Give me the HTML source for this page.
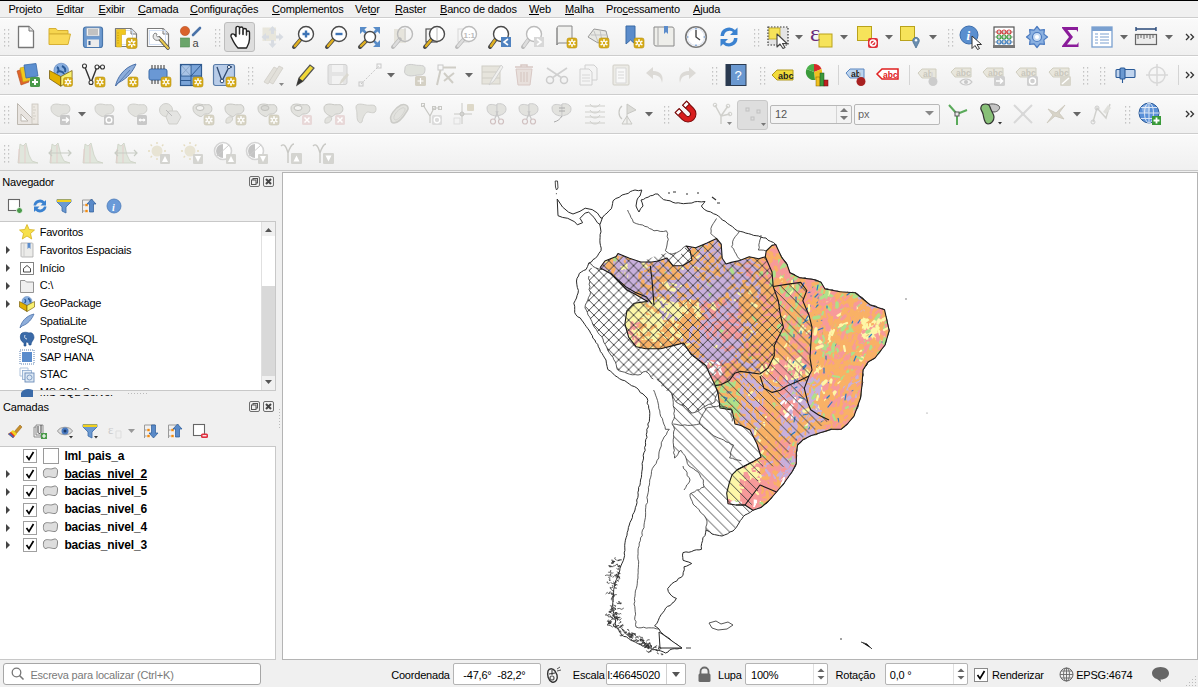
<!DOCTYPE html><html><head><meta charset="utf-8"><style>
*{box-sizing:border-box;margin:0;padding:0}
html,body{width:1198px;height:687px;overflow:hidden;background:#f0f0f0;font-family:"Liberation Sans",sans-serif;font-size:11px;color:#000}
.a{position:absolute}
.t{position:absolute;white-space:pre;line-height:13px;letter-spacing:-0.2px}
svg{position:absolute;overflow:visible}
</style></head><body><div class="a" style="left:0px;top:0px;width:1198px;height:1px;background:#000"></div>
<div class="a" style="left:0px;top:1px;width:1198px;height:16px;background:#f0f0f0"></div>
<div class="t" style="left:8.4px;top:2.5px;font-size:11px;color:#000;font-weight:normal;">Pro<u>j</u>eto</div>
<div class="t" style="left:56.5px;top:2.5px;font-size:11px;color:#000;font-weight:normal;"><u>E</u>ditar</div>
<div class="t" style="left:98.5px;top:2.5px;font-size:11px;color:#000;font-weight:normal;"><u>E</u>xibir</div>
<div class="t" style="left:138px;top:2.5px;font-size:11px;color:#000;font-weight:normal;"><u>C</u>amada</div>
<div class="t" style="left:190px;top:2.5px;font-size:11px;color:#000;font-weight:normal;"><u>C</u>onfigurações</div>
<div class="t" style="left:272px;top:2.5px;font-size:11px;color:#000;font-weight:normal;"><u>C</u>omplementos</div>
<div class="t" style="left:355px;top:2.5px;font-size:11px;color:#000;font-weight:normal;">Vet<u>o</u>r</div>
<div class="t" style="left:395px;top:2.5px;font-size:11px;color:#000;font-weight:normal;"><u>R</u>aster</div>
<div class="t" style="left:440px;top:2.5px;font-size:11px;color:#000;font-weight:normal;"><u>B</u>anco de dados</div>
<div class="t" style="left:529px;top:2.5px;font-size:11px;color:#000;font-weight:normal;"><u>W</u>eb</div>
<div class="t" style="left:565px;top:2.5px;font-size:11px;color:#000;font-weight:normal;"><u>M</u>alha</div>
<div class="t" style="left:606px;top:2.5px;font-size:11px;color:#000;font-weight:normal;">Pro<u>c</u>essamento</div>
<div class="t" style="left:693px;top:2.5px;font-size:11px;color:#000;font-weight:normal;"><u>A</u>juda</div>
<div class="a" style="left:0px;top:18px;width:1198px;height:37px;background:linear-gradient(#fafafa,#f0f0f0)"></div>
<div class="a" style="left:0px;top:17px;width:1198px;height:1px;background:#cdcdcd"></div>
<div class="a" style="left:0px;top:18px;width:1198px;height:1px;background:#fff"></div>
<div class="a" style="left:0px;top:56px;width:1198px;height:37px;background:linear-gradient(#fafafa,#f0f0f0)"></div>
<div class="a" style="left:0px;top:55px;width:1198px;height:1px;background:#cdcdcd"></div>
<div class="a" style="left:0px;top:56px;width:1198px;height:1px;background:#fff"></div>
<div class="a" style="left:0px;top:95px;width:1198px;height:37px;background:linear-gradient(#fafafa,#f0f0f0)"></div>
<div class="a" style="left:0px;top:94px;width:1198px;height:1px;background:#cdcdcd"></div>
<div class="a" style="left:0px;top:95px;width:1198px;height:1px;background:#fff"></div>
<div class="a" style="left:0px;top:134px;width:1198px;height:36px;background:linear-gradient(#fafafa,#f0f0f0)"></div>
<div class="a" style="left:0px;top:133px;width:1198px;height:1px;background:#cdcdcd"></div>
<div class="a" style="left:0px;top:134px;width:1198px;height:1px;background:#fff"></div>
<div class="a" style="left:0px;top:170px;width:1198px;height:1px;background:#c8c8c8"></div>
<div class="a" style="left:0px;top:171px;width:1198px;height:1px;background:#f0f0f0"></div>
<svg style="left:3.5px;top:28.5px" width="6" height="18"><rect x="0" y="0" width="1.2" height="1.6" fill="#c4c4c4"/><rect x="0" y="4" width="1.2" height="1.6" fill="#c4c4c4"/><rect x="0" y="8" width="1.2" height="1.6" fill="#c4c4c4"/><rect x="0" y="12" width="1.2" height="1.6" fill="#c4c4c4"/><rect x="0" y="16" width="1.2" height="1.6" fill="#c4c4c4"/><rect x="4" y="0" width="1.2" height="1.6" fill="#c4c4c4"/><rect x="4" y="4" width="1.2" height="1.6" fill="#c4c4c4"/><rect x="4" y="8" width="1.2" height="1.6" fill="#c4c4c4"/><rect x="4" y="12" width="1.2" height="1.6" fill="#c4c4c4"/><rect x="4" y="16" width="1.2" height="1.6" fill="#c4c4c4"/></svg>
<svg style="left:15.5px;top:24.5px" width="24" height="24" viewBox="0 0 24 24"><path d="M2.5 1.5H13L17.5 6V22.5H2.5Z" fill="#fff" stroke="#777" stroke-width="1.3" stroke-linejoin="round"/><path d="M13 1.5V6H17.5" fill="#e8e8e8" stroke="#777" stroke-width="1"/></svg>
<svg style="left:48.0px;top:24.5px" width="24" height="24" viewBox="0 0 24 24"><path d="M1 3.5H8L9.5 5.5H20V9H1Z" fill="#f6d54e" stroke="#d6b035" stroke-width="1"/><path d="M1 9H22.5L20 19.5H1Z" fill="#f9d957" stroke="#d6b035" stroke-width="1"/></svg>
<svg style="left:80.5px;top:24.5px" width="24" height="24" viewBox="0 0 24 24"><rect x="2.5" y="2" width="19" height="20.5" rx="2.5" fill="#6d9ad0" stroke="#4a77ac" stroke-width="1.2"/><rect x="5.5" y="3" width="13" height="8" fill="#f2f2f2" stroke="#8a9ab0" stroke-width=".5"/><path d="M7 5H17M7 7H17M7 9H17" stroke="#6a6a6a" stroke-width=".7"/><rect x="6" y="14.5" width="12" height="7.5" fill="#ececec"/><rect x="7.5" y="16" width="2" height="4" fill="#3a5f8f"/></svg>
<svg style="left:114.0px;top:24.5px" width="24" height="24" viewBox="0 0 24 24"><path d="M1.5 3.5H17L22.5 9V21.5H1.5Z" fill="#fff" stroke="#7a7a7a" stroke-width="1.2" stroke-linejoin="round"/><path d="M17 3.5V9H22.5" fill="#eee" stroke="#7a7a7a" stroke-width="1"/><rect x="3.5" y="5.5" width="15" height="14" fill="none" stroke="#c8d8f0" stroke-width=".8"/><path d="M2.5 4.5H11.5V9.5H7.5V22H2.5Z" fill="#f0c820" stroke="#d4a810" stroke-width=".6"/><path d="M3 8H5M3 10.5H5M3 13H5M3 15.5H5M3 18H5" stroke="#c89a08" stroke-width=".6"/><rect x="12.5" y="13" width="10.5" height="10.5" rx="2" fill="#d6ac18" stroke="#b89010" stroke-width="0.6"/><path d="M17.75 18.25L20.75 19.98M17.75 18.25L17.75 21.71M17.75 18.25L14.75 19.98M17.75 18.25L14.75 16.52M17.75 18.25L17.75 14.79M17.75 18.25L20.75 16.52" stroke="#fff" stroke-width="1.6" stroke-linecap="round"/><circle cx="17.75" cy="18.25" r="1.26" fill="#d6ac18"/></svg>
<svg style="left:146.0px;top:24.5px" width="24" height="24" viewBox="0 0 24 24"><path d="M1.5 3.5H17L22.5 9V21.5H1.5Z" fill="#fff" stroke="#7a7a7a" stroke-width="1.2" stroke-linejoin="round"/><path d="M17 3.5V9H22.5" fill="#eee" stroke="#7a7a7a" stroke-width="1"/><rect x="3.5" y="5.5" width="16" height="14" fill="none" stroke="#c8d8f0" stroke-width=".8"/><path d="M13 13L22 23" stroke="#444" stroke-width="3.6" stroke-linecap="round"/><path d="M13.5 13.5L22 23" stroke="#e8c850" stroke-width="2.2" stroke-linecap="round"/><path d="M9 8A4 4 0 1 0 14.5 13.5L13 11.5L11.5 12L10.5 10.5L11 9Z" fill="#e8e8e8" stroke="#888" stroke-width="1"/></svg>
<svg style="left:178.5px;top:24.5px" width="24" height="24" viewBox="0 0 24 24"><circle cx="6" cy="6" r="4.6" fill="#d9622b" stroke="#b54a1a" stroke-width=".6"/><path d="M14 10L21 3" stroke="#4a72a8" stroke-width="2.6" stroke-linecap="round"/><rect x="1.5" y="13" width="9" height="9" fill="#6aa56a" stroke="#4d874d" stroke-width=".6"/><text x="13.5" y="22" font-size="11" font-family="Liberation Sans" fill="#444">a</text></svg>
<svg style="left:215px;top:28.5px" width="6" height="18"><rect x="0" y="0" width="1.2" height="1.6" fill="#c4c4c4"/><rect x="0" y="4" width="1.2" height="1.6" fill="#c4c4c4"/><rect x="0" y="8" width="1.2" height="1.6" fill="#c4c4c4"/><rect x="0" y="12" width="1.2" height="1.6" fill="#c4c4c4"/><rect x="0" y="16" width="1.2" height="1.6" fill="#c4c4c4"/><rect x="4" y="0" width="1.2" height="1.6" fill="#c4c4c4"/><rect x="4" y="4" width="1.2" height="1.6" fill="#c4c4c4"/><rect x="4" y="8" width="1.2" height="1.6" fill="#c4c4c4"/><rect x="4" y="12" width="1.2" height="1.6" fill="#c4c4c4"/><rect x="4" y="16" width="1.2" height="1.6" fill="#c4c4c4"/></svg>
<div class="a" style="left:224px;top:22px;width:31px;height:30px;background:#dedede;border:1px solid #bdbdbd;border-radius:3px"></div>
<svg style="left:227.5px;top:24.5px" width="24" height="24" viewBox="0 0 24 24"><path d="M10 23C8 21 5 16 3 11.5C2.5 9.5 4.5 8 6.5 9.5L8 11.5V3C8 0.8 11.5 0.8 11.5 3V9V3.5C11.5 1.5 15 1.5 15 3.5V9.5V5C15 3 18.5 3 18.5 5V10V7.5C18.5 5.5 21.5 5.5 21.5 7.5V14C21.5 18 19.5 21 18.5 23Z" fill="#fff" stroke="#222" stroke-width="1.4" stroke-linejoin="round"/><path d="M11.5 9V4M15 9.5V5M18.5 10V7.5" stroke="#333" stroke-width="1.1"/></svg>
<svg style="left:259.5px;top:24.5px" width="24" height="24" viewBox="0 0 24 24"><rect x="2.5" y="2.5" width="13.5" height="13.5" fill="#e8e6dc"/><path d="M12.5 1L16.5 5.5H14V9H11V5.5H8.5Z M12.5 23L16.5 18.5H14V15H11V18.5H8.5Z M1.5 12L6 8V10.5H9V13.5H6V16Z M23.5 12L19 8V10.5H16V13.5H19V16Z" fill="#d8dce2"/></svg>
<svg style="left:292.0px;top:24.5px" width="24" height="24" viewBox="0 0 24 24"><path d="M8.75 14.25L2 22" stroke="#4a4a4a" stroke-width="4" stroke-linecap="round"/><path d="M7.75 15.25L3 21" stroke="#e0b020" stroke-width="2.4" stroke-linecap="round"/><circle cx="14" cy="9" r="7.5" fill="#fff" stroke="#4a4a4a" stroke-width="1.4"/><path d="M10.5 9H17.5M14 5.5V12.5" stroke="#3e74b6" stroke-width="2.4"/></svg>
<svg style="left:325.0px;top:24.5px" width="24" height="24" viewBox="0 0 24 24"><path d="M8.75 14.25L2 22" stroke="#4a4a4a" stroke-width="4" stroke-linecap="round"/><path d="M7.75 15.25L3 21" stroke="#e0b020" stroke-width="2.4" stroke-linecap="round"/><circle cx="14" cy="9" r="7.5" fill="#fff" stroke="#4a4a4a" stroke-width="1.4"/><path d="M10.5 9H17.5" stroke="#3e74b6" stroke-width="2.4"/></svg>
<svg style="left:358.0px;top:24.5px" width="24" height="24" viewBox="0 0 24 24"><path d="M2 2H9L2 9Z M22 2H15L22 9Z M22 22H15L22 15Z" fill="#5a8dc8"/><path d="M3 3L8 8M21 3L16 8M21 21L16 16" stroke="#5a8dc8" stroke-width="2.5"/><path d="M8.15 15.85L2 22" stroke="#4a4a4a" stroke-width="4" stroke-linecap="round"/><path d="M7.15 16.85L3 21" stroke="#e0b020" stroke-width="2.4" stroke-linecap="round"/><circle cx="12" cy="12" r="5.5" fill="#fff" stroke="#4a4a4a" stroke-width="1.4"/></svg>
<svg style="left:390.5px;top:24.5px" width="24" height="24" viewBox="0 0 24 24"><rect x="3" y="4" width="12" height="14" fill="#e6e4dc"/><path d="M8.75 14.25L2 22" stroke="#bbb" stroke-width="4" stroke-linecap="round"/><path d="M7.75 15.25L3 21" stroke="#ddd" stroke-width="2.4" stroke-linecap="round"/><circle cx="14" cy="9" r="7.5" fill="none" stroke="#bbb" stroke-width="1.4"/><path d="M14 3V15" stroke="#ccc" stroke-width="1"/></svg>
<svg style="left:423.0px;top:24.5px" width="24" height="24" viewBox="0 0 24 24"><rect x="3" y="4" width="11" height="13" fill="none" stroke="#555" stroke-width="1.2"/><path d="M8.75 14.25L2 22" stroke="#4a4a4a" stroke-width="4" stroke-linecap="round"/><path d="M7.75 15.25L3 21" stroke="#e0b020" stroke-width="2.4" stroke-linecap="round"/><circle cx="14" cy="9" r="7.5" fill="#fff" stroke="#4a4a4a" stroke-width="1.4"/><path d="M14 3V15" stroke="#bbb" stroke-width="1"/></svg>
<svg style="left:455.0px;top:24.5px" width="24" height="24" viewBox="0 0 24 24"><rect x="3" y="4" width="11" height="13" fill="none" stroke="#ddd" stroke-width="1.2"/><path d="M8.75 14.25L2 22" stroke="#bbb" stroke-width="4" stroke-linecap="round"/><path d="M7.75 15.25L3 21" stroke="#ddd" stroke-width="2.4" stroke-linecap="round"/><circle cx="14" cy="9" r="7.5" fill="#fff" stroke="#bbb" stroke-width="1.4"/><text x="8.5" y="12.5" font-size="8" font-family="Liberation Sans" font-weight="bold" fill="#bbb">1:1</text></svg>
<svg style="left:488.0px;top:24.5px" width="24" height="24" viewBox="0 0 24 24"><path d="M7.75 14.25L2 22" stroke="#4a4a4a" stroke-width="4" stroke-linecap="round"/><path d="M6.75 15.25L3 21" stroke="#e0b020" stroke-width="2.4" stroke-linecap="round"/><circle cx="13" cy="9" r="7.5" fill="#fff" stroke="#4a4a4a" stroke-width="1.4"/><rect x="13" y="12" width="10" height="10" fill="#4f82c0"/><path d="M20 14L16 17L20 20" fill="none" stroke="#fff" stroke-width="1.6"/></svg>
<svg style="left:521.0px;top:24.5px" width="24" height="24" viewBox="0 0 24 24"><path d="M7.75 14.25L2 22" stroke="#bbb" stroke-width="4" stroke-linecap="round"/><path d="M6.75 15.25L3 21" stroke="#ddd" stroke-width="2.4" stroke-linecap="round"/><circle cx="13" cy="9" r="7.5" fill="#fff" stroke="#bbb" stroke-width="1.4"/><rect x="13" y="12" width="10" height="10" fill="#d8d8d8"/><path d="M16 14L20 17L16 20" fill="none" stroke="#fff" stroke-width="1.6"/></svg>
<svg style="left:554.0px;top:24.5px" width="24" height="24" viewBox="0 0 24 24"><path d="M3 3C3 1 5 1 5 1H18V18H5C3 18 3 20 3 20Z" fill="#f0f0ee" stroke="#888" stroke-width="1"/><path d="M3 3V20" stroke="#888"/><rect x="13" y="13" width="10" height="10" rx="2" fill="#d6ac18" stroke="#b89010" stroke-width="0.6"/><path d="M18.00 18.00L20.86 19.65M18.00 18.00L18.00 21.30M18.00 18.00L15.14 19.65M18.00 18.00L15.14 16.35M18.00 18.00L18.00 14.70M18.00 18.00L20.86 16.35" stroke="#fff" stroke-width="1.6" stroke-linecap="round"/><circle cx="18.0" cy="18.0" r="1.20" fill="#d6ac18"/></svg>
<svg style="left:586.0px;top:24.5px" width="24" height="24" viewBox="0 0 24 24"><path d="M2 12L8 4L20 6L22 14L12 18Z" fill="#e8e8e4" stroke="#999" stroke-width="1"/><path d="M5 10L20 10M8 6L12 17M14 5L16 16" stroke="#bbb" stroke-width=".8"/><rect x="13" y="13" width="10" height="10" rx="2" fill="#d6ac18" stroke="#b89010" stroke-width="0.6"/><path d="M18.00 18.00L20.86 19.65M18.00 18.00L18.00 21.30M18.00 18.00L15.14 19.65M18.00 18.00L15.14 16.35M18.00 18.00L18.00 14.70M18.00 18.00L20.86 16.35" stroke="#fff" stroke-width="1.6" stroke-linecap="round"/><circle cx="18.0" cy="18.0" r="1.20" fill="#d6ac18"/></svg>
<svg style="left:622.0px;top:24.5px" width="24" height="24" viewBox="0 0 24 24"><path d="M4 1H13V19L8.5 15L4 19Z" fill="#5b8ccb" stroke="#3b6aa5" stroke-width="1"/><rect x="12" y="13" width="10" height="10" rx="2" fill="#d6ac18" stroke="#b89010" stroke-width="0.6"/><path d="M17.00 18.00L19.86 19.65M17.00 18.00L17.00 21.30M17.00 18.00L14.14 19.65M17.00 18.00L14.14 16.35M17.00 18.00L17.00 14.70M17.00 18.00L19.86 16.35" stroke="#fff" stroke-width="1.6" stroke-linecap="round"/><circle cx="17.0" cy="18.0" r="1.20" fill="#d6ac18"/></svg>
<svg style="left:652.0px;top:24.5px" width="24" height="24" viewBox="0 0 24 24"><path d="M2 2H20C22 2 22 4 22 4V21H4C2 21 2 19 2 19Z" fill="#eeeeea" stroke="#888" stroke-width="1"/><path d="M6 2V20" stroke="#aaa" stroke-width="1"/><path d="M12 1H16V9L14 7L12 9Z" fill="#5b8ccb"/></svg>
<svg style="left:684.0px;top:24.5px" width="24" height="24" viewBox="0 0 24 24"><circle cx="12" cy="12" r="10.3" fill="#fff" stroke="#7a7a7a" stroke-width="1.6"/><circle cx="12" cy="12" r="8.5" fill="none" stroke="#d0d8e8" stroke-width=".8"/><path d="M12 5V12L16 15" fill="none" stroke="#444" stroke-width="1.4"/><path d="M12 3V4.5M12 19.5V21M3 12H4.5M19.5 12H21" stroke="#5a8dc8" stroke-width="1.2"/></svg>
<svg style="left:717.0px;top:24.5px" width="24" height="24" viewBox="0 0 24 24"><path d="M3.5 11A8.5 8.5 0 0 1 18 5L20.5 2.5V10H13L16 7A5.5 5.5 0 0 0 7 11Z" fill="#3b82d0"/><path d="M20.5 13A8.5 8.5 0 0 1 6 19L3.5 21.5V14H11L8 17A5.5 5.5 0 0 0 17 13Z" fill="#3b82d0"/></svg>
<svg style="left:754px;top:28.5px" width="6" height="18"><rect x="0" y="0" width="1.2" height="1.6" fill="#c4c4c4"/><rect x="0" y="4" width="1.2" height="1.6" fill="#c4c4c4"/><rect x="0" y="8" width="1.2" height="1.6" fill="#c4c4c4"/><rect x="0" y="12" width="1.2" height="1.6" fill="#c4c4c4"/><rect x="0" y="16" width="1.2" height="1.6" fill="#c4c4c4"/><rect x="4" y="0" width="1.2" height="1.6" fill="#c4c4c4"/><rect x="4" y="4" width="1.2" height="1.6" fill="#c4c4c4"/><rect x="4" y="8" width="1.2" height="1.6" fill="#c4c4c4"/><rect x="4" y="12" width="1.2" height="1.6" fill="#c4c4c4"/><rect x="4" y="16" width="1.2" height="1.6" fill="#c4c4c4"/></svg>
<svg style="left:766.0px;top:24.5px" width="24" height="24" viewBox="0 0 24 24"><rect x="2" y="2" width="20" height="18" fill="#e4e4e4" stroke="#333" stroke-width="1.2" stroke-dasharray="1.5 1.5"/><rect x="3" y="3" width="11" height="11" fill="#f6e35a" stroke="#b9a21b" stroke-width=".8"/><path d="M11 9L11 22L14 19L17 23.5L19 22.5L16.5 18.5H21Z" fill="#fff" stroke="#444" stroke-width="1.1" stroke-linejoin="round"/></svg>
<svg style="left:795px;top:34.5px" width="8" height="5"><path d="M0 0H8L4 4.5Z" fill="#666"/></svg>
<svg style="left:810.0px;top:24.5px" width="24" height="24" viewBox="0 0 24 24"><rect x="9" y="9" width="13" height="13" fill="#f6e35a" stroke="#b9a21b" stroke-width="1"/><text x="0" y="15.5" font-size="24" font-family="Liberation Serif" fill="#6a2e7a">&#949;</text></svg>
<svg style="left:840px;top:34.5px" width="8" height="5"><path d="M0 0H8L4 4.5Z" fill="#666"/></svg>
<svg style="left:856.0px;top:24.5px" width="24" height="24" viewBox="0 0 24 24"><rect x="1.5" y="1.5" width="14" height="14" fill="#f6e35a" stroke="#b9a21b" stroke-width="1"/><rect x="12" y="13" width="10" height="10" rx="2" fill="#e0303a"/><circle cx="17" cy="18" r="3" fill="none" stroke="#fff" stroke-width="1.3"/><path d="M15 20L19 16" stroke="#fff" stroke-width="1.3"/></svg>
<svg style="left:885px;top:34.5px" width="8" height="5"><path d="M0 0H8L4 4.5Z" fill="#666"/></svg>
<svg style="left:899.0px;top:24.5px" width="24" height="24" viewBox="0 0 24 24"><rect x="1.5" y="1.5" width="14" height="14" fill="#f6e35a" stroke="#b9a21b" stroke-width="1"/><path d="M17 23L14 17A3.3 3.3 0 1 1 20 17Z" fill="#6a8eb0" stroke="#4a6e90" stroke-width=".8"/><circle cx="17" cy="15.3" r="1.2" fill="#fff"/></svg>
<svg style="left:929px;top:34.5px" width="8" height="5"><path d="M0 0H8L4 4.5Z" fill="#666"/></svg>
<svg style="left:947.5px;top:28.5px" width="6" height="18"><rect x="0" y="0" width="1.2" height="1.6" fill="#c4c4c4"/><rect x="0" y="4" width="1.2" height="1.6" fill="#c4c4c4"/><rect x="0" y="8" width="1.2" height="1.6" fill="#c4c4c4"/><rect x="0" y="12" width="1.2" height="1.6" fill="#c4c4c4"/><rect x="0" y="16" width="1.2" height="1.6" fill="#c4c4c4"/><rect x="4" y="0" width="1.2" height="1.6" fill="#c4c4c4"/><rect x="4" y="4" width="1.2" height="1.6" fill="#c4c4c4"/><rect x="4" y="8" width="1.2" height="1.6" fill="#c4c4c4"/><rect x="4" y="12" width="1.2" height="1.6" fill="#c4c4c4"/><rect x="4" y="16" width="1.2" height="1.6" fill="#c4c4c4"/></svg>
<svg style="left:959.0px;top:24.5px" width="24" height="24" viewBox="0 0 24 24"><circle cx="10" cy="10" r="9" fill="#5a8fcf" stroke="#3b6cab" stroke-width="1"/><text x="7.5" y="15" font-size="13" font-family="Liberation Serif" font-style="italic" font-weight="bold" fill="#fff">i</text><path d="M13 11V23.5L16 20.5L18.5 24.5L20.5 23.5L18 19.5H22.5Z" fill="#fff" stroke="#333" stroke-width="1" stroke-linejoin="round"/></svg>
<svg style="left:992.0px;top:24.5px" width="24" height="24" viewBox="0 0 24 24"><rect x="2" y="2" width="20" height="19" fill="#fff" stroke="#555" stroke-width="1.2"/><rect x="1" y="20" width="22" height="3" fill="#777"/><path d="M2 7H22M2 12H22M2 17H22" stroke="#888" stroke-width=".8"/><circle cx="7" cy="7" r="2" fill="none" stroke="#d04040" stroke-width="1.2"/><circle cx="12" cy="7" r="2" fill="none" stroke="#d04040" stroke-width="1.2"/><circle cx="17" cy="7" r="2" fill="none" stroke="#d04040" stroke-width="1.2"/><circle cx="7" cy="12" r="2" fill="none" stroke="#40a040" stroke-width="1.2"/><circle cx="12" cy="12" r="2" fill="none" stroke="#40a040" stroke-width="1.2"/><circle cx="17" cy="12" r="2" fill="none" stroke="#40a040" stroke-width="1.2"/><circle cx="7" cy="17" r="2" fill="none" stroke="#4080c0" stroke-width="1.2"/><circle cx="12" cy="17" r="2" fill="none" stroke="#4080c0" stroke-width="1.2"/><circle cx="17" cy="17" r="2" fill="none" stroke="#4080c0" stroke-width="1.2"/></svg>
<svg style="left:1025.0px;top:24.5px" width="24" height="24" viewBox="0 0 24 24"><path d="M12.0 1.5 L14.9 5.1 L19.4 4.6 L18.9 9.1 L22.5 12.0 L18.9 14.9 L19.4 19.4 L14.9 18.9 L12.0 22.5 L9.1 18.9 L4.6 19.4 L5.1 14.9 L1.5 12.0 L5.1 9.1 L4.6 4.6 L9.1 5.1Z" fill="#8ab0e0" stroke="#4a7ac0" stroke-width="1.2" stroke-linejoin="round"/><circle cx="12" cy="12" r="4.5" fill="#c8dcf4" stroke="#4a7ac0" stroke-width="1.2"/><circle cx="12" cy="12" r="2" fill="#fff"/></svg>
<svg style="left:1057.5px;top:24.5px" width="24" height="24" viewBox="0 0 24 24"><path d="M4 2H20V7L18.5 5H9.5L15 12L9 19.5H19L20.5 17V22H4V21L11 12L4 3Z" fill="#8a1c9a"/></svg>
<svg style="left:1090.0px;top:24.5px" width="24" height="24" viewBox="0 0 24 24"><rect x="2" y="2" width="20" height="20" fill="#fff" stroke="#7aa0d0" stroke-width="1.3"/><rect x="2" y="2" width="20" height="4" fill="#7aa0d0"/><path d="M5 9H8M10 9H19M5 12H8M10 12H19M5 15H8M10 15H19M5 18H8M10 18H19" stroke="#7aa0d0" stroke-width="1.2"/></svg>
<svg style="left:1120px;top:34.5px" width="8" height="5"><path d="M0 0H8L4 4.5Z" fill="#666"/></svg>
<svg style="left:1134.0px;top:24.5px" width="24" height="24" viewBox="0 0 24 24"><path d="M2 4H22M2 2V6M22 2V6" stroke="#2a4a7a" stroke-width="1.4"/><rect x="1.5" y="9.5" width="21" height="10" fill="#ececec" stroke="#666" stroke-width="1.2"/><path d="M4 10V14M7 10V13M10 10V14M13 10V13M16 10V14M19 10V13" stroke="#666" stroke-width="1"/></svg>
<svg style="left:1165px;top:34.5px" width="8" height="5"><path d="M0 0H8L4 4.5Z" fill="#666"/></svg>
<svg style="left:1184.5px;top:32.5px" width="10" height="8"><path d="M1 1L4 4L1 7M5.5 1L8.5 4L5.5 7" fill="none" stroke="#333" stroke-width="1.3"/></svg>
<svg style="left:3.5px;top:67px" width="6" height="18"><rect x="0" y="0" width="1.2" height="1.6" fill="#c4c4c4"/><rect x="0" y="4" width="1.2" height="1.6" fill="#c4c4c4"/><rect x="0" y="8" width="1.2" height="1.6" fill="#c4c4c4"/><rect x="0" y="12" width="1.2" height="1.6" fill="#c4c4c4"/><rect x="0" y="16" width="1.2" height="1.6" fill="#c4c4c4"/><rect x="4" y="0" width="1.2" height="1.6" fill="#c4c4c4"/><rect x="4" y="4" width="1.2" height="1.6" fill="#c4c4c4"/><rect x="4" y="8" width="1.2" height="1.6" fill="#c4c4c4"/><rect x="4" y="12" width="1.2" height="1.6" fill="#c4c4c4"/><rect x="4" y="16" width="1.2" height="1.6" fill="#c4c4c4"/></svg>
<svg style="left:16.0px;top:63.0px" width="24" height="24" viewBox="0 0 24 24"><path d="M1 8L9 5L13 19L5 22Z" fill="#e0642a" stroke="#b04a1a" stroke-width=".6"/><path d="M4 5L12 3L15 17L7 19Z" fill="#f2c81e" stroke="#c09a10" stroke-width=".6"/><path d="M8 2L20 0.5L22 13L10 15Z" fill="#5c8fd0" stroke="#3a6aa8" stroke-width=".8"/><rect x="14" y="14" width="10" height="10" rx="1.5" fill="#4a9a4a"/><path d="M19 16V22M16 19H22" stroke="#fff" stroke-width="2"/></svg>
<svg style="left:48.5px;top:63.0px" width="24" height="24" viewBox="0 0 24 24"><circle cx="12.2" cy="7.5" r="7.3" fill="#8ab0e0" stroke="#5a80b8" stroke-width=".6"/><path d="M8 4C10 5 10 8 8 10M13 3C15 4 17 6 16 9M10 8C12 9 14 8 15 11" stroke="#2a5a98" stroke-width="2" fill="none"/><path d="M0.5 7.5L11.8 13.6V23.2L0.5 15.8Z" fill="#e2b000" stroke="#6a5000" stroke-width=".7"/><path d="M11.8 13.6L23.1 7.5V15.8L11.8 23.2Z" fill="#f8f070" stroke="#6a5000" stroke-width=".7"/><rect x="14.5" y="14.5" width="9" height="9" rx="2" fill="#d6ac18" stroke="#b89010" stroke-width="0.6"/><path d="M19.00 19.00L21.57 20.48M19.00 19.00L19.00 21.97M19.00 19.00L16.43 20.48M19.00 19.00L16.43 17.52M19.00 19.00L19.00 16.03M19.00 19.00L21.57 17.51" stroke="#fff" stroke-width="1.6" stroke-linecap="round"/><circle cx="19.0" cy="19.0" r="1.08" fill="#d6ac18"/></svg>
<svg style="left:81.0px;top:63.0px" width="24" height="24" viewBox="0 0 24 24"><path d="M3.5 3L10 19.5L16 4H21" fill="none" stroke="#333" stroke-width="1.4"/><circle cx="3.5" cy="3" r="2" fill="#fff" stroke="#333" stroke-width="1.1"/><circle cx="10" cy="19.5" r="2" fill="#fff" stroke="#333" stroke-width="1.1"/><circle cx="16" cy="4" r="2" fill="#fff" stroke="#333" stroke-width="1.1"/><circle cx="21.5" cy="4" r="2" fill="#fff" stroke="#333" stroke-width="1.1"/><rect x="14" y="14" width="10" height="10" rx="2" fill="#d6ac18" stroke="#b89010" stroke-width="0.6"/><path d="M19.00 19.00L21.86 20.65M19.00 19.00L19.00 22.30M19.00 19.00L16.14 20.65M19.00 19.00L16.14 17.35M19.00 19.00L19.00 15.70M19.00 19.00L21.86 17.35" stroke="#fff" stroke-width="1.6" stroke-linecap="round"/><circle cx="19.0" cy="19.0" r="1.20" fill="#d6ac18"/></svg>
<svg style="left:113.5px;top:63.0px" width="24" height="24" viewBox="0 0 24 24"><path d="M1.5 23C3 15 10 4 22 1C19 8 14 15 4 20Z" fill="#8eaedb" stroke="#4a70a8" stroke-width="1"/><path d="M1.5 23L16 7" stroke="#4a70a8" stroke-width=".8"/><rect x="14" y="14" width="10" height="10" rx="2" fill="#d6ac18" stroke="#b89010" stroke-width="0.6"/><path d="M19.00 19.00L21.86 20.65M19.00 19.00L19.00 22.30M19.00 19.00L16.14 20.65M19.00 19.00L16.14 17.35M19.00 19.00L19.00 15.70M19.00 19.00L21.86 17.35" stroke="#fff" stroke-width="1.6" stroke-linecap="round"/><circle cx="19.0" cy="19.0" r="1.20" fill="#d6ac18"/></svg>
<svg style="left:146.5px;top:63.0px" width="24" height="24" viewBox="0 0 24 24"><rect x="2" y="6" width="18" height="11" rx="2" fill="#6a98d4" stroke="#3a6aa8" stroke-width="1"/><path d="M5 2V6M8 2V6M11 2V6M14 2V6M17 2V6M5 17V21M8 17V21M11 17V21" stroke="#333" stroke-width="1"/><rect x="14" y="14" width="10" height="10" rx="2" fill="#d6ac18" stroke="#b89010" stroke-width="0.6"/><path d="M19.00 19.00L21.86 20.65M19.00 19.00L19.00 22.30M19.00 19.00L16.14 20.65M19.00 19.00L16.14 17.35M19.00 19.00L19.00 15.70M19.00 19.00L21.86 17.35" stroke="#fff" stroke-width="1.6" stroke-linecap="round"/><circle cx="19.0" cy="19.0" r="1.20" fill="#d6ac18"/></svg>
<svg style="left:179.0px;top:63.0px" width="24" height="24" viewBox="0 0 24 24"><rect x="1.5" y="1.5" width="21" height="21" fill="#7aa4d8" stroke="#2f5a90" stroke-width="1.2"/><path d="M1.5 13H22.5M12 1.5V22.5M1.5 17.5H12M1.5 1.5L12 13M12 1.5L1.5 13M12 13L22.5 1.5" stroke="#2f5a90" stroke-width="1"/><rect x="2.5" y="2.5" width="9" height="10" fill="#c8daf0" opacity=".6"/><rect x="14" y="14" width="10" height="10" rx="2" fill="#d6ac18" stroke="#b89010" stroke-width="0.6"/><path d="M19.00 19.00L21.86 20.65M19.00 19.00L19.00 22.30M19.00 19.00L16.14 20.65M19.00 19.00L16.14 17.35M19.00 19.00L19.00 15.70M19.00 19.00L21.86 17.35" stroke="#fff" stroke-width="1.6" stroke-linecap="round"/><circle cx="19.0" cy="19.0" r="1.20" fill="#d6ac18"/></svg>
<svg style="left:211.5px;top:63.0px" width="24" height="24" viewBox="0 0 24 24"><rect x="1.5" y="1.5" width="21" height="21" rx="2" fill="#b8cce8" stroke="#5a7ca8" stroke-width="1.2"/><path d="M5 4L10 18L17 4H20" fill="none" stroke="#2f4a70" stroke-width="1.3"/><circle cx="10" cy="18" r="1.8" fill="#fff" stroke="#2f4a70"/><circle cx="17" cy="4" r="1.6" fill="#fff" stroke="#2f4a70"/><rect x="14" y="14" width="10" height="10" rx="2" fill="#d6ac18" stroke="#b89010" stroke-width="0.6"/><path d="M19.00 19.00L21.86 20.65M19.00 19.00L19.00 22.30M19.00 19.00L16.14 20.65M19.00 19.00L16.14 17.35M19.00 19.00L19.00 15.70M19.00 19.00L21.86 17.35" stroke="#fff" stroke-width="1.6" stroke-linecap="round"/><circle cx="19.0" cy="19.0" r="1.20" fill="#d6ac18"/></svg>
<svg style="left:247.5px;top:67px" width="6" height="18"><rect x="0" y="0" width="1.2" height="1.6" fill="#c4c4c4"/><rect x="0" y="4" width="1.2" height="1.6" fill="#c4c4c4"/><rect x="0" y="8" width="1.2" height="1.6" fill="#c4c4c4"/><rect x="0" y="12" width="1.2" height="1.6" fill="#c4c4c4"/><rect x="0" y="16" width="1.2" height="1.6" fill="#c4c4c4"/><rect x="4" y="0" width="1.2" height="1.6" fill="#c4c4c4"/><rect x="4" y="4" width="1.2" height="1.6" fill="#c4c4c4"/><rect x="4" y="8" width="1.2" height="1.6" fill="#c4c4c4"/><rect x="4" y="12" width="1.2" height="1.6" fill="#c4c4c4"/><rect x="4" y="16" width="1.2" height="1.6" fill="#c4c4c4"/></svg>
<svg style="left:261.5px;top:63.0px" width="24" height="24" viewBox="0 0 24 24"><path d="M2 19L12 4L16 6L6 21Z" fill="#e2e0da" stroke="#cfcdc6" stroke-width=".8"/><path d="M7 19L17 3L21 5L11 21Z" fill="#e2e0da" stroke="#cfcdc6" stroke-width=".8"/><path d="M17 20H22L19.5 23Z" fill="#888"/></svg>
<svg style="left:292.5px;top:63.0px" width="24" height="24" viewBox="0 0 24 24"><path d="M4 22L6 15L17 2L21 5L10 18Z" fill="#f0d838" stroke="#555" stroke-width="1.2"/><path d="M4 22L6 15L10 18Z" fill="#333"/></svg>
<svg style="left:325.5px;top:63.0px" width="24" height="24" viewBox="0 0 24 24"><rect x="2" y="1.5" width="19" height="20" rx="2" fill="#e4e4e4" stroke="#d0d0d0" stroke-width="1"/><rect x="6" y="2" width="11" height="7" fill="#f2f2f2"/><rect x="6" y="13" width="11" height="8" fill="#f2f2f2"/><path d="M13 22L15 17L21 10L23 12L17 19Z" fill="#dad8d0"/></svg>
<svg style="left:358.0px;top:63.0px" width="24" height="24" viewBox="0 0 24 24"><path d="M3 21L21 3" stroke="#c8c8c8" stroke-width="1" stroke-dasharray="2 1.5"/><rect x="1" y="19" width="4" height="4" fill="none" stroke="#c8c8c8"/><rect x="19" y="1" width="4" height="4" fill="none" stroke="#c8c8c8"/></svg>
<svg style="left:387px;top:73px" width="8" height="5"><path d="M0 0H8L4 4.5Z" fill="#666"/></svg>
<svg style="left:403.0px;top:63.0px" width="24" height="24" viewBox="0 0 24 24"><path d="M2 5C2 1 8 1 12 2S22 1 22 6S20 12 16 12S8 14 4 12S2 8 2 5Z" fill="#e0e2dc" stroke="#ccc" stroke-width="1"/><rect x="12" y="13" width="11" height="10" rx="1.5" fill="#d4d0c4"/><path d="M17.5 15V21M14.5 18H20.5" stroke="#fff" stroke-width="1.2"/></svg>
<svg style="left:435.0px;top:63.0px" width="24" height="24" viewBox="0 0 24 24"><rect x="3" y="2" width="5" height="5" fill="none" stroke="#c8c8c8" stroke-width="1"/><path d="M8 4.5H21M5.5 7L2 22M9 10L18 20M9 18L19 10" stroke="#cfcdc6" stroke-width="2"/></svg>
<svg style="left:465px;top:73px" width="8" height="5"><path d="M0 0H8L4 4.5Z" fill="#666"/></svg>
<svg style="left:479.5px;top:63.0px" width="24" height="24" viewBox="0 0 24 24"><rect x="2" y="3" width="18" height="18" fill="#e6e4dc" stroke="#d0cec6"/><path d="M2 9H20M2 15H20" stroke="#d0cec6"/><path d="M9 22L12 16L21 2L23 4L14 18Z" fill="#f0f0ee" stroke="#ccc" stroke-width=".8"/></svg>
<svg style="left:511.5px;top:63.0px" width="24" height="24" viewBox="0 0 24 24"><path d="M3 4H21M9 4V2H15V4" stroke="#d8c8c4" stroke-width="1.5" fill="none"/><path d="M4 6H20L18 22H6Z" fill="#e8e0dc" stroke="#d8c8c4" stroke-width="1"/><path d="M9 9V19M12 9V19M15 9V19" stroke="#d8c8c4" stroke-width="1.2"/></svg>
<svg style="left:544.5px;top:63.0px" width="24" height="24" viewBox="0 0 24 24"><circle cx="5" cy="17" r="3.5" fill="none" stroke="#ccc" stroke-width="1.5"/><circle cx="19" cy="17" r="3.5" fill="none" stroke="#ccc" stroke-width="1.5"/><path d="M7 15L22 5M17 15L2 5" stroke="#d0d0d0" stroke-width="1.6"/></svg>
<svg style="left:577.0px;top:63.0px" width="24" height="24" viewBox="0 0 24 24"><path d="M8 2H17L20 5V17H8Z" fill="#f4f4f4" stroke="#d0d0d0"/><path d="M3 6H12L15 9V22H3Z" fill="#f4f4f4" stroke="#d0d0d0"/><path d="M5 12H13M5 15H13M5 18H13" stroke="#d8d8d8"/></svg>
<svg style="left:610.0px;top:63.0px" width="24" height="24" viewBox="0 0 24 24"><rect x="3" y="2" width="16" height="20" rx="1" fill="#ecebe6" stroke="#d0cec6"/><path d="M6 5H16V20H6Z" fill="#f8f8f8" stroke="#d8d8d8"/><path d="M8 9H14M8 12H14M8 15H14" stroke="#d8d8d8"/></svg>
<svg style="left:642.5px;top:63.0px" width="24" height="24" viewBox="0 0 24 24"><path d="M10 4L3 10L10 16V12C15 12 18 14 19 20C21 13 18 8 10 8Z" fill="#dcdad6"/></svg>
<svg style="left:675.0px;top:63.0px" width="24" height="24" viewBox="0 0 24 24"><path d="M14 4L21 10L14 16V12C9 12 6 14 5 20C3 13 6 8 14 8Z" fill="#dcdad6"/></svg>
<svg style="left:711.5px;top:67px" width="6" height="18"><rect x="0" y="0" width="1.2" height="1.6" fill="#c4c4c4"/><rect x="0" y="4" width="1.2" height="1.6" fill="#c4c4c4"/><rect x="0" y="8" width="1.2" height="1.6" fill="#c4c4c4"/><rect x="0" y="12" width="1.2" height="1.6" fill="#c4c4c4"/><rect x="0" y="16" width="1.2" height="1.6" fill="#c4c4c4"/><rect x="4" y="0" width="1.2" height="1.6" fill="#c4c4c4"/><rect x="4" y="4" width="1.2" height="1.6" fill="#c4c4c4"/><rect x="4" y="8" width="1.2" height="1.6" fill="#c4c4c4"/><rect x="4" y="12" width="1.2" height="1.6" fill="#c4c4c4"/><rect x="4" y="16" width="1.2" height="1.6" fill="#c4c4c4"/></svg>
<svg style="left:724.0px;top:63.0px" width="24" height="24" viewBox="0 0 24 24"><rect x="2" y="1.5" width="20" height="21" fill="#6a98d0" stroke="#2a3a50" stroke-width="1"/><rect x="2" y="1.5" width="5" height="21" fill="#2a3a50"/><text x="10.5" y="17" font-size="13" font-family="Liberation Sans" fill="#fff">?</text></svg>
<svg style="left:760px;top:67px" width="6" height="18"><rect x="0" y="0" width="1.2" height="1.6" fill="#c4c4c4"/><rect x="0" y="4" width="1.2" height="1.6" fill="#c4c4c4"/><rect x="0" y="8" width="1.2" height="1.6" fill="#c4c4c4"/><rect x="0" y="12" width="1.2" height="1.6" fill="#c4c4c4"/><rect x="0" y="16" width="1.2" height="1.6" fill="#c4c4c4"/><rect x="4" y="0" width="1.2" height="1.6" fill="#c4c4c4"/><rect x="4" y="4" width="1.2" height="1.6" fill="#c4c4c4"/><rect x="4" y="8" width="1.2" height="1.6" fill="#c4c4c4"/><rect x="4" y="12" width="1.2" height="1.6" fill="#c4c4c4"/><rect x="4" y="16" width="1.2" height="1.6" fill="#c4c4c4"/></svg>
<svg style="left:771.0px;top:63.0px" width="24" height="24" viewBox="0 0 24 24"><path d="M1 12L6 7H22V17H6Z" fill="#f2dc3a" stroke="#b09820" stroke-width="1"/><text x="7" y="15.5" font-size="9" font-family="Liberation Sans" font-weight="bold" fill="#222">abc</text></svg>
<svg style="left:805.0px;top:63.0px" width="24" height="24" viewBox="0 0 24 24"><path d="M9 9L9 1A8 8 0 0 1 16.5 6Z" fill="#d42a2a"/><path d="M9 9L16.5 6A8 8 0 0 1 10 17Z" fill="#f0c020"/><path d="M9 9L10 17A8 8 0 0 1 1.5 6Z" fill="#3a9a3a"/><path d="M9 9L1.5 6A8 8 0 0 1 9 1Z" fill="#4ab04a"/><rect x="11" y="14" width="4" height="9" fill="#f0c020" stroke="#806000" stroke-width=".5"/><rect x="15" y="10" width="4" height="13" fill="#3a9a3a" stroke="#205020" stroke-width=".5"/><rect x="19" y="17" width="4" height="6" fill="#c02020" stroke="#601010" stroke-width=".5"/></svg>
<div class="a" style="left:837.5px;top:65px;width:1px;height:20px;background:#d4d4d4"></div>
<svg style="left:844.5px;top:63.0px" width="24" height="24" viewBox="0 0 24 24"><path d="M1 10L5 6H19V15H5Z" fill="#bcd4ee" stroke="#5a86c0" stroke-width="1"/><text x="6" y="13.5" font-size="8.5" font-family="Liberation Sans" font-weight="bold" fill="#222">ab</text><path d="M15 9V16" stroke="#ccc" stroke-width="1.5"/><circle cx="16" cy="18.5" r="4.5" fill="#a82020"/></svg>
<svg style="left:875.5px;top:63.0px" width="24" height="24" viewBox="0 0 24 24"><path d="M1 11L6 6H22V16H6Z" fill="#fff" stroke="#e02020" stroke-width="1.5"/><text x="7" y="14.5" font-size="8.5" font-family="Liberation Sans" font-weight="bold" fill="#e02020">abc</text></svg>
<div class="a" style="left:909px;top:65px;width:1px;height:20px;background:#d4d4d4"></div>
<svg style="left:917.0px;top:63.0px" width="24" height="24" viewBox="0 0 24 24"><path d="M1 10L5 6H19V15H5Z" fill="#e8e6dc" stroke="#d0cec0" stroke-width="1"/><text x="6" y="13.5" font-size="8.5" font-family="Liberation Sans" font-weight="bold" fill="#c8c6bc">ab</text><path d="M15 9V16" stroke="#ddd" stroke-width="1.5"/><circle cx="16" cy="18.5" r="4.5" fill="#ccc"/></svg>
<svg style="left:949.6px;top:63.0px" width="24" height="24" viewBox="0 0 24 24"><path d="M1 9L5 5H21V14H5Z" fill="#e8e6dc" stroke="#d0cec0" stroke-width="1"/><text x="6" y="12.5" font-size="8.5" font-family="Liberation Sans" font-weight="bold" fill="#c8c6bc">abc</text><path d="M10 19C13 15 19 15 22 19C19 23 13 23 10 19Z" fill="none" stroke="#c8c8c8" stroke-width="1.2"/><circle cx="16" cy="19" r="2" fill="#c8c8c8"/></svg>
<svg style="left:982.0px;top:63.0px" width="24" height="24" viewBox="0 0 24 24"><path d="M1 9L5 5H21V14H5Z" fill="#e8e6dc" stroke="#d0cec0" stroke-width="1"/><text x="6" y="12.5" font-size="8.5" font-family="Liberation Sans" font-weight="bold" fill="#c8c6bc">abc</text><rect x="12" y="13" width="11" height="10" rx="1.5" fill="#d0d0d0"/><path d="M14 18H20M18 15.5L20.5 18L18 20.5" stroke="#fff" stroke-width="1.5" fill="none"/></svg>
<svg style="left:1014.5px;top:63.0px" width="24" height="24" viewBox="0 0 24 24"><path d="M1 9L5 5H21V14H5Z" fill="#e8e6dc" stroke="#d0cec0" stroke-width="1"/><text x="6" y="12.5" font-size="8.5" font-family="Liberation Sans" font-weight="bold" fill="#c8c6bc">abc</text><rect x="12" y="13" width="11" height="10" rx="1.5" fill="#d0d0d0"/><circle cx="17.5" cy="18" r="3" fill="none" stroke="#fff" stroke-width="1.4"/></svg>
<svg style="left:1047.5px;top:63.0px" width="24" height="24" viewBox="0 0 24 24"><path d="M1 9L5 5H21V14H5Z" fill="#e8e6dc" stroke="#d0cec0" stroke-width="1"/><text x="6" y="12.5" font-size="8.5" font-family="Liberation Sans" font-weight="bold" fill="#c8c6bc">abc</text><rect x="12" y="13" width="11" height="10" rx="1.5" fill="#d8d6cc"/><path d="M14 21L21 15" stroke="#fff" stroke-width="1.6"/></svg>
<svg style="left:1083px;top:67px" width="6" height="18"><rect x="0" y="0" width="1.2" height="1.6" fill="#c4c4c4"/><rect x="0" y="4" width="1.2" height="1.6" fill="#c4c4c4"/><rect x="0" y="8" width="1.2" height="1.6" fill="#c4c4c4"/><rect x="0" y="12" width="1.2" height="1.6" fill="#c4c4c4"/><rect x="0" y="16" width="1.2" height="1.6" fill="#c4c4c4"/><rect x="4" y="0" width="1.2" height="1.6" fill="#c4c4c4"/><rect x="4" y="4" width="1.2" height="1.6" fill="#c4c4c4"/><rect x="4" y="8" width="1.2" height="1.6" fill="#c4c4c4"/><rect x="4" y="12" width="1.2" height="1.6" fill="#c4c4c4"/><rect x="4" y="16" width="1.2" height="1.6" fill="#c4c4c4"/></svg>
<svg style="left:1100px;top:67px" width="6" height="18"><rect x="0" y="0" width="1.2" height="1.6" fill="#c4c4c4"/><rect x="0" y="4" width="1.2" height="1.6" fill="#c4c4c4"/><rect x="0" y="8" width="1.2" height="1.6" fill="#c4c4c4"/><rect x="0" y="12" width="1.2" height="1.6" fill="#c4c4c4"/><rect x="0" y="16" width="1.2" height="1.6" fill="#c4c4c4"/><rect x="4" y="0" width="1.2" height="1.6" fill="#c4c4c4"/><rect x="4" y="4" width="1.2" height="1.6" fill="#c4c4c4"/><rect x="4" y="8" width="1.2" height="1.6" fill="#c4c4c4"/><rect x="4" y="12" width="1.2" height="1.6" fill="#c4c4c4"/><rect x="4" y="16" width="1.2" height="1.6" fill="#c4c4c4"/></svg>
<svg style="left:1113.7px;top:63.0px" width="24" height="24" viewBox="0 0 24 24"><rect x="2" y="6.5" width="19" height="8" rx="1" fill="#c0d4ee" stroke="#2a5a98" stroke-width="1.1"/><rect x="6" y="5" width="5" height="11" rx="1" fill="#6a98d0" stroke="#2a5a98" stroke-width="1.1"/><path d="M8.5 16V20" stroke="#2a5a98" stroke-width="1.1"/></svg>
<svg style="left:1145.0px;top:63.0px" width="24" height="24" viewBox="0 0 24 24"><circle cx="12" cy="12" r="8" fill="none" stroke="#d8d8d8" stroke-width="1.5"/><path d="M12 1V23M1 12H23" stroke="#d8d8d8" stroke-width="1.5"/></svg>
<div class="a" style="left:1177.8px;top:65px;width:1px;height:20px;background:#d4d4d4"></div>
<svg style="left:1185px;top:71px" width="10" height="8"><path d="M1 1L4 4L1 7M5.5 1L8.5 4L5.5 7" fill="none" stroke="#333" stroke-width="1.3"/></svg>
<svg style="left:3.5px;top:106px" width="6" height="18"><rect x="0" y="0" width="1.2" height="1.6" fill="#c4c4c4"/><rect x="0" y="4" width="1.2" height="1.6" fill="#c4c4c4"/><rect x="0" y="8" width="1.2" height="1.6" fill="#c4c4c4"/><rect x="0" y="12" width="1.2" height="1.6" fill="#c4c4c4"/><rect x="0" y="16" width="1.2" height="1.6" fill="#c4c4c4"/><rect x="4" y="0" width="1.2" height="1.6" fill="#c4c4c4"/><rect x="4" y="4" width="1.2" height="1.6" fill="#c4c4c4"/><rect x="4" y="8" width="1.2" height="1.6" fill="#c4c4c4"/><rect x="4" y="12" width="1.2" height="1.6" fill="#c4c4c4"/><rect x="4" y="16" width="1.2" height="1.6" fill="#c4c4c4"/></svg>
<svg style="left:15.5px;top:102.0px" width="24" height="24" viewBox="0 0 24 24"><path d="M1.5 1.5V22.5H22.5Z" fill="#e8e4e0" stroke="#bdb8b0" stroke-width="1"/><path d="M5 12V19H12Z" fill="#fafafa" stroke="#bdb8b0" stroke-width="1"/><rect x="16" y="2" width="6" height="20" fill="#ece8e2" stroke="#c8c4bc" stroke-width=".8"/><path d="M17 5H19M17 8H20M17 11H19M17 14H20M17 17H19" stroke="#c8c4bc" stroke-width=".7"/></svg>
<svg style="left:48.7px;top:102.0px" width="24" height="24" viewBox="0 0 24 24"><path d="M2 6C2 2 7 1.5 11 2.5S19 1 20.5 5S19 12 15 12S12 16 8 14S2 10 2 6Z" fill="#e2e2de" stroke="#d0d0cc" stroke-width="1"/><rect x="11" y="13" width="10" height="10" rx="1.5" fill="#c8c8c8"/><path d="M13 18H19M17 15.5L19.5 18L17 20.5" stroke="#fff" stroke-width="1.6" fill="none"/></svg>
<svg style="left:78px;top:112px" width="8" height="5"><path d="M0 0H8L4 4.5Z" fill="#666"/></svg>
<svg style="left:93.0px;top:102.0px" width="24" height="24" viewBox="0 0 24 24"><path d="M2 6C2 2 7 1.5 11 2.5S19 1 20.5 5S19 12 15 12S12 16 8 14S2 10 2 6Z" fill="#e2e2de" stroke="#d0d0cc" stroke-width="1"/><rect x="11" y="13" width="10" height="10" rx="1.5" fill="#c8c8c8"/><circle cx="16" cy="18" r="2.8" fill="none" stroke="#fff" stroke-width="1.4"/></svg>
<svg style="left:126.0px;top:102.0px" width="24" height="24" viewBox="0 0 24 24"><path d="M2 6C2 2 7 1.5 11 2.5S19 1 20.5 5S19 12 15 12S12 16 8 14S2 10 2 6Z" fill="#e2e2de" stroke="#d0d0cc" stroke-width="1"/><rect x="11" y="13" width="10" height="10" rx="1.5" fill="#c8c8c8"/><path d="M13 18H19" stroke="#fff" stroke-width="1.6"/><path d="M12.5 18L14.5 16V20ZM19.5 18L17.5 16V20Z" fill="#fff"/></svg>
<svg style="left:158.3px;top:102.0px" width="24" height="24" viewBox="0 0 24 24"><circle cx="8" cy="8" r="6.5" fill="#e2e2de" stroke="#d0d0cc"/><path d="M11 9L19 9L23 15L19 22H11L8 15Z" fill="#e4e4e2" stroke="#cfcfcb"/><path d="M8 8L14 14" stroke="#bbb" stroke-width="1"/></svg>
<svg style="left:191.0px;top:102.0px" width="24" height="24" viewBox="0 0 24 24"><path d="M2 6C2 2 7 1.5 11 2.5S19 1 20.5 5S19 12 15 12S12 16 8 14S2 10 2 6Z" fill="#e2e2de" stroke="#c8c8c4" stroke-width="1"/><ellipse cx="9" cy="6" rx="4" ry="2.5" fill="#f4f4f2" stroke="#c0c0bc"/><rect x="13" y="13" width="10" height="10" rx="2" fill="#d8d4c4" stroke="#c8c4b4" stroke-width="0.6"/><path d="M18.00 18.00L20.86 19.65M18.00 18.00L18.00 21.30M18.00 18.00L15.14 19.65M18.00 18.00L15.14 16.35M18.00 18.00L18.00 14.70M18.00 18.00L20.86 16.35" stroke="#fff" stroke-width="1.6" stroke-linecap="round"/><circle cx="18.0" cy="18.0" r="1.20" fill="#d8d4c4"/></svg>
<svg style="left:223.3px;top:102.0px" width="24" height="24" viewBox="0 0 24 24"><path d="M2 6C2 2 7 1.5 11 2.5S19 1 20.5 5S19 12 15 12S12 16 8 14S2 10 2 6Z" fill="#e2e2de" stroke="#c8c8c4" stroke-width="1"/><path d="M3 21C2 16 6 14 9 15C11 17 8 22 3 21Z" fill="#e2e2de" stroke="#d0d0cc"/><rect x="13" y="13" width="10" height="10" rx="2" fill="#d8d4c4" stroke="#c8c4b4" stroke-width="0.6"/><path d="M18.00 18.00L20.86 19.65M18.00 18.00L18.00 21.30M18.00 18.00L15.14 19.65M18.00 18.00L15.14 16.35M18.00 18.00L18.00 14.70M18.00 18.00L20.86 16.35" stroke="#fff" stroke-width="1.6" stroke-linecap="round"/><circle cx="18.0" cy="18.0" r="1.20" fill="#d8d4c4"/></svg>
<svg style="left:256.4px;top:102.0px" width="24" height="24" viewBox="0 0 24 24"><path d="M2 6C2 2 7 1.5 11 2.5S19 1 20.5 5S19 12 15 12S12 16 8 14S2 10 2 6Z" fill="#e2e2de" stroke="#c8c8c4" stroke-width="1"/><ellipse cx="9" cy="6" rx="4" ry="2.5" fill="#d8d8d4" stroke="#c0c0bc"/><rect x="13" y="13" width="10" height="10" rx="2" fill="#d8d4c4" stroke="#c8c4b4" stroke-width="0.6"/><path d="M18.00 18.00L20.86 19.65M18.00 18.00L18.00 21.30M18.00 18.00L15.14 19.65M18.00 18.00L15.14 16.35M18.00 18.00L18.00 14.70M18.00 18.00L20.86 16.35" stroke="#fff" stroke-width="1.6" stroke-linecap="round"/><circle cx="18.0" cy="18.0" r="1.20" fill="#d8d4c4"/></svg>
<svg style="left:289.0px;top:102.0px" width="24" height="24" viewBox="0 0 24 24"><path d="M2 6C2 2 7 1.5 11 2.5S19 1 20.5 5S19 12 15 12S12 16 8 14S2 10 2 6Z" fill="#e2e2de" stroke="#c8c8c4" stroke-width="1"/><ellipse cx="9" cy="6" rx="4" ry="2.5" fill="#f4f4f2" stroke="#c0c0bc"/><rect x="13" y="13" width="10" height="10" rx="1.5" fill="#e8d8d8"/><path d="M15.5 15.5L20.5 20.5M20.5 15.5L15.5 20.5" stroke="#fff" stroke-width="1.5"/></svg>
<svg style="left:321.5px;top:102.0px" width="24" height="24" viewBox="0 0 24 24"><path d="M2 6C2 2 7 1.5 11 2.5S19 1 20.5 5S19 12 15 12S12 16 8 14S2 10 2 6Z" fill="#e2e2de" stroke="#c8c8c4" stroke-width="1"/><path d="M3 21C2 16 6 14 9 15C11 17 8 22 3 21Z" fill="#e2e2de" stroke="#d0d0cc"/><rect x="13" y="13" width="10" height="10" rx="1.5" fill="#e8d8d8"/><path d="M15.5 15.5L20.5 20.5M20.5 15.5L15.5 20.5" stroke="#fff" stroke-width="1.5"/></svg>
<svg style="left:354.0px;top:102.0px" width="24" height="24" viewBox="0 0 24 24"><path d="M2 5C2 1 8 2 12 3S22 1 22 7S16 10 14 10S9 14 8 20C6 22 3 20 3 14S2 8 2 5Z" fill="#e2e2de" stroke="#d0d0cc" stroke-width="1"/></svg>
<svg style="left:387.0px;top:102.0px" width="24" height="24" viewBox="0 0 24 24"><path d="M4 18C2 14 8 6 14 3C19 1 23 5 20 9C17 14 12 21 7 21C5 21 4 20 4 18Z" fill="#e2e2de" stroke="#ccccc8" stroke-width="1.5"/><path d="M7 17C6 14 10 8 15 6C18 5 19 7 17 10C15 14 11 18 8 18Z" fill="none" stroke="#d4d4d0" stroke-width="1"/></svg>
<svg style="left:419.5px;top:102.0px" width="24" height="24" viewBox="0 0 24 24"><path d="M3 3L10 14L14 6H20M10 14V21" fill="none" stroke="#c8c8c4" stroke-width="1.2"/><rect x="1.5" y="1.5" width="3" height="3" fill="none" stroke="#c8c8c4"/><rect x="12.5" y="4.5" width="3" height="3" fill="none" stroke="#c8c8c4"/><rect x="18.5" y="4.5" width="3" height="3" fill="none" stroke="#c8c8c4"/><rect x="12" y="13" width="10" height="10" rx="1.5" fill="#dcdcdc"/><circle cx="17" cy="18" r="2.8" fill="none" stroke="#fff" stroke-width="1.3"/></svg>
<svg style="left:452.0px;top:102.0px" width="24" height="24" viewBox="0 0 24 24"><path d="M10 1V22M2 12H20" stroke="#c8c8c4" stroke-width="1"/><circle cx="10" cy="12" r="2" fill="none" stroke="#c0c0bc"/><rect x="15" y="2" width="7" height="7" rx="1" fill="#ddd8c8"/><rect x="2" y="16" width="6" height="6" fill="none" stroke="#ddd"/></svg>
<svg style="left:484.7px;top:102.0px" width="24" height="24" viewBox="0 0 24 24"><path d="M2 6C2 2 7 2 10 3S12 2 12 2V14C9 14 2 13 2 6Z" fill="#e2e2de" stroke="#ccc"/><path d="M12 2C15 1 21 2 21 7S16 13 12 14Z" fill="#e2e2de" stroke="#ccc"/><circle cx="8" cy="19.5" r="2.5" fill="none" stroke="#d0c0c0" stroke-width="1.2"/><circle cx="16" cy="19.5" r="2.5" fill="none" stroke="#d0c0c0" stroke-width="1.2"/><path d="M9.5 17.5L13 9M14.5 17.5L11 9" stroke="#c8c8c8" stroke-width="1.2"/></svg>
<svg style="left:517.0px;top:102.0px" width="24" height="24" viewBox="0 0 24 24"><path d="M2 6C2 2 7 2 10 3S12 2 12 2V14C9 14 2 13 2 6Z" fill="#e2e2de" stroke="#ccc"/><path d="M12 2C15 1 21 2 21 7S16 13 12 14Z" fill="#e2e2de" stroke="#ccc"/><circle cx="8" cy="19.5" r="2.5" fill="none" stroke="#d0c0c0" stroke-width="1.2"/><circle cx="16" cy="19.5" r="2.5" fill="none" stroke="#d0c0c0" stroke-width="1.2"/><path d="M9.5 17.5L13 9M14.5 17.5L11 9" stroke="#c8c8c8" stroke-width="1.2"/></svg>
<svg style="left:550.0px;top:102.0px" width="24" height="24" viewBox="0 0 24 24"><path d="M2 6C2 2 7 2 10 3S12 2 12 2V14C9 14 2 13 2 6Z" fill="#e2e2de" stroke="#ccc"/><path d="M12 2C15 1 21 2 21 7S16 13 12 14Z" fill="#e2e2de" stroke="#ccc"/><path d="M9 6H15M9 9H15M12 14C10 17 8 19 4 20" stroke="#aaa" stroke-width="1" fill="none"/></svg>
<svg style="left:582.5px;top:102.0px" width="24" height="24" viewBox="0 0 24 24"><path d="M2 4H22M2 10H22M2 15H22M2 21H22" stroke="#d0d0cc" stroke-width="1.2"/><path d="M7 2C9 6 15 6 17 2M7 8C9 12 15 12 17 8M7 13C9 17 15 17 17 13M7 19C9 23 15 23 17 19" fill="none" stroke="#d0d0cc" stroke-width="1"/></svg>
<svg style="left:615.0px;top:102.0px" width="24" height="24" viewBox="0 0 24 24"><path d="M12 2L21 8L12 12Z" fill="#dcdcd8" stroke="#c8c8c4"/><path d="M12 12V22M7 22L12 14L17 22Z" fill="#f0f0ee" stroke="#c8c8c4"/><path d="M7 4C3 7 3 14 7 17" fill="none" stroke="#c8c8c4" stroke-width="1.2"/></svg>
<svg style="left:645px;top:112px" width="8" height="5"><path d="M0 0H8L4 4.5Z" fill="#666"/></svg>
<svg style="left:663.5px;top:106px" width="6" height="18"><rect x="0" y="0" width="1.2" height="1.6" fill="#c4c4c4"/><rect x="0" y="4" width="1.2" height="1.6" fill="#c4c4c4"/><rect x="0" y="8" width="1.2" height="1.6" fill="#c4c4c4"/><rect x="0" y="12" width="1.2" height="1.6" fill="#c4c4c4"/><rect x="0" y="16" width="1.2" height="1.6" fill="#c4c4c4"/><rect x="4" y="0" width="1.2" height="1.6" fill="#c4c4c4"/><rect x="4" y="4" width="1.2" height="1.6" fill="#c4c4c4"/><rect x="4" y="8" width="1.2" height="1.6" fill="#c4c4c4"/><rect x="4" y="12" width="1.2" height="1.6" fill="#c4c4c4"/><rect x="4" y="16" width="1.2" height="1.6" fill="#c4c4c4"/></svg>
<svg style="left:675.7px;top:102.0px" width="24" height="24" viewBox="0 0 24 24"><g transform="rotate(-45 12 12)"><path d="M4 2V12A8 8 0 0 0 20 12V2H14.5V12A2.5 2.5 0 0 1 9.5 12V2Z" fill="#d81e1e" stroke="#7a0a0a" stroke-width="1"/><rect x="4" y="2" width="5.5" height="4" fill="#fff" stroke="#7a0a0a" stroke-width="1"/><rect x="14.5" y="2" width="5.5" height="4" fill="#fff" stroke="#7a0a0a" stroke-width="1"/></g></svg>
<svg style="left:710.0px;top:102.0px" width="24" height="24" viewBox="0 0 24 24"><path d="M5 3L11 14L18 4M11 14V22M11 14L20 12" fill="none" stroke="#d0d0cc" stroke-width="1.5"/><circle cx="5" cy="3" r="1.8" fill="none" stroke="#d0d0cc"/><circle cx="18" cy="4" r="1.8" fill="none" stroke="#d0d0cc"/><circle cx="20" cy="12" r="1.8" fill="none" stroke="#d0d0cc"/><path d="M17 20H22L19.5 23Z" fill="#888"/></svg>
<div class="a" style="left:737.3px;top:99.5px;width:31px;height:30px;background:#dedede;border:1px solid #c8c8c8;border-radius:3px"></div>
<svg style="left:737px;top:99px" width="32" height="31"><rect x="9" y="9" width="3" height="3" fill="none" stroke="#c0c0c0"/><rect x="20" y="11" width="3" height="3" fill="none" stroke="#c0c0c0"/><rect x="14" y="18" width="3" height="3" fill="none" stroke="#c0c0c0"/><path d="M24 24H29L26.5 27Z" fill="#777"/></svg>
<div class="a" style="left:770px;top:104.5px;width:82px;height:19px;background:#f3f3f3;border:1px solid #b8b8b8;border-radius:2px"></div>
<div class="a" style="left:836px;top:105.5px;width:1px;height:17px;background:#d4d4d4"></div>
<svg style="left:838px;top:106px" width="12" height="16"><path d="M2 6L6 2L10 6Z" fill="#777"/><path d="M2 10L6 14L10 10Z" fill="#777"/></svg>
<div class="t" style="left:775px;top:107.5px;font-size:11px;color:#555;font-weight:normal;">12</div>
<div class="a" style="left:854px;top:103.5px;width:86px;height:21px;background:#f6f6f6;border:1px solid #b8b8b8;border-radius:2px"></div>
<div class="t" style="left:858px;top:107.5px;font-size:11px;color:#666;font-weight:normal;">px</div>
<svg style="left:925px;top:111px" width="10" height="6"><path d="M0 0H9L4.5 4.5Z" fill="#888"/></svg>
<svg style="left:946.0px;top:102.0px" width="24" height="24" viewBox="0 0 24 24"><path d="M11 12L3 3M11 12L21 8M11 12V23" stroke="#5aaa5a" stroke-width="2"/><rect x="9" y="10" width="4" height="4" fill="#e8e8e8" stroke="#555" stroke-width="1"/></svg>
<svg style="left:978.0px;top:102.0px" width="24" height="24" viewBox="0 0 24 24"><path d="M9 3C13 1 19 2 21 4S20 10 16 10S9 6 9 3Z" fill="#c4c4c4" stroke="#555" stroke-width="1"/><path d="M3 5C4 1 11 1 12 5S16 12 16 15S14 22 10 22S6 16 5 12S2 8 3 5Z" fill="#88c078" stroke="#333" stroke-width="1.2"/><path d="M20 20H24L22 22.5Z" fill="#333"/></svg>
<svg style="left:1011.0px;top:102.0px" width="24" height="24" viewBox="0 0 24 24"><path d="M3 3L21 21M21 3L3 21" stroke="#d8d8d8" stroke-width="2"/><circle cx="12" cy="12" r="2" fill="#d8d8d8"/></svg>
<svg style="left:1044.0px;top:102.0px" width="24" height="24" viewBox="0 0 24 24"><path d="M3 21L9 13L4 7L12 11L21 3L15 11L20 17L11 14Z" fill="#d8d4c8" stroke="#cfcbc0"/></svg>
<svg style="left:1073px;top:112px" width="8" height="5"><path d="M0 0H8L4 4.5Z" fill="#666"/></svg>
<svg style="left:1088.0px;top:102.0px" width="24" height="24" viewBox="0 0 24 24"><path d="M5 20L9 6L18 16L22 2" stroke="#d0d0cc" stroke-width="1.4" fill="none"/><circle cx="5" cy="20" r="2" fill="none" stroke="#ccc"/><circle cx="9" cy="6" r="2" fill="none" stroke="#ccc"/><path d="M15 10L20 3L23 6L18 12Z" fill="#e0e0dc"/></svg>
<svg style="left:1125px;top:106px" width="6" height="18"><rect x="0" y="0" width="1.2" height="1.6" fill="#c4c4c4"/><rect x="0" y="4" width="1.2" height="1.6" fill="#c4c4c4"/><rect x="0" y="8" width="1.2" height="1.6" fill="#c4c4c4"/><rect x="0" y="12" width="1.2" height="1.6" fill="#c4c4c4"/><rect x="0" y="16" width="1.2" height="1.6" fill="#c4c4c4"/><rect x="4" y="0" width="1.2" height="1.6" fill="#c4c4c4"/><rect x="4" y="4" width="1.2" height="1.6" fill="#c4c4c4"/><rect x="4" y="8" width="1.2" height="1.6" fill="#c4c4c4"/><rect x="4" y="12" width="1.2" height="1.6" fill="#c4c4c4"/><rect x="4" y="16" width="1.2" height="1.6" fill="#c4c4c4"/></svg>
<svg style="left:1138.0px;top:102.0px" width="24" height="24" viewBox="0 0 24 24"><circle cx="11" cy="11" r="10" fill="#5a90d8" stroke="#2a5a98" stroke-width="1"/><ellipse cx="11" cy="11" rx="4.5" ry="10" fill="none" stroke="#d8e4f4" stroke-width="1"/><path d="M1 11H21M3 5.5H19M3 16.5H19M11 1V21" stroke="#d8e4f4" stroke-width="1"/><circle cx="8" cy="7" r="4" fill="#fff" opacity=".3"/><rect x="14" y="14" width="9" height="9" fill="#3a9a3a"/><path d="M18.5 15.5V21.5M15.5 18.5H21.5" stroke="#fff" stroke-width="1.8"/></svg>
<svg style="left:1184.5px;top:110px" width="10" height="8"><path d="M1 1L4 4L1 7M5.5 1L8.5 4L5.5 7" fill="none" stroke="#333" stroke-width="1.3"/></svg>
<svg style="left:3.5px;top:144.5px" width="6" height="18"><rect x="0" y="0" width="1.2" height="1.6" fill="#c4c4c4"/><rect x="0" y="4" width="1.2" height="1.6" fill="#c4c4c4"/><rect x="0" y="8" width="1.2" height="1.6" fill="#c4c4c4"/><rect x="0" y="12" width="1.2" height="1.6" fill="#c4c4c4"/><rect x="0" y="16" width="1.2" height="1.6" fill="#c4c4c4"/><rect x="4" y="0" width="1.2" height="1.6" fill="#c4c4c4"/><rect x="4" y="4" width="1.2" height="1.6" fill="#c4c4c4"/><rect x="4" y="8" width="1.2" height="1.6" fill="#c4c4c4"/><rect x="4" y="12" width="1.2" height="1.6" fill="#c4c4c4"/><rect x="4" y="16" width="1.2" height="1.6" fill="#c4c4c4"/></svg>
<svg style="left:15.8px;top:140.5px" width="24" height="24" viewBox="0 0 24 24"><path d="M2 22L4 3L7 5L10 2L13 14L16 20L22 22Z" fill="#e0e6dc" stroke="#ccd0c4" stroke-width=".8"/><path d="M3 22V8M9 22V4" stroke="#e8c8c8" stroke-width=".8"/></svg>
<svg style="left:48.0px;top:140.5px" width="24" height="24" viewBox="0 0 24 24"><path d="M2 22L4 3L7 5L10 2L13 14L16 20L22 22Z" fill="#e0e6dc" stroke="#ccd0c4" stroke-width=".8"/><path d="M3 22V8M9 22V4" stroke="#e8c8c8" stroke-width=".8"/><path d="M1 12H23M4 9L1 12L4 15M20 9L23 12L20 15" fill="none" stroke="#c8ccc4" stroke-width="1.2"/></svg>
<svg style="left:81.0px;top:140.5px" width="24" height="24" viewBox="0 0 24 24"><path d="M2 22L4 3L7 5L10 2L13 14L16 20L22 22Z" fill="#e0e6dc" stroke="#ccd0c4" stroke-width=".8"/><path d="M3 22V8M9 22V4" stroke="#e8c8c8" stroke-width=".8"/></svg>
<svg style="left:113.6px;top:140.5px" width="24" height="24" viewBox="0 0 24 24"><path d="M2 22L4 3L7 5L10 2L13 14L16 20L22 22Z" fill="#e0e6dc" stroke="#ccd0c4" stroke-width=".8"/><path d="M3 22V8M9 22V4" stroke="#e8c8c8" stroke-width=".8"/><path d="M1 12H23M4 9L1 12L4 15M20 9L23 12L20 15" fill="none" stroke="#c8ccc4" stroke-width="1.2"/></svg>
<svg style="left:147.0px;top:140.5px" width="24" height="24" viewBox="0 0 24 24"><circle cx="10" cy="10" r="5.5" fill="#e8e4d4"/><path d="M10 1V3M10 17V19M1 10H3M17 10H19M3.6 3.6L5 5M15 15L16.4 16.4M3.6 16.4L5 15M15 5L16.4 3.6" stroke="#e4dcc0" stroke-width="1.4"/><rect x="13" y="13" width="10" height="10" rx="1" fill="#d4d4d0"/><path d="M15 21H21L18 15Z" fill="#fff"/></svg>
<svg style="left:179.5px;top:140.5px" width="24" height="24" viewBox="0 0 24 24"><circle cx="10" cy="10" r="5.5" fill="#e8e4d4"/><path d="M10 1V3M10 17V19M1 10H3M17 10H19M3.6 3.6L5 5M15 15L16.4 16.4M3.6 16.4L5 15M15 5L16.4 3.6" stroke="#e4dcc0" stroke-width="1.4"/><rect x="13" y="13" width="10" height="10" rx="1" fill="#d4d4d0"/><path d="M15 15H21L18 21Z" fill="#fff"/></svg>
<svg style="left:213.0px;top:140.5px" width="24" height="24" viewBox="0 0 24 24"><circle cx="10" cy="10" r="8.5" fill="#fff" stroke="#d4d4d4" stroke-width="1.6"/><path d="M10 3A7 7 0 0 0 10 17Z" fill="#c4c4c4"/><path d="M4 15L16 4" stroke="#ccc" stroke-width="1"/><rect x="13" y="13" width="10" height="10" rx="1" fill="#d4d4d0"/><path d="M15 21H21L18 15Z" fill="#fff"/></svg>
<svg style="left:245.39999999999998px;top:140.5px" width="24" height="24" viewBox="0 0 24 24"><circle cx="10" cy="10" r="8.5" fill="#fff" stroke="#d4d4d4" stroke-width="1.6"/><path d="M10 3A7 7 0 0 0 10 17Z" fill="#c4c4c4"/><path d="M4 15L16 4" stroke="#ccc" stroke-width="1"/><rect x="13" y="13" width="10" height="10" rx="1" fill="#d4d4d0"/><path d="M15 15H21L18 21Z" fill="#fff"/></svg>
<svg style="left:279.0px;top:140.5px" width="24" height="24" viewBox="0 0 24 24"><path d="M2 5C5 2 7 5 9 12V22M9 12C11 6 13 3 15 3" fill="none" stroke="#c8c8c4" stroke-width="1.4"/><rect x="12" y="12" width="11" height="11" rx="1" fill="#d4d4d0"/><path d="M14.5 20.5H20.5L17.5 14.5Z" fill="#fff"/></svg>
<svg style="left:311.4px;top:140.5px" width="24" height="24" viewBox="0 0 24 24"><path d="M2 5C5 2 7 5 9 12V22M9 12C11 6 13 3 15 3" fill="none" stroke="#c8c8c4" stroke-width="1.4"/><rect x="12" y="12" width="11" height="11" rx="1" fill="#d4d4d0"/><path d="M14.5 14.5H20.5L17.5 20.5Z" fill="#fff"/></svg>
<div class="t" style="left:2.3px;top:176.0px;font-size:11px;color:#000;font-weight:normal;">Navegador</div>
<div class="a" style="left:249px;top:176px;width:11px;height:11px;border:1px solid #6e6e6e;border-radius:2px"></div>
<div class="a" style="left:263px;top:176px;width:11px;height:11px;border:1px solid #6e6e6e;border-radius:2px"></div>
<svg style="left:249px;top:176px" width="11" height="11"><rect x="4" y="2.5" width="4.5" height="4.5" fill="none" stroke="#555" stroke-width="1"/><rect x="2.5" y="4" width="4.5" height="4.5" fill="#f0f0f0" stroke="#555" stroke-width="1"/></svg>
<svg style="left:263px;top:176px" width="11" height="11"><path d="M3 3L8 8M8 3L3 8" stroke="#444" stroke-width="2"/></svg>
<div class="a" style="left:0px;top:221px;width:276px;height:170px;background:#fff;border:1px solid #c8c8c8;border-left:none"></div>
<div class="a" style="left:261px;top:222px;width:14px;height:168px;background:#f0f0f0;border-left:1px solid #e0e0e0"></div>
<div class="a" style="left:262px;top:236px;width:13px;height:50px;background:#fff"></div>
<div class="a" style="left:262px;top:286px;width:13px;height:90px;background:#d9d9d9"></div>
<svg style="left:262px;top:222px" width="13" height="168"><path d="M3 10L6.5 6L10 10Z" fill="#555"/><path d="M3 158L6.5 162L10 158Z" fill="#555"/></svg>
<div class="t" style="left:39.7px;top:225.9px;font-size:11px;color:#000;font-weight:normal;">Favoritos</div>
<div class="t" style="left:39.7px;top:243.70000000000002px;font-size:11px;color:#000;font-weight:normal;">Favoritos Espaciais</div>
<svg style="left:5px;top:246.20000000000002px" width="6" height="8"><path d="M1 0L5 4L1 8Z" fill="#444"/></svg>
<div class="t" style="left:39.7px;top:261.5px;font-size:11px;color:#000;font-weight:normal;">Início</div>
<svg style="left:5px;top:264.0px" width="6" height="8"><path d="M1 0L5 4L1 8Z" fill="#444"/></svg>
<div class="t" style="left:39.7px;top:279.3px;font-size:11px;color:#000;font-weight:normal;">C:\</div>
<svg style="left:5px;top:281.8px" width="6" height="8"><path d="M1 0L5 4L1 8Z" fill="#444"/></svg>
<div class="t" style="left:39.7px;top:297.1px;font-size:11px;color:#000;font-weight:normal;">GeoPackage</div>
<svg style="left:5px;top:299.6px" width="6" height="8"><path d="M1 0L5 4L1 8Z" fill="#444"/></svg>
<div class="t" style="left:39.7px;top:314.9px;font-size:11px;color:#000;font-weight:normal;">SpatiaLite</div>
<div class="t" style="left:39.7px;top:332.70000000000005px;font-size:11px;color:#000;font-weight:normal;">PostgreSQL</div>
<div class="t" style="left:39.7px;top:350.5px;font-size:11px;color:#000;font-weight:normal;">SAP HANA</div>
<div class="t" style="left:39.7px;top:368.3px;font-size:11px;color:#000;font-weight:normal;">STAC</div>
<div class="t" style="left:39.7px;top:386.1px;font-size:11px;color:#000;font-weight:normal;">MS SQL Server</div>
<div class="a" style="left:0px;top:390px;width:276px;height:5px;background:#f0f0f0;border-top:1px solid #c8c8c8"></div>
<svg style="left:128px;top:392px" width="20" height="3"><rect x="0" y="1" width="1" height="1" fill="#bbb"/><rect x="3" y="1" width="1" height="1" fill="#bbb"/><rect x="6" y="1" width="1" height="1" fill="#bbb"/><rect x="9" y="1" width="1" height="1" fill="#bbb"/><rect x="12" y="1" width="1" height="1" fill="#bbb"/><rect x="15" y="1" width="1" height="1" fill="#bbb"/><rect x="18" y="1" width="1" height="1" fill="#bbb"/></svg>
<svg style="left:7px;top:198px" width="16" height="16" viewBox="0 0 16 16"><rect x="1.5" y="1.5" width="11" height="11" fill="#fff" stroke="#666" stroke-width="1.1"/><circle cx="12.5" cy="12.5" r="3" fill="#4a9a4a" stroke="#fff" stroke-width=".8"/></svg>
<svg style="left:31.5px;top:198px" width="16" height="16" viewBox="0 0 16 16"><path d="M1.5 7.5A6.5 6.5 0 0 1 12.5 3.5L14 2V7.5H8.5L10.5 5.5A4 4 0 0 0 4 7.5Z" fill="#3b82d0"/><path d="M14.5 8.5A6.5 6.5 0 0 1 3.5 12.5L2 14V8.5H7.5L5.5 10.5A4 4 0 0 0 12 8.5Z" fill="#3b82d0"/></svg>
<svg style="left:56px;top:198px" width="16" height="16" viewBox="0 0 16 16"><path d="M1 1.5H15V4L10 9V15L6 13V9L1 4Z" fill="#6a98d0" stroke="#3a6aa8" stroke-width=".8"/><rect x="1" y="1.5" width="14" height="2.5" fill="#f0d020"/></svg>
<svg style="left:81.4px;top:198px" width="16" height="16" viewBox="0 0 16 16"><path d="M1.5 2H12M1.5 2V15M1.5 7H4M1.5 13H4" stroke="#9a9a9a" stroke-width="1"/><rect x="4" y="5.5" width="3" height="3" fill="#f08a10" stroke="#fff" stroke-width=".5"/><rect x="4" y="11.5" width="3" height="3" fill="#f08a10" stroke="#fff" stroke-width=".5"/><path d="M10.5 1L15 6H12.5V14H8.5V6H6Z" fill="#5a8ac8" stroke="#2a5a98" stroke-width=".7"/></svg>
<svg style="left:105.8px;top:198px" width="16" height="16" viewBox="0 0 16 16"><circle cx="8" cy="8" r="7" fill="#6a9ad8" stroke="#4a7ab8" stroke-width=".8"/><text x="6" y="12.5" font-size="10" font-family="Liberation Serif" font-style="italic" font-weight="bold" fill="#fff">i</text></svg>
<svg style="left:19px;top:224.4px" width="16" height="16" viewBox="0 0 16 16"><path d="M8 0.5L10.2 5.5L15.5 6L11.5 9.5L12.7 15L8 12L3.3 15L4.5 9.5L0.5 6L5.8 5.5Z" fill="#f7e04a" stroke="#d4b020" stroke-width=".8"/></svg>
<svg style="left:19px;top:242.20000000000002px" width="16" height="16" viewBox="0 0 16 16"><path d="M2 1H13C14 1 14 2 14 2V15H3C2 15 2 14 2 14Z" fill="#ececea" stroke="#aaa" stroke-width=".8"/><path d="M5 1V15" stroke="#ccc"/><path d="M8.5 1H11.5V7L10 5.5L8.5 7Z" fill="#5b8ccb"/></svg>
<svg style="left:19px;top:260.0px" width="16" height="16" viewBox="0 0 16 16"><rect x="1.5" y="2.5" width="13" height="12" fill="#fff" stroke="#777" stroke-width=".9"/><path d="M4.5 12V8.5L8 5.5L11.5 8.5V12Z" fill="none" stroke="#333" stroke-width=".9"/></svg>
<svg style="left:19px;top:277.8px" width="16" height="16" viewBox="0 0 16 16"><path d="M1.5 2.5H6L7.5 4H14.5V14.5H1.5Z" fill="#efefef" stroke="#888" stroke-width=".9"/></svg>
<svg style="left:19px;top:295.6px" width="16" height="16" viewBox="0 0 16 16"><circle cx="8" cy="5.5" r="5" fill="#8ab0e0" stroke="#5a80b8" stroke-width=".5"/><path d="M5.5 3C7 4 7 6 5.5 7M9 2.5C10.5 3 11.5 4.5 11 6.5" stroke="#2a5a98" stroke-width="1.4" fill="none"/><path d="M0.5 5.5L8 9.5V15.5L0.5 11Z" fill="#e2b000" stroke="#6a5000" stroke-width=".6"/><path d="M8 9.5L15.5 5.5V11L8 15.5Z" fill="#f8f070" stroke="#6a5000" stroke-width=".6"/></svg>
<svg style="left:19px;top:313.4px" width="16" height="16" viewBox="0 0 16 16"><path d="M1 15C2 10 6 3 15 1C13 6 9 11 3 13Z" fill="#8eaedb" stroke="#4a70a8" stroke-width=".8"/></svg>
<svg style="left:19px;top:331.20000000000005px" width="16" height="16" viewBox="0 0 16 16"><path d="M3 2C1 3 1 7 2 9C3 11 4 11 5 12V15H7V11C9 11 10 12 10 14H12C12 11 14 10 15 7C15 3 13 1 10 2C8 1 5 1 3 2Z" fill="#3a6aa8" stroke="#1a4a88" stroke-width=".6"/><path d="M6 4C5 6 6 8 8 8" stroke="#fff" stroke-width=".8" fill="none"/></svg>
<svg style="left:19px;top:349.0px" width="16" height="16" viewBox="0 0 16 16"><rect x="1" y="1" width="14" height="14" fill="none" stroke="#5a80b0" stroke-width="1" stroke-dasharray="1 1"/><rect x="3" y="3" width="10" height="10" fill="#5a8ccc"/></svg>
<svg style="left:19px;top:366.8px" width="16" height="16" viewBox="0 0 16 16"><path d="M1 1H9V3M1 1V9H3" fill="none" stroke="#b0c4dc" stroke-width="1"/><rect x="3.5" y="3.5" width="9" height="9" fill="#e8f0f8" stroke="#8aa8cc" stroke-width=".8"/><rect x="6" y="6" width="9" height="9" fill="#dce8f4" stroke="#6a8cb8" stroke-width=".9"/><circle cx="10.5" cy="10.5" r="2.5" fill="none" stroke="#6a8cb8" stroke-width=".8"/></svg>
<svg style="left:19px;top:384.6px" width="16" height="16" viewBox="0 0 16 16"><path d="M2 8C4 4 9 3 14 5V12H2Z" fill="#3a6aa8"/></svg>
<svg style="left:6.699999999999999px;top:423px" width="16" height="16" viewBox="0 0 16 16"><path d="M7 9L13 2L15 4L9 11Z" fill="#c8902a" stroke="#8a5a10" stroke-width=".5"/><path d="M1 11L6 7L10 11L6 15Z" fill="#f0d020"/><path d="M1 11L4 9L8 13L6 15Z" fill="#e03030"/><path d="M1 11L3 10L7 14L6 15Z" fill="#3a6ac0"/></svg>
<svg style="left:31.4px;top:423px" width="16" height="16" viewBox="0 0 16 16"><path d="M3 4H10V14H3Z" fill="#eee" stroke="#777" stroke-width=".8"/><path d="M5 2H12V12H5Z" fill="#eee" stroke="#777" stroke-width=".8"/><path d="M7 3V9C7 11 10 11 10 9V2" fill="none" stroke="#333" stroke-width=".9"/><rect x="10" y="10" width="6" height="6" fill="#4a9a4a"/><path d="M13 11V15M11 13H15" stroke="#fff" stroke-width="1.2"/></svg>
<svg style="left:56.8px;top:423px" width="16" height="16" viewBox="0 0 16 16"><path d="M0.5 8C3 3 13 3 15.5 8C13 13 3 13 0.5 8Z" fill="#ddd" stroke="#888" stroke-width=".8"/><circle cx="8" cy="8" r="3.5" fill="#4a7ac0"/><circle cx="8" cy="8" r="1.5" fill="#1a3a6a"/><path d="M12 13H16L14 15.5Z" fill="#333"/></svg>
<svg style="left:82px;top:423px" width="16" height="16" viewBox="0 0 16 16"><path d="M1 1.5H15V4L10 9V15L6 13V9L1 4Z" fill="#6a98d0" stroke="#3a6aa8" stroke-width=".8"/><rect x="1" y="1.5" width="14" height="2.5" fill="#f0d020"/><path d="M12 13H16L14 15.5Z" fill="#333"/></svg>
<svg style="left:106.7px;top:423px" width="16" height="16" viewBox="0 0 16 16"><text x="1" y="11" font-size="13" font-family="Liberation Serif" fill="#ccc">&#949;</text><path d="M9 8H14V15H9Z" fill="none" stroke="#ddd" stroke-width="1"/></svg>
<svg style="left:128px;top:429px" width="8" height="5"><path d="M0 0H7L3.5 4Z" fill="#999"/></svg>
<svg style="left:142.6px;top:423px" width="16" height="16" viewBox="0 0 16 16"><path d="M1.5 2H12M1.5 2V15M1.5 7H4M1.5 13H4" stroke="#9a9a9a" stroke-width="1"/><rect x="4" y="5.5" width="3" height="3" fill="#f08a10" stroke="#fff" stroke-width=".5"/><rect x="4" y="11.5" width="3" height="3" fill="#f08a10" stroke="#fff" stroke-width=".5"/><path d="M10.5 15L15 10H12.5V2H8.5V10H6Z" fill="#5a8ac8" stroke="#2a5a98" stroke-width=".7"/></svg>
<svg style="left:167.4px;top:423px" width="16" height="16" viewBox="0 0 16 16"><path d="M1.5 2H12M1.5 2V15M1.5 7H4M1.5 13H4" stroke="#9a9a9a" stroke-width="1"/><rect x="4" y="5.5" width="3" height="3" fill="#f08a10" stroke="#fff" stroke-width=".5"/><rect x="4" y="11.5" width="3" height="3" fill="#f08a10" stroke="#fff" stroke-width=".5"/><path d="M10.5 1L15 6H12.5V14H8.5V6H6Z" fill="#5a8ac8" stroke="#2a5a98" stroke-width=".7"/></svg>
<svg style="left:191.7px;top:423px" width="16" height="16" viewBox="0 0 16 16"><rect x="1.5" y="1.5" width="11" height="11" fill="#fff" stroke="#666" stroke-width="1.1"/><rect x="9" y="10.5" width="7" height="4.5" rx="1.5" fill="#e03040"/><path d="M10.5 12.75H14.5" stroke="#fff" stroke-width="1.2"/></svg>
<div class="t" style="left:3px;top:400.5px;font-size:11px;color:#000;font-weight:normal;">Camadas</div>
<div class="a" style="left:249px;top:401px;width:11px;height:11px;border:1px solid #6e6e6e;border-radius:2px"></div>
<div class="a" style="left:263px;top:401px;width:11px;height:11px;border:1px solid #6e6e6e;border-radius:2px"></div>
<svg style="left:249px;top:401px" width="11" height="11"><rect x="4" y="2.5" width="4.5" height="4.5" fill="none" stroke="#555" stroke-width="1"/><rect x="2.5" y="4" width="4.5" height="4.5" fill="#f0f0f0" stroke="#555" stroke-width="1"/></svg>
<svg style="left:263px;top:401px" width="11" height="11"><path d="M3 3L8 8M8 3L3 8" stroke="#444" stroke-width="2"/></svg>
<div class="a" style="left:0px;top:446px;width:276px;height:214px;background:#fff;border:1px solid #c8c8c8;border-left:none"></div>
<div class="t" style="left:64.4px;top:449.8px;font-size:12px;color:#000;font-weight:bold;letter-spacing:-0.15px;">lml_pais_a</div>
<div class="a" style="left:23px;top:449.3px;width:14px;height:14px;border:1px solid #a0a0a0;background:#fff"></div>
<svg style="left:23px;top:449.3px" width="14" height="14"><path d="M3.5 7L6 10.5L10.5 3" fill="none" stroke="#000" stroke-width="1.7"/></svg>
<div class="a" style="left:42.5px;top:447.8px;width:16px;height:16px;border:1px solid #9a9a9a;background:#fff"></div>
<div class="t" style="left:64.4px;top:467.6px;font-size:12px;color:#000;font-weight:bold;text-decoration:underline;letter-spacing:-0.15px;">bacias_nivel_2</div>
<div class="a" style="left:23px;top:467.1px;width:14px;height:14px;border:1px solid #a0a0a0;background:#fff"></div>
<svg style="left:23px;top:467.1px" width="14" height="14"><path d="M3.5 7L6 10.5L10.5 3" fill="none" stroke="#000" stroke-width="1.7"/></svg>
<svg style="left:5px;top:470.1px" width="6" height="8"><path d="M1 0L5 4L1 8Z" fill="#444"/></svg>
<svg style="left:42px;top:467.1px" width="17" height="12"><path d="M2 3C5 0 8 3 11 1.5C14 0 16 2 15.5 5C15 8 15.5 10 13 10.5C10 11 7 8.5 4 10.5C1 11 1 5 2 3Z" fill="#ddd" stroke="#888" stroke-width="1"/></svg>
<div class="t" style="left:64.4px;top:485.40000000000003px;font-size:12px;color:#000;font-weight:bold;letter-spacing:-0.15px;">bacias_nivel_5</div>
<div class="a" style="left:23px;top:484.90000000000003px;width:14px;height:14px;border:1px solid #a0a0a0;background:#fff"></div>
<svg style="left:23px;top:484.90000000000003px" width="14" height="14"><path d="M3.5 7L6 10.5L10.5 3" fill="none" stroke="#000" stroke-width="1.7"/></svg>
<svg style="left:5px;top:487.90000000000003px" width="6" height="8"><path d="M1 0L5 4L1 8Z" fill="#444"/></svg>
<svg style="left:42px;top:484.90000000000003px" width="17" height="12"><path d="M2 3C5 0 8 3 11 1.5C14 0 16 2 15.5 5C15 8 15.5 10 13 10.5C10 11 7 8.5 4 10.5C1 11 1 5 2 3Z" fill="#ddd" stroke="#888" stroke-width="1"/></svg>
<div class="t" style="left:64.4px;top:503.20000000000005px;font-size:12px;color:#000;font-weight:bold;letter-spacing:-0.15px;">bacias_nivel_6</div>
<div class="a" style="left:23px;top:502.70000000000005px;width:14px;height:14px;border:1px solid #a0a0a0;background:#fff"></div>
<svg style="left:23px;top:502.70000000000005px" width="14" height="14"><path d="M3.5 7L6 10.5L10.5 3" fill="none" stroke="#000" stroke-width="1.7"/></svg>
<svg style="left:5px;top:505.70000000000005px" width="6" height="8"><path d="M1 0L5 4L1 8Z" fill="#444"/></svg>
<svg style="left:42px;top:502.70000000000005px" width="17" height="12"><path d="M2 3C5 0 8 3 11 1.5C14 0 16 2 15.5 5C15 8 15.5 10 13 10.5C10 11 7 8.5 4 10.5C1 11 1 5 2 3Z" fill="#ddd" stroke="#888" stroke-width="1"/></svg>
<div class="t" style="left:64.4px;top:521.0px;font-size:12px;color:#000;font-weight:bold;letter-spacing:-0.15px;">bacias_nivel_4</div>
<div class="a" style="left:23px;top:520.5px;width:14px;height:14px;border:1px solid #a0a0a0;background:#fff"></div>
<svg style="left:23px;top:520.5px" width="14" height="14"><path d="M3.5 7L6 10.5L10.5 3" fill="none" stroke="#000" stroke-width="1.7"/></svg>
<svg style="left:5px;top:523.5px" width="6" height="8"><path d="M1 0L5 4L1 8Z" fill="#444"/></svg>
<svg style="left:42px;top:520.5px" width="17" height="12"><path d="M2 3C5 0 8 3 11 1.5C14 0 16 2 15.5 5C15 8 15.5 10 13 10.5C10 11 7 8.5 4 10.5C1 11 1 5 2 3Z" fill="#ddd" stroke="#888" stroke-width="1"/></svg>
<div class="t" style="left:64.4px;top:538.8px;font-size:12px;color:#000;font-weight:bold;letter-spacing:-0.15px;">bacias_nivel_3</div>
<div class="a" style="left:23px;top:538.3px;width:14px;height:14px;border:1px solid #a0a0a0;background:#fff"></div>
<svg style="left:23px;top:538.3px" width="14" height="14"><path d="M3.5 7L6 10.5L10.5 3" fill="none" stroke="#000" stroke-width="1.7"/></svg>
<svg style="left:5px;top:541.3px" width="6" height="8"><path d="M1 0L5 4L1 8Z" fill="#444"/></svg>
<svg style="left:42px;top:538.3px" width="17" height="12"><path d="M2 3C5 0 8 3 11 1.5C14 0 16 2 15.5 5C15 8 15.5 10 13 10.5C10 11 7 8.5 4 10.5C1 11 1 5 2 3Z" fill="#ddd" stroke="#888" stroke-width="1"/></svg>
<svg style="left:278px;top:409px" width="3" height="22"><rect x="1" y="0" width="1" height="1" fill="#bbb"/><rect x="1" y="3" width="1" height="1" fill="#bbb"/><rect x="1" y="6" width="1" height="1" fill="#bbb"/><rect x="1" y="9" width="1" height="1" fill="#bbb"/><rect x="1" y="12" width="1" height="1" fill="#bbb"/><rect x="1" y="15" width="1" height="1" fill="#bbb"/><rect x="1" y="18" width="1" height="1" fill="#bbb"/></svg>
<div class="a" style="left:282px;top:172px;width:916px;height:488px;background:#fff;border:1px solid #b4b4b4"></div>
<svg style="left:0;top:0" width="1198" height="687"><defs><pattern id="xh" patternUnits="userSpaceOnUse" width="9.9" height="9.9" x="4.9" y="3.3"><path d="M-1,-1L10.9,10.9M-1,10.9L10.9,-1M-5.95,3.95L5.95,15.85M3.95,-5.95L15.85,5.95M-5.95,5.95L5.95,-5.95M3.95,15.85L15.85,3.95" stroke="#3a3a3a" stroke-width="0.92"/></pattern><pattern id="dh" patternUnits="userSpaceOnUse" width="9.9" height="9.9" x="-0.3" y="0"><path d="M-1,-1L10.9,10.9M-5.95,3.95L5.95,15.85M3.95,-5.95L15.85,5.95" stroke="#3a3a3a" stroke-width="0.9"/></pattern><clipPath id="cc"><path d="M600,267.7 L604.9,261 L616.2,256.4 L618,253.5 L629.5,258.3 L640.8,262 L652,262 L658,261 L667,258 L673,265.8 L682.5,265.8 L692,260 L690,250.7 L686.2,246 L695.7,247.8 L707,243 L716.5,238.4 L721.2,244 L722.2,258.3 L726,264 L731.2,262.4 L739.7,260.5 L749.2,256.8 L758.7,258.7 L765.3,256.8 L766.2,251 L772,245.4 L775.7,244.5 L781.4,256.8 L787,264.3 L789.9,272.8 L799.3,277.6 L813.5,279.5 L821,282.3 L825,289 L840,291.8 L855.2,292.7 L870.3,305 L884.5,309.7 L889.2,330.6 L885,345 L875,358 L868,362 L863,370 L862,385 L860.5,398 L854,416 L847.4,424 L841,429.3 L831.7,429.3 L818.6,433.2 L810.7,435.8 L802.9,439.8 L797.6,445 L796.3,452.9 L796.3,463.4 L792.4,471.2 L784.3,482.8 L776.5,492 L768.6,501 L760.7,507.6 L752.9,510.3 L745,505 L735.9,505 L728,503.7 L726.7,493.2 L729.3,482.8 L732,474.9 L737.2,469.7 L745,465.7 L752.9,461.8 L761,457 L757,444 L750,430 L741,425.5 L735,424 L732,410 L720,408 L718,393 L715,385 L710,375 L706,365.7 L691,354.3 L683.5,343 L676,344.9 L660.8,348.7 L645.7,348.7 L636.2,346.8 L628.7,337.3 L624.9,324 L626.8,310.8 L634.3,303.2 L647.6,301.4 L634.3,293.8 L626.8,290 L610.5,273.4Z"/></clipPath></defs><path d="M602.6,217.4 L604.5,215 L607,213.1 L609.1,210.7 L611.4,208.7 L612.1,206.1 L612.6,203.5 L613,200.8 L615.8,198.5 L619.2,197.3 L622.1,195 L625.7,194 L628.2,193.4 L630.2,191.7 L632.5,190.7 L635,190 L638.4,190.7 L641.8,190 L640.9,193 L640,196 L638.1,197.7 L637,200 L636.5,203 L636,206 L637.3,209.1 L639,212 L640.6,208.7 L643,206 L642.2,202.9 L641,200 L643.5,199.4 L645.7,197.9 L648.1,197.2 L650.3,195.8 L652.9,195.4 L655.2,194 L657.9,194 L659.5,196.1 L661.5,197.8 L663.5,199.6 L666.7,200.3 L670,200.8 L673,202.4 L675.6,203.1 L678.2,202.8 L680.8,203.3 L683.4,203.7 L686,203.4 L688.9,203.2 L691.9,203 L694.7,201.8 L697.6,201.5 L701.3,201.9 L705,201.5 L703.3,203.8 L701.4,206 L702.9,208.1 L704.8,209.7 L707,211 L710.6,211.9 L713.7,213.8 L716.2,214.6 L718.3,216 L720.3,217.6 L722.3,220 L725.1,221.2 L727.3,223.3 L729.8,225 L732.5,226.7 L734.8,228.9 L737.3,230.8 L740.2,231.4 L743.1,232 L745.8,233.1 L748.7,233.7 L751.2,234.4 L753.6,235.4 L756.1,235.7 L758.7,236 L761,237.2 L763.4,237.8 L766,238 L768,240.2 L770.7,241.4 L773.5,242.5 L775.7,244.5 L776.4,247.2 L777.4,249.7 L778.6,252.1 L780.2,254.4 L781.4,256.8 L783,259.5 L785.5,261.6 L787,264.3 L787.5,267.3 L788.8,270 L789.9,272.8 L792.4,273.7 L794.9,274.7 L796.7,276.8 L799.3,277.6 L802,278.7 L805.1,277.8 L807.8,279.2 L810.7,279 L813.5,279.5 L816.2,280 L818.6,281.1 L821,282.3 L822,284.7 L823.2,287 L825,289 L827.6,288.8 L830,290.1 L832.6,289.8 L834.9,291.2 L837.5,291.1 L840,291.8 L842.5,292.5 L845,292.8 L847.6,292.3 L850.1,293.1 L852.7,292.3 L855.2,292.7 L857.7,294 L859.4,296.3 L862.1,297.5 L864.1,299.4 L866.1,301.4 L868,303.4 L870.3,305 L873.3,305.5 L876.2,306.3 L878.7,308.3 L881.7,308.5 L884.5,309.7 L884.5,312.5 L885.1,315 L886.4,317.5 L886.9,320.1 L887.4,322.8 L887.8,325.4 L888.5,328 L889.2,330.6 L888.3,333.5 L887.4,336.3 L886.1,339.1 L885.8,342.1 L885,345 L883.4,347.2 L881.4,349.1 L880.3,351.7 L878.6,353.8 L876.1,355.4 L875,358 L872.7,359.3 L870.3,360.6 L868,362 L866.9,365 L864.8,367.4 L863,370 L862.7,372.5 L863.3,375 L862.3,377.5 L862.1,380 L862.8,382.5 L862,385 L861.5,387.6 L861.4,390.2 L860.9,392.8 L861,395.4 L860.5,398 L859.3,400.5 L858.3,403 L858.3,405.9 L857.4,408.5 L855.6,410.8 L854.3,413.2 L854,416 L852.6,418.2 L850.7,420 L848.9,421.9 L847.4,424 L845.4,426 L843.3,427.7 L841,429.3 L837.9,429.6 L834.8,429.5 L831.7,429.3 L829,430 L826.5,431.1 L823.9,431.8 L821.1,432.1 L818.6,433.2 L816.2,434.7 L813.3,434.8 L810.7,435.8 L807.9,436.8 L805.6,438.7 L802.9,439.8 L800.5,442.7 L797.6,445 L796.7,447.6 L797.1,450.3 L796.3,452.9 L796.7,455.5 L796.4,458.1 L796,460.8 L796.3,463.4 L795.5,466.2 L793.9,468.7 L792.4,471.2 L791,473.7 L788.8,475.6 L787.6,478.2 L785.5,480.2 L784.3,482.8 L782.7,485.4 L780.6,487.5 L778.3,489.6 L776.5,492 L774.1,493.9 L772.6,496.5 L770.9,499 L768.6,501 L767,503.1 L764.6,504.3 L763,506.3 L760.7,507.6 L758,508.1 L755.3,509 L752.9,510.3 L750.5,512.2 L747.8,513.7 L745,515 L743.2,516.7 L741.8,518.9 L740.2,520.7 L739,523 L737.7,525.1 L736.4,527.3 L734.7,529.2 L733,531 L730.1,531.9 L727.6,533.8 L724.8,534.9 L722,536 L719.5,535.6 L717,535.1 L714.5,534.6 L712,534 L709.3,531.5 L706,530 L705.6,532.8 L705,535.5 L702.9,537.8 L702.6,540.6 L701.7,543.4 L701.2,546.3 L701.5,549.3 L699.1,549.9 L696.5,549.8 L694,550.4 L691.7,551.5 L688.8,552.3 L685.9,551.9 L683,552.6 L682.5,555.1 L682.8,557.7 L683,560.2 L685.9,561.3 L688.9,562.1 L691.7,563.5 L689.2,564.8 L686.7,566.1 L684,566.8 L684.3,569.8 L683.2,572.6 L683,575.5 L681,577.4 L678.4,578.4 L676.9,580.9 L674.3,582 L671.7,583.8 L669.7,586.2 L667.7,588.6 L668.3,591.5 L670,594 L671.8,595.9 L673.9,597.4 L676.4,598.4 L674.3,601.7 L672,603.3 L670.3,605.5 L667.5,606.4 L665.5,608.3 L664.4,610.7 L662.7,612.8 L661,614.8 L659.4,617.6 L658.2,620.7 L656.8,623.6 L654.6,625.7 L656.9,627.3 L659,629 L660.5,631.9 L663,634 L665.2,635.9 L667.6,637.3 L670,639 L672,641 L674.2,643.2 L677,644.5 L679.3,646.6 L682,648 L679.5,648.5 L677,648.9 L674.5,648.7 L672,649 L669.6,650 L667.9,652.1 L665.5,653 L663.1,651.8 L660.7,650.9 L658.1,650.3 L655.6,649.5 L652.8,649.8 L650.6,648.2 L648,647.6 L645.7,646 L642.7,646 L640.3,644.6 L637.7,643.5 L635.3,642.1 L632.8,641 L630.5,639.8 L628.4,638.4 L626.4,636.8 L623.6,636.4 L621.8,634.5 L620,632.6 L618.8,630.4 L617.4,628.2 L616.1,626.1 L615.3,623.6 L615.6,621 L615,618.4 L613.6,616 L613.8,613.4 L613.1,610.9 L613,608.3 L612.7,605.6 L612.8,602.8 L613.2,600.1 L613,597.4 L613.5,594.9 L613.6,592.2 L613.7,589.6 L614.3,587.1 L614.4,584.5 L615.3,582 L616.5,579.3 L617.8,576.6 L618.4,573.7 L619.7,571 L620,568.2 L621,565.7 L622.1,563.1 L623.3,560.6 L624,558 L624.6,555.5 L624.2,552.9 L624.9,550.4 L624.8,547.9 L624.7,545.3 L625,542.8 L625.4,540.2 L626.1,537.7 L627,535.2 L627.2,532.6 L628.1,530.1 L628.4,527.5 L629.3,525 L630,522.4 L631.3,520 L632.4,517.6 L632.6,514.8 L634,512.5 L635,510 L635.4,507.5 L636.4,505.1 L637,502.6 L636.7,500 L637.8,497.6 L638.2,495.1 L637.9,492.4 L638.6,490 L638.6,487.4 L640,485.1 L640.3,482.5 L640.5,480 L641.4,477.3 L641.6,474.5 L641.8,471.8 L642.3,469 L642.4,466.2 L642.1,463.4 L643,460.7 L643.6,458.1 L643.2,455.3 L643.9,452.8 L645.2,450.3 L644.6,447.5 L645.7,445 L645.4,442.3 L645.7,439.7 L647,437.3 L646.3,434.6 L647,432 L646.8,429.3 L648.4,426.8 L647.8,424 L649.3,421.5 L649.5,418.9 L649.7,416.2 L649.8,413.5 L649.6,410.9 L648.7,408.3 L648.6,405.7 L647.1,403.2 L647.8,400.5 L647,397.9 L644.9,396 L643,393.9 L640.3,392.6 L638.8,390 L636.8,387.9 L634.3,386.5 L631.6,385.7 L629.3,384 L627.1,382.4 L624.8,380.7 L622,380 L619.5,378.7 L617.3,377 L614.7,375.4 L612.7,373.1 L610.4,371.1 L607.8,369.5 L607.1,366.4 L606.4,363.2 L606,360 L604.6,357.9 L603.3,355.7 L602.1,353.5 L600.4,351.5 L599.7,349 L598.4,346.8 L597.7,344.3 L595.8,342.4 L594.9,340 L592.9,338.2 L592.3,335.6 L590.8,333.5 L589.6,331 L588,328.8 L586.3,326.6 L584.7,324.3 L583.2,322 L581.6,320 L580.2,317.9 L577.7,316.8 L576,314.9 L574.7,312.7 L574.7,309.5 L574.7,306.3 L573.8,303.2 L575.2,300.6 L576.5,298 L577.1,295.4 L578.1,293 L578.4,290.4 L577.3,287.4 L576.8,284.2 L576.5,281 L577,278.3 L578.5,276 L579.3,273.4 L581.4,271.9 L583.6,270.5 L586,269.6 L587.6,266.4 L588.8,263 L591.4,262 L593,259.6 L595.4,258.3 L597.5,255.9 L599,253.2 L601,250.7 L601.2,248.1 L600.5,245.6 L600,243 L599.9,240.2 L600.1,237.4 L600.1,234.5 L601,231.8 L600.6,229 L600.1,226.1 L599.5,223.3 L599.6,220.4Z" fill="#fff" stroke="#2a2a2a" stroke-width="1" stroke-linejoin="round"/><path d="M557.2,199 L562.5,207 L568.6,212.2 L573,214 L580,211.3 L585.2,208.2 L592.2,209.6 L597.4,213 L601,218.3 L602.6,217.4 L600,224.4 L597.4,222.7 L594,217.4 L588.7,212.2 L585.2,213 L580,218.3 L582.6,222.7 L577.3,224.8 L574.7,221.8 L567.7,218.3 L562.5,217.4 L558,215.7Z" fill="#fff" stroke="#2a2a2a" stroke-width="1"/><path d="M659,632 L660,648 L672,648 L682,648 L672,641 L663,634.5Z" fill="#fff" stroke="#2a2a2a" stroke-width="1"/><path d="M555.2,181L557.5,181L558,188L556.5,190L555.5,187Z M556.4,193.2v1" fill="none" stroke="#333" stroke-width="0.9"/><g clip-path="url(#cc)"><path d="M600,240h20v20h-20zM620,240h20v20h-20zM640,240h20v20h-20zM660,240h20v20h-20zM680,240h20v20h-20zM740,240h20v20h-20zM760,240h20v20h-20zM660,260h20v20h-20zM700,260h20v20h-20zM740,280h20v20h-20zM760,280h20v20h-20zM840,280h20v20h-20zM680,300h20v20h-20zM740,300h20v20h-20zM760,300h20v20h-20zM780,300h20v20h-20zM800,300h20v20h-20zM840,300h20v20h-20zM860,300h20v20h-20zM660,320h20v20h-20zM680,320h20v20h-20zM740,320h20v20h-20zM760,320h20v20h-20zM800,320h20v20h-20zM820,320h20v20h-20zM840,320h20v20h-20zM640,340h20v20h-20zM660,340h20v20h-20zM680,340h20v20h-20zM740,340h20v20h-20zM760,340h20v20h-20zM780,340h20v20h-20zM800,340h20v20h-20zM820,340h20v20h-20zM840,340h20v20h-20zM860,340h20v20h-20zM740,360h20v20h-20zM800,360h20v20h-20zM820,360h20v20h-20zM840,360h20v20h-20zM860,360h20v20h-20zM600,380h20v20h-20zM620,380h20v20h-20zM640,380h20v20h-20zM660,380h20v20h-20zM680,380h20v20h-20zM700,380h20v20h-20zM720,380h20v20h-20zM760,380h20v20h-20zM820,380h20v20h-20zM840,380h20v20h-20zM860,380h20v20h-20zM880,380h20v20h-20zM760,400h20v20h-20zM820,400h20v20h-20zM840,400h20v20h-20zM600,420h20v20h-20zM620,420h20v20h-20zM640,420h20v20h-20zM660,420h20v20h-20zM680,420h20v20h-20zM700,420h20v20h-20zM720,420h20v20h-20zM740,420h20v20h-20zM760,420h20v20h-20zM820,420h20v20h-20zM600,440h20v20h-20zM620,440h20v20h-20zM640,440h20v20h-20zM660,440h20v20h-20zM680,440h20v20h-20zM700,440h20v20h-20zM720,440h20v20h-20zM740,440h20v20h-20zM760,440h20v20h-20zM820,440h20v20h-20zM840,440h20v20h-20zM860,440h20v20h-20zM880,440h20v20h-20zM760,500h20v20h-20zM780,500h20v20h-20zM800,500h20v20h-20zM820,500h20v20h-20zM840,500h20v20h-20zM860,500h20v20h-20zM880,500h20v20h-20z" fill="#f9b166"/><path d="M700,240h20v20h-20zM720,240h20v20h-20zM600,260h20v20h-20zM620,260h20v20h-20zM640,260h20v20h-20zM680,260h20v20h-20zM720,260h20v20h-20zM740,260h20v20h-20zM600,280h20v20h-20zM620,280h20v20h-20zM640,280h20v20h-20zM660,280h20v20h-20zM680,280h20v20h-20zM700,280h20v20h-20zM720,280h20v20h-20zM860,280h20v20h-20zM720,300h20v20h-20zM700,320h20v20h-20zM700,340h20v20h-20zM720,340h20v20h-20zM740,380h20v20h-20zM780,380h20v20h-20zM800,380h20v20h-20zM740,400h20v20h-20zM800,400h20v20h-20zM780,420h20v20h-20zM800,420h20v20h-20zM800,440h20v20h-20zM780,460h20v20h-20z" fill="#c8b0dc"/><path d="M780,240h20v20h-20zM800,240h20v20h-20zM820,240h20v20h-20zM840,240h20v20h-20zM860,240h20v20h-20zM880,240h20v20h-20zM760,260h20v20h-20zM780,260h20v20h-20zM800,260h20v20h-20zM820,260h20v20h-20zM840,260h20v20h-20zM860,260h20v20h-20zM880,260h20v20h-20zM780,280h20v20h-20zM800,280h20v20h-20zM820,280h20v20h-20zM880,280h20v20h-20zM700,300h20v20h-20zM820,300h20v20h-20zM880,300h20v20h-20zM720,320h20v20h-20zM780,320h20v20h-20zM880,320h20v20h-20zM880,340h20v20h-20zM600,360h20v20h-20zM620,360h20v20h-20zM640,360h20v20h-20zM660,360h20v20h-20zM680,360h20v20h-20zM700,360h20v20h-20zM720,360h20v20h-20zM760,360h20v20h-20zM780,360h20v20h-20zM880,360h20v20h-20zM780,400h20v20h-20zM860,400h20v20h-20zM880,400h20v20h-20zM840,420h20v20h-20zM860,420h20v20h-20zM880,420h20v20h-20zM780,440h20v20h-20zM760,460h20v20h-20zM800,460h20v20h-20zM820,460h20v20h-20zM840,460h20v20h-20zM860,460h20v20h-20zM880,460h20v20h-20zM740,480h20v20h-20zM760,480h20v20h-20zM600,500h20v20h-20zM620,500h20v20h-20zM640,500h20v20h-20zM660,500h20v20h-20zM680,500h20v20h-20zM700,500h20v20h-20zM720,500h20v20h-20zM740,500h20v20h-20z" fill="#f79a9a"/><path d="M600,300h20v20h-20zM620,300h20v20h-20zM640,300h20v20h-20zM660,300h20v20h-20zM600,320h20v20h-20zM620,320h20v20h-20zM640,320h20v20h-20zM860,320h20v20h-20zM600,340h20v20h-20zM620,340h20v20h-20zM600,460h20v20h-20zM620,460h20v20h-20zM640,460h20v20h-20zM660,460h20v20h-20zM680,460h20v20h-20zM700,460h20v20h-20zM720,460h20v20h-20zM740,460h20v20h-20zM600,480h20v20h-20zM620,480h20v20h-20zM640,480h20v20h-20zM660,480h20v20h-20zM680,480h20v20h-20zM700,480h20v20h-20zM720,480h20v20h-20z" fill="#fdf7a8"/><path d="M600,400h20v20h-20zM620,400h20v20h-20zM640,400h20v20h-20zM660,400h20v20h-20zM680,400h20v20h-20zM700,400h20v20h-20zM720,400h20v20h-20z" fill="#aee08a"/><path d="M780,480h20v20h-20zM800,480h20v20h-20zM820,480h20v20h-20zM840,480h20v20h-20zM860,480h20v20h-20zM880,480h20v20h-20z" fill="#ffffff"/><path d="M599.0,233.5a5.1,3.0,106,1,0,-2.8,9.9a5.1,3.0,106,1,0,2.8,-9.9M599.8,233.0a6.3,2.2,55,1,0,7.3,10.2a6.3,2.2,55,1,0,-7.3,-10.2M619.7,238.3a3.6,3.1,11,1,0,7.0,1.3a3.6,3.1,11,1,0,-7.0,-1.3M632.0,233.5a5.1,2.9,152,1,0,-9.0,4.9a5.1,2.9,152,1,0,9.0,-4.9M634.4,234.7a5.8,2.9,50,1,0,7.5,8.9a5.8,2.9,50,1,0,-7.5,-8.9M650.6,230.0a4.9,3.7,70,1,0,3.4,9.2a4.9,3.7,70,1,0,-3.4,-9.2M665.3,236.6a4.2,3.8,85,1,0,0.8,8.4a4.2,3.8,85,1,0,-0.8,-8.4M670.1,232.9a5.7,3.6,49,1,0,7.5,8.6a5.7,3.6,49,1,0,-7.5,-8.6M682.1,230.4a4.1,3.1,81,1,0,1.4,8.1a4.1,3.1,81,1,0,-1.4,-8.1M690.1,234.3a5.8,2.2,76,1,0,2.8,11.2a5.8,2.2,76,1,0,-2.8,-11.2M713.4,237.0a5.7,2.2,178,1,0,-11.5,0.4a5.7,2.2,178,1,0,11.5,-0.4M711.2,235.0a4.7,2.6,13,1,0,9.1,2.1a4.7,2.6,13,1,0,-9.1,-2.1M721.9,233.1a5.6,2.7,82,1,0,1.6,11.1a5.6,2.7,82,1,0,-1.6,-11.1M731.9,234.8a6.5,2.4,28,1,0,11.6,6.1a6.5,2.4,28,1,0,-11.6,-6.1M749.4,239.8a4.2,3.5,169,1,0,-8.2,1.6a4.2,3.5,169,1,0,8.2,-1.6M759.4,238.6a6.0,2.5,148,1,0,-10.1,6.3a6.0,2.5,148,1,0,10.1,-6.3M762.2,232.4a6.0,2.1,41,1,0,9.1,7.9a6.0,2.1,41,1,0,-9.1,-7.9M776.6,232.8a3.7,2.4,66,1,0,3.0,6.8a3.7,2.4,66,1,0,-3.0,-6.8M793.7,229.2a6.6,4.0,118,1,0,-6.3,11.7a6.6,4.0,118,1,0,6.3,-11.7M803.0,237.7a3.6,2.0,164,1,0,-7.0,2.0a3.6,2.0,164,1,0,7.0,-2.0M827.6,234.0a6.7,2.7,123,1,0,-7.4,11.2a6.7,2.7,123,1,0,7.4,-11.2M841.4,232.0a5.6,2.2,115,1,0,-4.8,10.2a5.6,2.2,115,1,0,4.8,-10.2M866.9,234.5a5.2,3.2,166,1,0,-10.2,2.6a5.2,3.2,166,1,0,10.2,-2.6M863.0,231.1a5.9,2.4,31,1,0,10.1,6.0a5.9,2.4,31,1,0,-10.1,-6.0M884.5,233.5a6.6,2.7,120,1,0,-6.6,11.5a6.6,2.7,120,1,0,6.6,-11.5M881.2,231.2a6.7,3.8,69,1,0,4.8,12.5a6.7,3.8,69,1,0,-4.8,-12.5M603.3,242.1a5.2,3.7,153,1,0,-9.3,4.8a5.2,3.7,153,1,0,9.3,-4.8M605.0,246.5a4.1,2.9,50,1,0,5.3,6.2a4.1,2.9,50,1,0,-5.3,-6.2M622.3,245.2a3.6,3.7,7,1,0,7.2,0.9a3.6,3.7,7,1,0,-7.2,-0.9M626.0,244.0a6.3,2.0,24,1,0,11.4,5.2a6.3,2.0,24,1,0,-11.4,-5.2M655.1,239.5a4.1,2.0,85,1,0,0.7,8.2a4.1,2.0,85,1,0,-0.7,-8.2M664.0,238.7a4.7,3.4,94,1,0,-0.6,9.4a4.7,3.4,94,1,0,0.6,-9.4M664.9,246.4a6.3,3.8,16,1,0,12.1,3.4a6.3,3.8,16,1,0,-12.1,-3.4M686.3,246.4a5.1,3.3,164,1,0,-9.8,2.8a5.1,3.3,164,1,0,9.8,-2.8M707.7,244.6a4.7,2.2,79,1,0,1.7,9.3a4.7,2.2,79,1,0,-1.7,-9.3M734.0,241.9a5.9,3.9,89,1,0,0.3,11.8a5.9,3.9,89,1,0,-0.3,-11.8M749.1,238.7a5.3,2.6,131,1,0,-7.0,8.0a5.3,2.6,131,1,0,7.0,-8.0M761.3,242.7a6.5,3.9,94,1,0,-1.0,12.9a6.5,3.9,94,1,0,1.0,-12.9M761.3,243.1a5.3,3.2,5,1,0,10.5,0.9a5.3,3.2,5,1,0,-10.5,-0.9M777.6,239.8a6.3,3.1,88,1,0,0.4,12.6a6.3,3.1,88,1,0,-0.4,-12.6M601.9,251.5a6.2,2.7,84,1,0,1.3,12.3a6.2,2.7,84,1,0,-1.3,-12.3M617.3,251.8a3.5,3.4,152,1,0,-6.3,3.3a3.5,3.4,152,1,0,6.3,-3.3M643.3,250.2a5.3,4.0,145,1,0,-8.6,6.1a5.3,4.0,145,1,0,8.6,-6.1M661.5,245.9a5.1,2.0,64,1,0,4.5,9.2a5.1,2.0,64,1,0,-4.5,-9.2M667.8,249.1a6.8,3.3,61,1,0,6.6,11.9a6.8,3.3,61,1,0,-6.6,-11.9M681.4,250.2a4.9,4.0,116,1,0,-4.2,8.8a4.9,4.0,116,1,0,4.2,-8.8M688.1,251.9a4.2,2.8,18,1,0,8.0,2.5a4.2,2.8,18,1,0,-8.0,-2.5M716.7,252.5a3.8,3.2,137,1,0,-5.5,5.2a3.8,3.2,137,1,0,5.5,-5.2M728.4,245.7a5.0,3.1,108,1,0,-3.0,9.5a5.0,3.1,108,1,0,3.0,-9.5M736.4,248.0a5.5,2.6,129,1,0,-6.9,8.5a5.5,2.6,129,1,0,6.9,-8.5M743.0,247.6a3.6,2.3,136,1,0,-5.2,5.1a3.6,2.3,136,1,0,5.2,-5.1M750.9,253.7a5.2,3.9,44,1,0,7.5,7.2a5.2,3.9,44,1,0,-7.5,-7.2M606.5,261.4a5.0,3.6,55,1,0,5.8,8.2a5.0,3.6,55,1,0,-5.8,-8.2M609.7,255.2a6.6,2.5,65,1,0,5.6,12.0a6.6,2.5,65,1,0,-5.6,-12.0M652.7,260.9a3.7,3.1,142,1,0,-5.9,4.6a3.7,3.1,142,1,0,5.9,-4.6M662.4,261.0a4.4,2.4,138,1,0,-6.5,5.9a4.4,2.4,138,1,0,6.5,-5.9M672.6,260.1a4.7,3.9,121,1,0,-4.8,8.0a4.7,3.9,121,1,0,4.8,-8.0M694.5,261.2a6.3,3.7,160,1,0,-11.9,4.3a6.3,3.7,160,1,0,11.9,-4.3M695.3,255.7a7.0,2.8,30,1,0,12.0,7.0a7.0,2.8,30,1,0,-12.0,-7.0M703.7,255.7a6.9,2.1,56,1,0,7.8,11.4a6.9,2.1,56,1,0,-7.8,-11.4M755.5,253.4a6.8,3.6,69,1,0,4.8,12.8a6.8,3.6,69,1,0,-4.8,-12.8M779.5,254.9a4.4,3.7,93,1,0,-0.4,8.8a4.4,3.7,93,1,0,0.4,-8.8M812.1,259.0a5.0,3.8,16,1,0,9.5,2.8a5.0,3.8,16,1,0,-9.5,-2.8M877.1,261.2a4.7,3.7,17,1,0,8.9,2.7a4.7,3.7,17,1,0,-8.9,-2.7M607.5,262.1a5.0,3.0,117,1,0,-4.5,8.9a5.0,3.0,117,1,0,4.5,-8.9M664.2,269.0a6.4,2.4,170,1,0,-12.7,2.2a6.4,2.4,170,1,0,12.7,-2.2M665.5,264.0a4.4,3.2,125,1,0,-5.1,7.1a4.4,3.2,125,1,0,5.1,-7.1M673.7,273.0a5.1,2.2,175,1,0,-10.2,0.8a5.1,2.2,175,1,0,10.2,-0.8M671.4,269.2a5.5,3.1,48,1,0,7.4,8.1a5.5,3.1,48,1,0,-7.4,-8.1M694.1,271.0a5.6,2.2,148,1,0,-9.6,5.9a5.6,2.2,148,1,0,9.6,-5.9M706.4,265.8a4.1,4.0,169,1,0,-8.1,1.6a4.1,4.0,169,1,0,8.1,-1.6M736.4,262.5a4.0,3.9,108,1,0,-2.5,7.6a4.0,3.9,108,1,0,2.5,-7.6M746.0,265.1a5.9,3.5,135,1,0,-8.4,8.3a5.9,3.5,135,1,0,8.4,-8.3M763.6,271.7a5.3,2.9,163,1,0,-10.2,3.2a5.3,2.9,163,1,0,10.2,-3.2M766.6,260.1a6.7,3.5,108,1,0,-4.0,12.7a6.7,3.5,108,1,0,4.0,-12.7M775.4,264.7a3.7,2.2,80,1,0,1.2,7.4a3.7,2.2,80,1,0,-1.2,-7.4M888.4,269.6a4.8,3.3,159,1,0,-9.0,3.4a4.8,3.3,159,1,0,9.0,-3.4M655.3,273.3a6.3,3.6,42,1,0,9.2,8.4a6.3,3.6,42,1,0,-9.2,-8.4M671.5,270.8a5.2,2.1,107,1,0,-3.1,10.0a5.2,2.1,107,1,0,3.1,-10.0M696.7,270.1a5.7,3.1,48,1,0,7.6,8.4a5.7,3.1,48,1,0,-7.6,-8.4M734.6,276.4a3.6,2.5,160,1,0,-6.8,2.5a3.6,2.5,160,1,0,6.8,-2.5M773.4,274.7a6.6,2.9,71,1,0,4.4,12.5a6.6,2.9,71,1,0,-4.4,-12.5M781.2,274.7a4.3,2.7,33,1,0,7.1,4.6a4.3,2.7,33,1,0,-7.1,-4.6M795.2,275.9a6.5,2.4,69,1,0,4.7,12.2a6.5,2.4,69,1,0,-4.7,-12.2M872.1,274.2a4.9,2.8,156,1,0,-9.0,4.0a4.9,2.8,156,1,0,9.0,-4.0M890.6,272.6a6.9,2.6,121,1,0,-7.1,11.9a6.9,2.6,121,1,0,7.1,-11.9M606.7,281.4a5.8,3.9,156,1,0,-10.7,4.7a5.8,3.9,156,1,0,10.7,-4.7M619.7,279.5a4.3,2.2,62,1,0,4.1,7.6a4.3,2.2,62,1,0,-4.1,-7.6M666.4,286.1a4.8,3.2,170,1,0,-9.4,1.7a4.8,3.2,170,1,0,9.4,-1.7M700.9,280.6a5.4,3.2,101,1,0,-2.1,10.6a5.4,3.2,101,1,0,2.1,-10.6M753.3,286.6a4.1,3.7,157,1,0,-7.5,3.2a4.1,3.7,157,1,0,7.5,-3.2M758.4,279.1a6.3,2.8,129,1,0,-7.9,9.8a6.3,2.8,129,1,0,7.9,-9.8M768.1,285.5a4.7,3.5,152,1,0,-8.2,4.4a4.7,3.5,152,1,0,8.2,-4.4M781.8,283.5a6.0,3.2,150,1,0,-10.3,6.0a6.0,3.2,150,1,0,10.3,-6.0M845.1,279.5a5.5,2.3,113,1,0,-4.2,10.1a5.5,2.3,113,1,0,4.2,-10.1M858.3,285.4a3.8,2.4,87,1,0,0.4,7.5a3.8,2.4,87,1,0,-0.4,-7.5M878.2,280.7a5.2,2.8,145,1,0,-8.5,5.9a5.2,2.8,145,1,0,8.5,-5.9M608.1,288.3a6.3,3.5,72,1,0,3.9,11.9a6.3,3.5,72,1,0,-3.9,-11.9M631.3,295.5a7.0,2.2,171,1,0,-13.7,2.2a7.0,2.2,171,1,0,13.7,-2.2M680.2,288.8a3.9,4.0,77,1,0,1.7,7.6a3.9,4.0,77,1,0,-1.7,-7.6M744.1,290.1a6.1,4.0,72,1,0,3.7,11.6a6.1,4.0,72,1,0,-3.7,-11.6M769.9,295.9a4.5,3.3,13,1,0,8.7,2.1a4.5,3.3,13,1,0,-8.7,-2.1M786.3,294.4a4.3,3.6,154,1,0,-7.8,3.8a4.3,3.6,154,1,0,7.8,-3.8M831.3,288.9a4.5,3.2,125,1,0,-5.1,7.3a4.5,3.2,125,1,0,5.1,-7.3M830.6,289.2a5.1,2.3,21,1,0,9.6,3.7a5.1,2.3,21,1,0,-9.6,-3.7M851.9,291.4a4.2,4.0,124,1,0,-4.7,6.9a4.2,4.0,124,1,0,4.7,-6.9M857.9,288.4a4.9,2.3,114,1,0,-3.9,9.0a4.9,2.3,114,1,0,3.9,-9.0M874.5,292.1a5.1,3.9,70,1,0,3.5,9.6a5.1,3.9,70,1,0,-3.5,-9.6M603.2,295.2a4.4,2.8,61,1,0,4.2,7.7a4.4,2.8,61,1,0,-4.2,-7.7M655.7,301.1a5.8,3.4,180,1,0,-11.5,0.1a5.8,3.4,180,1,0,11.5,-0.1M690.1,300.5a4.7,3.1,96,1,0,-1.0,9.4a4.7,3.1,96,1,0,1.0,-9.4M692.0,299.2a5.3,2.2,102,1,0,-2.2,10.3a5.3,2.2,102,1,0,2.2,-10.3M721.1,294.8a4.0,3.9,94,1,0,-0.6,8.1a4.0,3.9,94,1,0,0.6,-8.1M750.6,300.2a4.4,2.2,165,1,0,-8.5,2.2a4.4,2.2,165,1,0,8.5,-2.2M758.0,295.5a6.6,3.9,102,1,0,-2.8,12.9a6.6,3.9,102,1,0,2.8,-12.9M762.9,301.9a4.5,3.5,46,1,0,6.3,6.6a4.5,3.5,46,1,0,-6.3,-6.6M772.2,296.7a4.8,2.9,81,1,0,1.5,9.4a4.8,2.9,81,1,0,-1.5,-9.4M776.7,299.6a5.3,3.1,72,1,0,3.3,10.2a5.3,3.1,72,1,0,-3.3,-10.2M795.1,301.8a4.9,3.9,1,1,0,9.8,0.2a4.9,3.9,1,1,0,-9.8,-0.2M803.5,301.1a5.6,2.7,54,1,0,6.5,9.1a5.6,2.7,54,1,0,-6.5,-9.1M818.6,299.1a5.2,3.0,136,1,0,-7.5,7.3a5.2,3.0,136,1,0,7.5,-7.3M843.4,294.9a6.4,3.6,116,1,0,-5.5,11.5a6.4,3.6,116,1,0,5.5,-11.5M848.0,302.8a5.7,3.1,167,1,0,-11.1,2.6a5.7,3.1,167,1,0,11.1,-2.6M867.3,297.5a6.1,2.8,122,1,0,-6.5,10.3a6.1,2.8,122,1,0,6.5,-10.3M878.3,300.9a6.2,2.9,135,1,0,-8.9,8.8a6.2,2.9,135,1,0,8.9,-8.8M879.7,298.7a3.9,2.6,132,1,0,-5.3,5.8a3.9,2.6,132,1,0,5.3,-5.8M877.1,296.9a5.8,3.1,20,1,0,10.9,4.1a5.8,3.1,20,1,0,-10.9,-4.1M695.9,303.8a5.6,2.2,138,1,0,-8.3,7.6a5.6,2.2,138,1,0,8.3,-7.6M708.5,312.3a5.9,2.7,171,1,0,-11.7,1.8a5.9,2.7,171,1,0,11.7,-1.8M707.5,304.1a6.0,2.5,45,1,0,8.6,8.5a6.0,2.5,45,1,0,-8.6,-8.5M736.2,310.2a6.2,2.5,10,1,0,12.2,2.1a6.2,2.5,10,1,0,-12.2,-2.1M751.8,304.9a4.3,2.9,67,1,0,3.4,7.9a4.3,2.9,67,1,0,-3.4,-7.9M755.7,309.9a5.5,2.7,42,1,0,8.2,7.3a5.5,2.7,42,1,0,-8.2,-7.3M777.2,307.8a7.0,2.6,157,1,0,-12.8,5.4a7.0,2.6,157,1,0,12.8,-5.4M782.1,311.1a3.6,3.1,177,1,0,-7.2,0.4a3.6,3.1,177,1,0,7.2,-0.4M798.6,306.0a5.2,2.4,127,1,0,-6.3,8.4a5.2,2.4,127,1,0,6.3,-8.4M810.5,309.4a5.2,3.1,175,1,0,-10.4,0.9a5.2,3.1,175,1,0,10.4,-0.9M819.1,306.2a4.7,3.4,169,1,0,-9.2,1.8a4.7,3.4,169,1,0,9.2,-1.8M858.1,299.8a6.4,3.4,94,1,0,-0.8,12.8a6.4,3.4,94,1,0,0.8,-12.8M869.1,312.4a4.7,2.7,3,1,0,9.3,0.4a4.7,2.7,3,1,0,-9.3,-0.4M883.0,303.5a5.3,2.7,121,1,0,-5.6,9.1a5.3,2.7,121,1,0,5.6,-9.1M882.8,304.9a4.1,2.3,46,1,0,5.8,5.9a4.1,2.3,46,1,0,-5.8,-5.9M641.7,312.1a4.8,2.6,107,1,0,-2.8,9.2a4.8,2.6,107,1,0,2.8,-9.2M646.6,314.5a3.5,3.0,68,1,0,2.6,6.6a3.5,3.0,68,1,0,-2.6,-6.6M679.2,315.1a4.6,2.4,22,1,0,8.5,3.4a4.6,2.4,22,1,0,-8.5,-3.4M700.3,317.3a6.2,3.1,170,1,0,-12.2,2.0a6.2,3.1,170,1,0,12.2,-2.0M703.1,314.7a4.6,3.5,166,1,0,-8.9,2.2a4.6,3.5,166,1,0,8.9,-2.2M739.3,317.7a5.1,2.4,3,1,0,10.2,0.5a5.1,2.4,3,1,0,-10.2,-0.5M748.0,308.7a5.7,2.7,85,1,0,1.0,11.3a5.7,2.7,85,1,0,-1.0,-11.3M757.3,310.2a6.6,3.2,75,1,0,3.4,12.7a6.6,3.2,75,1,0,-3.4,-12.7M772.9,316.3a6.7,2.5,168,1,0,-13.1,2.7a6.7,2.5,168,1,0,13.1,-2.7M773.6,316.9a5.3,4.0,52,1,0,6.5,8.3a5.3,4.0,52,1,0,-6.5,-8.3M784.8,318.9a5.5,2.3,171,1,0,-10.9,1.8a5.5,2.3,171,1,0,10.9,-1.8M799.1,315.5a3.5,3.0,48,1,0,4.7,5.2a3.5,3.0,48,1,0,-4.7,-5.2M819.2,318.8a5.0,2.2,144,1,0,-8.2,5.9a5.0,2.2,144,1,0,8.2,-5.9M864.8,309.7a6.7,2.0,92,1,0,-0.5,13.4a6.7,2.0,92,1,0,0.5,-13.4M871.7,314.3a6.7,3.9,116,1,0,-5.9,12.0a6.7,3.9,116,1,0,5.9,-12.0M870.6,313.6a6.9,3.7,56,1,0,7.8,11.5a6.9,3.7,56,1,0,-7.8,-11.5M877.1,316.9a6.9,3.2,23,1,0,12.8,5.3a6.9,3.2,23,1,0,-12.8,-5.3M637.6,322.2a6.2,2.7,50,1,0,7.9,9.6a6.2,2.7,50,1,0,-7.9,-9.6M664.5,323.3a5.2,3.9,22,1,0,9.6,3.9a5.2,3.9,22,1,0,-9.6,-3.9M683.4,320.1a7.0,3.1,34,1,0,11.6,7.8a7.0,3.1,34,1,0,-11.6,-7.8M699.6,318.3a5.4,2.5,130,1,0,-6.9,8.4a5.4,2.5,130,1,0,6.9,-8.4M745.9,321.0a6.9,2.2,55,1,0,8.0,11.3a6.9,2.2,55,1,0,-8.0,-11.3M760.4,327.2a4.9,2.8,160,1,0,-9.3,3.4a4.9,2.8,160,1,0,9.3,-3.4M763.1,323.4a5.1,2.7,79,1,0,2.0,9.9a5.1,2.7,79,1,0,-2.0,-9.9M777.4,321.3a4.9,2.6,139,1,0,-7.5,6.5a4.9,2.6,139,1,0,7.5,-6.5M802.5,324.4a5.8,2.9,118,1,0,-5.4,10.4a5.8,2.9,118,1,0,5.4,-10.4M816.1,324.1a4.9,4.0,35,1,0,8.0,5.7a4.9,4.0,35,1,0,-8.0,-5.7M853.0,322.1a7.0,2.3,141,1,0,-10.7,8.8a7.0,2.3,141,1,0,10.7,-8.8M857.9,318.1a6.6,3.3,52,1,0,8.2,10.5a6.6,3.3,52,1,0,-8.2,-10.5M880.2,322.7a6.4,2.8,49,1,0,8.4,9.7a6.4,2.8,49,1,0,-8.4,-9.7M635.2,330.1a7.0,2.4,40,1,0,10.6,9.0a7.0,2.4,40,1,0,-10.6,-9.0M646.0,326.6a4.7,2.9,78,1,0,2.0,9.2a4.7,2.9,78,1,0,-2.0,-9.2M659.1,334.1a4.1,2.7,127,1,0,-5.0,6.5a4.1,2.7,127,1,0,5.0,-6.5M656.5,334.2a4.3,2.7,41,1,0,6.5,5.7a4.3,2.7,41,1,0,-6.5,-5.7M680.1,326.3a4.7,4.0,108,1,0,-2.9,9.0a4.7,4.0,108,1,0,2.9,-9.0M685.9,328.6a3.6,3.4,32,1,0,6.1,3.8a3.6,3.4,32,1,0,-6.1,-3.8M764.0,331.5a6.6,4.0,165,1,0,-12.7,3.4a6.6,4.0,165,1,0,12.7,-3.4M769.0,323.7a6.9,3.1,93,1,0,-0.6,13.8a6.9,3.1,93,1,0,0.6,-13.8M779.4,336.7a7.0,2.2,179,1,0,-13.9,0.3a7.0,2.2,179,1,0,13.9,-0.3M779.2,325.6a5.7,2.2,101,1,0,-2.2,11.3a5.7,2.2,101,1,0,2.2,-11.3M798.3,333.0a4.3,2.9,98,1,0,-1.2,8.4a4.3,2.9,98,1,0,1.2,-8.4M839.2,331.1a4.1,2.9,172,1,0,-8.1,1.1a4.1,2.9,172,1,0,8.1,-1.1M859.3,326.2a6.9,2.5,50,1,0,8.8,10.6a6.9,2.5,50,1,0,-8.8,-10.6M646.5,340.0a3.6,2.2,52,1,0,4.5,5.7a3.6,2.2,52,1,0,-4.5,-5.7M660.4,335.9a5.5,3.0,70,1,0,3.8,10.3a5.5,3.0,70,1,0,-3.8,-10.3M676.2,340.5a5.4,3.9,24,1,0,9.9,4.4a5.4,3.9,24,1,0,-9.9,-4.4M679.1,342.9a6.0,3.8,7,1,0,11.8,1.5a6.0,3.8,7,1,0,-11.8,-1.5M740.9,343.2a4.8,3.4,34,1,0,7.9,5.4a4.8,3.4,34,1,0,-7.9,-5.4M748.1,339.6a4.7,2.0,0,1,0,9.4,0.0a4.7,2.0,0,1,0,-9.4,-0.0M747.2,339.2a7.0,3.3,12,1,0,13.6,2.8a7.0,3.3,12,1,0,-13.6,-2.8M773.6,338.6a6.0,3.7,168,1,0,-11.8,2.4a6.0,3.7,168,1,0,11.8,-2.4M772.8,336.0a4.6,3.5,83,1,0,1.1,9.1a4.6,3.5,83,1,0,-1.1,-9.1M798.9,341.9a3.8,2.1,83,1,0,1.0,7.6a3.8,2.1,83,1,0,-1.0,-7.6M802.5,341.2a6.5,2.7,20,1,0,12.2,4.5a6.5,2.7,20,1,0,-12.2,-4.5M811.6,337.5a3.6,2.3,12,1,0,7.1,1.4a3.6,2.3,12,1,0,-7.1,-1.4M838.8,339.6a6.2,3.3,84,1,0,1.2,12.4a6.2,3.3,84,1,0,-1.2,-12.4M842.3,336.2a5.6,3.0,92,1,0,-0.4,11.2a5.6,3.0,92,1,0,0.4,-11.2M876.2,334.7a4.0,2.3,76,1,0,1.9,7.8a4.0,2.3,76,1,0,-1.9,-7.8M644.6,345.5a6.3,2.1,91,1,0,-0.2,12.6a6.3,2.1,91,1,0,0.2,-12.6M652.2,343.9a6.5,2.5,99,1,0,-2.1,12.9a6.5,2.5,99,1,0,2.1,-12.9M659.0,341.4a6.2,2.7,76,1,0,3.1,11.9a6.2,2.7,76,1,0,-3.1,-11.9M668.2,349.8a3.9,2.2,31,1,0,6.7,4.0a3.9,2.2,31,1,0,-6.7,-4.0M691.9,345.3a6.0,3.2,110,1,0,-4.2,11.2a6.0,3.2,110,1,0,4.2,-11.2M747.1,351.4a4.2,2.2,14,1,0,8.1,2.0a4.2,2.2,14,1,0,-8.1,-2.0M757.6,346.5a5.1,3.2,57,1,0,5.5,8.6a5.1,3.2,57,1,0,-5.5,-8.6M769.0,347.7a6.9,2.7,166,1,0,-13.4,3.3a6.9,2.7,166,1,0,13.4,-3.3M778.1,344.4a6.3,2.2,100,1,0,-2.3,12.5a6.3,2.2,100,1,0,2.3,-12.5M779.8,342.8a4.0,4.0,104,1,0,-2.0,7.9a4.0,4.0,104,1,0,2.0,-7.9M802.4,343.4a4.9,3.0,128,1,0,-6.1,7.8a4.9,3.0,128,1,0,6.1,-7.8M821.6,345.5a6.6,2.1,48,1,0,8.8,9.8a6.6,2.1,48,1,0,-8.8,-9.8M851.7,344.2a7.0,3.7,68,1,0,5.1,12.9a7.0,3.7,68,1,0,-5.1,-12.9M877.4,346.4a4.1,2.5,162,1,0,-7.8,2.5a4.1,2.5,162,1,0,7.8,-2.5M649.1,356.7a4.4,3.6,166,1,0,-8.6,2.2a4.4,3.6,166,1,0,8.6,-2.2M651.5,359.3a4.1,4.0,36,1,0,6.6,4.8a4.1,4.0,36,1,0,-6.6,-4.8M667.2,350.7a5.0,3.7,123,1,0,-5.4,8.5a5.0,3.7,123,1,0,5.4,-8.5M664.3,357.1a5.3,2.1,51,1,0,6.6,8.3a5.3,2.1,51,1,0,-6.6,-8.3M670.9,356.1a5.6,3.6,13,1,0,10.9,2.5a5.6,3.6,13,1,0,-10.9,-2.5M679.7,359.2a4.3,2.1,9,1,0,8.5,1.4a4.3,2.1,9,1,0,-8.5,-1.4M687.8,358.1a5.5,2.6,3,1,0,10.9,0.6a5.5,2.6,3,1,0,-10.9,-0.6M735.6,354.7a6.0,3.3,83,1,0,1.5,12.0a6.0,3.3,83,1,0,-1.5,-12.0M736.0,357.6a6.4,3.7,9,1,0,12.6,2.1a6.4,3.7,9,1,0,-12.6,-2.1M751.5,352.3a6.7,2.1,86,1,0,1.0,13.3a6.7,2.1,86,1,0,-1.0,-13.3M760.9,357.8a5.5,2.3,136,1,0,-7.8,7.6a5.5,2.3,136,1,0,7.8,-7.6M760.9,355.6a6.6,2.0,40,1,0,10.0,8.6a6.6,2.0,40,1,0,-10.0,-8.6M795.8,354.7a4.7,2.8,85,1,0,0.8,9.3a4.7,2.8,85,1,0,-0.8,-9.3M809.2,350.8a5.8,3.2,63,1,0,5.2,10.2a5.8,3.2,63,1,0,-5.2,-10.2M828.5,353.6a3.8,2.4,132,1,0,-5.1,5.7a3.8,2.4,132,1,0,5.1,-5.7M836.9,353.0a4.3,3.6,162,1,0,-8.3,2.7a4.3,3.6,162,1,0,8.3,-2.7M850.1,356.3a4.4,3.1,119,1,0,-4.3,7.8a4.4,3.1,119,1,0,4.3,-7.8M847.4,354.6a6.9,2.4,41,1,0,10.5,9.0a6.9,2.4,41,1,0,-10.5,-9.0M624.8,365.9a3.6,3.7,110,1,0,-2.4,6.7a3.6,3.7,110,1,0,2.4,-6.7M639.2,364.1a5.8,3.2,145,1,0,-9.6,6.6a5.8,3.2,145,1,0,9.6,-6.6M659.2,366.5a4.8,2.0,150,1,0,-8.2,4.8a4.8,2.0,150,1,0,8.2,-4.8M730.3,366.2a4.1,3.1,112,1,0,-3.1,7.5a4.1,3.1,112,1,0,3.1,-7.5M740.1,362.8a5.3,2.5,177,1,0,-10.6,0.6a5.3,2.5,177,1,0,10.6,-0.6M757.7,363.1a3.8,3.2,14,1,0,7.4,1.8a3.8,3.2,14,1,0,-7.4,-1.8M775.3,356.2a6.4,3.0,80,1,0,2.1,12.5a6.4,3.0,80,1,0,-2.1,-12.5M810.7,362.5a3.5,3.9,135,1,0,-5.0,4.9a3.5,3.9,135,1,0,5.0,-4.9M819.3,362.9a4.1,2.1,110,1,0,-2.8,7.6a4.1,2.1,110,1,0,2.8,-7.6M819.1,367.7a4.3,2.4,26,1,0,7.7,3.9a4.3,2.4,26,1,0,-7.7,-3.9M823.6,362.0a4.8,3.9,56,1,0,5.3,8.0a4.8,3.9,56,1,0,-5.3,-8.0M843.9,364.9a3.6,3.2,157,1,0,-6.7,2.8a3.6,3.2,157,1,0,6.7,-2.8M846.3,363.2a5.9,3.7,131,1,0,-7.7,8.9a5.9,3.7,131,1,0,7.7,-8.9M860.2,362.7a6.6,2.7,15,1,0,12.7,3.4a6.6,2.7,15,1,0,-12.7,-3.4M871.5,361.9a5.7,3.3,17,1,0,10.8,3.4a5.7,3.3,17,1,0,-10.8,-3.4M596.4,369.7a3.5,3.1,97,1,0,-0.8,7.0a3.5,3.1,97,1,0,0.8,-7.0M607.5,373.3a4.3,2.4,87,1,0,0.5,8.6a4.3,2.4,87,1,0,-0.5,-8.6M625.5,377.2a6.6,2.8,177,1,0,-13.2,0.6a6.6,2.8,177,1,0,13.2,-0.6M623.5,374.2a4.2,2.0,23,1,0,7.8,3.3a4.2,2.0,23,1,0,-7.8,-3.3M697.8,367.3a6.1,3.7,82,1,0,1.6,12.1a6.1,3.7,82,1,0,-1.6,-12.1M725.1,370.7a5.4,2.3,50,1,0,7.0,8.3a5.4,2.3,50,1,0,-7.0,-8.3M732.1,371.3a5.7,2.1,36,1,0,9.3,6.7a5.7,2.1,36,1,0,-9.3,-6.7M766.0,369.1a6.1,2.6,109,1,0,-4.0,11.5a6.1,2.6,109,1,0,4.0,-11.5M828.0,369.6a4.8,2.9,152,1,0,-8.5,4.4a4.8,2.9,152,1,0,8.5,-4.4M843.4,371.0a5.0,3.8,170,1,0,-9.9,1.7a5.0,3.8,170,1,0,9.9,-1.7M848.4,371.5a5.1,2.4,142,1,0,-8.0,6.3a5.1,2.4,142,1,0,8.0,-6.3M846.6,370.8a4.2,2.4,14,1,0,8.2,2.1a4.2,2.4,14,1,0,-8.2,-2.1M874.9,368.0a5.9,2.4,132,1,0,-7.9,8.8a5.9,2.4,132,1,0,7.9,-8.8M623.9,379.9a4.1,3.8,32,1,0,6.9,4.3a4.1,3.8,32,1,0,-6.9,-4.3M652.1,374.4a6.5,2.2,97,1,0,-1.6,13.0a6.5,2.2,97,1,0,1.6,-13.0M673.7,374.3a6.5,2.1,117,1,0,-5.9,11.7a6.5,2.1,117,1,0,5.9,-11.7M676.9,376.1a4.3,2.9,76,1,0,2.1,8.4a4.3,2.9,76,1,0,-2.1,-8.4M694.8,382.1a4.7,2.5,128,1,0,-5.8,7.3a4.7,2.5,128,1,0,5.8,-7.3M707.5,380.9a6.5,2.5,157,1,0,-12.0,5.2a6.5,2.5,157,1,0,12.0,-5.2M710.5,376.0a5.3,3.1,101,1,0,-2.0,10.5a5.3,3.1,101,1,0,2.0,-10.5M714.7,382.8a7.0,2.0,9,1,0,13.7,2.3a7.0,2.0,9,1,0,-13.7,-2.3M732.2,378.3a4.1,3.0,152,1,0,-7.3,3.9a4.1,3.0,152,1,0,7.3,-3.9M748.6,378.4a5.6,3.8,121,1,0,-5.8,9.5a5.6,3.8,121,1,0,5.8,-9.5M751.3,380.7a4.5,3.2,16,1,0,8.5,2.5a4.5,3.2,16,1,0,-8.5,-2.5M803.5,383.3a4.4,3.6,19,1,0,8.3,2.8a4.4,3.6,19,1,0,-8.3,-2.8M839.6,378.5a5.3,2.7,70,1,0,3.6,10.1a5.3,2.7,70,1,0,-3.6,-10.1M851.7,374.1a5.3,2.3,132,1,0,-7.1,7.9a5.3,2.3,132,1,0,7.1,-7.9M855.1,376.5a5.6,2.9,123,1,0,-6.1,9.4a5.6,2.9,123,1,0,6.1,-9.4M858.7,381.5a3.9,3.0,46,1,0,5.4,5.5a3.9,3.0,46,1,0,-5.4,-5.5M870.8,380.0a6.1,2.3,113,1,0,-4.8,11.2a6.1,2.3,113,1,0,4.8,-11.2M878.5,379.4a3.6,3.8,174,1,0,-7.1,0.8a3.6,3.8,174,1,0,7.1,-0.8M605.0,388.5a4.1,2.1,34,1,0,6.9,4.6a4.1,2.1,34,1,0,-6.9,-4.6M616.7,385.6a5.7,3.1,116,1,0,-5.1,10.3a5.7,3.1,116,1,0,5.1,-10.3M626.9,389.3a6.6,4.0,149,1,0,-11.3,6.8a6.6,4.0,149,1,0,11.3,-6.8M634.3,387.7a4.4,2.2,119,1,0,-4.2,7.6a4.4,2.2,119,1,0,4.2,-7.6M631.9,387.1a5.6,2.9,43,1,0,8.2,7.7a5.6,2.9,43,1,0,-8.2,-7.7M670.7,386.6a5.8,2.6,149,1,0,-9.9,5.9a5.8,2.6,149,1,0,9.9,-5.9M666.3,386.8a4.8,2.0,50,1,0,6.1,7.3a4.8,2.0,50,1,0,-6.1,-7.3M683.1,389.5a6.7,3.9,142,1,0,-10.6,8.1a6.7,3.9,142,1,0,10.6,-8.1M706.7,381.1a5.6,3.4,76,1,0,2.8,10.8a5.6,3.4,76,1,0,-2.8,-10.8M742.7,382.0a5.7,3.7,99,1,0,-1.8,11.2a5.7,3.7,99,1,0,1.8,-11.2M775.2,386.8a4.7,2.7,29,1,0,8.2,4.5a4.7,2.7,29,1,0,-8.2,-4.5M808.1,391.6a6.4,3.8,167,1,0,-12.6,2.8a6.4,3.8,167,1,0,12.6,-2.8M831.5,385.5a4.6,3.9,63,1,0,4.2,8.2a4.6,3.9,63,1,0,-4.2,-8.2M846.9,388.1a4.5,2.2,5,1,0,9.0,0.7a4.5,2.2,5,1,0,-9.0,-0.7M858.5,391.1a3.8,3.5,14,1,0,7.4,1.9a3.8,3.5,14,1,0,-7.4,-1.9M867.6,383.7a6.2,3.0,94,1,0,-0.9,12.5a6.2,3.0,94,1,0,0.9,-12.5M889.1,389.6a3.8,3.9,169,1,0,-7.4,1.4a3.8,3.9,169,1,0,7.4,-1.4M612.3,392.9a6.2,3.0,52,1,0,7.6,9.9a6.2,3.0,52,1,0,-7.6,-9.9M624.5,392.7a3.6,3.9,158,1,0,-6.7,2.7a3.6,3.9,158,1,0,6.7,-2.7M648.2,394.5a3.7,2.5,129,1,0,-4.6,5.8a3.7,2.5,129,1,0,4.6,-5.8M665.1,391.0a6.1,2.1,84,1,0,1.2,12.2a6.1,2.1,84,1,0,-1.2,-12.2M679.1,394.7a6.3,3.0,7,1,0,12.5,1.5a6.3,3.0,7,1,0,-12.5,-1.5M691.4,398.4a4.1,3.9,33,1,0,6.9,4.5a4.1,3.9,33,1,0,-6.9,-4.5M698.2,395.5a4.4,2.4,30,1,0,7.7,4.5a4.4,2.4,30,1,0,-7.7,-4.5M721.2,397.7a5.1,3.5,133,1,0,-7.0,7.5a5.1,3.5,133,1,0,7.0,-7.5M740.8,395.9a5.7,2.5,15,1,0,11.0,2.9a5.7,2.5,15,1,0,-11.0,-2.9M782.3,394.3a6.5,3.9,164,1,0,-12.4,3.7a6.5,3.9,164,1,0,12.4,-3.7M806.7,393.6a6.9,3.1,130,1,0,-8.9,10.5a6.9,3.1,130,1,0,8.9,-10.5M812.8,391.5a5.0,2.4,49,1,0,6.5,7.7a5.0,2.4,49,1,0,-6.5,-7.7M832.9,400.0a3.6,2.9,9,1,0,7.0,1.1a3.6,2.9,9,1,0,-7.0,-1.1M852.5,392.7a4.0,3.0,66,1,0,3.3,7.4a4.0,3.0,66,1,0,-3.3,-7.4M866.6,395.4a5.6,2.5,134,1,0,-7.8,8.1a5.6,2.5,134,1,0,7.8,-8.1M642.0,403.0a3.7,3.5,22,1,0,6.8,2.7a3.7,3.5,22,1,0,-6.8,-2.7M664.8,400.5a4.8,3.2,147,1,0,-8.1,5.2a4.8,3.2,147,1,0,8.1,-5.2M740.2,405.3a4.0,3.9,112,1,0,-3.0,7.4a4.0,3.9,112,1,0,3.0,-7.4M763.2,402.9a6.1,3.6,63,1,0,5.5,11.0a6.1,3.6,63,1,0,-5.5,-11.0M779.1,401.0a5.0,2.2,129,1,0,-6.3,7.7a5.0,2.2,129,1,0,6.3,-7.7M809.5,398.8a4.9,3.4,85,1,0,0.9,9.7a4.9,3.4,85,1,0,-0.9,-9.7M829.5,399.2a7.0,3.7,78,1,0,2.8,13.6a7.0,3.7,78,1,0,-2.8,-13.6M614.3,410.6a3.7,2.2,115,1,0,-3.2,6.7a3.7,2.2,115,1,0,3.2,-6.7M649.6,411.4a6.7,2.3,111,1,0,-4.8,12.6a6.7,2.3,111,1,0,4.8,-12.6M669.1,406.1a3.9,2.5,94,1,0,-0.5,7.9a3.9,2.5,94,1,0,0.5,-7.9M670.9,414.6a3.9,3.2,23,1,0,7.2,3.1a3.9,3.2,23,1,0,-7.2,-3.1M780.0,409.6a5.4,3.0,155,1,0,-9.8,4.5a5.4,3.0,155,1,0,9.8,-4.5M801.9,407.0a5.4,3.0,95,1,0,-0.9,10.7a5.4,3.0,95,1,0,0.9,-10.7M815.9,408.7a6.2,2.6,17,1,0,11.9,3.6a6.2,2.6,17,1,0,-11.9,-3.6M832.8,411.2a4.8,3.1,134,1,0,-6.7,6.9a4.8,3.1,134,1,0,6.7,-6.9M843.2,416.3a6.1,2.2,165,1,0,-11.8,3.2a6.1,2.2,165,1,0,11.8,-3.2M611.3,420.9a4.4,2.2,97,1,0,-1.0,8.6a4.4,2.2,97,1,0,1.0,-8.6M636.6,421.4a5.3,2.8,163,1,0,-10.1,3.1a5.3,2.8,163,1,0,10.1,-3.1M633.5,415.4a4.6,2.7,78,1,0,1.9,9.0a4.6,2.7,78,1,0,-1.9,-9.0M641.8,419.3a5.4,3.4,62,1,0,5.1,9.6a5.4,3.4,62,1,0,-5.1,-9.6M659.4,417.7a5.4,3.7,49,1,0,7.1,8.1a5.4,3.7,49,1,0,-7.1,-8.1M669.1,419.4a3.9,2.1,112,1,0,-2.9,7.1a3.9,2.1,112,1,0,2.9,-7.1M676.7,419.3a6.6,3.7,48,1,0,8.7,9.8a6.6,3.7,48,1,0,-8.7,-9.8M693.0,415.4a5.7,3.3,113,1,0,-4.5,10.5a5.7,3.3,113,1,0,4.5,-10.5M706.9,420.6a4.7,3.6,53,1,0,5.7,7.5a4.7,3.6,53,1,0,-5.7,-7.5M737.6,417.4a4.5,2.5,125,1,0,-5.2,7.4a4.5,2.5,125,1,0,5.2,-7.4M782.6,416.8a5.8,3.9,167,1,0,-11.2,2.7a5.8,3.9,167,1,0,11.2,-2.7M791.5,419.9a6.8,3.8,175,1,0,-13.5,1.2a6.8,3.8,175,1,0,13.5,-1.2M797.0,423.2a5.0,3.1,167,1,0,-9.7,2.2a5.0,3.1,167,1,0,9.7,-2.2M815.4,418.6a3.5,2.6,55,1,0,4.1,5.8a3.5,2.6,55,1,0,-4.1,-5.8M814.3,421.2a5.8,3.8,21,1,0,10.8,4.0a5.8,3.8,21,1,0,-10.8,-4.0M843.7,415.9a6.0,3.6,34,1,0,9.9,6.7a6.0,3.6,34,1,0,-9.9,-6.7M612.8,423.9a4.8,2.8,152,1,0,-8.5,4.5a4.8,2.8,152,1,0,8.5,-4.5M621.4,425.5a5.1,3.1,124,1,0,-5.8,8.4a5.1,3.1,124,1,0,5.8,-8.4M640.0,428.3a6.6,3.9,126,1,0,-7.7,10.7a6.6,3.9,126,1,0,7.7,-10.7M647.8,425.7a6.8,3.0,115,1,0,-5.7,12.4a6.8,3.0,115,1,0,5.7,-12.4M658.4,426.4a5.5,2.9,122,1,0,-5.9,9.3a5.5,2.9,122,1,0,5.9,-9.3M664.1,423.3a4.4,3.9,88,1,0,0.3,8.8a4.4,3.9,88,1,0,-0.3,-8.8M682.0,426.3a5.1,3.0,176,1,0,-10.1,0.7a5.1,3.0,176,1,0,10.1,-0.7M684.6,421.7a5.9,3.0,74,1,0,3.3,11.3a5.9,3.0,74,1,0,-3.3,-11.3M704.2,426.2a6.2,3.9,134,1,0,-8.5,8.9a6.2,3.9,134,1,0,8.5,-8.9M708.7,424.4a6.1,2.4,68,1,0,4.5,11.3a6.1,2.4,68,1,0,-4.5,-11.3M731.4,427.5a5.8,3.2,169,1,0,-11.3,2.2a5.8,3.2,169,1,0,11.3,-2.2M745.4,423.0a6.7,3.7,147,1,0,-11.2,7.3a6.7,3.7,147,1,0,11.2,-7.3M754.4,428.0a4.1,2.9,150,1,0,-7.1,4.1a4.1,2.9,150,1,0,7.1,-4.1M766.4,426.6a6.7,3.4,65,1,0,5.7,12.0a6.7,3.4,65,1,0,-5.7,-12.0M781.1,428.1a5.3,3.3,166,1,0,-10.2,2.6a5.3,3.3,166,1,0,10.2,-2.6M787.2,425.3a4.1,2.6,45,1,0,5.7,5.8a4.1,2.6,45,1,0,-5.7,-5.8M800.5,426.6a5.7,3.3,137,1,0,-8.4,7.8a5.7,3.3,137,1,0,8.4,-7.8M809.2,428.4a4.2,3.5,166,1,0,-8.2,2.1a4.2,3.5,166,1,0,8.2,-2.1M821.4,422.6a4.7,2.4,109,1,0,-3.1,8.9a4.7,2.4,109,1,0,3.1,-8.9M833.9,425.9a5.7,3.6,130,1,0,-7.2,8.7a5.7,3.6,130,1,0,7.2,-8.7M834.1,431.2a5.7,2.2,15,1,0,11.1,2.9a5.7,2.2,15,1,0,-11.1,-2.9M597.4,433.8a4.1,3.0,104,1,0,-2.0,8.0a4.1,3.0,104,1,0,2.0,-8.0M602.6,438.4a4.2,3.9,21,1,0,7.9,3.1a4.2,3.9,21,1,0,-7.9,-3.1M610.0,433.9a4.2,3.7,54,1,0,4.9,6.9a4.2,3.7,54,1,0,-4.9,-6.9M623.0,433.9a5.0,2.3,98,1,0,-1.3,9.9a5.0,2.3,98,1,0,1.3,-9.9M634.8,435.4a6.5,2.1,70,1,0,4.5,12.3a6.5,2.1,70,1,0,-4.5,-12.3M645.8,434.4a6.5,3.5,74,1,0,3.5,12.5a6.5,3.5,74,1,0,-3.5,-12.5M661.9,435.9a6.6,3.7,161,1,0,-12.5,4.4a6.6,3.7,161,1,0,12.5,-4.4M660.0,435.0a5.2,2.6,91,1,0,-0.2,10.5a5.2,2.6,91,1,0,0.2,-10.5M665.1,433.7a6.2,3.3,50,1,0,7.9,9.4a6.2,3.3,50,1,0,-7.9,-9.4M679.3,432.5a5.0,3.0,138,1,0,-7.4,6.7a5.0,3.0,138,1,0,7.4,-6.7M692.0,431.2a5.3,2.0,114,1,0,-4.4,9.7a5.3,2.0,114,1,0,4.4,-9.7M687.6,434.7a4.8,4.0,56,1,0,5.4,8.0a4.8,4.0,56,1,0,-5.4,-8.0M695.4,429.4a6.1,3.5,64,1,0,5.4,10.9a6.1,3.5,64,1,0,-5.4,-10.9M717.4,431.9a5.5,3.1,142,1,0,-8.7,6.7a5.5,3.1,142,1,0,8.7,-6.7M723.3,438.2a4.7,2.6,46,1,0,6.5,6.7a4.7,2.6,46,1,0,-6.5,-6.7M730.3,438.0a6.0,3.8,12,1,0,11.7,2.4a6.0,3.8,12,1,0,-11.7,-2.4M756.2,439.1a6.1,2.9,159,1,0,-11.4,4.4a6.1,2.9,159,1,0,11.4,-4.4M762.1,433.9a4.6,4.0,115,1,0,-3.9,8.2a4.6,4.0,115,1,0,3.9,-8.2M767.9,436.5a5.6,2.6,163,1,0,-10.7,3.3a5.6,2.6,163,1,0,10.7,-3.3M774.8,434.1a6.6,3.1,98,1,0,-1.9,13.1a6.6,3.1,98,1,0,1.9,-13.1M780.8,436.2a5.4,2.7,82,1,0,1.4,10.6a5.4,2.7,82,1,0,-1.4,-10.6M825.2,432.9a4.5,3.1,117,1,0,-4.0,8.0a4.5,3.1,117,1,0,4.0,-8.0M842.1,436.6a4.9,3.9,104,1,0,-2.4,9.5a4.9,3.9,104,1,0,2.4,-9.5M842.6,436.3a5.3,3.3,47,1,0,7.2,7.8a5.3,3.3,47,1,0,-7.2,-7.8M859.4,433.5a6.4,3.5,175,1,0,-12.7,1.1a6.4,3.5,175,1,0,12.7,-1.1M604.2,437.3a6.1,2.2,68,1,0,4.6,11.2a6.1,2.2,68,1,0,-4.6,-11.2M622.0,441.7a5.8,2.7,142,1,0,-9.1,7.1a5.8,2.7,142,1,0,9.1,-7.1M632.6,448.4a5.6,2.1,171,1,0,-11.1,1.7a5.6,2.1,171,1,0,11.1,-1.7M641.4,441.7a5.8,2.9,85,1,0,1.0,11.6a5.8,2.9,85,1,0,-1.0,-11.6M657.7,442.8a5.8,2.9,141,1,0,-9.0,7.3a5.8,2.9,141,1,0,9.0,-7.3M656.7,444.9a3.6,2.4,3,1,0,7.3,0.4a3.6,2.4,3,1,0,-7.3,-0.4M675.0,444.6a5.6,2.7,3,1,0,11.3,0.6a5.6,2.7,3,1,0,-11.3,-0.6M689.3,442.6a4.9,3.8,45,1,0,6.9,7.0a4.9,3.8,45,1,0,-6.9,-7.0M698.5,443.6a6.3,3.1,63,1,0,5.8,11.3a6.3,3.1,63,1,0,-5.8,-11.3M718.0,444.0a7.0,2.2,153,1,0,-12.5,6.4a7.0,2.2,153,1,0,12.5,-6.4M722.9,442.4a6.1,2.1,121,1,0,-6.2,10.5a6.1,2.1,121,1,0,6.2,-10.5M733.1,436.9a6.1,2.3,83,1,0,1.5,12.2a6.1,2.3,83,1,0,-1.5,-12.2M755.6,444.2a5.0,3.8,179,1,0,-9.9,0.2a5.0,3.8,179,1,0,9.9,-0.2M770.6,437.6a4.9,3.8,112,1,0,-3.8,9.1a4.9,3.8,112,1,0,3.8,-9.1M773.2,437.3a5.4,2.9,105,1,0,-2.7,10.5a5.4,2.9,105,1,0,2.7,-10.5M807.1,448.6a5.9,2.2,170,1,0,-11.6,2.1a5.9,2.2,170,1,0,11.6,-2.1M813.9,439.6a5.0,2.1,51,1,0,6.4,7.8a5.0,2.1,51,1,0,-6.4,-7.8M815.1,444.0a6.8,2.3,38,1,0,10.7,8.3a6.8,2.3,38,1,0,-10.7,-8.3M829.7,438.5a6.1,2.0,97,1,0,-1.4,12.2a6.1,2.0,97,1,0,1.4,-12.2M838.5,440.7a5.1,3.9,133,1,0,-6.9,7.5a5.1,3.9,133,1,0,6.9,-7.5M848.6,447.2a4.2,3.3,139,1,0,-6.2,5.5a4.2,3.3,139,1,0,6.2,-5.5M859.0,442.7a4.7,3.9,133,1,0,-6.4,6.8a4.7,3.9,133,1,0,6.4,-6.8M878.4,442.0a5.5,3.1,152,1,0,-9.6,5.2a5.5,3.1,152,1,0,9.6,-5.2M875.8,441.6a5.3,2.8,21,1,0,10.0,3.8a5.3,2.8,21,1,0,-10.0,-3.8M886.3,445.3a5.5,2.2,58,1,0,5.9,9.3a5.5,2.2,58,1,0,-5.9,-9.3M592.0,449.7a4.8,2.8,12,1,0,9.3,2.1a4.8,2.8,12,1,0,-9.3,-2.1M601.3,453.7a4.3,2.9,65,1,0,3.6,7.8a4.3,2.9,65,1,0,-3.6,-7.8M618.8,452.9a5.9,2.7,14,1,0,11.5,2.8a5.9,2.7,14,1,0,-11.5,-2.8M640.8,448.0a4.3,3.2,128,1,0,-5.3,6.8a4.3,3.2,128,1,0,5.3,-6.8M645.7,452.6a3.6,2.2,23,1,0,6.7,2.8a3.6,2.2,23,1,0,-6.7,-2.8M651.0,445.9a6.5,2.7,86,1,0,0.8,12.9a6.5,2.7,86,1,0,-0.8,-12.9M667.8,450.6a3.6,3.0,167,1,0,-7.1,1.6a3.6,3.0,167,1,0,7.1,-1.6M682.0,451.1a6.4,2.9,4,1,0,12.9,0.8a6.4,2.9,4,1,0,-12.9,-0.8M701.7,447.6a6.7,2.4,149,1,0,-11.5,7.0a6.7,2.4,149,1,0,11.5,-7.0M703.6,452.1a5.5,3.4,129,1,0,-6.9,8.5a5.5,3.4,129,1,0,6.9,-8.5M703.8,453.4a4.4,3.6,28,1,0,7.7,4.0a4.4,3.6,28,1,0,-7.7,-4.0M721.4,450.6a4.1,2.7,176,1,0,-8.2,0.5a4.1,2.7,176,1,0,8.2,-0.5M727.2,449.9a4.4,2.2,112,1,0,-3.2,8.2a4.4,2.2,112,1,0,3.2,-8.2M727.5,446.6a6.1,3.3,53,1,0,7.4,9.7a6.1,3.3,53,1,0,-7.4,-9.7M735.6,449.7a5.5,2.3,28,1,0,9.7,5.1a5.5,2.3,28,1,0,-9.7,-5.1M757.2,451.3a4.7,3.3,39,1,0,7.3,6.0a4.7,3.3,39,1,0,-7.3,-6.0M774.2,449.8a5.5,2.4,178,1,0,-11.0,0.4a5.5,2.4,178,1,0,11.0,-0.4M792.8,449.4a3.7,3.9,38,1,0,5.8,4.5a3.7,3.9,38,1,0,-5.8,-4.5M809.8,451.1a5.5,2.9,31,1,0,9.4,5.7a5.5,2.9,31,1,0,-9.4,-5.7M829.2,450.0a7.0,2.9,133,1,0,-9.6,10.1a7.0,2.9,133,1,0,9.6,-10.1M831.7,452.7a4.4,4.0,178,1,0,-8.8,0.3a4.4,4.0,178,1,0,8.8,-0.3M838.4,449.6a6.2,3.7,83,1,0,1.6,12.3a6.2,3.7,83,1,0,-1.6,-12.3M846.8,451.6a3.7,2.4,95,1,0,-0.6,7.3a3.7,2.4,95,1,0,0.6,-7.3M851.5,454.8a4.1,2.8,29,1,0,7.1,4.0a4.1,2.8,29,1,0,-7.1,-4.0M859.7,450.1a3.9,2.3,85,1,0,0.7,7.7a3.9,2.3,85,1,0,-0.7,-7.7M875.6,450.6a5.5,3.9,172,1,0,-10.8,1.6a5.5,3.9,172,1,0,10.8,-1.6M874.7,449.7a4.4,2.6,14,1,0,8.6,2.1a4.4,2.6,14,1,0,-8.6,-2.1M888.2,451.0a4.3,4.0,99,1,0,-1.4,8.5a4.3,4.0,99,1,0,1.4,-8.5M600.5,454.4a6.2,2.2,37,1,0,10.0,7.5a6.2,2.2,37,1,0,-10.0,-7.5M621.6,454.0a4.6,4.0,79,1,0,1.8,9.1a4.6,4.0,79,1,0,-1.8,-9.1M632.7,455.1a6.3,2.6,49,1,0,8.3,9.4a6.3,2.6,49,1,0,-8.3,-9.4M731.7,456.0a5.3,2.6,141,1,0,-8.2,6.6a5.3,2.6,141,1,0,8.2,-6.6M750.5,454.8a5.9,2.7,126,1,0,-6.9,9.6a5.9,2.7,126,1,0,6.9,-9.6M840.3,455.4a5.4,2.5,48,1,0,7.2,8.1a5.4,2.5,48,1,0,-7.2,-8.1M865.7,454.5a3.7,2.6,87,1,0,0.3,7.3a3.7,2.6,87,1,0,-0.3,-7.3M759.3,464.3a3.6,2.2,46,1,0,5.0,5.2a3.6,2.2,46,1,0,-5.0,-5.2M771.4,469.7a3.8,2.9,36,1,0,6.1,4.5a3.8,2.9,36,1,0,-6.1,-4.5M762.2,475.4a5.4,2.4,51,1,0,6.9,8.4a5.4,2.4,51,1,0,-6.9,-8.4M772.3,481.9a4.4,2.4,73,1,0,2.5,8.4a4.4,2.4,73,1,0,-2.5,-8.4M766.8,498.9a4.7,2.6,19,1,0,8.9,3.0a4.7,2.6,19,1,0,-8.9,-3.0M779.1,497.7a6.9,3.2,65,1,0,5.8,12.6a6.9,3.2,65,1,0,-5.8,-12.6M793.1,497.1a5.2,3.1,143,1,0,-8.3,6.2a5.2,3.1,143,1,0,8.3,-6.2M818.6,500.2a4.2,3.9,162,1,0,-7.9,2.6a4.2,3.9,162,1,0,7.9,-2.6M825.2,499.9a4.7,2.8,173,1,0,-9.3,1.2a4.7,2.8,173,1,0,9.3,-1.2M829.7,496.6a5.6,2.7,130,1,0,-7.2,8.7a5.6,2.7,130,1,0,7.2,-8.7M857.1,500.0a6.6,2.8,117,1,0,-5.9,11.7a6.6,2.8,117,1,0,5.9,-11.7M882.8,497.7a5.6,2.6,100,1,0,-2.0,11.0a5.6,2.6,100,1,0,2.0,-11.0M765.1,507.7a3.5,3.2,111,1,0,-2.5,6.6a3.5,3.2,111,1,0,2.5,-6.6M780.5,504.0a3.9,3.8,145,1,0,-6.4,4.5a3.9,3.8,145,1,0,6.4,-4.5M792.6,504.6a5.3,2.3,159,1,0,-9.9,3.8a5.3,2.3,159,1,0,9.9,-3.8M807.3,508.4a5.1,2.7,32,1,0,8.7,5.4a5.1,2.7,32,1,0,-8.7,-5.4M824.2,508.1a4.0,3.2,112,1,0,-3.0,7.3a4.0,3.2,112,1,0,3.0,-7.3M835.4,506.7a4.6,2.7,48,1,0,6.2,6.9a4.6,2.7,48,1,0,-6.2,-6.9M848.6,504.3a5.4,2.9,145,1,0,-8.9,6.3a5.4,2.9,145,1,0,8.9,-6.3M870.5,505.6a4.1,3.9,158,1,0,-7.7,3.1a4.1,3.9,158,1,0,7.7,-3.1M876.6,499.7a6.5,2.6,103,1,0,-2.8,12.7a6.5,2.6,103,1,0,2.8,-12.7M596.3,517.3a4.5,2.1,41,1,0,6.7,5.9a4.5,2.1,41,1,0,-6.7,-5.9M610.4,517.2a5.6,2.8,135,1,0,-7.9,7.9a5.6,2.8,135,1,0,7.9,-7.9M717.5,520.1a5.7,3.2,167,1,0,-11.1,2.5a5.7,3.2,167,1,0,11.1,-2.5M745.2,519.8a5.3,2.2,159,1,0,-9.9,3.7a5.3,2.2,159,1,0,9.9,-3.7M748.7,516.5a4.8,2.2,113,1,0,-3.7,8.8a4.8,2.2,113,1,0,3.7,-8.8M759.5,515.8a6.3,3.8,62,1,0,6.0,11.1a6.3,3.8,62,1,0,-6.0,-11.1M806.9,517.9a4.3,2.7,108,1,0,-2.6,8.1a4.3,2.7,108,1,0,2.6,-8.1M805.8,513.5a4.8,3.4,23,1,0,8.8,3.8a4.8,3.4,23,1,0,-8.8,-3.8M813.8,518.0a5.8,3.2,35,1,0,9.5,6.5a5.8,3.2,35,1,0,-9.5,-6.5M839.0,510.1a6.3,3.9,66,1,0,5.1,11.6a6.3,3.9,66,1,0,-5.1,-11.6M843.7,517.3a3.9,2.4,61,1,0,3.8,6.8a3.9,2.4,61,1,0,-3.8,-6.8M864.3,517.9a5.0,2.7,134,1,0,-6.9,7.2a5.0,2.7,134,1,0,6.9,-7.2M869.3,516.0a6.7,3.6,18,1,0,12.7,4.2a6.7,3.6,18,1,0,-12.7,-4.2" fill="#f9b166"/><path d="M614.3,240.1a3.6,4.0,174,1,0,-7.2,0.8a3.6,4.0,174,1,0,7.2,-0.8M645.5,238.0a6.0,2.6,41,1,0,9.0,7.9a6.0,2.6,41,1,0,-9.0,-7.9M742.3,239.8a5.6,2.8,19,1,0,10.6,3.6a5.6,2.8,19,1,0,-10.6,-3.6M616.3,242.8a5.2,2.6,151,1,0,-9.1,5.1a5.2,2.6,151,1,0,9.1,-5.1M633.4,241.6a4.3,2.3,8,1,0,8.6,1.3a4.3,2.3,8,1,0,-8.6,-1.3M652.8,244.8a5.8,3.6,173,1,0,-11.5,1.5a5.8,3.6,173,1,0,11.5,-1.5M684.3,240.3a6.3,3.9,83,1,0,1.4,12.5a6.3,3.9,83,1,0,-1.4,-12.5M699.2,238.7a6.4,3.3,129,1,0,-8.0,9.9a6.4,3.3,129,1,0,8.0,-9.9M714.9,247.4a3.6,3.6,12,1,0,7.1,1.4a3.6,3.6,12,1,0,-7.1,-1.4M722.8,240.6a6.3,2.3,27,1,0,11.2,5.6a6.3,2.3,27,1,0,-11.2,-5.6M749.1,241.1a5.5,2.6,69,1,0,4.0,10.2a5.5,2.6,69,1,0,-4.0,-10.2M588.8,249.6a7.0,3.9,17,1,0,13.3,4.1a7.0,3.9,17,1,0,-13.3,-4.1M615.2,251.2a4.9,2.4,30,1,0,8.5,4.9a4.9,2.4,30,1,0,-8.5,-4.9M635.8,247.5a6.3,3.4,155,1,0,-11.4,5.3a6.3,3.4,155,1,0,11.4,-5.3M642.2,251.3a6.2,3.6,73,1,0,3.6,11.9a6.2,3.6,73,1,0,-3.6,-11.9M655.4,251.1a6.2,3.5,73,1,0,3.6,11.8a6.2,3.5,73,1,0,-3.6,-11.8M701.1,252.1a5.3,3.9,102,1,0,-2.2,10.3a5.3,3.9,102,1,0,2.2,-10.3M714.3,252.3a5.2,2.3,89,1,0,0.1,10.3a5.2,2.3,89,1,0,-0.1,-10.3M752.7,256.5a3.7,4.0,170,1,0,-7.2,1.3a3.7,4.0,170,1,0,7.2,-1.3M597.7,260.0a3.9,3.4,102,1,0,-1.7,7.6a3.9,3.4,102,1,0,1.7,-7.6M621.9,256.1a4.9,2.4,101,1,0,-1.9,9.5a4.9,2.4,101,1,0,1.9,-9.5M636.4,258.6a5.5,2.4,137,1,0,-7.9,7.5a5.5,2.4,137,1,0,7.9,-7.5M642.2,255.1a5.3,3.1,102,1,0,-2.2,10.4a5.3,3.1,102,1,0,2.2,-10.4M653.4,252.6a6.6,2.2,114,1,0,-5.4,12.1a6.6,2.2,114,1,0,5.4,-12.1M676.3,256.6a6.0,3.8,74,1,0,3.3,11.5a6.0,3.8,74,1,0,-3.3,-11.5M696.2,257.3a6.0,3.6,76,1,0,2.9,11.6a6.0,3.6,76,1,0,-2.9,-11.6M714.4,259.1a4.1,2.1,83,1,0,1.1,8.2a4.1,2.1,83,1,0,-1.1,-8.2M723.7,262.8a3.9,2.4,39,1,0,6.0,4.9a3.9,2.4,39,1,0,-6.0,-4.9M729.2,260.4a4.3,2.4,51,1,0,5.4,6.6a4.3,2.4,51,1,0,-5.4,-6.6M739.0,258.7a5.4,3.6,86,1,0,0.7,10.8a5.4,3.6,86,1,0,-0.7,-10.8M596.7,269.1a4.3,2.3,22,1,0,7.9,3.3a4.3,2.3,22,1,0,-7.9,-3.3M611.5,272.3a4.7,2.8,3,1,0,9.3,0.5a4.7,2.8,3,1,0,-9.3,-0.5M624.0,263.3a5.8,2.2,68,1,0,4.3,10.7a5.8,2.2,68,1,0,-4.3,-10.7M642.3,268.5a5.6,2.3,138,1,0,-8.4,7.6a5.6,2.3,138,1,0,8.4,-7.6M652.5,266.3a5.3,2.3,128,1,0,-6.5,8.2a5.3,2.3,128,1,0,6.5,-8.2M687.7,270.1a5.5,3.7,33,1,0,9.2,6.1a5.5,3.7,33,1,0,-9.2,-6.1M713.0,262.6a6.1,2.8,107,1,0,-3.5,11.7a6.1,2.8,107,1,0,3.5,-11.7M718.6,261.3a5.1,2.3,70,1,0,3.6,9.6a5.1,2.3,70,1,0,-3.6,-9.6M724.3,263.6a4.4,3.1,60,1,0,4.5,7.6a4.4,3.1,60,1,0,-4.5,-7.6M594.4,270.7a6.7,3.3,50,1,0,8.7,10.3a6.7,3.3,50,1,0,-8.7,-10.3M606.1,277.6a4.4,3.6,16,1,0,8.4,2.4a4.4,3.6,16,1,0,-8.4,-2.4M616.5,277.6a4.5,3.1,34,1,0,7.5,4.9a4.5,3.1,34,1,0,-7.5,-4.9M631.4,277.1a5.1,3.5,69,1,0,3.6,9.6a5.1,3.5,69,1,0,-3.6,-9.6M639.1,273.1a5.4,3.3,65,1,0,4.6,9.8a5.4,3.3,65,1,0,-4.6,-9.8M650.1,275.9a5.3,3.7,123,1,0,-5.8,8.8a5.3,3.7,123,1,0,5.8,-8.8M656.2,275.7a6.2,2.3,109,1,0,-4.1,11.7a6.2,2.3,109,1,0,4.1,-11.7M675.6,278.4a4.1,2.3,3,1,0,8.2,0.5a4.1,2.3,3,1,0,-8.2,-0.5M681.7,276.5a4.4,3.6,13,1,0,8.6,2.0a4.4,3.6,13,1,0,-8.6,-2.0M691.6,275.8a6.3,2.5,26,1,0,11.2,5.6a6.3,2.5,26,1,0,-11.2,-5.6M707.1,272.7a4.1,2.5,29,1,0,7.2,3.9a4.1,2.5,29,1,0,-7.2,-3.9M718.0,277.3a3.7,2.8,66,1,0,3.1,6.8a3.7,2.8,66,1,0,-3.1,-6.8M728.9,281.5a5.2,3.5,178,1,0,-10.4,0.5a5.2,3.5,178,1,0,10.4,-0.5M734.2,276.6a5.0,2.2,6,1,0,9.9,1.1a5.0,2.2,6,1,0,-9.9,-1.1M754.7,275.9a4.3,2.5,99,1,0,-1.4,8.5a4.3,2.5,99,1,0,1.4,-8.5M599.0,286.1a5.0,2.8,11,1,0,9.8,1.9a5.0,2.8,11,1,0,-9.8,-1.9M611.7,280.4a4.5,2.3,72,1,0,2.7,8.5a4.5,2.3,72,1,0,-2.7,-8.5M632.9,278.4a6.0,3.1,126,1,0,-7.0,9.6a6.0,3.1,126,1,0,7.0,-9.6M630.5,284.5a3.7,2.8,10,1,0,7.3,1.3a3.7,2.8,10,1,0,-7.3,-1.3M641.3,286.3a4.6,2.5,4,1,0,9.3,0.7a4.6,2.5,4,1,0,-9.3,-0.7M649.1,286.7a4.4,3.3,33,1,0,7.4,4.9a4.4,3.3,33,1,0,-7.4,-4.9M674.6,286.3a6.7,2.1,24,1,0,12.2,5.5a6.7,2.1,24,1,0,-12.2,-5.5M680.4,280.5a6.9,2.3,35,1,0,11.4,7.9a6.9,2.3,35,1,0,-11.4,-7.9M690.7,284.1a3.5,3.1,71,1,0,2.3,6.6a3.5,3.1,71,1,0,-2.3,-6.6M710.0,285.8a4.7,3.8,56,1,0,5.2,7.9a4.7,3.8,56,1,0,-5.2,-7.9M713.7,284.3a6.9,3.6,29,1,0,12.1,6.6a6.9,3.6,29,1,0,-12.1,-6.6M730.4,282.5a4.8,2.6,135,1,0,-6.8,6.8a4.8,2.6,135,1,0,6.8,-6.8M734.5,279.3a4.6,2.4,92,1,0,-0.4,9.3a4.6,2.4,92,1,0,0.4,-9.3M735.4,281.2a3.9,3.4,20,1,0,7.2,2.7a3.9,3.4,20,1,0,-7.2,-2.7M873.4,278.0a5.8,3.2,50,1,0,7.5,8.9a5.8,3.2,50,1,0,-7.5,-8.9M593.7,286.7a3.9,2.1,65,1,0,3.4,7.1a3.9,2.1,65,1,0,-3.4,-7.1M611.5,292.0a3.5,2.4,173,1,0,-7.0,0.9a3.5,2.4,173,1,0,7.0,-0.9M630.8,289.2a6.7,2.0,104,1,0,-3.2,13.0a6.7,2.0,104,1,0,3.2,-13.0M633.4,287.8a5.8,3.6,66,1,0,4.8,10.6a5.8,3.6,66,1,0,-4.8,-10.6M640.7,290.9a6.7,2.6,17,1,0,12.8,3.9a6.7,2.6,17,1,0,-12.8,-3.9M656.0,290.8a6.1,3.1,122,1,0,-6.5,10.3a6.1,3.1,122,1,0,6.5,-10.3M654.7,290.7a4.7,2.9,2,1,0,9.4,0.3a4.7,2.9,2,1,0,-9.4,-0.3M665.7,290.0a5.4,3.9,37,1,0,8.6,6.5a5.4,3.9,37,1,0,-8.6,-6.5M685.8,287.2a6.0,2.4,49,1,0,7.8,9.0a6.0,2.4,49,1,0,-7.8,-9.0M699.6,297.4a4.1,2.7,178,1,0,-8.3,0.3a4.1,2.7,178,1,0,8.3,-0.3M701.2,289.7a5.8,2.4,111,1,0,-4.1,10.7a5.8,2.4,111,1,0,4.1,-10.7M708.2,295.0a5.3,3.1,21,1,0,9.9,3.7a5.3,3.1,21,1,0,-9.9,-3.7M718.6,290.1a5.8,2.8,69,1,0,4.1,10.9a5.8,2.8,69,1,0,-4.1,-10.9M725.9,289.9a5.3,2.1,113,1,0,-4.1,9.8a5.3,2.1,113,1,0,4.1,-9.8M732.9,288.0a6.8,2.3,84,1,0,1.3,13.5a6.8,2.3,84,1,0,-1.3,-13.5M765.5,297.4a6.3,3.0,179,1,0,-12.6,0.2a6.3,3.0,179,1,0,12.6,-0.2M866.4,295.6a5.1,3.0,169,1,0,-10.0,1.9a5.1,3.0,169,1,0,10.0,-1.9M873.9,293.5a5.5,2.6,157,1,0,-10.2,4.3a5.5,2.6,157,1,0,10.2,-4.3M672.4,299.8a6.1,2.5,146,1,0,-10.1,6.8a6.1,2.5,146,1,0,10.1,-6.8M695.8,295.5a4.5,3.6,44,1,0,6.5,6.3a4.5,3.6,44,1,0,-6.5,-6.3M708.7,293.4a5.1,3.1,83,1,0,1.3,10.1a5.1,3.1,83,1,0,-1.3,-10.1M744.3,295.7a6.9,3.3,153,1,0,-12.2,6.3a6.9,3.3,153,1,0,12.2,-6.3M669.0,307.9a5.5,4.0,164,1,0,-10.5,3.1a5.5,4.0,164,1,0,10.5,-3.1M730.0,306.5a4.5,3.0,157,1,0,-8.2,3.5a4.5,3.0,157,1,0,8.2,-3.5M669.4,316.1a4.0,3.4,170,1,0,-7.9,1.4a4.0,3.4,170,1,0,7.9,-1.4M674.0,314.0a6.6,3.5,171,1,0,-13.0,2.1a6.6,3.5,171,1,0,13.0,-2.1M716.4,314.0a6.5,2.9,34,1,0,10.7,7.3a6.5,2.9,34,1,0,-10.7,-7.3M702.7,321.7a6.8,3.8,10,1,0,13.5,2.4a6.8,3.8,10,1,0,-13.5,-2.4M689.3,331.7a4.6,2.9,52,1,0,5.7,7.3a4.6,2.9,52,1,0,-5.7,-7.3M699.5,329.7a4.4,2.6,47,1,0,6.0,6.4a4.4,2.6,47,1,0,-6.0,-6.4M710.1,330.4a4.4,2.2,152,1,0,-7.9,4.1a4.4,2.2,152,1,0,7.9,-4.1M720.2,328.0a6.6,3.5,112,1,0,-5.0,12.2a6.6,3.5,112,1,0,5.0,-12.2M751.6,332.7a5.9,3.4,134,1,0,-8.2,8.5a5.9,3.4,134,1,0,8.2,-8.5M698.3,338.9a6.2,3.4,166,1,0,-12.1,2.9a6.2,3.4,166,1,0,12.1,-2.9M705.7,340.8a6.2,2.2,176,1,0,-12.3,0.8a6.2,2.2,176,1,0,12.3,-0.8M717.3,343.2a5.6,3.9,162,1,0,-10.7,3.5a5.6,3.9,162,1,0,10.7,-3.5M719.3,340.5a4.0,3.6,11,1,0,7.8,1.5a4.0,3.6,11,1,0,-7.8,-1.5M734.1,334.7a5.6,2.4,81,1,0,1.8,11.1a5.6,2.4,81,1,0,-1.8,-11.1M676.5,347.5a4.8,2.7,32,1,0,8.1,5.0a4.8,2.7,32,1,0,-8.1,-5.0M699.3,344.7a6.9,2.8,117,1,0,-6.2,12.3a6.9,2.8,117,1,0,6.2,-12.3M698.4,344.1a5.8,2.7,63,1,0,5.2,10.3a5.8,2.7,63,1,0,-5.2,-10.3M715.6,346.6a6.5,2.8,116,1,0,-5.6,11.6a6.5,2.8,116,1,0,5.6,-11.6M712.4,343.4a6.3,3.8,54,1,0,7.3,10.2a6.3,3.8,54,1,0,-7.3,-10.2M719.5,345.4a5.7,3.8,15,1,0,11.1,3.0a5.7,3.8,15,1,0,-11.1,-3.0M731.5,345.5a6.6,2.7,85,1,0,1.1,13.1a6.6,2.7,85,1,0,-1.1,-13.1M735.2,347.9a4.5,3.5,5,1,0,8.9,0.8a4.5,3.5,5,1,0,-8.9,-0.8M698.6,355.9a4.8,2.5,9,1,0,9.5,1.6a4.8,2.5,9,1,0,-9.5,-1.6M704.8,356.2a3.6,3.0,4,1,0,7.2,0.4a3.6,3.0,4,1,0,-7.2,-0.4M716.0,355.2a5.3,2.0,18,1,0,10.1,3.3a5.3,2.0,18,1,0,-10.1,-3.3M728.3,353.7a4.7,3.5,91,1,0,-0.1,9.4a4.7,3.5,91,1,0,0.1,-9.4M738.5,359.0a4.4,2.4,54,1,0,5.1,7.2a4.4,2.4,54,1,0,-5.1,-7.2M757.1,362.3a6.7,4.0,160,1,0,-12.5,4.6a6.7,4.0,160,1,0,12.5,-4.6M735.9,375.9a5.6,2.5,8,1,0,11.0,1.6a5.6,2.5,8,1,0,-11.0,-1.6M746.3,373.1a4.2,2.4,3,1,0,8.4,0.4a4.2,2.4,3,1,0,-8.4,-0.4M755.2,372.5a4.0,2.0,104,1,0,-1.9,7.8a4.0,2.0,104,1,0,1.9,-7.8M747.7,377.1a3.9,3.8,87,1,0,0.4,7.8a3.9,3.8,87,1,0,-0.4,-7.8M785.9,378.0a4.4,3.5,80,1,0,1.5,8.7a4.4,3.5,80,1,0,-1.5,-8.7M816.4,381.1a5.5,2.6,170,1,0,-10.8,1.9a5.5,2.6,170,1,0,10.8,-1.9M743.8,387.6a4.7,3.2,27,1,0,8.4,4.3a4.7,3.2,27,1,0,-8.4,-4.3M754.4,381.9a5.3,3.5,72,1,0,3.2,10.2a5.3,3.5,72,1,0,-3.2,-10.2M767.1,386.9a4.5,3.8,63,1,0,4.1,8.0a4.5,3.8,63,1,0,-4.1,-8.0M780.7,383.6a5.9,2.4,132,1,0,-7.8,8.8a5.9,2.4,132,1,0,7.8,-8.8M807.1,386.3a4.8,2.7,112,1,0,-3.6,8.9a4.8,2.7,112,1,0,3.6,-8.9M814.4,389.7a5.0,3.0,152,1,0,-8.8,4.7a5.0,3.0,152,1,0,8.8,-4.7M738.5,397.5a4.8,3.5,20,1,0,9.0,3.3a4.8,3.5,20,1,0,-9.0,-3.3M765.8,393.9a3.6,2.3,132,1,0,-4.9,5.4a3.6,2.3,132,1,0,4.9,-5.4M742.7,401.9a4.6,2.1,44,1,0,6.6,6.3a4.6,2.1,44,1,0,-6.6,-6.3M758.2,404.1a4.3,3.8,159,1,0,-8.1,3.0a4.3,3.8,159,1,0,8.1,-3.0M783.7,401.7a5.6,3.8,131,1,0,-7.3,8.5a5.6,3.8,131,1,0,7.3,-8.5M806.3,399.3a4.6,3.4,114,1,0,-3.8,8.4a4.6,3.4,114,1,0,3.8,-8.4M743.9,413.4a3.6,2.7,77,1,0,1.6,7.0a3.6,2.7,77,1,0,-1.6,-7.0M742.5,407.3a6.6,2.4,57,1,0,7.1,11.0a6.6,2.4,57,1,0,-7.1,-11.0M751.8,413.3a5.0,2.4,44,1,0,7.2,7.0a5.0,2.4,44,1,0,-7.2,-7.0M781.6,417.2a6.1,3.3,4,1,0,12.2,0.9a6.1,3.3,4,1,0,-12.2,-0.9M806.4,410.9a6.5,2.4,63,1,0,5.9,11.5a6.5,2.4,63,1,0,-5.9,-11.5M815.5,408.5a3.5,3.9,147,1,0,-5.9,3.8a3.5,3.9,147,1,0,5.9,-3.8M602.6,418.9a7.0,3.8,154,1,0,-12.5,6.2a7.0,3.8,154,1,0,12.5,-6.2M609.7,420.1a3.8,2.8,88,1,0,0.3,7.6a3.8,2.8,88,1,0,-0.3,-7.6M615.7,424.8a5.0,2.3,9,1,0,9.9,1.5a5.0,2.3,9,1,0,-9.9,-1.5M656.6,417.1a3.9,2.6,101,1,0,-1.5,7.6a3.9,2.6,101,1,0,1.5,-7.6M682.3,420.7a5.7,3.3,62,1,0,5.5,10.1a5.7,3.3,62,1,0,-5.5,-10.1M723.4,422.6a3.6,2.7,177,1,0,-7.2,0.3a3.6,2.7,177,1,0,7.2,-0.3M748.4,419.3a3.6,3.0,6,1,0,7.1,0.7a3.6,3.0,6,1,0,-7.1,-0.7M749.9,417.7a5.2,2.4,14,1,0,10.0,2.5a5.2,2.4,14,1,0,-10.0,-2.5M803.5,423.9a6.0,3.7,1,1,0,11.9,0.2a6.0,3.7,1,1,0,-11.9,-0.2M598.0,427.6a3.6,2.3,41,1,0,5.4,4.8a3.6,2.3,41,1,0,-5.4,-4.8M619.2,423.8a4.8,3.5,119,1,0,-4.6,8.3a4.8,3.5,119,1,0,4.6,-8.3M623.9,427.7a5.9,2.4,25,1,0,10.7,4.9a5.9,2.4,25,1,0,-10.7,-4.9M663.6,431.2a6.5,3.0,23,1,0,12.0,5.0a6.5,3.0,23,1,0,-12.0,-5.0M693.9,423.7a5.6,2.1,89,1,0,0.2,11.1a5.6,2.1,89,1,0,-0.2,-11.1M713.3,427.7a5.4,3.9,4,1,0,10.8,0.8a5.4,3.9,4,1,0,-10.8,-0.8M738.8,427.6a5.4,2.5,166,1,0,-10.6,2.7a5.4,2.5,166,1,0,10.6,-2.7M757.1,428.6a5.4,3.2,75,1,0,2.8,10.4a5.4,3.2,75,1,0,-2.8,-10.4M779.4,428.1a6.0,3.3,17,1,0,11.5,3.5a6.0,3.3,17,1,0,-11.5,-3.5M736.6,433.6a5.4,3.0,73,1,0,3.1,10.4a5.4,3.0,73,1,0,-3.1,-10.4M784.4,437.2a3.8,2.7,5,1,0,7.5,0.6a3.8,2.7,5,1,0,-7.5,-0.6M801.9,432.5a4.5,3.4,55,1,0,5.2,7.4a4.5,3.4,55,1,0,-5.2,-7.4M812.9,429.5a6.6,3.4,47,1,0,8.9,9.7a6.6,3.4,47,1,0,-8.9,-9.7M800.8,445.3a3.6,3.3,46,1,0,5.1,5.2a3.6,3.3,46,1,0,-5.1,-5.2M784.0,469.8a4.6,3.2,119,1,0,-4.4,8.1a4.6,3.2,119,1,0,4.4,-8.1M794.8,466.9a6.8,2.1,160,1,0,-12.7,4.6a6.8,2.1,160,1,0,12.7,-4.6M794.0,469.6a5.8,2.0,40,1,0,8.8,7.4a5.8,2.0,40,1,0,-8.8,-7.4M785.9,471.2a5.9,3.5,115,1,0,-5.0,10.6a5.9,3.5,115,1,0,5.0,-10.6M786.3,475.6a6.3,3.7,30,1,0,10.9,6.3a6.3,3.7,30,1,0,-10.9,-6.3" fill="#c8b0dc"/><path d="M770.9,238.1a4.5,3.8,37,1,0,7.2,5.4a4.5,3.8,37,1,0,-7.2,-5.4M811.4,237.4a5.7,3.0,131,1,0,-7.6,8.6a5.7,3.0,131,1,0,7.6,-8.6M817.7,240.3a5.4,3.5,162,1,0,-10.3,3.3a5.4,3.5,162,1,0,10.3,-3.3M834.6,234.9a6.3,3.7,103,1,0,-2.8,12.2a6.3,3.7,103,1,0,2.8,-12.2M855.4,234.9a6.1,2.1,108,1,0,-3.8,11.6a6.1,2.1,108,1,0,3.8,-11.6M788.3,241.3a4.9,3.9,166,1,0,-9.6,2.4a4.9,3.9,166,1,0,9.6,-2.4M792.9,244.2a5.0,3.6,162,1,0,-9.5,3.1a5.0,3.6,162,1,0,9.5,-3.1M792.6,242.3a5.7,3.9,23,1,0,10.4,4.5a5.7,3.9,23,1,0,-10.4,-4.5M806.0,238.5a4.3,3.4,58,1,0,4.6,7.3a4.3,3.4,58,1,0,-4.6,-7.3M813.0,240.9a6.1,2.2,92,1,0,-0.4,12.1a6.1,2.2,92,1,0,0.4,-12.1M818.7,238.7a5.0,2.8,74,1,0,2.7,9.7a5.0,2.8,74,1,0,-2.7,-9.7M830.8,237.6a5.7,3.3,95,1,0,-1.1,11.4a5.7,3.3,95,1,0,1.1,-11.4M856.0,244.5a6.7,2.4,180,1,0,-13.5,0.1a6.7,2.4,180,1,0,13.5,-0.1M851.3,241.3a6.0,2.5,17,1,0,11.5,3.6a6.0,2.5,17,1,0,-11.5,-3.6M872.3,246.8a5.9,2.4,13,1,0,11.5,2.6a5.9,2.4,13,1,0,-11.5,-2.6M878.1,239.9a5.3,3.1,26,1,0,9.5,4.7a5.3,3.1,26,1,0,-9.5,-4.7M770.5,254.7a5.1,4.0,147,1,0,-8.6,5.6a5.1,4.0,147,1,0,8.6,-5.6M769.8,250.1a5.1,2.4,9,1,0,10.1,1.7a5.1,2.4,9,1,0,-10.1,-1.7M778.3,246.7a5.8,2.9,47,1,0,7.9,8.6a5.8,2.9,47,1,0,-7.9,-8.6M802.4,245.8a6.6,3.6,112,1,0,-5.1,12.2a6.6,3.6,112,1,0,5.1,-12.2M822.5,248.9a6.9,3.8,158,1,0,-12.9,5.2a6.9,3.8,158,1,0,12.9,-5.2M813.6,248.9a5.0,3.2,18,1,0,9.5,3.2a5.0,3.2,18,1,0,-9.5,-3.2M832.7,245.2a5.9,3.1,114,1,0,-4.7,10.8a5.9,3.1,114,1,0,4.7,-10.8M841.1,251.5a4.7,3.5,151,1,0,-8.2,4.6a4.7,3.5,151,1,0,8.2,-4.6M866.6,253.2a3.8,3.1,87,1,0,0.4,7.6a3.8,3.1,87,1,0,-0.4,-7.6M752.7,264.5a4.7,3.1,172,1,0,-9.3,1.3a4.7,3.1,172,1,0,9.3,-1.3M761.1,257.4a7.0,3.3,43,1,0,10.2,9.5a7.0,3.3,43,1,0,-10.2,-9.5M772.1,255.8a6.3,3.4,109,1,0,-4.1,11.9a6.3,3.4,109,1,0,4.1,-11.9M795.1,262.4a5.4,2.3,139,1,0,-8.1,7.1a5.4,2.3,139,1,0,8.1,-7.1M809.1,253.8a5.1,3.9,106,1,0,-2.8,9.9a5.1,3.9,106,1,0,2.8,-9.9M829.2,257.0a5.3,2.3,150,1,0,-9.2,5.4a5.3,2.3,150,1,0,9.2,-5.4M831.4,256.9a4.6,2.9,129,1,0,-5.7,7.1a4.6,2.9,129,1,0,5.7,-7.1M841.7,263.0a4.9,2.9,174,1,0,-9.7,1.0a4.9,2.9,174,1,0,9.7,-1.0M845.1,260.0a4.8,3.4,43,1,0,7.1,6.5a4.8,3.4,43,1,0,-7.1,-6.5M849.0,257.4a7.0,3.6,37,1,0,11.1,8.4a7.0,3.6,37,1,0,-11.1,-8.4M860.3,255.6a5.4,2.6,61,1,0,5.3,9.4a5.4,2.6,61,1,0,-5.3,-9.4M867.0,259.7a4.2,3.5,59,1,0,4.3,7.2a4.2,3.5,59,1,0,-4.3,-7.2M748.5,267.6a6.5,2.8,78,1,0,2.7,12.7a6.5,2.8,78,1,0,-2.7,-12.7M777.7,265.1a5.9,3.1,43,1,0,8.7,8.1a5.9,3.1,43,1,0,-8.7,-8.1M792.2,268.8a3.7,3.8,174,1,0,-7.4,0.8a3.7,3.8,174,1,0,7.4,-0.8M803.7,268.4a6.3,2.4,134,1,0,-8.8,9.0a6.3,2.4,134,1,0,8.8,-9.0M807.3,267.0a6.3,2.2,97,1,0,-1.5,12.5a6.3,2.2,97,1,0,1.5,-12.5M813.1,265.1a4.5,2.6,11,1,0,8.9,1.8a4.5,2.6,11,1,0,-8.9,-1.8M820.5,271.8a4.7,3.2,8,1,0,9.4,1.4a4.7,3.2,8,1,0,-9.4,-1.4M831.5,272.8a5.2,3.9,176,1,0,-10.5,0.7a5.2,3.9,176,1,0,10.5,-0.7M832.3,263.8a6.7,3.8,35,1,0,11.0,7.8a6.7,3.8,35,1,0,-11.0,-7.8M852.8,268.8a4.1,3.8,179,1,0,-8.2,0.1a4.1,3.8,179,1,0,8.2,-0.1M845.4,268.9a6.6,2.1,19,1,0,12.4,4.3a6.6,2.1,19,1,0,-12.4,-4.3M871.9,265.9a5.9,3.9,80,1,0,2.0,11.7a5.9,3.9,80,1,0,-2.0,-11.7M869.6,264.6a6.0,2.4,33,1,0,10.1,6.4a6.0,2.4,33,1,0,-10.1,-6.4M760.7,277.4a4.8,2.7,177,1,0,-9.5,0.6a4.8,2.7,177,1,0,9.5,-0.6M764.2,269.2a5.8,2.1,62,1,0,5.5,10.2a5.8,2.1,62,1,0,-5.5,-10.2M788.0,271.8a4.3,2.9,56,1,0,4.8,7.0a4.3,2.9,56,1,0,-4.8,-7.0M798.8,277.1a4.5,2.0,33,1,0,7.5,4.8a4.5,2.0,33,1,0,-7.5,-4.8M822.0,272.5a4.0,3.9,65,1,0,3.4,7.3a4.0,3.9,65,1,0,-3.4,-7.3M832.2,273.3a3.8,3.8,59,1,0,4.0,6.5a3.8,3.8,59,1,0,-4.0,-6.5M843.3,277.5a4.9,2.5,7,1,0,9.7,1.2a4.9,2.5,7,1,0,-9.7,-1.2M851.8,274.2a4.6,2.8,98,1,0,-1.3,9.1a4.6,2.8,98,1,0,1.3,-9.1M853.7,277.0a6.0,3.3,26,1,0,10.8,5.4a6.0,3.3,26,1,0,-10.8,-5.4M871.6,276.0a4.3,2.1,4,1,0,8.5,0.7a4.3,2.1,4,1,0,-8.5,-0.7M779.5,279.8a5.8,2.5,33,1,0,9.8,6.4a5.8,2.5,33,1,0,-9.8,-6.4M790.7,286.0a6.8,4.0,9,1,0,13.4,2.1a6.8,4.0,9,1,0,-13.4,-2.1M812.2,282.9a4.5,3.5,179,1,0,-9.0,0.2a4.5,3.5,179,1,0,9.0,-0.2M808.9,279.7a5.4,3.0,67,1,0,4.2,10.0a5.4,3.0,67,1,0,-4.2,-10.0M836.9,286.4a5.9,3.1,144,1,0,-9.6,7.0a5.9,3.1,144,1,0,9.6,-7.0M834.9,276.6a6.8,2.5,88,1,0,0.5,13.5a6.8,2.5,88,1,0,-0.5,-13.5M761.9,292.6a4.4,3.6,82,1,0,1.3,8.7a4.4,3.6,82,1,0,-1.3,-8.7M788.7,287.9a6.5,3.7,21,1,0,12.2,4.7a6.5,3.7,21,1,0,-12.2,-4.7M817.7,290.8a7.0,2.4,113,1,0,-5.5,12.8a7.0,2.4,113,1,0,5.5,-12.8M819.2,295.5a5.8,2.9,3,1,0,11.7,0.6a5.8,2.9,3,1,0,-11.7,-0.6M885.6,291.9a3.7,2.8,51,1,0,4.7,5.8a3.7,2.8,51,1,0,-4.7,-5.8M718.4,302.7a6.9,2.8,2,1,0,13.7,0.5a6.9,2.8,2,1,0,-13.7,-0.5M731.8,298.6a6.0,2.3,96,1,0,-1.2,11.9a6.0,2.3,96,1,0,1.2,-11.9M784.3,295.7a4.6,3.0,41,1,0,6.9,6.1a4.6,3.0,41,1,0,-6.9,-6.1M817.4,294.4a4.4,3.6,77,1,0,2.1,8.6a4.4,3.6,77,1,0,-2.1,-8.6M838.8,300.9a5.9,2.2,177,1,0,-11.7,0.6a5.9,2.2,177,1,0,11.7,-0.6M710.0,308.5a4.5,2.5,24,1,0,8.3,3.6a4.5,2.5,24,1,0,-8.3,-3.6M735.1,308.7a5.6,3.1,132,1,0,-7.6,8.4a5.6,3.1,132,1,0,7.6,-8.4M775.1,305.1a5.8,2.1,162,1,0,-11.1,3.5a5.8,2.1,162,1,0,11.1,-3.5M835.7,309.1a5.2,3.2,123,1,0,-5.7,8.7a5.2,3.2,123,1,0,5.7,-8.7M865.4,309.9a3.5,2.1,143,1,0,-5.6,4.2a3.5,2.1,143,1,0,5.6,-4.2M714.4,312.0a5.5,2.6,143,1,0,-8.7,6.7a5.5,2.6,143,1,0,8.7,-6.7M723.5,320.8a6.2,2.8,9,1,0,12.2,2.0a6.2,2.8,9,1,0,-12.2,-2.0M728.0,312.7a4.2,2.0,40,1,0,6.5,5.4a4.2,2.0,40,1,0,-6.5,-5.4M788.2,310.1a4.7,3.1,90,1,0,0.1,9.4a4.7,3.1,90,1,0,-0.1,-9.4M806.4,315.2a3.8,3.0,87,1,0,0.4,7.6a3.8,3.0,87,1,0,-0.4,-7.6M833.0,320.4a5.0,3.1,170,1,0,-9.8,1.7a5.0,3.1,170,1,0,9.8,-1.7M834.9,312.2a6.4,3.0,62,1,0,6.1,11.3a6.4,3.0,62,1,0,-6.1,-11.3M849.7,314.1a6.3,4.0,165,1,0,-12.2,3.3a6.3,4.0,165,1,0,12.2,-3.3M850.1,317.0a6.3,3.6,32,1,0,10.8,6.7a6.3,3.6,32,1,0,-10.8,-6.7M605.5,320.1a6.2,3.6,157,1,0,-11.4,4.8a6.2,3.6,157,1,0,11.4,-4.8M604.2,324.9a5.2,2.8,64,1,0,4.6,9.4a5.2,2.8,64,1,0,-4.6,-9.4M613.5,320.5a4.3,3.3,140,1,0,-6.5,5.6a4.3,3.3,140,1,0,6.5,-5.6M703.0,318.8a5.8,3.4,82,1,0,1.6,11.4a5.8,3.4,82,1,0,-1.6,-11.4M713.4,319.3a5.0,2.3,77,1,0,2.3,9.8a5.0,2.3,77,1,0,-2.3,-9.8M728.6,322.6a5.8,3.4,111,1,0,-4.1,10.8a5.8,3.4,111,1,0,4.1,-10.8M726.7,327.5a3.7,2.9,3,1,0,7.4,0.4a3.7,2.9,3,1,0,-7.4,-0.4M742.0,323.4a3.9,3.9,153,1,0,-6.9,3.5a3.9,3.9,153,1,0,6.9,-3.5M790.3,323.6a5.8,3.5,53,1,0,7.0,9.4a5.8,3.5,53,1,0,-7.0,-9.4M808.1,322.7a6.9,2.7,128,1,0,-8.6,10.9a6.9,2.7,128,1,0,8.6,-10.9M831.2,316.5a6.4,3.7,70,1,0,4.3,12.0a6.4,3.7,70,1,0,-4.3,-12.0M600.4,335.4a4.4,2.4,21,1,0,8.2,3.2a4.4,2.4,21,1,0,-8.2,-3.2M613.2,332.7a4.4,3.0,125,1,0,-5.1,7.2a4.4,3.0,125,1,0,5.1,-7.2M620.7,333.1a4.2,3.4,126,1,0,-5.0,6.9a4.2,3.4,126,1,0,5.0,-6.9M727.3,330.6a4.9,2.8,91,1,0,-0.1,9.9a4.9,2.8,91,1,0,0.1,-9.9M729.0,330.2a6.3,3.8,40,1,0,9.5,8.1a6.3,3.8,40,1,0,-9.5,-8.1M734.3,327.5a6.3,3.2,51,1,0,7.8,9.8a6.3,3.2,51,1,0,-7.8,-9.8M806.4,331.5a3.6,2.4,118,1,0,-3.4,6.3a3.6,2.4,118,1,0,3.4,-6.3M818.1,334.8a3.9,3.3,47,1,0,5.2,5.7a3.9,3.3,47,1,0,-5.2,-5.7M846.0,328.2a4.1,3.3,111,1,0,-2.9,7.8a4.1,3.3,111,1,0,2.9,-7.8M854.1,326.9a4.8,3.6,45,1,0,6.8,6.9a4.8,3.6,45,1,0,-6.8,-6.9M888.2,328.8a5.2,2.8,96,1,0,-1.0,10.4a5.2,2.8,96,1,0,1.0,-10.4M629.5,337.5a4.8,2.2,8,1,0,9.6,1.4a4.8,2.2,8,1,0,-9.6,-1.4M788.2,334.2a4.1,3.5,103,1,0,-1.9,8.1a4.1,3.5,103,1,0,1.9,-8.1M816.3,336.7a6.4,2.7,22,1,0,11.9,4.7a6.4,2.7,22,1,0,-11.9,-4.7M855.2,335.5a5.9,4.0,143,1,0,-9.4,7.1a5.9,4.0,143,1,0,9.4,-7.1M866.4,340.1a6.3,2.8,166,1,0,-12.2,3.1a6.3,2.8,166,1,0,12.2,-3.1M865.2,340.5a4.8,4.0,8,1,0,9.4,1.4a4.8,4.0,8,1,0,-9.4,-1.4M891.1,342.6a4.5,2.7,160,1,0,-8.5,3.1a4.5,2.7,160,1,0,8.5,-3.1M797.6,349.9a5.8,2.9,140,1,0,-8.8,7.4a5.8,2.9,140,1,0,8.8,-7.4M801.8,347.7a6.4,2.2,26,1,0,11.5,5.6a6.4,2.2,26,1,0,-11.5,-5.6M836.2,347.8a4.9,3.0,37,1,0,7.9,5.9a4.9,3.0,37,1,0,-7.9,-5.9M842.5,345.8a3.9,2.3,36,1,0,6.3,4.5a3.9,2.3,36,1,0,-6.3,-4.5M883.4,345.6a4.7,2.5,117,1,0,-4.3,8.5a4.7,2.5,117,1,0,4.3,-8.5M885.7,347.5a5.1,2.9,67,1,0,4.0,9.4a5.1,2.9,67,1,0,-4.0,-9.4M615.0,356.9a4.6,2.7,56,1,0,5.2,7.6a4.6,2.7,56,1,0,-5.2,-7.6M620.3,358.6a6.0,3.6,15,1,0,11.7,3.1a6.0,3.6,15,1,0,-11.7,-3.1M783.5,349.1a5.3,2.1,86,1,0,0.7,10.7a5.3,2.1,86,1,0,-0.7,-10.7M787.6,348.2a6.8,2.2,80,1,0,2.3,13.3a6.8,2.2,80,1,0,-2.3,-13.3M876.4,356.7a5.5,2.1,132,1,0,-7.3,8.2a5.5,2.1,132,1,0,7.3,-8.2M880.5,357.0a3.7,3.5,88,1,0,0.3,7.4a3.7,3.5,88,1,0,-0.3,-7.4M892.5,357.1a5.9,3.3,125,1,0,-6.7,9.6a5.9,3.3,125,1,0,6.7,-9.6M602.4,363.3a6.7,3.4,144,1,0,-10.8,7.7a6.7,3.4,144,1,0,10.8,-7.7M600.2,361.7a5.9,3.1,20,1,0,11.1,3.9a5.9,3.1,20,1,0,-11.1,-3.9M608.9,361.0a4.3,2.4,75,1,0,2.2,8.3a4.3,2.4,75,1,0,-2.2,-8.3M634.2,362.8a4.7,2.1,120,1,0,-4.6,8.2a4.7,2.1,120,1,0,4.6,-8.2M669.5,369.7a6.5,3.5,178,1,0,-13.0,0.4a6.5,3.5,178,1,0,13.0,-0.4M668.1,366.0a3.5,2.7,63,1,0,3.2,6.3a3.5,2.7,63,1,0,-3.2,-6.3M678.5,360.3a5.9,2.2,55,1,0,6.8,9.7a5.9,2.2,55,1,0,-6.8,-9.7M682.8,358.6a5.0,3.6,61,1,0,4.8,8.7a5.0,3.6,61,1,0,-4.8,-8.7M695.3,360.1a4.3,2.0,54,1,0,5.0,7.0a4.3,2.0,54,1,0,-5.0,-7.0M705.7,359.0a5.3,2.5,96,1,0,-1.2,10.6a5.3,2.5,96,1,0,1.2,-10.6M710.3,359.7a6.4,3.5,126,1,0,-7.5,10.3a6.4,3.5,126,1,0,7.5,-10.3M756.8,369.6a6.0,3.1,0,1,0,12.0,0.0a6.0,3.1,0,1,0,-12.0,-0.0M781.1,363.1a5.3,3.9,122,1,0,-5.7,9.1a5.3,3.9,122,1,0,5.7,-9.1M795.3,362.2a4.5,3.8,63,1,0,4.1,8.0a4.5,3.8,63,1,0,-4.1,-8.0M891.6,359.1a6.3,2.5,148,1,0,-10.7,6.7a6.3,2.5,148,1,0,10.7,-6.7M606.4,373.5a5.9,2.8,9,1,0,11.7,1.9a5.9,2.8,9,1,0,-11.7,-1.9M636.9,371.8a5.2,2.2,116,1,0,-4.5,9.3a5.2,2.2,116,1,0,4.5,-9.3M648.0,368.1a5.8,3.6,149,1,0,-9.8,6.0a5.8,3.6,149,1,0,9.8,-6.0M655.9,370.3a5.2,2.1,156,1,0,-9.5,4.2a5.2,2.1,156,1,0,9.5,-4.2M669.2,373.0a6.7,3.7,149,1,0,-11.5,6.8a6.7,3.7,149,1,0,11.5,-6.8M672.1,368.0a3.7,3.5,85,1,0,0.6,7.4a3.7,3.5,85,1,0,-0.6,-7.4M686.6,367.8a6.5,3.9,136,1,0,-9.4,9.0a6.5,3.9,136,1,0,9.4,-9.0M692.0,372.6a5.7,2.1,122,1,0,-6.0,9.6a5.7,2.1,122,1,0,6.0,-9.6M697.0,368.6a5.5,2.1,83,1,0,1.3,10.9a5.5,2.1,83,1,0,-1.3,-10.9M714.2,368.9a3.8,2.8,25,1,0,6.9,3.2a3.8,2.8,25,1,0,-6.9,-3.2M778.5,373.9a6.5,3.4,161,1,0,-12.3,4.4a6.5,3.4,161,1,0,12.3,-4.4M778.3,374.0a4.4,3.3,56,1,0,4.9,7.3a4.4,3.3,56,1,0,-4.9,-7.3M799.2,373.6a4.8,3.9,149,1,0,-8.2,4.9a4.8,3.9,149,1,0,8.2,-4.9M810.4,371.3a6.8,3.2,105,1,0,-3.5,13.1a6.8,3.2,105,1,0,3.5,-13.1M816.6,371.2a4.4,3.3,156,1,0,-7.9,3.6a4.4,3.3,156,1,0,7.9,-3.6M831.4,368.8a5.4,3.4,100,1,0,-2.0,10.7a5.4,3.4,100,1,0,2.0,-10.7M861.8,365.8a5.6,3.2,86,1,0,0.7,11.2a5.6,3.2,86,1,0,-0.7,-11.2M875.3,373.5a5.4,3.5,52,1,0,6.7,8.5a5.4,3.5,52,1,0,-6.7,-8.5M890.9,372.6a6.0,2.4,172,1,0,-11.9,1.7a6.0,2.4,172,1,0,11.9,-1.7M646.0,376.4a7.0,2.2,155,1,0,-12.6,6.0a7.0,2.2,155,1,0,12.6,-6.0M730.1,375.6a3.7,2.6,88,1,0,0.2,7.4a3.7,2.6,88,1,0,-0.2,-7.4M776.4,378.8a5.8,2.2,6,1,0,11.4,1.3a5.8,2.2,6,1,0,-11.4,-1.3M832.0,379.8a4.9,2.2,119,1,0,-4.7,8.6a4.9,2.2,119,1,0,4.7,-8.6M889.3,374.2a5.8,2.1,138,1,0,-8.6,7.8a5.8,2.1,138,1,0,8.6,-7.8M788.1,382.1a4.7,3.4,77,1,0,2.1,9.2a4.7,3.4,77,1,0,-2.1,-9.2M821.9,383.0a4.3,3.2,74,1,0,2.3,8.3a4.3,3.2,74,1,0,-2.3,-8.3M832.5,384.4a6.8,2.2,59,1,0,6.9,11.7a6.8,2.2,59,1,0,-6.9,-11.7M842.0,389.0a5.9,2.2,9,1,0,11.6,1.8a5.9,2.2,9,1,0,-11.6,-1.8M872.4,384.6a4.9,3.7,19,1,0,9.2,3.2a4.9,3.7,19,1,0,-9.2,-3.2M756.5,400.6a4.2,3.5,2,1,0,8.4,0.3a4.2,3.5,2,1,0,-8.4,-0.3M786.7,390.7a5.8,3.7,137,1,0,-8.4,7.9a5.8,3.7,137,1,0,8.4,-7.9M795.6,395.7a6.6,3.8,62,1,0,6.2,11.8a6.6,3.8,62,1,0,-6.2,-11.8M824.5,397.0a4.6,2.1,142,1,0,-7.3,5.7a4.6,2.1,142,1,0,7.3,-5.7M831.6,397.0a3.7,2.6,83,1,0,0.9,7.4a3.7,2.6,83,1,0,-0.9,-7.4M843.3,393.5a5.4,2.1,101,1,0,-2.0,10.6a5.4,2.1,101,1,0,2.0,-10.6M873.7,397.0a6.3,3.1,164,1,0,-12.1,3.4a6.3,3.1,164,1,0,12.1,-3.4M877.8,398.6a4.4,3.3,23,1,0,8.2,3.5a4.4,3.3,23,1,0,-8.2,-3.5M887.4,392.0a4.9,3.8,145,1,0,-8.0,5.5a4.9,3.8,145,1,0,8.0,-5.5M835.0,403.0a7.0,2.1,38,1,0,11.0,8.6a7.0,2.1,38,1,0,-11.0,-8.6M857.5,403.9a6.0,3.2,161,1,0,-11.4,4.0a6.0,3.2,161,1,0,11.4,-4.0M878.9,402.8a4.6,2.3,16,1,0,8.9,2.5a4.6,2.3,16,1,0,-8.9,-2.5M774.7,415.2a4.7,4.0,174,1,0,-9.4,1.0a4.7,4.0,174,1,0,9.4,-1.0M779.1,415.7a6.9,3.2,7,1,0,13.8,1.7a6.9,3.2,7,1,0,-13.8,-1.7M852.5,409.0a6.6,2.3,159,1,0,-12.3,4.8a6.6,2.3,159,1,0,12.3,-4.8M855.6,407.2a6.0,3.1,70,1,0,4.2,11.3a6.0,3.1,70,1,0,-4.2,-11.3M862.0,409.9a6.8,2.1,103,1,0,-3.0,13.3a6.8,2.1,103,1,0,3.0,-13.3M875.8,406.5a6.6,3.6,128,1,0,-8.2,10.4a6.6,3.6,128,1,0,8.2,-10.4M879.0,410.5a3.8,3.4,127,1,0,-4.6,6.1a3.8,3.4,127,1,0,4.6,-6.1M883.8,411.3a6.6,2.4,73,1,0,3.8,12.6a6.6,2.4,73,1,0,-3.8,-12.6M798.2,411.7a6.5,3.4,87,1,0,0.7,13.1a6.5,3.4,87,1,0,-0.7,-13.1M833.9,418.8a6.1,4.0,157,1,0,-11.2,4.7a6.1,4.0,157,1,0,11.2,-4.7M843.0,421.6a5.3,3.4,154,1,0,-9.5,4.7a5.3,3.4,154,1,0,9.5,-4.7M858.3,420.3a4.0,3.3,112,1,0,-3.0,7.5a4.0,3.3,112,1,0,3.0,-7.5M853.3,422.9a6.4,3.9,22,1,0,11.9,4.8a6.4,3.9,22,1,0,-11.9,-4.8M882.3,424.5a5.6,2.8,12,1,0,10.9,2.3a5.6,2.8,12,1,0,-10.9,-2.3M845.4,424.6a6.9,2.6,88,1,0,0.4,13.7a6.9,2.6,88,1,0,-0.4,-13.7M851.9,429.8a4.4,3.3,65,1,0,3.7,8.0a4.4,3.3,65,1,0,-3.7,-8.0M871.5,423.7a3.7,3.1,59,1,0,3.9,6.4a3.7,3.1,59,1,0,-3.9,-6.4M885.2,429.4a3.6,2.5,178,1,0,-7.2,0.3a3.6,2.5,178,1,0,7.2,-0.3M883.2,421.9a4.8,3.1,69,1,0,3.5,8.9a4.8,3.1,69,1,0,-3.5,-8.9M633.8,437.5a3.9,2.9,120,1,0,-3.9,6.8a3.9,2.9,120,1,0,3.9,-6.8M711.8,437.6a5.9,3.1,38,1,0,9.3,7.3a5.9,3.1,38,1,0,-9.3,-7.3M832.4,430.6a5.5,3.7,86,1,0,0.7,10.9a5.5,3.7,86,1,0,-0.7,-10.9M870.3,432.3a6.7,2.2,158,1,0,-12.5,5.0a6.7,2.2,158,1,0,12.5,-5.0M866.3,434.6a6.1,3.3,5,1,0,12.1,1.1a6.1,3.3,5,1,0,-12.1,-1.1M889.6,432.9a3.5,3.8,160,1,0,-6.6,2.5a3.5,3.8,160,1,0,6.6,-2.5M603.0,439.0a4.4,3.3,137,1,0,-6.5,6.0a4.4,3.3,137,1,0,6.5,-6.0M620.2,444.6a4.1,3.1,80,1,0,1.4,8.1a4.1,3.1,80,1,0,-1.4,-8.1M647.6,439.1a5.6,3.5,133,1,0,-7.7,8.2a5.6,3.5,133,1,0,7.7,-8.2M665.9,444.0a3.6,4.0,17,1,0,7.0,2.1a3.6,4.0,17,1,0,-7.0,-2.1M688.3,442.8a7.0,2.5,138,1,0,-10.4,9.3a7.0,2.5,138,1,0,10.4,-9.3M733.4,441.3a5.9,3.0,139,1,0,-8.9,7.8a5.9,3.0,139,1,0,8.9,-7.8M747.4,438.3a4.7,2.7,126,1,0,-5.5,7.7a4.7,2.7,126,1,0,5.5,-7.7M753.7,444.6a6.7,2.3,26,1,0,12.0,5.9a6.7,2.3,26,1,0,-12.0,-5.9M774.7,442.5a4.5,2.4,32,1,0,7.6,4.8a4.5,2.4,32,1,0,-7.6,-4.8M797.8,447.3a4.7,2.7,159,1,0,-8.7,3.4a4.7,2.7,159,1,0,8.7,-3.4M620.6,450.6a6.8,3.3,173,1,0,-13.4,1.7a6.8,3.3,173,1,0,13.4,-1.7M626.0,456.0a3.6,3.7,8,1,0,7.2,1.1a3.6,3.7,8,1,0,-7.2,-1.1M672.7,447.6a5.3,3.0,115,1,0,-4.4,9.6a5.3,3.0,115,1,0,4.4,-9.6M747.0,451.3a4.1,2.2,13,1,0,8.0,1.8a4.1,2.2,13,1,0,-8.0,-1.8M777.5,449.3a3.6,3.4,150,1,0,-6.2,3.6a3.6,3.4,150,1,0,6.2,-3.6M778.9,445.4a6.4,3.7,49,1,0,8.5,9.6a6.4,3.7,49,1,0,-8.5,-9.6M790.0,450.9a6.6,2.0,58,1,0,6.9,11.2a6.6,2.0,58,1,0,-6.9,-11.2M593.9,457.9a6.0,3.0,20,1,0,11.3,4.1a6.0,3.0,20,1,0,-11.3,-4.1M652.8,459.0a7.0,3.4,4,1,0,13.9,0.9a7.0,3.4,4,1,0,-13.9,-0.9M669.6,453.8a6.9,2.2,120,1,0,-6.9,11.8a6.9,2.2,120,1,0,6.9,-11.8M683.1,455.4a4.6,2.7,143,1,0,-7.3,5.6a4.6,2.7,143,1,0,7.3,-5.6M759.6,463.2a4.1,3.4,15,1,0,8.0,2.1a4.1,3.4,15,1,0,-8.0,-2.1M782.7,464.7a6.0,3.3,176,1,0,-11.9,0.8a6.0,3.3,176,1,0,11.9,-0.8M780.1,456.9a4.4,3.8,65,1,0,3.7,8.1a4.4,3.8,65,1,0,-3.7,-8.1M793.4,464.5a4.1,3.3,178,1,0,-8.3,0.3a4.1,3.3,178,1,0,8.3,-0.3M795.0,456.9a6.0,2.8,69,1,0,4.4,11.2a6.0,2.8,69,1,0,-4.4,-11.2M808.0,458.7a6.3,2.1,137,1,0,-9.1,8.6a6.3,2.1,137,1,0,9.1,-8.6M807.5,462.0a4.7,2.2,38,1,0,7.5,5.8a4.7,2.2,38,1,0,-7.5,-5.8M820.3,462.3a3.6,2.0,101,1,0,-1.3,7.0a3.6,2.0,101,1,0,1.3,-7.0M866.0,458.9a6.0,2.1,53,1,0,7.2,9.5a6.0,2.1,53,1,0,-7.2,-9.5M872.4,461.1a3.9,2.3,11,1,0,7.6,1.5a3.9,2.3,11,1,0,-7.6,-1.5M763.1,460.9a6.3,3.6,90,1,0,-0.1,12.7a6.3,3.6,90,1,0,0.1,-12.7M810.7,462.7a6.9,3.1,120,1,0,-7.0,12.0a6.9,3.1,120,1,0,7.0,-12.0M821.6,463.9a3.8,3.9,94,1,0,-0.5,7.5a3.8,3.9,94,1,0,0.5,-7.5M827.6,465.6a4.9,3.6,82,1,0,1.4,9.6a4.9,3.6,82,1,0,-1.4,-9.6M845.4,471.9a4.1,3.4,176,1,0,-8.1,0.5a4.1,3.4,176,1,0,8.1,-0.5M851.8,465.1a3.5,3.3,160,1,0,-6.6,2.4a3.5,3.3,160,1,0,6.6,-2.4M860.4,467.7a6.1,3.1,144,1,0,-9.8,7.1a6.1,3.1,144,1,0,9.8,-7.1M862.9,468.8a3.7,3.1,165,1,0,-7.2,2.0a3.7,3.1,165,1,0,7.2,-2.0M869.5,465.9a6.6,3.9,115,1,0,-5.5,12.0a6.6,3.9,115,1,0,5.5,-12.0M883.3,466.5a5.6,2.7,144,1,0,-9.0,6.6a5.6,2.7,144,1,0,9.0,-6.6M891.4,466.2a6.0,3.7,147,1,0,-10.0,6.6a6.0,3.7,147,1,0,10.0,-6.6M756.6,476.4a5.0,2.9,161,1,0,-9.4,3.2a5.0,2.9,161,1,0,9.4,-3.2M766.2,478.6a5.0,3.5,162,1,0,-9.5,3.2a5.0,3.5,162,1,0,9.5,-3.2M775.6,479.5a4.3,2.4,147,1,0,-7.1,4.7a4.3,2.4,147,1,0,7.1,-4.7M814.3,469.1a6.3,2.3,63,1,0,5.8,11.2a6.3,2.3,63,1,0,-5.8,-11.2M833.7,473.6a4.2,3.2,130,1,0,-5.3,6.4a4.2,3.2,130,1,0,5.3,-6.4M834.3,474.7a5.5,3.1,74,1,0,3.0,10.6a5.5,3.1,74,1,0,-3.0,-10.6M845.1,472.4a6.6,3.9,117,1,0,-5.9,11.8a6.6,3.9,117,1,0,5.9,-11.8M855.7,469.9a5.2,3.2,58,1,0,5.5,8.9a5.2,3.2,58,1,0,-5.5,-8.9M865.1,472.6a6.1,2.5,20,1,0,11.4,4.2a6.1,2.5,20,1,0,-11.4,-4.2M885.7,472.7a6.4,2.1,113,1,0,-4.9,11.9a6.4,2.1,113,1,0,4.9,-11.9M756.0,483.1a3.8,3.8,136,1,0,-5.4,5.2a3.8,3.8,136,1,0,5.4,-5.2M757.1,483.6a5.2,2.6,102,1,0,-2.2,10.1a5.2,2.6,102,1,0,2.2,-10.1M766.8,484.2a3.6,2.2,142,1,0,-5.6,4.4a3.6,2.2,142,1,0,5.6,-4.4M740.9,487.5a4.3,2.4,79,1,0,1.7,8.4a4.3,2.4,79,1,0,-1.7,-8.4M745.9,488.3a3.9,3.7,74,1,0,2.1,7.4a3.9,3.7,74,1,0,-2.1,-7.4M751.6,493.6a4.8,2.0,32,1,0,8.1,5.1a4.8,2.0,32,1,0,-8.1,-5.1M764.6,491.4a5.6,2.2,27,1,0,9.9,5.1a5.6,2.2,27,1,0,-9.9,-5.1M775.8,488.6a6.5,2.6,80,1,0,2.2,12.9a6.5,2.6,80,1,0,-2.2,-12.9M616.5,496.5a5.9,2.3,117,1,0,-5.4,10.6a5.9,2.3,117,1,0,5.4,-10.6M620.5,499.7a4.4,3.2,22,1,0,8.1,3.2a4.4,3.2,22,1,0,-8.1,-3.2M663.2,501.9a6.1,3.7,7,1,0,12.2,1.4a6.1,3.7,7,1,0,-12.2,-1.4M680.3,504.6a4.0,3.6,178,1,0,-8.0,0.3a4.0,3.6,178,1,0,8.0,-0.3M693.4,501.7a4.9,3.1,28,1,0,8.6,4.7a4.9,3.1,28,1,0,-8.6,-4.7M716.0,499.9a6.4,2.8,166,1,0,-12.4,3.2a6.4,2.8,166,1,0,12.4,-3.2M728.5,500.0a6.8,2.6,179,1,0,-13.7,0.4a6.8,2.6,179,1,0,13.7,-0.4M722.1,500.4a4.9,3.3,37,1,0,7.8,5.9a4.9,3.3,37,1,0,-7.8,-5.9M741.5,496.2a6.2,2.6,126,1,0,-7.4,10.0a6.2,2.6,126,1,0,7.4,-10.0M743.1,499.6a4.7,3.2,80,1,0,1.6,9.2a4.7,3.2,80,1,0,-1.6,-9.2M761.3,496.8a4.2,2.9,138,1,0,-6.3,5.6a4.2,2.9,138,1,0,6.3,-5.6M770.1,497.6a6.0,2.7,170,1,0,-11.8,2.0a6.0,2.7,170,1,0,11.8,-2.0M600.7,507.3a6.3,3.9,2,1,0,12.5,0.5a6.3,3.9,2,1,0,-12.5,-0.5M616.0,505.4a4.1,2.5,28,1,0,7.2,3.9a4.1,2.5,28,1,0,-7.2,-3.9M623.7,504.3a4.7,2.3,32,1,0,7.9,5.0a4.7,2.3,32,1,0,-7.9,-5.0M633.8,505.2a3.7,3.5,22,1,0,6.8,2.7a3.7,3.5,22,1,0,-6.8,-2.7M664.4,504.7a4.7,3.3,87,1,0,0.5,9.4a4.7,3.3,87,1,0,-0.5,-9.4M677.5,508.7a4.9,2.9,109,1,0,-3.2,9.3a4.9,2.9,109,1,0,3.2,-9.3M678.5,510.3a4.5,2.6,13,1,0,8.7,2.1a4.5,2.6,13,1,0,-8.7,-2.1M703.6,505.1a4.7,2.4,105,1,0,-2.5,9.0a4.7,2.4,105,1,0,2.5,-9.0M731.0,503.2a4.4,2.7,81,1,0,1.4,8.6a4.4,2.7,81,1,0,-1.4,-8.6M751.6,509.1a6.4,3.9,165,1,0,-12.4,3.3a6.4,3.9,165,1,0,12.4,-3.3M647.0,515.7a5.9,3.6,145,1,0,-9.6,6.8a5.9,3.6,145,1,0,9.6,-6.8M652.7,510.7a6.4,3.4,101,1,0,-2.4,12.6a6.4,3.4,101,1,0,2.4,-12.6M665.5,517.2a4.1,3.9,139,1,0,-6.3,5.4a4.1,3.9,139,1,0,6.3,-5.4M672.1,514.7a4.3,2.1,119,1,0,-4.2,7.5a4.3,2.1,119,1,0,4.2,-7.5M684.1,512.6a5.0,2.6,136,1,0,-7.2,6.9a5.0,2.6,136,1,0,7.2,-6.9M677.9,513.7a6.5,3.4,21,1,0,12.2,4.7a6.5,3.4,21,1,0,-12.2,-4.7M720.9,515.5a3.9,3.0,76,1,0,1.9,7.6a3.9,3.0,76,1,0,-1.9,-7.6M728.4,513.8a4.2,3.5,103,1,0,-1.9,8.2a4.2,3.5,103,1,0,1.9,-8.2M734.4,512.1a3.9,2.3,63,1,0,3.6,7.0a3.9,2.3,63,1,0,-3.6,-7.0M757.3,515.8a4.5,3.3,128,1,0,-5.4,7.1a4.5,3.3,128,1,0,5.4,-7.1" fill="#f79a9a"/><path d="M623.3,265.7a6.3,3.3,110,1,0,-4.2,11.8a6.3,3.3,110,1,0,4.2,-11.8M607.6,269.7a5.0,3.1,96,1,0,-1.0,10.0a5.0,3.1,96,1,0,1.0,-10.0M669.0,283.3a4.9,2.8,50,1,0,6.4,7.5a4.9,2.8,50,1,0,-6.4,-7.5M892.8,285.1a5.1,3.7,130,1,0,-6.6,7.7a5.1,3.7,130,1,0,6.6,-7.7M757.5,288.5a5.2,2.5,151,1,0,-9.1,5.0a5.2,2.5,151,1,0,9.1,-5.0M593.3,301.5a5.9,3.3,44,1,0,8.5,8.2a5.9,3.3,44,1,0,-8.5,-8.2M621.7,303.1a5.4,2.2,161,1,0,-10.3,3.5a5.4,2.2,161,1,0,10.3,-3.5M615.9,295.6a6.0,3.3,62,1,0,5.7,10.6a6.0,3.3,62,1,0,-5.7,-10.6M630.8,300.4a5.7,2.9,65,1,0,4.8,10.4a5.7,2.9,65,1,0,-4.8,-10.4M643.3,300.1a5.6,3.9,176,1,0,-11.2,0.8a5.6,3.9,176,1,0,11.2,-0.8M656.3,301.5a5.8,2.4,178,1,0,-11.6,0.4a5.8,2.4,178,1,0,11.6,-0.4M655.0,299.7a4.9,3.5,15,1,0,9.4,2.5a4.9,3.5,15,1,0,-9.4,-2.5M684.5,302.0a5.1,2.0,155,1,0,-9.3,4.4a5.1,2.0,155,1,0,9.3,-4.4M590.6,305.1a5.5,3.8,38,1,0,8.6,6.7a5.5,3.8,38,1,0,-8.6,-6.7M605.0,306.4a3.9,3.7,85,1,0,0.7,7.8a3.9,3.7,85,1,0,-0.7,-7.8M610.1,303.6a5.9,3.9,89,1,0,0.2,11.7a5.9,3.9,89,1,0,-0.2,-11.7M620.2,307.2a3.9,3.5,30,1,0,6.7,3.9a3.9,3.5,30,1,0,-6.7,-3.9M631.8,303.7a4.1,2.7,106,1,0,-2.3,7.8a4.1,2.7,106,1,0,2.3,-7.8M639.8,302.9a6.4,2.7,105,1,0,-3.4,12.5a6.4,2.7,105,1,0,3.4,-12.5M641.8,309.5a5.9,2.5,47,1,0,8.1,8.7a5.9,2.5,47,1,0,-8.1,-8.7M654.4,307.1a3.7,3.6,68,1,0,2.8,6.9a3.7,3.6,68,1,0,-2.8,-6.9M666.1,304.9a6.1,2.2,55,1,0,7.0,10.1a6.1,2.2,55,1,0,-7.0,-10.1M678.0,301.5a5.5,3.1,60,1,0,5.5,9.5a5.5,3.1,60,1,0,-5.5,-9.5M688.1,309.6a6.3,2.2,141,1,0,-9.8,7.9a6.3,2.2,141,1,0,9.8,-7.9M594.9,317.1a4.3,3.3,47,1,0,5.9,6.3a4.3,3.3,47,1,0,-5.9,-6.3M603.8,312.7a4.1,2.5,54,1,0,4.8,6.7a4.1,2.5,54,1,0,-4.8,-6.7M606.6,318.3a6.3,3.1,14,1,0,12.2,3.1a6.3,3.1,14,1,0,-12.2,-3.1M622.2,311.4a5.0,4.0,67,1,0,3.9,9.1a5.0,4.0,67,1,0,-3.9,-9.1M632.7,318.3a4.9,2.3,142,1,0,-7.7,6.0a4.9,2.3,142,1,0,7.7,-6.0M654.7,320.8a4.2,3.8,173,1,0,-8.4,1.0a4.2,3.8,173,1,0,8.4,-1.0M673.3,316.0a4.5,3.9,13,1,0,8.7,2.0a4.5,3.9,13,1,0,-8.7,-2.0M625.6,322.1a4.5,2.4,117,1,0,-4.0,8.0a4.5,2.4,117,1,0,4.0,-8.0M627.4,324.2a6.7,3.8,52,1,0,8.2,10.7a6.7,3.8,52,1,0,-8.2,-10.7M645.6,319.4a6.5,3.1,85,1,0,1.1,13.0a6.5,3.1,85,1,0,-1.1,-13.0M653.1,319.3a5.5,2.5,59,1,0,5.7,9.5a5.5,2.5,59,1,0,-5.7,-9.5M660.8,317.6a5.3,3.9,115,1,0,-4.5,9.7a5.3,3.9,115,1,0,4.5,-9.7M682.8,326.4a5.4,3.3,169,1,0,-10.7,2.1a5.4,3.3,169,1,0,10.7,-2.1M873.0,319.8a5.6,2.9,95,1,0,-1.1,11.2a5.6,2.9,95,1,0,1.1,-11.2M592.6,332.1a4.8,3.3,27,1,0,8.6,4.3a4.8,3.3,27,1,0,-8.6,-4.3M627.8,332.0a5.2,2.6,80,1,0,1.9,10.1a5.2,2.6,80,1,0,-1.9,-10.1M672.3,326.7a3.7,3.7,98,1,0,-1.0,7.4a3.7,3.7,98,1,0,1.0,-7.4M870.8,332.1a4.2,2.5,52,1,0,5.1,6.6a4.2,2.5,52,1,0,-5.1,-6.6M878.7,330.1a5.8,3.3,69,1,0,4.2,10.9a5.8,3.3,69,1,0,-4.2,-10.9M590.1,336.1a4.8,2.7,27,1,0,8.6,4.3a4.8,2.7,27,1,0,-8.6,-4.3M610.6,341.8a5.3,3.0,138,1,0,-7.8,7.0a5.3,3.0,138,1,0,7.8,-7.0M620.0,337.4a6.0,2.2,156,1,0,-11.0,5.0a6.0,2.2,156,1,0,11.0,-5.0M622.8,334.9a6.5,3.2,134,1,0,-9.0,9.2a6.5,3.2,134,1,0,9.0,-9.2M626.5,340.7a6.4,2.3,29,1,0,11.2,6.2a6.4,2.3,29,1,0,-11.2,-6.2M646.6,336.0a5.7,2.3,30,1,0,9.9,5.8a5.7,2.3,30,1,0,-9.9,-5.8M665.6,338.2a4.2,2.7,2,1,0,8.4,0.2a4.2,2.7,2,1,0,-8.4,-0.2M725.0,344.3a6.4,3.3,173,1,0,-12.8,1.6a6.4,3.3,173,1,0,12.8,-1.6M608.1,346.2a5.9,2.4,80,1,0,2.0,11.6a5.9,2.4,80,1,0,-2.0,-11.6M632.6,345.0a5.1,2.6,165,1,0,-9.9,2.7a5.1,2.6,165,1,0,9.9,-2.7M638.1,344.9a6.7,3.9,111,1,0,-4.9,12.5a6.7,3.9,111,1,0,4.9,-12.5M862.7,350.4a4.1,3.5,147,1,0,-6.9,4.5a4.1,3.5,147,1,0,6.9,-4.5M601.5,353.6a3.6,2.2,77,1,0,1.7,7.0a3.6,2.2,77,1,0,-1.7,-7.0M778.6,357.5a4.5,2.2,128,1,0,-5.5,7.1a4.5,2.2,128,1,0,5.5,-7.1M651.5,363.7a5.1,2.0,111,1,0,-3.6,9.6a5.1,2.0,111,1,0,3.6,-9.6M788.1,363.3a4.7,3.5,104,1,0,-2.3,9.0a4.7,3.5,104,1,0,2.3,-9.0M790.2,367.5a4.3,2.2,140,1,0,-6.6,5.6a4.3,2.2,140,1,0,6.6,-5.6M596.4,380.4a5.7,2.8,16,1,0,10.9,3.1a5.7,2.8,16,1,0,-10.9,-3.1M767.2,374.6a5.9,2.5,124,1,0,-6.6,9.8a5.9,2.5,124,1,0,6.6,-9.8M774.0,379.4a4.7,4.0,82,1,0,1.3,9.2a4.7,4.0,82,1,0,-1.3,-9.2M795.9,377.8a5.7,2.9,97,1,0,-1.4,11.3a5.7,2.9,97,1,0,1.4,-11.3M655.6,394.1a5.6,3.5,139,1,0,-8.5,7.4a5.6,3.5,139,1,0,8.5,-7.4M820.2,403.9a3.8,3.2,110,1,0,-2.7,7.2a3.8,3.2,110,1,0,2.7,-7.2M868.6,399.6a4.5,3.2,136,1,0,-6.5,6.3a4.5,3.2,136,1,0,6.5,-6.3M724.7,414.7a5.6,3.4,87,1,0,0.6,11.1a5.6,3.4,87,1,0,-0.6,-11.1M757.6,421.6a6.7,2.3,36,1,0,10.8,7.9a6.7,2.3,36,1,0,-10.8,-7.9M607.8,465.0a5.0,3.1,8,1,0,9.8,1.4a5.0,3.1,8,1,0,-9.8,-1.4M630.7,457.3a4.1,2.6,124,1,0,-4.6,6.7a4.1,2.6,124,1,0,4.6,-6.7M651.5,463.2a3.7,3.7,137,1,0,-5.5,5.1a3.7,3.7,137,1,0,5.5,-5.1M655.3,460.1a5.2,2.4,177,1,0,-10.3,0.5a5.2,2.4,177,1,0,10.3,-0.5M691.2,460.0a5.7,2.3,148,1,0,-9.7,6.0a5.7,2.3,148,1,0,9.7,-6.0M700.5,457.8a6.9,3.7,129,1,0,-8.7,10.8a6.9,3.7,129,1,0,8.7,-10.8M702.0,454.5a3.7,2.1,107,1,0,-2.2,7.1a3.7,2.1,107,1,0,2.2,-7.1M712.4,458.3a3.6,2.3,65,1,0,3.0,6.5a3.6,2.3,65,1,0,-3.0,-6.5M711.1,456.1a7.0,4.0,35,1,0,11.4,8.1a7.0,4.0,35,1,0,-11.4,-8.1M726.5,462.3a5.7,2.2,22,1,0,10.6,4.2a5.7,2.2,22,1,0,-10.6,-4.2M749.8,463.3a5.8,3.5,156,1,0,-10.7,4.7a5.8,3.5,156,1,0,10.7,-4.7M760.3,462.3a5.0,3.2,171,1,0,-9.9,1.6a5.0,3.2,171,1,0,9.9,-1.6M836.2,456.7a5.1,2.9,27,1,0,9.1,4.7a5.1,2.9,27,1,0,-9.1,-4.7M884.3,457.9a5.6,2.4,110,1,0,-3.8,10.5a5.6,2.4,110,1,0,3.8,-10.5M593.6,467.6a4.4,2.6,8,1,0,8.8,1.3a4.4,2.6,8,1,0,-8.8,-1.3M599.9,468.9a6.1,3.0,48,1,0,8.1,9.0a6.1,3.0,48,1,0,-8.1,-9.0M611.0,465.1a5.3,2.1,70,1,0,3.7,10.0a5.3,2.1,70,1,0,-3.7,-10.0M625.2,467.6a6.7,3.7,161,1,0,-12.6,4.4a6.7,3.7,161,1,0,12.6,-4.4M625.7,467.6a3.9,2.8,11,1,0,7.7,1.5a3.9,2.8,11,1,0,-7.7,-1.5M642.9,468.6a4.2,3.7,126,1,0,-4.8,6.8a4.2,3.7,126,1,0,4.8,-6.8M651.4,468.3a5.2,3.9,167,1,0,-10.0,2.4a5.2,3.9,167,1,0,10.0,-2.4M650.9,464.0a6.7,3.7,72,1,0,4.1,12.7a6.7,3.7,72,1,0,-4.1,-12.7M661.3,462.7a5.8,3.2,94,1,0,-0.8,11.6a5.8,3.2,94,1,0,0.8,-11.6M676.3,462.8a5.9,3.5,147,1,0,-9.9,6.5a5.9,3.5,147,1,0,9.9,-6.5M690.0,466.4a6.6,2.7,168,1,0,-13.0,2.8a6.6,2.7,168,1,0,13.0,-2.8M702.0,461.9a7.0,3.0,140,1,0,-10.7,9.0a7.0,3.0,140,1,0,10.7,-9.0M702.9,462.2a6.5,3.9,72,1,0,4.1,12.4a6.5,3.9,72,1,0,-4.1,-12.4M714.4,461.4a5.6,4.0,124,1,0,-6.3,9.4a5.6,4.0,124,1,0,6.3,-9.4M717.7,461.0a6.5,3.1,97,1,0,-1.6,13.0a6.5,3.1,97,1,0,1.6,-13.0M728.2,466.3a4.6,2.9,170,1,0,-9.0,1.7a4.6,2.9,170,1,0,9.0,-1.7M728.2,462.4a6.8,2.5,54,1,0,8.0,10.9a6.8,2.5,54,1,0,-8.0,-10.9M737.3,462.9a5.4,2.5,42,1,0,8.1,7.3a5.4,2.5,42,1,0,-8.1,-7.3M758.1,468.4a5.8,3.5,166,1,0,-11.2,2.8a5.8,3.5,166,1,0,11.2,-2.8M813.4,463.3a4.8,2.0,77,1,0,2.2,9.4a4.8,2.0,77,1,0,-2.2,-9.4M599.8,472.0a3.9,2.2,91,1,0,-0.2,7.8a3.9,2.2,91,1,0,0.2,-7.8M600.5,473.2a5.0,3.7,65,1,0,4.3,9.1a5.0,3.7,65,1,0,-4.3,-9.1M608.9,473.6a5.5,2.2,27,1,0,9.9,4.9a5.5,2.2,27,1,0,-9.9,-4.9M624.6,479.4a4.3,2.5,175,1,0,-8.5,0.8a4.3,2.5,175,1,0,8.5,-0.8M636.4,480.0a5.8,2.5,177,1,0,-11.6,0.7a5.8,2.5,177,1,0,11.6,-0.7M642.5,476.9a3.8,3.8,60,1,0,3.8,6.6a3.8,3.8,60,1,0,-3.8,-6.6M646.2,477.5a5.6,2.9,22,1,0,10.4,4.2a5.6,2.9,22,1,0,-10.4,-4.2M671.3,476.0a6.6,3.3,148,1,0,-11.3,7.0a6.6,3.3,148,1,0,11.3,-7.0M676.2,474.7a4.1,3.6,171,1,0,-8.1,1.3a4.1,3.6,171,1,0,8.1,-1.3M675.2,475.2a5.3,2.9,51,1,0,6.8,8.2a5.3,2.9,51,1,0,-6.8,-8.2M684.6,471.2a6.5,2.1,36,1,0,10.5,7.6a6.5,2.1,36,1,0,-10.5,-7.6M690.7,475.1a3.6,3.3,13,1,0,7.0,1.7a3.6,3.3,13,1,0,-7.0,-1.7M696.1,474.4a4.3,3.1,6,1,0,8.5,0.9a4.3,3.1,6,1,0,-8.5,-0.9M714.4,475.1a4.2,2.6,156,1,0,-7.7,3.3a4.2,2.6,156,1,0,7.7,-3.3M714.5,473.4a4.5,2.3,90,1,0,0.0,9.0a4.5,2.3,90,1,0,-0.0,-9.0M725.2,470.3a4.8,2.5,128,1,0,-5.9,7.6a4.8,2.5,128,1,0,5.9,-7.6M734.5,473.0a6.0,3.9,101,1,0,-2.3,11.8a6.0,3.9,101,1,0,2.3,-11.8M737.2,477.7a6.4,3.1,7,1,0,12.7,1.6a6.4,3.1,7,1,0,-12.7,-1.6M791.5,478.9a6.4,3.7,28,1,0,11.2,6.0a6.4,3.7,28,1,0,-11.2,-6.0M599.8,487.8a5.2,3.5,177,1,0,-10.4,0.5a5.2,3.5,177,1,0,10.4,-0.5M608.3,482.5a5.7,3.1,89,1,0,0.2,11.5a5.7,3.1,89,1,0,-0.2,-11.5M620.9,485.1a6.2,3.3,176,1,0,-12.3,1.0a6.2,3.3,176,1,0,12.3,-1.0M629.6,485.2a5.3,3.0,142,1,0,-8.3,6.4a5.3,3.0,142,1,0,8.3,-6.4M630.1,477.9a6.5,4.0,61,1,0,6.4,11.4a6.5,4.0,61,1,0,-6.4,-11.4M644.3,483.3a5.7,3.4,162,1,0,-10.9,3.5a5.7,3.4,162,1,0,10.9,-3.5M651.6,484.2a7.0,3.0,165,1,0,-13.4,3.5a7.0,3.0,165,1,0,13.4,-3.5M659.3,478.7a3.9,3.0,113,1,0,-3.1,7.1a3.9,3.0,113,1,0,3.1,-7.1M657.1,482.2a4.7,3.1,71,1,0,3.0,8.9a4.7,3.1,71,1,0,-3.0,-8.9M671.9,480.8a5.7,3.1,145,1,0,-9.4,6.6a5.7,3.1,145,1,0,9.4,-6.6M675.4,487.0a5.4,2.6,12,1,0,10.6,2.2a5.4,2.6,12,1,0,-10.6,-2.2M695.6,480.9a6.5,2.6,164,1,0,-12.5,3.6a6.5,2.6,164,1,0,12.5,-3.6M695.6,481.4a5.7,3.6,161,1,0,-10.8,3.7a5.7,3.6,161,1,0,10.8,-3.7M702.9,480.2a3.7,2.9,63,1,0,3.4,6.5a3.7,2.9,63,1,0,-3.4,-6.5M713.1,483.6a6.9,2.7,180,1,0,-13.8,0.0a6.9,2.7,180,1,0,13.8,-0.0M722.6,479.0a4.2,2.6,129,1,0,-5.3,6.5a4.2,2.6,129,1,0,5.3,-6.5M719.3,483.2a4.6,2.6,20,1,0,8.7,3.2a4.6,2.6,20,1,0,-8.7,-3.2M728.0,479.1a6.8,2.5,66,1,0,5.5,12.4a6.8,2.5,66,1,0,-5.5,-12.4M742.1,487.5a3.8,2.7,164,1,0,-7.3,2.0a3.8,2.7,164,1,0,7.3,-2.0M591.8,491.8a4.1,3.8,49,1,0,5.4,6.2a4.1,3.8,49,1,0,-5.4,-6.2M601.3,486.6a4.2,3.7,78,1,0,1.7,8.2a4.2,3.7,78,1,0,-1.7,-8.2M608.4,493.3a4.0,2.0,54,1,0,4.6,6.4a4.0,2.0,54,1,0,-4.6,-6.4M625.2,492.7a3.8,2.0,160,1,0,-7.1,2.6a3.8,2.0,160,1,0,7.1,-2.6M625.1,492.2a5.6,3.5,40,1,0,8.6,7.1a5.6,3.5,40,1,0,-8.6,-7.1M638.5,487.8a6.9,2.5,114,1,0,-5.6,12.6a6.9,2.5,114,1,0,5.6,-12.6M643.5,485.9a7.0,2.8,84,1,0,1.6,13.9a7.0,2.8,84,1,0,-1.6,-13.9M646.0,492.5a6.4,2.5,42,1,0,9.5,8.6a6.4,2.5,42,1,0,-9.5,-8.6M661.6,489.4a4.8,2.7,134,1,0,-6.6,6.9a4.8,2.7,134,1,0,6.6,-6.9M681.3,492.6a3.9,3.4,105,1,0,-1.9,7.5a3.9,3.4,105,1,0,1.9,-7.5M690.5,494.6a4.8,3.3,161,1,0,-9.1,3.1a4.8,3.3,161,1,0,9.1,-3.1M697.3,492.2a5.0,3.0,83,1,0,1.2,9.9a5.0,3.0,83,1,0,-1.2,-9.9M703.2,491.3a4.8,3.8,160,1,0,-9.1,3.2a4.8,3.8,160,1,0,9.1,-3.2M713.6,496.8a3.5,3.2,172,1,0,-7.0,1.0a3.5,3.2,172,1,0,7.0,-1.0M718.4,486.6a6.6,3.1,107,1,0,-3.8,12.6a6.6,3.1,107,1,0,3.8,-12.6M724.1,492.5a5.4,2.9,60,1,0,5.4,9.4a5.4,2.9,60,1,0,-5.4,-9.4M734.0,494.6a3.8,3.3,8,1,0,7.6,1.1a3.8,3.3,8,1,0,-7.6,-1.1M592.7,495.1a5.3,3.8,59,1,0,5.4,9.0a5.3,3.8,59,1,0,-5.4,-9.0M605.4,495.1a6.7,2.4,67,1,0,5.3,12.4a6.7,2.4,67,1,0,-5.3,-12.4M633.2,494.9a5.1,3.7,44,1,0,7.3,7.1a5.1,3.7,44,1,0,-7.3,-7.1M641.1,494.1a5.9,3.1,58,1,0,6.2,10.0a5.9,3.1,58,1,0,-6.2,-10.0M659.4,494.4a3.7,3.3,90,1,0,-0.1,7.3a3.7,3.3,90,1,0,0.1,-7.3M688.1,496.5a3.5,2.2,59,1,0,3.6,6.1a3.5,2.2,59,1,0,-3.6,-6.1M702.1,499.2a3.6,3.9,175,1,0,-7.2,0.6a3.6,3.9,175,1,0,7.2,-0.6M888.6,499.1a5.8,3.1,93,1,0,-0.6,11.6a5.8,3.1,93,1,0,0.6,-11.6M873.2,516.6a5.6,3.8,108,1,0,-3.4,10.7a5.6,3.8,108,1,0,3.4,-10.7" fill="#fdf7a8"/><path d="M670.3,232.4a6.2,2.2,44,1,0,8.8,8.6a6.2,2.2,44,1,0,-8.8,-8.6M705.6,233.9a6.3,2.6,159,1,0,-11.8,4.5a6.3,2.6,159,1,0,11.8,-4.5M851.2,236.3a4.9,3.5,105,1,0,-2.4,9.4a4.9,3.5,105,1,0,2.4,-9.4M705.2,245.0a6.9,3.1,142,1,0,-11.0,8.5a6.9,3.1,142,1,0,11.0,-8.5M844.4,244.5a4.3,3.5,146,1,0,-7.1,4.8a4.3,3.5,146,1,0,7.1,-4.8M866.8,242.1a3.9,2.8,123,1,0,-4.3,6.6a3.9,2.8,123,1,0,4.3,-6.6M859.9,241.2a6.7,3.9,21,1,0,12.5,4.7a6.7,3.9,21,1,0,-12.5,-4.7M690.1,253.5a3.6,3.2,133,1,0,-4.9,5.2a3.6,3.2,133,1,0,4.9,-5.2M796.0,252.6a5.4,4.0,171,1,0,-10.6,1.6a5.4,4.0,171,1,0,10.6,-1.6M807.1,247.2a5.5,3.2,114,1,0,-4.4,10.0a5.5,3.2,114,1,0,4.4,-10.0M838.1,247.4a5.7,3.5,38,1,0,8.9,7.1a5.7,3.5,38,1,0,-8.9,-7.1M858.2,251.9a4.8,3.3,178,1,0,-9.6,0.3a4.8,3.3,178,1,0,9.6,-0.3M857.9,248.2a6.7,2.9,66,1,0,5.4,12.3a6.7,2.9,66,1,0,-5.4,-12.3M881.3,249.1a3.8,2.4,119,1,0,-3.7,6.6a3.8,2.4,119,1,0,3.7,-6.6M877.3,249.9a5.9,2.6,26,1,0,10.7,5.1a5.9,2.6,26,1,0,-10.7,-5.1M789.8,259.8a6.4,2.2,49,1,0,8.4,9.6a6.4,2.2,49,1,0,-8.4,-9.6M881.3,253.1a6.0,2.4,72,1,0,3.6,11.4a6.0,2.4,72,1,0,-3.6,-11.4M789.9,281.0a6.9,2.3,124,1,0,-7.7,11.5a6.9,2.3,124,1,0,7.7,-11.5M822.1,284.2a4.5,2.8,111,1,0,-3.2,8.4a4.5,2.8,111,1,0,3.2,-8.4M847.5,283.1a4.8,2.5,9,1,0,9.4,1.5a4.8,2.5,9,1,0,-9.4,-1.5M789.6,288.7a6.3,2.3,66,1,0,5.1,11.5a6.3,2.3,66,1,0,-5.1,-11.5M791.9,307.5a5.3,2.2,95,1,0,-0.9,10.6a5.3,2.2,95,1,0,0.9,-10.6M846.0,308.7a3.6,2.2,156,1,0,-6.6,2.9a3.6,2.2,156,1,0,6.6,-2.9M786.5,324.2a5.1,2.8,162,1,0,-9.7,3.2a5.1,2.8,162,1,0,9.7,-3.2M834.4,323.4a6.1,3.2,45,1,0,8.6,8.7a6.1,3.2,45,1,0,-8.6,-8.7M853.0,323.4a4.5,3.1,95,1,0,-0.8,8.9a4.5,3.1,95,1,0,0.8,-8.9M877.3,325.4a4.7,3.5,14,1,0,9.2,2.2a4.7,3.5,14,1,0,-9.2,-2.2M788.7,330.6a5.6,3.2,31,1,0,9.5,5.8a5.6,3.2,31,1,0,-9.5,-5.8M835.5,333.6a3.7,2.1,144,1,0,-6.0,4.4a3.7,2.1,144,1,0,6.0,-4.4M785.9,332.8a6.9,2.4,111,1,0,-4.9,12.9a6.9,2.4,111,1,0,4.9,-12.9M836.3,341.6a5.4,3.2,155,1,0,-9.9,4.5a5.4,3.2,155,1,0,9.9,-4.5M809.9,342.7a4.6,2.9,84,1,0,1.0,9.1a4.6,2.9,84,1,0,-1.0,-9.1M826.3,345.5a4.7,3.7,145,1,0,-7.6,5.4a4.7,3.7,145,1,0,7.6,-5.4M811.3,355.3a6.8,3.8,149,1,0,-11.6,6.9a6.8,3.8,149,1,0,11.6,-6.9M835.5,347.9a6.9,3.4,85,1,0,1.2,13.7a6.9,3.4,85,1,0,-1.2,-13.7M852.8,356.6a6.7,3.8,97,1,0,-1.7,13.3a6.7,3.8,97,1,0,1.7,-13.3M601.0,377.2a5.7,3.6,79,1,0,2.3,11.1a5.7,3.6,79,1,0,-2.3,-11.1M617.0,377.5a5.4,3.3,101,1,0,-2.0,10.6a5.4,3.3,101,1,0,2.0,-10.6M618.4,378.4a5.0,3.9,87,1,0,0.6,10.0a5.0,3.9,87,1,0,-0.6,-10.0M641.4,380.8a5.1,3.3,83,1,0,1.3,10.1a5.1,3.3,83,1,0,-1.3,-10.1M667.3,381.6a5.6,2.6,172,1,0,-11.1,1.6a5.6,2.6,172,1,0,11.1,-1.6M691.0,377.2a5.2,3.6,145,1,0,-8.4,5.9a5.2,3.6,145,1,0,8.4,-5.9M594.7,381.7a6.2,2.5,91,1,0,-0.3,12.4a6.2,2.5,91,1,0,0.3,-12.4M643.7,387.0a4.6,2.6,81,1,0,1.5,9.1a4.6,2.6,81,1,0,-1.5,-9.1M657.5,386.4a6.2,3.6,131,1,0,-8.0,9.4a6.2,3.6,131,1,0,8.0,-9.4M687.9,385.4a3.7,2.6,169,1,0,-7.3,1.4a3.7,2.6,169,1,0,7.3,-1.4M691.4,391.4a4.1,3.0,17,1,0,7.9,2.4a4.1,3.0,17,1,0,-7.9,-2.4M697.0,388.0a4.5,3.3,25,1,0,8.2,3.9a4.5,3.3,25,1,0,-8.2,-3.9M717.5,386.6a6.6,2.4,53,1,0,8.0,10.4a6.6,2.4,53,1,0,-8.0,-10.4M597.2,395.5a5.6,3.0,31,1,0,9.6,5.8a5.6,3.0,31,1,0,-9.6,-5.8M603.7,396.3a3.6,2.6,20,1,0,6.8,2.5a3.6,2.6,20,1,0,-6.8,-2.5M629.2,395.8a5.9,2.2,79,1,0,2.3,11.5a5.9,2.2,79,1,0,-2.3,-11.5M635.2,394.4a4.7,3.3,37,1,0,7.5,5.7a4.7,3.3,37,1,0,-7.5,-5.7M671.9,393.1a6.5,3.0,125,1,0,-7.4,10.7a6.5,3.0,125,1,0,7.4,-10.7M674.8,393.6a5.7,3.0,92,1,0,-0.4,11.3a5.7,3.0,92,1,0,0.4,-11.3M705.3,394.9a4.4,3.9,76,1,0,2.1,8.5a4.4,3.9,76,1,0,-2.1,-8.5M718.8,392.4a6.1,3.2,21,1,0,11.4,4.4a6.1,3.2,21,1,0,-11.4,-4.4M601.6,403.3a3.7,2.2,157,1,0,-6.8,2.9a3.7,2.2,157,1,0,6.8,-2.9M603.7,397.3a4.8,3.5,82,1,0,1.4,9.6a4.8,3.5,82,1,0,-1.4,-9.6M623.3,401.2a5.8,2.0,165,1,0,-11.1,3.0a5.8,2.0,165,1,0,11.1,-3.0M623.7,405.1a3.8,2.2,142,1,0,-5.9,4.7a3.8,2.2,142,1,0,5.9,-4.7M633.6,405.5a3.8,3.6,91,1,0,-0.2,7.6a3.8,3.6,91,1,0,0.2,-7.6M636.3,406.0a4.1,2.3,15,1,0,7.9,2.1a4.1,2.3,15,1,0,-7.9,-2.1M649.1,404.1a5.6,3.2,72,1,0,3.5,10.6a5.6,3.2,72,1,0,-3.5,-10.6M661.1,401.5a6.8,3.2,35,1,0,11.0,7.8a6.8,3.2,35,1,0,-11.0,-7.8M677.8,398.4a3.7,2.3,91,1,0,-0.2,7.5a3.7,2.3,91,1,0,0.2,-7.5M681.8,403.0a4.6,3.4,9,1,0,9.1,1.5a4.6,3.4,9,1,0,-9.1,-1.5M692.4,404.3a4.5,3.3,17,1,0,8.6,2.7a4.5,3.3,17,1,0,-8.6,-2.7M709.0,403.3a3.8,2.9,173,1,0,-7.5,0.9a3.8,2.9,173,1,0,7.5,-0.9M703.1,399.8a5.7,2.3,39,1,0,8.9,7.3a5.7,2.3,39,1,0,-8.9,-7.3M723.7,400.5a5.9,3.7,145,1,0,-9.7,6.8a5.9,3.7,145,1,0,9.7,-6.8M731.0,398.5a5.6,3.2,113,1,0,-4.3,10.3a5.6,3.2,113,1,0,4.3,-10.3M735.4,400.2a3.8,2.1,105,1,0,-1.9,7.3a3.8,2.1,105,1,0,1.9,-7.3M862.4,402.6a6.3,4.0,17,1,0,12.0,3.6a6.3,4.0,17,1,0,-12.0,-3.6M873.3,406.0a6.0,2.6,18,1,0,11.5,3.8a6.0,2.6,18,1,0,-11.5,-3.8M597.2,411.7a5.3,4.0,65,1,0,4.5,9.6a5.3,4.0,65,1,0,-4.5,-9.6M610.7,411.7a6.6,3.5,133,1,0,-8.9,9.7a6.6,3.5,133,1,0,8.9,-9.7M626.6,406.2a5.1,3.6,102,1,0,-2.0,10.0a5.1,3.6,102,1,0,2.0,-10.0M626.0,408.8a5.5,3.4,16,1,0,10.6,3.1a5.5,3.4,16,1,0,-10.6,-3.1M630.2,411.4a4.7,2.3,13,1,0,9.1,2.2a4.7,2.3,13,1,0,-9.1,-2.2M658.5,416.0a5.6,3.8,172,1,0,-11.2,1.6a5.6,3.8,172,1,0,11.2,-1.6M662.3,409.1a5.5,2.4,126,1,0,-6.4,8.9a5.5,2.4,126,1,0,6.4,-8.9M688.6,406.3a5.1,3.1,118,1,0,-4.7,9.0a5.1,3.1,118,1,0,4.7,-9.0M695.7,408.8a4.2,3.5,66,1,0,3.4,7.7a4.2,3.5,66,1,0,-3.4,-7.7M705.1,408.0a6.4,2.9,146,1,0,-10.7,7.1a6.4,2.9,146,1,0,10.7,-7.1M705.0,413.4a4.9,3.4,15,1,0,9.5,2.6a4.9,3.4,15,1,0,-9.5,-2.6M718.7,407.5a4.7,2.4,104,1,0,-2.2,9.1a4.7,2.4,104,1,0,2.2,-9.1M724.6,408.5a4.1,3.7,124,1,0,-4.6,6.9a4.1,3.7,124,1,0,4.6,-6.9M741.1,408.8a4.6,3.0,150,1,0,-8.0,4.6a4.6,3.0,150,1,0,8.0,-4.6M709.0,417.0a3.8,2.7,164,1,0,-7.4,2.1a3.8,2.7,164,1,0,7.4,-2.1M742.2,412.9a7.0,3.6,120,1,0,-7.0,12.0a7.0,3.6,120,1,0,7.0,-12.0M867.8,419.0a5.1,2.8,42,1,0,7.5,6.8a5.1,2.8,42,1,0,-7.5,-6.8M877.2,420.3a3.6,3.8,3,1,0,7.2,0.4a3.6,3.8,3,1,0,-7.2,-0.4M857.1,423.5a5.0,3.2,44,1,0,7.2,7.0a5.0,3.2,44,1,0,-7.2,-7.0M863.5,441.3a5.1,3.9,80,1,0,1.8,10.1a5.1,3.9,80,1,0,-1.8,-10.1M683.4,451.4a6.9,3.6,123,1,0,-7.5,11.5a6.9,3.6,123,1,0,7.5,-11.5M846.3,456.5a5.0,2.9,24,1,0,9.2,4.0a5.0,2.9,24,1,0,-9.2,-4.0M671.2,470.1a5.7,3.6,35,1,0,9.2,6.6a5.7,3.6,35,1,0,-9.2,-6.6M640.7,468.3a5.8,2.5,85,1,0,0.9,11.5a5.8,2.5,85,1,0,-0.9,-11.5M872.6,481.7a6.6,3.4,1,1,0,13.2,0.3a6.6,3.4,1,1,0,-13.2,-0.3M840.6,480.9a6.5,3.2,84,1,0,1.3,12.9a6.5,3.2,84,1,0,-1.3,-12.9M672.9,491.9a6.5,2.1,141,1,0,-10.0,8.2a6.5,2.1,141,1,0,10.0,-8.2M799.0,496.4a4.8,3.4,158,1,0,-8.8,3.6a4.8,3.4,158,1,0,8.8,-3.6M841.5,498.3a4.2,3.4,167,1,0,-8.2,1.9a4.2,3.4,167,1,0,8.2,-1.9M839.1,502.1a4.7,3.8,25,1,0,8.5,4.0a4.7,3.8,25,1,0,-8.5,-4.0M857.2,499.9a6.0,3.5,38,1,0,9.4,7.5a6.0,3.5,38,1,0,-9.4,-7.5M867.1,504.2a4.1,3.1,3,1,0,8.2,0.4a4.1,3.1,3,1,0,-8.2,-0.4M779.9,504.1a5.7,3.0,97,1,0,-1.4,11.3a5.7,3.0,97,1,0,1.4,-11.3M795.4,500.4a5.8,3.5,80,1,0,2.0,11.5a5.8,3.5,80,1,0,-2.0,-11.5M808.0,505.3a6.3,2.5,78,1,0,2.7,12.3a6.3,2.5,78,1,0,-2.7,-12.3M836.4,511.5a6.2,3.2,169,1,0,-12.1,2.4a6.2,3.2,169,1,0,12.1,-2.4M883.2,502.8a6.8,2.1,76,1,0,3.4,13.2a6.8,2.1,76,1,0,-3.4,-13.2M775.2,513.3a5.9,2.2,135,1,0,-8.3,8.3a5.9,2.2,135,1,0,8.3,-8.3M789.6,513.7a6.5,2.8,142,1,0,-10.3,8.1a6.5,2.8,142,1,0,10.3,-8.1M790.5,515.5a4.7,2.6,0,1,0,9.4,0.0a4.7,2.6,0,1,0,-9.4,-0.0M822.2,516.3a5.1,3.0,14,1,0,9.9,2.5a5.1,3.0,14,1,0,-9.9,-2.5M846.3,509.3a6.4,3.7,55,1,0,7.4,10.5a6.4,3.7,55,1,0,-7.4,-10.5M883.4,517.8a4.0,3.2,20,1,0,7.6,2.7a4.0,3.2,20,1,0,-7.6,-2.7" fill="#aee08a"/><path d="M591.0,343.9a5.2,2.3,24,1,0,9.4,4.3a5.2,2.3,24,1,0,-9.4,-4.3M618.4,343.4a4.7,2.3,140,1,0,-7.2,6.0a4.7,2.3,140,1,0,7.2,-6.0M622.9,343.2a5.1,3.8,142,1,0,-8.1,6.3a5.1,3.8,142,1,0,8.1,-6.3M593.5,357.4a4.6,3.1,26,1,0,8.3,4.1a4.6,3.1,26,1,0,-8.3,-4.1M614.5,357.2a4.8,2.4,19,1,0,9.1,3.1a4.8,2.4,19,1,0,-9.1,-3.1M634.6,350.5a6.1,2.6,81,1,0,1.8,12.0a6.1,2.6,81,1,0,-1.8,-12.0M721.4,366.3a3.7,2.3,135,1,0,-5.2,5.3a3.7,2.3,135,1,0,5.2,-5.3M704.6,368.0a5.5,2.8,26,1,0,9.9,4.8a5.5,2.8,26,1,0,-9.9,-4.8M794.0,398.7a5.1,3.3,142,1,0,-8.0,6.2a5.1,3.3,142,1,0,8.0,-6.2M794.8,402.0a6.7,3.2,119,1,0,-6.5,11.8a6.7,3.2,119,1,0,6.5,-11.8M815.5,478.8a6.7,3.6,165,1,0,-12.9,3.5a6.7,3.6,165,1,0,12.9,-3.5M829.3,480.6a4.9,3.4,179,1,0,-9.9,0.1a4.9,3.4,179,1,0,9.9,-0.1M844.7,479.0a6.9,3.9,16,1,0,13.2,3.8a6.9,3.9,16,1,0,-13.2,-3.8M789.6,486.9a5.6,2.5,171,1,0,-11.1,1.8a5.6,2.5,171,1,0,11.1,-1.8M791.7,482.9a5.5,3.4,96,1,0,-1.1,11.0a5.5,3.4,96,1,0,1.1,-11.0M795.9,482.2a4.6,3.0,26,1,0,8.3,4.0a4.6,3.0,26,1,0,-8.3,-4.0M807.2,485.4a4.2,3.1,118,1,0,-4.0,7.3a4.2,3.1,118,1,0,4.0,-7.3M816.3,481.9a5.6,2.3,98,1,0,-1.6,11.1a5.6,2.3,98,1,0,1.6,-11.1M825.3,477.3a6.9,2.9,137,1,0,-10.1,9.5a6.9,2.9,137,1,0,10.1,-9.5M826.9,476.7a7.0,3.3,54,1,0,8.3,11.2a7.0,3.3,54,1,0,-8.3,-11.2M848.2,485.7a5.0,3.2,56,1,0,5.6,8.4a5.0,3.2,56,1,0,-5.6,-8.4M884.1,484.1a5.5,2.1,134,1,0,-7.7,7.9a5.5,2.1,134,1,0,7.7,-7.9M890.5,480.6a3.8,3.3,126,1,0,-4.5,6.2a3.8,3.3,126,1,0,4.5,-6.2M779.6,491.7a6.9,2.4,48,1,0,9.3,10.3a6.9,2.4,48,1,0,-9.3,-10.3M786.5,490.8a5.1,3.6,45,1,0,7.2,7.3a5.1,3.6,45,1,0,-7.2,-7.3M808.4,492.0a4.4,3.0,169,1,0,-8.7,1.7a4.4,3.0,169,1,0,8.7,-1.7M819.9,487.8a5.4,3.7,69,1,0,3.9,10.1a5.4,3.7,69,1,0,-3.9,-10.1M828.2,491.2a5.5,3.5,92,1,0,-0.4,10.9a5.5,3.5,92,1,0,0.4,-10.9M841.1,491.4a5.8,3.6,144,1,0,-9.5,6.8a5.8,3.6,144,1,0,9.5,-6.8M853.7,489.1a5.8,3.3,161,1,0,-11.0,3.8a5.8,3.3,161,1,0,11.0,-3.8M851.6,487.4a3.7,3.1,58,1,0,3.9,6.2a3.7,3.1,58,1,0,-3.9,-6.2M860.9,493.3a4.7,3.5,123,1,0,-5.2,7.9a4.7,3.5,123,1,0,5.2,-7.9M870.6,492.0a6.4,2.8,116,1,0,-5.7,11.4a6.4,2.8,116,1,0,5.7,-11.4M883.4,485.2a5.6,3.9,108,1,0,-3.5,10.6a5.6,3.9,108,1,0,3.5,-10.6M888.1,490.6a4.1,2.7,173,1,0,-8.1,1.1a4.1,2.7,173,1,0,8.1,-1.1M622.2,497.7a6.1,3.1,27,1,0,10.9,5.5a6.1,3.1,27,1,0,-10.9,-5.5M654.6,498.2a4.1,4.0,151,1,0,-7.2,4.0a4.1,4.0,151,1,0,7.2,-4.0M746.1,501.0a4.0,2.4,23,1,0,7.4,3.1a4.0,2.4,23,1,0,-7.4,-3.1M799.7,499.4a4.6,3.0,0,1,0,9.1,0.0a4.6,3.0,0,1,0,-9.1,-0.0M589.5,502.4a6.9,3.7,34,1,0,11.5,7.7a6.9,3.7,34,1,0,-11.5,-7.7M619.0,508.8a4.0,2.7,134,1,0,-5.6,5.8a4.0,2.7,134,1,0,5.6,-5.8M639.1,505.3a6.9,3.4,15,1,0,13.3,3.7a6.9,3.4,15,1,0,-13.3,-3.7M654.4,504.8a3.8,3.5,139,1,0,-5.7,5.0a3.8,3.5,139,1,0,5.7,-5.0M670.3,504.1a5.6,2.5,76,1,0,2.7,10.9a5.6,2.5,76,1,0,-2.7,-10.9M699.7,500.8a5.9,3.9,107,1,0,-3.4,11.3a5.9,3.9,107,1,0,3.4,-11.3M713.4,508.3a5.6,2.4,101,1,0,-2.1,11.0a5.6,2.4,101,1,0,2.1,-11.0M719.8,511.2a4.8,2.6,160,1,0,-9.1,3.3a4.8,2.6,160,1,0,9.1,-3.3M730.0,504.4a5.0,2.2,154,1,0,-9.0,4.4a5.0,2.2,154,1,0,9.0,-4.4M749.1,507.2a6.0,3.5,119,1,0,-5.7,10.5a6.0,3.5,119,1,0,5.7,-10.5M752.1,511.0a4.3,3.1,34,1,0,7.2,4.8a4.3,3.1,34,1,0,-7.2,-4.8M622.9,516.2a5.4,2.5,163,1,0,-10.3,3.1a5.4,2.5,163,1,0,10.3,-3.1M614.2,514.0a5.5,2.8,38,1,0,8.7,6.7a5.5,2.8,38,1,0,-8.7,-6.7M626.7,514.8a5.7,3.9,66,1,0,4.5,10.4a5.7,3.9,66,1,0,-4.5,-10.4M641.4,515.9a6.0,3.7,149,1,0,-10.3,6.1a6.0,3.7,149,1,0,10.3,-6.1M687.5,509.9a5.8,2.3,51,1,0,7.3,9.0a5.8,2.3,51,1,0,-7.3,-9.0M701.4,509.0a6.4,3.3,57,1,0,6.9,10.8a6.4,3.3,57,1,0,-6.9,-10.8" fill="#ffffff"/><path d="M781 241l3 -3M854 241l2 -4M777 242l2 -2M813 243l1 -3M842 242l4 1M890 244l2 -3M817 246l1 -3M837 246l3 -4M763 248l-1 3M806 248l2 -1M832 249l-0 -4M885 249l4 2M797 253l0 -2M843 253l3 -5M774 255l-2 2M809 255l4 -4M841 254l2 -1M878 255l1 -5M812 259l1 -3M854 257l3 -4M792 261l-1 -5M846 261l3 -3M888 260l2 -3M790 264l2 -3M821 264l-2 -5M887 264l2 -1M834 268l4 -0M770 271l2 4M823 269l3 -2M861 269l5 -3M873 269l1 -2M768 273l3 1M796 272l2 -2M813 273l2 -3M881 273l-0 -4M796 277l2 -1M836 275l3 -3M876 277l2 -1M799 279l5 -3M862 280l4 -2M768 281l-3 4M810 283l4 -2M797 285l3 -3M837 284l1 -2M885 284l1 -4M829 289l-1 -4M884 289l1 -2M776 294l1 -4M818 294l3 -3M772 296l0 4M705 300l-4 3M827 300l5 -1M887 301l2 -5M808 304l4 -2M880 304l2 -4M785 305l-0 -5M857 306l4 -4M803 309l5 -1M883 309l1 -2M828 311l2 -3M880 311l-0 -4M802 316l2 -6M870 316l2 -3M790 317l5 -3M844 317l-2 -5M823 321l4 -3M724 323l-2 1M809 323l1 -2M880 324l3 -5M633 326l-3 3M788 328l1 -4M848 328l-0 -4M711 329l-5 1M783 329l2 -1M872 331l3 -5M714 332l1 6M619 335l-5 2M807 335l5 -2M887 337l2 -2M778 340l1 -3M846 340l2 -5M879 338l4 -3M867 341l2 -5M825 345l0 -2M755 347l-4 4M830 347l1 -3M778 351l1 -2M886 352l-0 -5M785 354l1 -3M839 354l4 -4M842 356l-0 -5M798 361l2 -2M882 359l3 -2M722 363l-2 1M803 363l2 -2M863 363l4 -2M627 365l2 1M734 367l1 2M806 365l4 -4M883 366l1 -5M649 369l5 1M695 368l3 2M810 368l2 -3M629 373l2 3M738 372l-2 2M784 373l4 -2M859 372l-0 -3M887 371l2 -3M631 375l-3 3M674 376l5 3M764 374l-1 5M804 374l3 -5M872 376l0 -4M885 375l1 -5M768 377l-5 1M857 377l0 -4M787 380l1 -3M870 382l-4 -3M788 385l1 -4M868 385l5 -2M850 386l-1 -2M784 389l2 -4M859 391l2 -2M833 394l-0 -3M789 396l1 -2M798 399l3 -3M886 398l2 -2M838 403l3 -2M883 403l3 -3M831 406l3 -0M876 404l2 -5M764 409l1 3M835 409l6 -1M871 409l-1 -3M763 410l1 3M795 411l-0 -5M859 412l0 -3M883 411l1 -5M793 414l3 -2M859 413l1 -2M876 415l2 -1M769 417l-1 2M823 416l3 -4M877 417l-1 -6M770 419l3 1M863 421l1 -3M826 422l1 -2M864 423l2 -4M827 425l1 -2M868 426l4 -3M862 430l2 -6M886 430l1 -3M856 432l5 -2M828 435l1 -3M886 436l1 -4M846 437l1 -2M881 438l3 -2M742 441l3 2M612 445l1 3M664 444l-1 2M703 445l-3 2M763 444l-1 2M598 447l3 3M657 448l-3 4M698 446l-2 5M733 447l-3 3M780 446l4 -3M626 449l2 2M639 451l5 0M732 451l-2 2M615 454l-0 3M648 453l-3 3M674 453l-3 1M737 452l3 1M627 456l0 2M689 457l2 0M726 456l-4 4M762 457l-1 2M794 456l4 -3M713 458l-2 5M764 459l-4 3M754 461l-1 3M816 462l-3 -4M846 463l2 -5M862 462l2 -3M776 464l-0 -4M826 466l2 -3M850 466l2 -1M886 464l-1 -3M800 468l0 -2M816 468l-0 -2M840 469l2 -4M865 469l4 -0M889 468l4 -4M782 470l5 -1M832 472l2 -1M870 471l2 -4M763 475l-5 3M816 474l2 -3M861 474l1 -3M876 473l3 0M771 477l3 4M833 477l0 -3M843 478l0 -6M866 478l1 -2M889 477l5 -1M782 479l2 -2M818 479l-1 -2M835 480l2 -4M769 482l-4 1M752 487l2 1M761 490l0 4M777 491l2 -4M754 496l5 2M777 495l3 -2M605 501l4 2M672 502l2 1M728 501l3 2M618 505l-5 2M677 503l3 0M711 504l5 3M617 506l-1 2M667 508l-1 2M693 507l-4 4M749 506l-1 5M632 511l-4 4M648 510l-4 0M687 510l-3 4M737 510l-1 3M610 513l2 1M676 513l-2 3M701 513l4 4M746 512l4 4M611 516l0 6M628 515l-5 1M684 515l-4 4M709 515l2 1M746 517l-5 0M685 519l5 1M726 519l-1 2M759 519l0 4" stroke="#f79a9a" stroke-width="3.4" stroke-linecap="round" fill="none"/><path d="M797 240l-2 -5M834 240l4 -2M879 241l3 -0M781 242l1 -2M820 242l2 -3M851 244l-1 -2M870 244l3 -4M776 247l-3 -3M853 247l-0 -6M788 250l3 -3M827 249l2 -3M853 248l1 -2M764 253l-2 1M817 252l4 -3M842 253l3 -2M868 253l4 -3M814 255l3 -5M854 256l3 -3M881 256l3 -4M794 259l3 -4M818 259l1 -3M864 258l2 -4M780 262l2 -2M804 262l3 -5M831 260l0 -2M794 265l2 -5M863 264l2 -5M822 266l2 -2M852 266l2 -1M890 267l2 -5M783 271l3 -2M818 269l1 -6M846 271l1 -2M882 271l-1 -5M818 274l3 -4M848 273l0 -3M873 273l1 -3M760 277l1 2M804 277l2 -2M842 275l3 -2M858 277l5 -2M812 279l-1 -3M841 280l-3 -5M789 283l3 -4M854 281l1 -2M840 285l3 -3M824 288l1 -5M783 290l0 -6M839 292l-1 -3M888 291l3 -3M854 295l2 -4M816 296l0 -4M885 298l3 -5M790 299l2 -4M865 300l3 -1M731 304l-5 1M804 303l3 -5M888 303l2 -5M790 307l3 -3M841 307l1 -2M822 309l2 -5M790 312l3 -1M855 311l-2 -5M785 316l3 -5M878 316l2 -2M831 319l3 -1M721 320l2 1M782 321l3 -5M826 322l1 -4M707 324l1 6M829 325l2 -1M781 327l2 -1M724 330l4 5M863 330l2 -4M629 333l-4 2M828 332l2 -1M786 336l5 -1M845 337l2 -2M784 339l2 -3M829 338l1 -3M889 338l3 -2M784 341l2 -2M819 343l2 -4M866 342l2 -5M818 345l4 -3M863 345l1 -4M765 348l2 1M882 347l5 -2M759 352l1 3M813 351l5 -0M869 352l5 -0M788 354l-1 -6M866 353l-1 -3M762 358l-3 4M800 358l1 -5M878 358l1 -3M655 360l5 1M783 361l3 -3M857 361l3 -4M889 360l3 -2M636 364l5 1M716 363l-1 4M798 363l-2 -3M841 363l4 -2M654 366l-2 2M700 367l3 2M837 365l2 -2M881 365l-0 -5M680 370l-1 2M732 369l2 5M788 369l4 -4M854 369l-1 -3M877 370l-0 -4M604 371l-0 5M643 372l3 4M799 372l1 -2M669 375l-2 0M772 375l-2 3M890 376l2 -2M679 379l1 6M773 379l-2 1M805 379l-1 -3M883 379l1 -3M782 382l1 -5M826 384l2 -3M787 388l0 -3M879 386l1 -2M831 389l3 -5M795 392l1 -5M796 397l5 -2M890 397l0 -4M866 399l2 -1M796 402l2 -4M874 402l2 -4M762 406l3 3M868 406l1 -3M767 408l2 3M856 407l4 1M880 408l2 -3M820 411l2 -5M879 412l2 -3M783 416l3 -5M869 418l3 -3M781 419l3 -4M866 421l2 -5M888 419l2 -1M857 424l3 -4M888 423l3 -3M849 426l2 -5M885 427l3 -3M833 428l-1 -5M877 429l1 -5M862 432l3 -5M890 432l0 -3M864 434l2 -3M884 435l3 -2M858 438l-1 -5M883 438l1 -3M619 440l1 3M676 441l5 3M713 441l-2 3M772 441l5 1M870 440l1 -4M636 445l3 3M685 444l-1 3M736 444l-1 5M630 448l2 1M748 448l1 2M615 450l3 3M746 450l-1 2M793 450l2 -2M710 452l3 3M744 453l-5 0M799 454l2 -3M635 456l5 1M663 457l2 1M743 455l-2 5M612 458l-2 1M638 459l-5 1M739 458l-6 2M822 460l3 -2M788 461l1 -4M814 461l-3 -2M833 463l2 -1M867 463l2 -2M883 463l2 -4M763 465l-4 2M800 464l1 -2M823 465l2 -0M857 465l1 -2M879 465l1 -2M771 468l2 2M833 468l2 -1M871 467l4 -4M761 472l-3 0M790 470l2 -4M812 471l3 -4M838 471l2 -3M868 472l-1 -5M773 474l1 2M815 475l2 -1M840 473l-1 -5M880 475l2 -3M765 476l-5 0M810 478l1 -2M854 476l-0 -4M882 476l4 -2M760 479l-2 3M887 479l3 -2M755 483l-2 5M775 484l1 -5M757 485l3 4M776 487l1 -3M758 488l-1 2M741 492l-1 2M760 492l-5 3M765 495l2 3M752 497l3 5M764 497l3 5M610 501l-4 2M651 502l-3 3M729 500l4 3M607 503l1 6M674 505l-3 2M719 503l-3 4M758 504l2 2M618 506l-2 2M653 508l0 3M670 506l3 2M714 506l-1 4M745 508l2 3M618 511l-4 4M654 510l2 2M706 511l4 3M744 510l-0 6M621 513l-3 2M640 514l5 1M655 514l-2 1M688 513l2 2M731 513l-0 4M638 516l-4 3M663 515l-0 3M717 517l1 2M753 515l1 2M624 519l3 5M651 519l5 2M672 519l2 2M699 518l-2 1" stroke="#f79a9a" stroke-width="2.2" stroke-linecap="round" fill="none"/><path d="M631 241l2 5M609 243l2 1M704 242l3 2M675 247l-2 1M635 250l3 0M707 253l-1 1M640 255l2 3M603 258l1 2M603 260l3 1M686 261l2 4M741 262l0 4M645 268l2 1M711 267l1 3M759 266l-4 0M676 270l5 2M722 269l-0 5M654 274l4 1M604 275l-1 3M659 275l-6 1M730 277l0 4M636 279l-3 1M615 282l-2 1M648 283l2 3M698 282l4 2M734 282l-4 1M861 283l4 -3M613 285l1 3M669 285l4 2M758 286l-3 4M705 289l-2 2M860 288l3 -1M696 292l-4 2M733 291l2 5M631 293l3 4M699 293l-3 1M875 295l1 -2M709 297l5 2M873 298l3 -2M731 299l3 2M860 302l2 -1M706 309l1 2M677 317l-1 2M740 318l-2 5M707 327l-3 4M704 337l-0 4M724 340l1 2M716 343l3 1M708 345l-5 1M738 348l2 2M725 350l5 2M738 353l1 4M704 360l3 2M750 377l-4 2M764 381l-2 0M798 382l1 -4M857 381l0 -6M774 384l-3 2M807 384l2 -3M746 387l-3 5M783 388l2 -2M820 388l3 -5M760 391l3 2M812 391l3 -4M788 394l2 -3M817 394l4 -2M761 398l-3 2M794 400l3 -3M750 403l2 3M759 404l-4 4M813 405l-1 -4M807 408l0 -2M749 411l3 1M813 412l0 -4M804 413l2 -1M801 416l2 -4M671 421l-3 0M794 420l2 -3M617 424l-2 3M654 423l-4 5M675 423l-3 3M759 424l2 2M813 423l1 -6M621 427l-5 3M713 426l1 3M731 427l2 3M786 426l3 -2M629 428l-3 0M691 430l-4 3M737 428l3 2M793 428l5 -3M679 431l4 3M708 431l3 5M814 433l2 -5M617 434l-0 4M652 436l-2 2M698 436l-3 0M781 435l1 -2M811 436l5 -1M604 439l5 0M661 437l2 5M700 439l4 2M756 439l-3 3M649 440l-2 4M814 451l1 -3M785 460l-2 -4M819 458l1 -2M791 469l2 -5M781 475l4 -1M760 476l3 1M778 479l2 -3" stroke="#c8b0dc" stroke-width="3.4" stroke-linecap="round" fill="none"/><path d="M635 241l-0 3M602 243l5 2M735 243l-0 6M616 245l3 5M716 245l3 3M755 247l1 5M678 249l-4 0M722 250l1 3M641 251l3 3M711 255l2 1M736 255l3 4M662 257l3 1M614 262l1 3M603 264l-2 5M705 265l4 3M614 268l3 5M684 267l-0 5M733 267l4 3M610 271l-2 1M682 270l-0 3M752 271l1 5M620 274l-5 2M651 274l-2 1M743 274l-1 6M688 276l1 2M649 280l-0 2M706 278l-2 6M738 278l1 2M626 282l2 1M727 281l-1 2M877 281l-1 -3M724 284l-3 2M863 285l2 -4M607 287l1 2M651 288l4 1M870 288l3 -2M684 290l1 5M874 290l3 -3M625 294l-2 1M669 294l0 4M706 293l-1 4M618 296l-2 5M869 296l3 -2M652 299l-3 0M711 299l2 4M722 304l-3 1M732 307l6 1M661 310l-3 2M706 313l-3 1M728 316l-5 0M878 320l2 -4M757 324l-3 3M721 328l-2 4M734 335l-1 2M728 340l-4 4M684 348l-3 0M690 352l1 3M707 353l-2 2M728 357l-0 3M753 363l2 1M745 378l4 2M775 381l3 -4M856 383l1 -1M843 388l2 -4M820 391l4 -4M803 393l4 1M760 396l-3 2M815 395l1 -2M751 400l3 2M810 400l-0 -3M805 402l0 -3M794 406l2 -5M820 406l0 -4M743 413l0 3M753 417l-3 3M807 418l3 -5M655 421l5 2M756 420l1 5M636 422l-5 0M684 422l-2 2M726 423l-0 3M629 425l2 4M685 427l1 2M790 425l2 -1M632 429l-0 2M800 429l1 -3M628 432l2 4M693 433l-4 3M725 431l2 3M674 436l-3 5M704 434l0 2M643 437l4 1M753 438l4 4M791 438l2 -2M696 440l-2 6M806 443l5 -1M816 446l1 -3M809 449l-0 -4M808 452l-0 -2M819 456l2 -1M807 460l2 -4M766 466l-1 1M795 465l4 1M788 475l1 -3M797 476l-0 -4" stroke="#c8b0dc" stroke-width="2.2" stroke-linecap="round" fill="none"/><path d="M626 237l1 5M655 236l-4 1M686 237l-0 2M720 237l1 3M771 238l-4 2M799 238l2 -4M823 236l-0 -4M855 236l2 -2M645 240l-2 2M725 239l4 4M778 240l-1 -3M817 239l6 1M618 244l-2 5M724 244l5 1M605 247l-2 1M657 245l4 1M611 250l1 3M632 248l-2 5M750 248l4 2M637 253l1 3M744 251l0 3M662 254l-1 4M749 254l2 2M663 258l2 2M746 257l3 4M778 258l2 -4M852 262l1 -3M762 265l4 2M835 264l3 0M875 264l-1 -2M788 268l5 -1M814 266l3 -1M875 266l-3 -5M773 271l-1 3M877 269l1 -6M859 272l-2 -5M664 275l3 4M707 276l3 1M879 277l4 -3M708 280l3 4M833 280l2 -1M655 281l-0 3M805 281l4 -3M875 282l3 -4M686 284l2 4M786 284l5 -2M867 284l2 -4M661 289l-4 2M751 288l3 2M812 289l1 -2M866 287l2 -0M752 290l3 5M846 290l-3 -3M636 293l4 4M727 294l1 6M842 293l1 -3M679 298l3 5M848 297l2 -2M698 299l-2 4M760 301l-1 5M813 299l2 -3M643 303l5 3M758 302l-3 5M820 304l3 -2M878 302l3 -3M798 307l3 -4M834 305l2 -5M873 307l1 -4M792 309l2 -2M851 310l2 -1M874 310l2 -5M822 311l2 -6M848 313l3 -4M887 311l3 -3M756 315l-2 1M810 314l2 -2M864 316l3 -5M699 318l-1 2M768 319l-4 1M846 318l0 -2M873 317l1 -3M687 322l-4 3M801 321l2 -1M829 321l1 -6M872 322l1 -2M691 324l-2 3M819 325l-1 -4M845 323l1 -5M655 326l1 4M768 328l0 5M849 328l3 -1M676 330l5 2M810 331l-1 -3M663 332l-1 2M761 332l3 2M816 332l3 -2M850 332l0 -3M888 332l1 -5M691 335l-0 4M849 336l2 -2M640 339l-2 2M756 339l-2 6M801 338l2 -5M839 340l2 -6M658 341l4 2M787 343l2 -4M842 341l0 -2M650 344l4 0M692 345l6 2M779 345l3 -4M832 346l1 -3M855 345l3 -5M644 347l4 0M681 348l2 5M779 347l0 -5M869 348l5 -3M663 351l-0 5M700 352l3 4M787 352l1 -3M849 350l-2 -3M672 353l-3 3M794 355l0 -3M836 354l-2 -5M874 354l1 -2M749 356l2 2M826 358l-0 -3M600 361l0 5M684 361l5 1M806 361l1 -3M816 360l4 -3M873 361l2 -1M654 363l-2 2M847 364l2 -1M875 362l2 -2M735 366l4 1M836 366l2 -4M876 366l3 -3M750 369l2 1M835 369l-1 -2M625 373l-1 4M689 371l1 3M811 373l-3 -5M845 372l2 -1M678 376l3 1M765 374l2 2M659 377l1 5M851 379l3 -4M618 381l-5 2M671 382l3 1M760 380l2 1M841 380l1 -2M888 382l2 -4M637 384l-0 3M658 383l-5 3M695 384l1 5M717 383l-2 1M739 384l-1 4M779 384l1 -2M850 384l4 -4M889 384l2 -3M619 387l-4 2M639 387l1 3M669 388l4 4M711 386l-2 2M767 388l2 3M860 386l2 -1M621 389l-4 3M648 391l-3 4M672 389l-5 2M694 389l-3 1M741 389l3 1M768 390l-2 1M863 391l2 -2M605 393l-4 4M662 393l3 2M727 394l-5 1M767 392l-3 2M880 392l3 -4M625 396l0 5M662 397l-1 4M728 396l-1 5M757 397l4 2M808 396l2 -1M861 395l1 -3M638 398l-2 2M669 398l-1 2M691 398l5 1M765 400l-3 5M857 400l3 -4M610 403l-2 5M681 402l3 2M740 403l1 3M779 401l1 -2M849 403l0 -3M718 405l-1 5M772 404l3 0M841 405l3 0M859 404l3 -5M661 408l0 3M730 408l-3 4M777 408l4 -2M827 409l1 -3M635 412l2 2M720 411l2 1M808 410l1 -4M850 411l1 -4M638 413l-0 4M664 415l-2 3M707 413l2 1M780 414l1 -6M833 414l-1 -6M598 418l5 3M632 416l-4 4M688 418l-3 2M736 416l-2 4M820 418l3 -3M604 421l-3 1M622 419l4 1M676 420l2 4M715 421l-3 3M748 421l1 4M778 421l1 -4M826 419l3 -2M607 424l1 2M642 422l5 2M697 424l2 2M740 422l3 1M816 422l3 -1M851 423l1 -2M619 425l-0 2M648 425l-1 4M680 427l0 3M699 426l1 2M719 427l-2 4M758 425l4 1M799 427l1 -2M837 426l0 -3M620 428l1 5M641 430l-6 1M669 430l-3 5M689 429l-3 1M718 428l-2 4M747 428l-2 1M769 430l-3 2M810 429l1 -2M611 431l-3 5M649 433l6 1M727 431l3 1M748 432l-3 2M780 432l-1 -2M848 431l2 -2M646 434l2 2M681 436l2 1M745 434l-2 3M779 434l2 -4M840 436l2 -3M629 438l2 4M650 437l-3 3M705 439l-5 1M738 437l-4 3M779 439l5 -2M831 437l2 -2M631 440l-1 2M653 442l5 1M669 441l-3 2M695 440l-1 2M760 441l-5 2M812 442l1 -3M834 440l3 -3M866 441l2 -1M600 445l4 4M644 445l3 2M696 443l-2 1M724 444l-0 4M765 444l-3 0M829 443l3 -3M864 444l2 -3M883 443l-0 -3M624 447l-1 3M668 448l-1 2M701 447l3 1M726 448l1 2M784 446l-1 -6M828 447l1 -3M867 448l2 -2M886 448l1 -5M622 451l2 1M660 450l3 2M739 450l-2 6M773 451l3 1M859 450l4 -4M885 449l1 -5M614 454l-3 4M676 453l2 0M703 454l2 3M740 452l-1 1M825 452l2 -5M886 454l1 -3M659 457l0 6M678 457l1 3M713 455l2 4M753 457l-3 1M822 455l3 -5M843 456l3 -4M869 455l2 -5M886 455l5 -3M675 458l-5 1M709 459l-0 3M759 459l-3 2M871 459l2 -2M774 461l4 5M777 478l5 -4M762 502l1 4M800 502l3 -1M851 501l0 -5M885 501l1 -2M803 505l2 -2M876 505l-1 -2M768 508l-4 1M805 508l1 -5M868 507l4 -3M890 507l-0 -4M782 510l-0 -2M808 509l3 -3M848 510l1 -4M887 510l1 -6M797 513l4 -4M881 513l1 -4M854 515l4 -4M598 520l-3 4M739 520l-1 2M767 520l2 0M782 520l-0 -2M819 520l3 -2M849 518l1 -4M868 519l4 -4" stroke="#f9b166" stroke-width="3.4" stroke-linecap="round" fill="none"/><path d="M637 237l2 3M670 236l-4 0M694 237l-1 3M718 237l2 0M778 238l3 -1M807 236l1 -3M832 238l4 -3M858 238l-0 -4M619 240l-3 3M693 240l-1 4M758 239l3 3M790 240l1 -3M831 239l3 -5M860 239l4 -0M636 244l2 1M709 244l3 4M626 245l3 1M718 245l2 5M615 250l1 4M768 249l-0 2M629 251l-4 2M668 251l3 2M711 252l-1 2M597 254l-3 3M674 256l-4 1M760 255l2 1M674 259l-2 2M610 262l-1 4M821 260l1 -6M886 262l3 -3M690 265l-2 3M772 263l-2 1M846 263l3 -3M725 268l3 2M838 267l2 -3M654 270l-5 2M813 271l1 -3M665 272l5 2M707 272l2 3M790 272l1 -4M861 274l3 -2M766 276l-3 5M887 276l5 -1M767 278l1 2M873 279l4 -3M641 282l3 2M778 282l1 -3M610 284l-1 2M761 286l-0 4M791 286l2 -2M888 285l2 -2M792 289l2 -1M876 289l3 -5M754 291l4 3M831 291l1 -4M872 291l1 -2M759 293l4 2M858 295l2 -4M614 297l1 4M755 298l2 1M844 298l2 -4M746 300l1 2M784 301l1 -3M848 300l2 -5M871 300l2 -3M754 302l-3 1M845 302l-1 -5M884 302l4 -2M754 307l-2 2M845 306l1 -4M683 310l5 1M775 308l3 -5M835 308l3 -5M878 309l2 -4M693 313l1 6M773 311l-0 5M811 313l5 -3M690 316l-4 1M787 316l1 -2M848 315l3 -1M863 315l-1 -5M761 319l-1 3M809 319l2 -4M849 319l-1 -5M786 321l1 -2M845 320l2 -2M868 322l2 -1M766 325l-2 5M817 324l-2 -5M661 328l2 2M762 328l4 2M796 326l4 -3M822 327l4 -3M841 326l-0 -2M879 328l2 -3M796 330l1 -2M845 331l1 -2M876 330l1 -5M698 334l1 2M811 332l4 -2M695 335l-4 3M769 336l-4 1M834 337l-2 -4M657 339l1 6M767 339l4 3M857 340l3 -3M667 343l3 4M778 341l2 -6M832 343l3 -5M878 341l-1 -5M677 345l-5 2M793 344l1 -2M814 344l4 0M871 346l-0 -6M675 348l0 2M793 347l-0 -4M835 348l2 -4M855 348l5 -2M671 350l3 1M770 351l-3 2M827 350l2 -2M662 353l1 2M691 354l4 0M832 353l4 -3M641 358l-0 2M675 358l-1 4M757 358l3 2M807 357l1 -2M831 358l0 -5M870 357l-0 -3M628 361l-3 5M769 359l2 5M833 361l2 -4M879 360l3 -1M691 364l-2 1M821 362l-1 -4M844 363l3 -2M871 363l3 -3M768 366l4 2M833 366l2 -5M863 365l2 -2M740 370l1 2M848 369l2 -2M742 371l0 2M806 373l3 1M849 371l-0 -2M872 371l0 -4M723 376l3 0M823 374l3 -4M843 374l2 -2M874 375l4 -4M741 377l1 3M820 379l2 -1M837 379l3 -1M864 377l2 -1M658 380l-4 3M702 382l-2 2M756 380l1 5M829 381l0 -2M869 381l1 -5M630 384l1 2M664 383l1 2M700 385l5 2M720 385l-0 5M767 385l-2 5M844 384l2 -4M617 388l3 2M663 387l1 3M738 388l3 2M777 388l1 -3M825 388l1 -4M863 387l1 -2M642 389l3 1M704 389l2 3M762 391l-2 4M804 391l0 -2M887 389l1 -3M627 392l1 2M664 392l1 3M696 392l2 1M719 394l5 3M764 393l3 1M821 393l1 -2M866 392l2 -3M621 396l-2 4M650 396l2 2M669 397l4 2M717 396l1 5M765 395l1 4M818 397l-2 -5M871 397l3 -3M602 398l-2 1M651 399l-3 3M714 399l-3 5M768 399l-1 3M835 398l-2 -5M623 403l3 0M639 401l-3 2M691 401l-2 1M745 402l-5 1M827 402l-0 -4M607 404l-4 4M647 406l3 2M701 406l0 5M756 406l2 5M600 408l-3 3M668 407l4 4M697 407l-1 4M776 407l3 0M616 412l3 2M659 411l-4 3M766 411l4 3M603 414l-1 3M685 414l-4 0M752 413l-3 3M775 414l5 2M834 415l2 -4M663 416l2 3M699 417l-4 4M830 418l1 -3M846 417l2 -2M651 421l-4 3M704 421l3 1M807 420l2 -4M598 422l-2 3M641 424l-2 2M699 424l1 5M730 422l-3 3M752 423l0 2M779 424l4 -4M802 423l4 -2M641 427l-4 3M745 426l-1 5M766 426l-2 5M830 426l-1 -4M609 429l-3 3M659 429l-1 3M725 428l3 2M764 430l-2 0M824 430l3 1M597 433l-1 4M618 432l-4 4M655 431l6 1M697 431l3 4M739 431l1 4M772 432l1 2M789 433l4 2M805 433l2 -2M601 436l-2 4M634 435l0 5M663 436l-2 1M729 435l-2 2M766 436l-3 3M822 434l4 -1M857 434l1 -2M614 437l5 1M674 439l-3 4M698 437l-1 3M728 438l-1 3M751 439l-1 5M600 442l1 4M646 440l5 4M733 440l3 3M757 442l1 4M815 440l2 -5M846 440l-0 -3M873 442l1 -5M653 445l5 3M687 443l-0 3M741 444l3 5M773 444l2 1M841 444l2 -5M875 444l1 -4M623 448l-3 1M662 446l-3 3M737 446l-5 0M762 447l-4 2M810 446l2 -3M849 447l1 -3M882 446l1 -5M645 451l-0 3M676 451l-4 2M700 450l3 3M721 451l2 3M737 450l-1 3M779 450l-2 -3M821 451l3 -2M841 451l4 -2M878 450l1 -3M598 452l-2 1M647 452l-2 5M701 454l1 4M752 452l-5 2M784 453l3 -3M823 454l1 -4M843 454l4 -4M868 454l1 -2M883 452l2 -3M617 456l-2 1M646 457l-2 1M758 457l3 1M777 455l2 -4M834 455l2 -1M866 457l2 -4M611 458l-5 3M648 460l5 1M718 458l2 1M755 459l0 4M826 460l2 -1M863 459l4 -4M885 458l5 -2M762 467l1 4M766 480l3 3M775 488l-2 3M775 498l3 1M829 501l4 0M766 503l2 3M793 505l-0 -4M840 504l-4 -3M839 507l0 -4M872 508l2 -4M772 511l-3 3M834 511l1 -5M877 509l4 -4M794 514l2 -4M821 512l6 -1M837 514l5 -0M772 515l-3 0M801 516l4 -3M828 515l2 -3M870 515l2 -4M885 516l4 -2M747 520l1 3M829 520l1 -5M870 520l5 -3M887 519l5 -2" stroke="#f9b166" stroke-width="2.2" stroke-linecap="round" fill="none"/><path d="M643 236l2 2M700 256l-4 2M841 262l-1 -2M694 267l5 2M792 285l-0 -5M673 295l-3 3M672 300l-2 3M618 303l4 4M640 303l-2 3M598 306l-2 2M666 306l-3 4M597 309l-2 1M619 310l-0 5M600 313l-2 3M635 312l1 3M858 311l-2 -5M658 315l3 0M638 318l4 3M673 317l-0 5M861 321l3 -3M676 324l0 2M629 328l-2 0M620 331l2 2M672 330l-1 3M606 334l-2 5M624 335l2 3M876 335l0 -5M635 338l1 3M636 343l-1 2M689 344l-4 2M599 354l2 3M609 357l3 5M877 362l1 -4M797 366l1 -4M789 371l1 -4M797 375l1 -3M797 379l-2 -3M793 394l1 -5M840 398l3 -2M680 407l3 1M622 416l-2 0M671 433l-3 2M740 434l5 2M823 444l2 -4M855 451l3 -3M743 460l-2 3M614 461l-0 4M631 461l2 1M679 462l-2 5M707 463l3 0M723 461l3 4M759 463l5 2M604 466l-4 3M624 465l1 4M657 464l-0 5M691 464l2 2M722 464l3 1M740 465l2 2M606 468l-1 3M652 469l-1 2M676 468l2 4M691 467l-1 3M713 469l4 4M729 469l-2 1M750 468l4 0M604 470l-2 4M633 470l-3 3M665 470l2 2M681 470l2 5M707 472l3 0M731 470l1 2M826 470l2 -2M626 473l-1 4M647 473l-4 3M673 475l-3 2M700 474l0 2M717 474l2 5M741 474l2 5M598 477l-5 1M620 476l-3 4M643 478l3 3M686 478l-4 1M710 476l3 0M729 478l-1 4M756 478l4 4M617 480l-3 1M639 481l-3 1M669 479l-1 6M691 480l4 1M730 480l-2 4M629 484l6 0M650 483l1 4M672 484l-3 4M692 482l4 3M707 483l-1 2M722 483l2 4M737 483l2 3M606 487l-3 1M634 485l-0 4M652 486l5 3M665 487l1 2M690 485l-3 0M717 485l4 4M598 488l3 1M620 490l1 4M643 489l-2 2M670 490l-3 2M707 488l2 2M726 490l-4 2M599 491l3 1M625 491l-0 5M656 492l-4 4M696 491l-1 3M723 492l-4 1M794 492l4 -3M617 495l-2 3M640 495l-3 3M687 495l0 3M708 494l2 3M724 496l2 5M597 498l-2 1M620 497l-0 3M645 499l1 2M670 499l-1 3M694 497l1 3M719 498l3 4M733 497l-2 1M627 500l3 1M680 510l-3 0" stroke="#fdf7a8" stroke-width="2.2" stroke-linecap="round" fill="none"/><path d="M820 236l1 -5M830 256l-1 -2M626 274l1 2M679 286l2 0M866 293l4 -4M665 302l4 0M827 304l3 -5M638 306l6 0M712 307l2 2M686 308l-2 2M687 312l-2 2M638 315l3 3M683 315l-4 1M610 319l-1 2M671 319l-3 3M633 321l0 4M808 320l2 -2M627 325l-3 1M867 323l1 -2M839 326l2 -1M600 331l-1 2M679 331l2 2M600 334l-2 2M831 333l-1 -3M630 336l1 6M862 335l1 -4M654 338l2 1M629 341l-5 3M607 346l3 1M604 348l4 5M622 348l-3 2M620 354l-1 2M861 358l3 -4M785 362l2 -4M792 365l3 -3M791 369l2 -3M761 372l-0 3M808 377l2 -4M700 382l-1 5M839 383l3 -1M878 393l3 -2M852 412l2 -1M880 420l2 -3M634 438l0 5M621 454l-1 4M615 460l-1 3M680 460l-4 3M616 463l2 5M640 462l-0 5M655 463l-2 1M673 462l6 2M692 461l-1 4M714 463l-3 2M743 462l-3 4M609 465l-3 2M643 465l-2 4M660 464l-5 2M678 465l-1 2M696 464l-0 3M715 465l-1 2M599 469l-4 3M614 469l-2 2M634 469l-3 0M655 467l-3 0M693 469l5 1M720 468l2 4M601 471l-2 0M618 471l-0 3M645 470l3 4M661 470l-4 2M687 472l2 0M720 471l3 2M752 472l3 1M606 474l2 2M621 474l2 0M653 474l1 4M668 473l-2 1M686 473l2 1M723 474l-1 2M749 474l1 4M602 477l-5 1M629 477l3 1M650 478l-4 3M668 478l1 2M687 477l-2 0M715 476l-2 5M751 476l-2 2M612 480l1 3M637 481l-4 0M660 480l5 1M678 481l-1 3M703 479l-4 4M720 479l1 5M740 479l-4 1M607 484l-1 2M625 483l-1 3M656 484l5 3M688 482l4 2M850 484l4 -2M619 486l-3 1M649 487l1 2M685 486l0 2M713 487l-1 3M727 485l1 4M615 489l5 3M640 488l-1 3M668 488l-3 0M686 488l-0 5M702 488l-3 4M730 490l-1 2M615 491l2 3M642 492l5 2M660 493l-4 2M682 492l3 5M701 491l-1 5M722 492l-2 4M602 495l2 3M626 496l-0 5M650 494l3 3M661 495l2 2M677 494l-3 2M703 496l-1 2M739 494l-0 4M622 498l3 2M641 497l0 2M666 498l-2 5M687 497l-6 1M714 498l2 5M648 500l1 5M862 516l1 -4" stroke="#fdf7a8" stroke-width="3.4" stroke-linecap="round" fill="none"/><path d="M760 237l2 2M825 242l3 -3M812 247l1 -6M868 247l4 -2M650 250l4 3M874 249l6 -2M803 251l3 -1M828 252l2 -1M785 256l1 -4M838 259l2 -4M882 260l-2 -4M670 270l-4 2M782 277l-0 -3M788 280l3 -4M838 283l5 -3M828 285l2 -2M855 287l3 -2M792 291l2 -5M710 294l1 2M838 293l2 -3M827 298l-0 -5M867 301l-0 -5M858 305l2 -4M816 319l3 -4M794 328l2 -4M851 330l-1 -4M870 335l2 -1M889 341l0 -2M871 347l-3 -4M829 354l1 -2M848 372l3 -2M629 382l-1 4M680 380l3 0M597 384l2 0M812 383l1 -5M680 388l-4 1M601 389l3 2M631 389l-3 3M711 390l-4 1M641 392l-3 3M724 393l2 3M633 395l-2 0M793 395l2 -6M630 400l-5 1M721 398l3 4M597 403l-1 3M653 402l1 3M696 403l2 4M735 402l-3 5M633 406l-0 4M664 404l2 3M684 406l-2 2M721 406l2 1M615 407l-3 0M630 409l-4 1M654 409l4 1M712 408l2 2M854 409l3 -1M626 410l0 2M655 412l1 3M713 410l3 1M602 413l-3 4M648 413l4 2M698 413l3 1M613 417l-4 3M653 418l-3 1M680 417l3 2M727 416l3 2M640 419l-4 4M709 419l4 0M759 426l-2 1M865 446l4 -2M860 454l1 -4M792 465l1 -2M858 471l1 -2M708 481l-1 5M864 488l1 -2M864 491l4 -2M692 501l-1 6M802 501l4 -1M785 503l4 -2M862 503l2 -1M784 507l-2 -5M803 507l1 -4M849 507l2 -1M810 511l1 -3M880 509l5 -2M798 512l2 -3M784 516l1 -5M839 515l1 -4M806 519l1 -2" stroke="#aee08a" stroke-width="3.4" stroke-linecap="round" fill="none"/><path d="M827 236l2 -5M845 244l1 -4M849 246l1 -4M847 250l1 -5M858 253l-1 -4M780 254l2 -4M869 254l2 -4M806 257l4 -2M860 257l3 -5M808 260l2 -1M779 264l0 -4M784 267l2 -2M826 275l4 -4M708 284l3 2M822 291l2 -5M828 297l2 -2M890 306l2 -1M793 313l-1 -3M839 319l2 -2M882 327l-0 -4M799 333l5 -2M824 343l1 -4M857 350l1 -3M747 354l4 4M864 356l1 -2M841 379l4 -3M647 381l2 5M874 381l2 -4M623 385l2 1M733 383l2 5M674 386l2 0M699 386l-2 2M628 391l-1 5M705 391l-1 2M814 390l-0 -5M609 394l-5 2M682 393l1 4M855 392l2 -2M605 396l3 2M672 395l6 1M693 396l-2 4M609 399l2 0M644 400l3 2M679 400l-5 1M875 399l5 -3M615 401l2 1M664 401l-1 3M721 401l2 2M611 404l-0 6M630 404l-4 0M687 405l-6 0M736 404l3 4M648 407l0 2M704 409l2 6M727 408l2 1M865 408l4 -3M661 412l3 2M673 412l-6 0M693 410l2 3M723 412l-4 1M610 414l-3 2M661 413l-0 5M715 413l3 2M600 417l3 0M674 418l4 3M717 416l1 5M613 419l5 3M687 420l3 4M874 425l1 -2M869 429l-0 -3M726 442l0 4M848 445l0 -3M692 449l-3 3M618 460l3 4M838 464l2 -2M858 469l1 -4M652 477l0 4M828 491l1 -3M771 502l3 4M826 502l2 -2M874 501l1 -2M768 504l-0 5M808 504l3 -1M837 505l2 -4M869 505l1 -2M840 508l-1 -2M788 509l4 -4M825 511l4 -2M767 514l2 4M824 513l2 -2M858 512l4 2M875 512l1 -2M765 516l4 3M798 516l3 -5M856 516l2 -3" stroke="#aee08a" stroke-width="2.2" stroke-linecap="round" fill="none"/><path d="M599 342l1 5M624 348l1 5M637 359l2 4M702 373l5 0M792 417l-2 -6M829 480l5 -3M864 481l1 -2M781 484l2 -4M804 484l4 -3M852 482l-2 -2M869 483l1 -2M879 482l3 -4M799 487l1 -2M815 487l-0 -3M827 485l1 -4M850 487l3 -5M886 487l1 -5M801 489l5 1M826 490l3 -4M839 489l3 -4M857 488l2 -1M884 488l1 -2M802 491l1 -3M846 491l1 -3M871 491l4 -2M782 495l-1 -3M821 496l1 -2M864 495l4 -3M786 499l0 -4M815 497l2 -2M867 499l3 -0M631 501l3 1M688 500l2 1M716 500l3 2M753 501l6 1M632 505l-4 3M643 505l1 2M598 508l-2 2M724 507l1 3M626 509l-1 6M685 511l6 0M747 511l-4 1M694 513l-3 2M740 513l1 2M669 516l-6 2M747 515l-3 2M635 518l2 2" stroke="#ffffff" stroke-width="3.4" stroke-linecap="round" fill="none"/><path d="M633 346l-2 3M708 361l5 2M716 372l-3 3M782 409l2 -5M840 481l2 -4M878 481l4 2M800 482l2 -4M823 483l4 -1M836 482l2 -3M865 483l3 -3M786 487l0 -5M829 485l1 -3M861 487l3 -3M882 485l2 -5M792 490l0 -5M848 490l2 -3M885 488l3 -3M800 493l2 -5M819 493l3 -3M855 492l2 -3M881 493l5 -3M793 494l2 -1M816 495l1 -6M848 494l-1 -4M869 495l0 -4M783 499l2 -2M807 497l3 -2M828 499l-0 -3M853 499l4 -1M881 499l2 -1M615 502l-4 4M738 501l3 1M602 503l-3 2M652 504l-2 2M684 505l-4 1M707 504l3 2M741 504l0 4M644 506l2 2M687 508l-2 3M734 506l-4 2M623 511l-4 4M721 510l1 4M759 509l-3 1M678 513l0 3M737 514l3 4M605 517l5 1M677 517l-4 3M603 518l-2 3M644 518l3 2" stroke="#ffffff" stroke-width="2.2" stroke-linecap="round" fill="none"/><path d="M849 238l1 -3M840 239l4 -4M829 245l-1 -4M864 262l3 -2M879 268l3 -2M868 278l1 -2M799 286l1 -3M808 293l4 -2M823 296l2 -5M817 303l1 -5M818 313l-0 -4M817 321l5 -1M804 331l2 -4M823 334l0 -5M835 346l1 -2M845 355l5 -1M793 363l1 -2M817 367l2 -6M800 375l2 -3M828 384l2 -3M722 391l-5 3M722 397l-2 1M730 399l-2 5M828 403l1 -4M870 410l2 -3M874 415l-0 -5M821 422l2 -1M808 430l2 -3M802 438l6 1M881 440l2 -5M806 447l4 -3M827 456l0 -4M840 459l1 -4M858 464l2 -3M835 475l1 -4M872 479l3 -2M874 487l3 -5M806 491l-0 -2M843 494l4 -2M875 497l4 -4M857 503l0 -5M813 513l3 -4" stroke="#2a78c0" stroke-width="1.2" stroke-linecap="round" fill="none"/><path d="M802 241l2 -1M862 241l-1 -3M790 242l4 -1M816 243l4 -2M866 244l2 -5M790 247l5 -2M819 246l2 -5M847 246l3 -1M785 250l2 -2M808 249l2 -5M838 250l2 -1M888 249l1 -3M809 253l4 -1M863 252l2 -3M786 256l2 -5M817 255l1 -3M847 254l4 -3M783 259l4 -3M823 259l4 -1M890 259l2 -3M802 262l1 -5M860 262l4 -2M752 265l5 2M796 263l1 -5M843 263l3 -2M749 267l-4 3M860 268l1 -2M801 269l1 -4M828 269l2 -2M866 269l-2 -3M885 271l0 -5M782 274l1 -3M799 272l1 -3M820 274l1 -3M769 276l4 3M808 277l1 -2M839 275l4 -3M883 275l3 -2M809 280l1 -5M884 280l3 -0M782 283l2 -2M824 282l-2 -3M804 284l6 -2M846 285l2 -5M798 288l2 -3M831 289l3 -3M887 288l4 -2M785 295l3 -3M836 294l1 -3M782 297l2 -3M798 299l1 -5M828 300l3 -5M779 304l-1 -5M828 304l4 -2M700 305l1 2M807 306l2 -2M709 310l3 1M814 308l-2 -6M886 308l2 -1M835 313l4 -2M705 316l3 2M805 314l2 -2M885 316l3 -3M824 319l5 -3M887 319l2 -2M874 322l5 -2M726 325l-2 1M824 324l1 -2M883 324l3 -3M715 328l0 6M805 326l2 -3M889 328l1 -2M719 329l3 3M820 329l1 -3M597 332l-3 2M843 333l-2 -2M636 337l3 4M811 336l-1 -2M617 339l3 2M782 338l5 -1M859 339l1 -3M887 339l3 -2M747 344l-0 3M883 344l1 -5M787 349l4 -2M837 347l3 -5M796 351l2 -5M752 354l-4 1M801 354l-1 -3M841 354l3 -1M885 357l1 -3M803 360l2 -4M602 363l4 0M766 364l-0 3M805 362l1 -2M879 362l3 -1M634 365l-3 2M775 367l3 -1M829 365l4 -2M890 367l-5 -2M666 368l3 2M701 368l6 0M841 368l2 -3M698 373l-1 2M764 371l-6 0M801 371l3 -3M874 371l2 -1M597 374l5 3M641 374l3 2M686 375l3 1M782 374l1 -3M825 376l2 -4M878 374l1 -3M604 378l-4 1M798 379l5 -2M878 378l-2 -4M794 381l2 -3M881 381l4 -3M797 384l4 -2M823 388l3 -2M868 388l2 -5M786 391l5 0M868 389l2 -2M835 394l5 -2M826 397l3 -3M839 400l1 -4M771 401l3 3M853 402l-1 -3M789 404l1 -4M846 404l2 -4M882 405l5 -1M769 408l-3 1M837 408l0 -3M873 408l2 -1M771 412l-2 1M824 412l4 -2M862 411l1 -2M772 414l-3 0M795 413l3 -3M861 415l1 -5M881 415l6 -1M777 417l1 -4M862 417l3 -5M879 416l-0 -4M833 421l2 -2M867 421l2 -1M836 422l3 -2M874 423l0 -2M843 427l2 -3M882 425l0 -2M866 428l4 -1M823 433l1 -2M864 431l0 -3M843 435l3 -4M889 434l1 -2M851 439l0 -2M654 442l-1 2M768 442l-2 0M621 443l0 6M677 445l-5 4M721 444l1 3M778 445l3 -3M611 448l2 2M664 447l1 5M706 447l-2 4M753 446l-4 1M788 448l-2 -4M628 451l-3 5M657 450l2 2M752 451l-4 1M628 452l0 5M656 454l4 0M687 454l2 3M758 454l4 2M641 456l-1 3M692 455l1 3M729 456l4 4M774 456l-2 2M626 458l3 1M715 458l4 0M771 458l1 4M763 463l0 5M824 461l1 -2M851 462l-2 -2M870 461l3 -5M803 465l4 -1M831 465l2 -1M866 466l0 -4M769 467l0 2M802 467l3 -1M826 468l1 -3M843 468l1 -2M876 467l-0 -2M747 470l-3 5M793 470l2 -3M835 472l6 -1M878 472l1 -2M799 473l2 -4M822 475l1 -4M865 474l3 -2M883 474l1 -2M809 476l-1 -3M834 478l2 -5M846 478l3 -4M871 477l2 -1M753 480l1 3M784 480l3 -2M824 479l0 -2M889 479l2 -2M773 484l3 0M771 485l4 2M749 493l-4 2M746 496l5 0M760 494l-1 3M741 497l5 0M654 501l1 3M680 502l5 3M741 500l2 0M624 503l-1 2M682 504l1 4M728 505l2 1M625 506l-1 5M672 507l-2 3M702 508l1 4M750 507l1 3M634 509l-4 1M652 509l-1 6M691 510l-2 5M742 511l-3 5M613 514l-2 2M683 513l4 2M703 512l0 2M754 514l2 2M613 516l2 2M646 516l4 3M692 516l-2 1M721 517l-4 4M611 518l-3 4M707 518l-1 3M737 519l-3 0" stroke="#f79a9a" stroke-width="3.4" stroke-linecap="round" fill="none"/><path d="M799 240l5 -4M848 241l-1 -2M886 240l4 -4M788 242l0 -5M828 243l0 -2M854 244l2 -2M873 242l1 -2M786 247l2 -1M856 246l-0 -3M799 250l4 -2M834 249l3 -5M861 249l2 -5M788 253l0 -5M825 252l1 -4M854 252l2 -2M872 253l3 -3M822 254l2 -2M859 256l1 -3M887 254l0 -4M800 257l4 -2M820 259l2 -3M869 258l1 -3M783 262l3 -4M810 261l1 -4M876 261l2 -2M802 265l1 -4M881 264l2 -2M828 267l-0 -5M855 267l1 -2M748 269l-1 3M792 271l3 -0M836 269l3 -3M849 270l-1 -4M752 272l-5 3M830 273l-1 -6M866 272l-1 -3M876 273l4 -1M775 275l2 -2M814 277l0 -3M845 277l0 -4M875 275l2 -2M816 279l0 -3M856 280l1 -2M826 281l2 -2M857 283l1 -2M855 286l3 -2M827 288l-0 -3M798 290l5 -2M855 292l1 -3M793 295l1 -2M785 297l5 -3M855 296l0 -2M738 300l-3 4M804 299l3 -2M882 300l1 -4M764 302l4 2M822 304l1 -5M718 307l-3 3M820 305l0 -2M883 305l1 -2M837 308l1 -5M806 311l5 0M876 313l3 -3M809 314l-0 -2M881 315l3 -4M869 317l5 -3M725 322l-5 2M784 320l1 -4M605 325l3 1M721 324l-1 6M638 326l-4 3M875 327l2 -0M736 329l-3 0M869 330l2 -2M707 334l2 4M838 334l2 -5M815 335l-0 -6M846 335l1 -2M793 340l4 -4M842 340l2 -3M725 341l-2 1M793 341l2 -5M849 342l2 -3M760 345l0 5M841 346l1 -5M881 346l3 -1M840 349l-1 -4M886 348l-0 -2M780 351l0 -3M816 352l2 -3M880 352l1 -3M795 354l4 -2M882 353l1 -6M766 357l3 2M803 358l4 0M884 357l4 -1M672 361l-4 4M790 361l1 -3M859 359l4 -4M605 362l-4 2M639 362l1 4M732 363l-2 0M815 363l-0 -3M620 365l4 3M658 367l3 4M713 367l4 0M857 367l2 -1M887 367l2 -2M685 369l-3 2M761 369l-4 3M823 369l-1 -4M857 369l-2 -4M885 370l6 -2M613 373l-4 2M660 372l2 4M890 371l-0 -2M675 374l2 1M792 375l1 -4M611 377l-3 2M689 379l-3 0M774 377l1 2M833 378l2 -2M667 380l1 5M827 381l5 -2M865 385l3 -4M790 386l4 -3M794 389l2 -2M836 389l2 -2M841 393l-3 -3M834 397l2 -5M795 399l-0 -4M868 400l0 -5M843 403l4 -4M879 401l1 -2M784 405l2 -5M873 405l0 -3M784 409l3 -2M860 407l2 -2M888 407l-0 -5M841 412l-0 -3M889 412l4 -1M797 416l2 -3M890 418l1 -5M789 419l1 -4M871 419l2 -4M831 422l2 -2M867 422l2 -3M823 427l1 -2M864 425l2 -4M888 425l4 0M839 429l0 -2M889 429l-1 -2M868 432l-1 -6M848 436l-1 -2M875 436l2 -3M839 438l-0 -3M861 439l4 -2M886 437l1 -2M624 442l-3 5M688 441l0 3M718 442l-1 3M781 442l0 -3M615 443l3 2M650 443l2 3M691 445l-2 2M603 446l-4 1M679 446l3 3M774 446l1 3M669 451l-4 0M759 449l2 4M610 454l1 6M713 452l3 2M761 454l-3 0M601 457l-1 3M644 456l1 4M702 456l-2 4M744 457l-1 3M627 459l4 2M665 458l2 4M758 458l4 2M846 460l2 -5M801 463l-0 -4M821 462l-1 -4M838 461l2 -5M874 462l2 -2M885 462l4 -3M768 466l3 5M804 464l2 -3M841 465l2 -4M863 465l2 -3M884 464l3 -2M781 467l1 -2M846 467l-0 -5M873 467l-1 -3M762 471l-3 5M799 471l2 -3M819 472l3 -2M841 471l1 -5M875 471l2 -1M785 474l6 -0M819 475l4 -4M846 474l1 -5M885 473l1 -4M787 477l-0 -5M820 477l5 -1M858 476l2 -3M743 481l-2 2M769 479l2 6M743 483l2 1M759 484l6 0M778 484l5 -4M760 485l3 3M741 489l0 6M764 488l4 2M745 493l-3 3M768 493l-4 1M769 496l-3 4M754 497l-3 4M770 499l1 6M622 502l-3 2M657 502l-5 1M747 500l0 4M612 504l3 5M680 504l4 2M721 504l-1 2M601 508l0 2M622 508l-3 1M656 506l-3 4M677 507l0 2M718 507l3 1M604 509l-3 3M628 511l1 5M671 510l-0 2M711 511l-3 1M755 509l2 1M628 512l-2 2M645 514l-1 6M658 513l2 0M707 512l-2 3M747 512l4 2M644 517l-2 2M666 516l2 2M729 515l-2 3M757 516l2 3M629 519l0 4M654 520l-3 3M682 518l-3 1M710 520l-3 3" stroke="#f79a9a" stroke-width="2.2" stroke-linecap="round" fill="none"/><path d="M726 240l-3 2M616 242l1 3M720 242l0 6M687 245l2 2M713 250l-3 2M721 251l-1 4M702 256l-2 4M643 257l-5 0M606 260l-2 5M701 261l2 5M658 264l-3 1M664 268l4 4M739 267l5 4M634 271l-4 5M695 271l-3 0M737 269l5 0M660 274l-3 2M621 275l0 2M709 275l-2 2M756 276l-3 1M645 279l2 1M621 281l3 1M673 283l2 0M712 283l-2 1M737 283l-4 4M879 281l1 -5M634 285l1 3M691 286l4 2M627 287l3 0M710 289l-3 3M624 290l2 5M703 291l-3 4M743 290l-2 5M650 293l-2 1M715 295l-0 4M610 297l5 2M712 296l0 4M679 300l-4 1M732 300l-4 4M862 303l1 -6M708 313l2 4M716 319l-5 2M690 321l1 4M723 327l-0 2M681 338l1 2M732 339l-4 4M721 342l-2 5M722 345l4 1M703 352l-3 0M731 350l-5 1M687 358l2 3M720 360l-4 3M754 377l1 2M767 382l-2 2M808 382l1 -5M758 385l-5 0M784 384l1 -2M817 384l2 -1M757 388l-1 3M794 386l3 -3M848 386l4 -4M789 390l1 -4M817 391l2 -1M799 393l-2 -5M752 397l0 5M763 400l-2 5M805 399l-1 -3M755 403l3 3M800 405l-0 -3M751 407l3 3M816 407l2 -5M755 410l-5 0M753 414l3 5M810 414l4 -2M814 417l3 -3M693 421l1 5M804 421l5 -1M623 423l3 4M659 424l-2 1M734 423l3 0M782 424l1 -5M597 426l-3 4M643 426l-3 3M720 426l-2 5M732 427l3 1M795 425l1 -2M637 428l-4 3M695 428l-3 3M742 428l2 3M796 430l-0 -4M681 432l3 1M755 431l-1 4M819 431l5 -0M626 434l-1 2M655 435l2 4M708 436l3 2M784 435l2 -5M813 436l-0 -4M615 439l3 1M665 439l-4 1M741 437l-1 4M804 437l4 -4M800 440l1 -4M794 452l2 -5M806 460l3 -3M781 461l2 -4M794 469l1 -2M791 475l3 -3M785 476l2 -2" stroke="#c8b0dc" stroke-width="3.4" stroke-linecap="round" fill="none"/><path d="M638 241l-2 1M662 243l0 5M738 243l-0 3M636 247l3 5M720 247l-2 0M606 250l2 2M694 248l-4 1M736 249l-3 2M708 253l-4 0M716 254l1 5M738 255l3 3M706 258l2 3M623 260l-5 3M622 263l0 2M712 264l2 4M620 268l2 3M691 266l-1 2M735 267l1 2M617 269l3 1M688 270l-0 2M601 274l0 6M627 273l-1 4M670 272l2 2M601 276l-4 2M610 279l-5 0M653 280l-2 5M714 278l-4 1M754 279l2 2M692 281l1 4M738 283l2 3M655 285l2 1M728 284l1 2M872 286l2 -4M610 287l1 5M680 288l-2 1M879 287l1 -5M687 291l0 5M605 294l1 3M633 295l2 4M688 293l2 4M722 294l-2 5M670 298l5 0M871 297l0 -3M655 299l1 2M875 299l4 -1M873 303l2 -2M735 306l-3 5M717 309l0 4M723 312l-2 2M702 320l1 6M716 324l-4 1M691 326l5 3M684 329l-1 2M745 335l2 2M740 340l-2 0M699 349l4 4M707 352l1 3M708 355l2 3M734 358l1 3M754 369l5 1M743 380l-1 3M815 380l1 -2M748 386l0 4M754 391l2 1M741 394l-2 1M815 394l2 -2M780 396l1 -2M819 397l0 -6M779 398l-1 -4M742 402l2 1M819 401l4 -3M806 406l2 -1M742 408l2 0M749 413l0 5M756 418l-3 2M811 417l1 -2M664 420l-1 3M759 421l5 2M648 424l2 4M695 423l5 1M758 423l2 2M631 426l-2 5M688 425l2 2M793 426l-1 -5M702 428l1 4M815 428l2 -2M653 432l2 3M703 431l-4 2M808 431l5 -0M686 434l2 1M734 434l1 3M654 439l-3 4M781 439l-2 -4M796 438l2 -5M701 440l-1 2M808 444l-1 -5M820 446l5 -2M811 451l5 -1M811 453l2 -3M786 460l3 -2M813 460l4 -3M781 466l1 -2M796 469l4 -4M775 478l-1 -3M791 480l4 -1" stroke="#c8b0dc" stroke-width="2.2" stroke-linecap="round" fill="none"/><path d="M632 238l-1 6M660 236l-6 1M705 237l4 3M756 238l-0 3M786 236l2 -6M803 236l3 -3M837 238l4 -4M874 236l1 -2M651 240l5 1M743 239l-6 2M784 239l2 -1M823 240l-1 -2M650 244l-1 2M755 243l-4 3M614 247l-3 1M693 247l2 4M621 248l-1 3M645 249l-3 4M780 248l1 -2M647 251l5 2M758 252l4 2M676 254l4 2M767 256l-1 2M691 257l3 0M747 258l1 3M601 262l2 6M709 264l-2 3M807 263l3 -4M853 264l5 -3M877 265l-1 -4M806 268l1 -3M816 266l0 -2M614 269l-2 4M795 271l-2 -5M807 273l3 -1M885 274l3 -4M673 275l-1 3M754 276l-1 5M598 279l3 1M803 278l3 -5M839 280l1 -2M775 283l1 -2M847 281l1 -2M883 283l3 -2M734 285l-5 4M807 284l0 -4M884 284l2 -2M672 287l-5 2M771 289l-3 3M815 288l-0 -3M869 289l1 -3M802 291l4 -4M876 290l3 -0M639 293l2 1M779 293l1 -2M844 293l1 -4M747 297l3 4M851 298l3 -4M720 299l1 5M767 301l5 3M859 301l3 -2M680 303l2 1M760 302l-3 2M853 303l1 -2M886 302l3 -1M803 306l2 -1M848 306l3 -5M655 310l3 2M799 308l1 -4M859 310l3 -4M741 313l2 1M825 311l2 -3M853 313l4 -2M889 311l1 -3M763 316l2 2M825 316l1 -4M868 315l2 -3M704 318l-5 1M781 319l1 -2M856 318l4 -4M884 317l1 -3M693 322l-4 4M811 322l1 -3M838 321l1 -5M890 322l2 -5M745 323l2 3M831 324l-1 -4M866 323l4 -1M679 327l4 5M789 327l0 -4M853 327l1 -2M688 329l-4 3M814 331l-1 -2M689 334l-3 3M769 333l-4 1M827 334l-1 -4M859 333l3 -5M646 336l2 4M795 336l1 -5M874 335l1 -5M666 339l2 0M768 340l3 3M818 338l2 -5M845 338l0 -3M663 343l2 1M802 341l2 -6M846 341l-1 -3M651 345l-6 0M766 344l1 2M784 344l-0 -2M839 344l4 -3M869 345l3 -1M655 347l5 1M741 349l-4 2M796 348l1 -5M876 347l-0 -3M666 350l-1 5M744 350l-4 4M807 351l1 -2M858 350l4 -4M698 353l-3 0M808 353l0 -4M853 353l1 -2M646 357l-0 4M781 357l4 -3M850 357l2 -4M640 359l-2 0M688 359l2 2M809 359l2 -3M823 359l2 -3M877 360l5 -0M667 362l-4 4M854 363l-1 -5M606 366l-1 3M807 366l-0 -2M845 366l1 -2M597 370l4 1M818 368l2 -2M864 370l3 -3M636 373l-1 4M693 371l-0 5M829 373l1 -3M865 371l2 -4M743 376l4 0M835 376l1 -3M681 378l-4 4M863 378l3 -4M626 381l-1 4M684 382l2 1M771 381l1 3M860 382l3 -5M602 384l1 3M642 383l-3 4M662 384l4 2M698 383l-2 0M724 384l5 2M749 383l-1 2M831 383l0 -4M859 383l1 -4M600 388l-4 2M628 388l0 4M644 387l-2 4M686 386l4 1M718 388l5 2M773 388l5 2M864 388l3 -3M636 391l-1 3M656 391l-4 1M675 389l-1 4M700 391l-3 3M746 390l1 3M828 389l3 -3M872 390l0 -4M636 394l-5 1M692 392l-1 3M747 392l-1 2M770 393l-2 1M882 392l2 -3M629 396l-0 4M707 397l-1 2M730 395l-4 0M764 396l-3 1M822 397l1 -5M867 397l1 -2M655 398l-3 1M675 399l-3 1M713 400l5 2M774 398l2 4M858 398l4 -2M620 403l-5 0M710 403l-3 1M747 402l-0 3M801 402l1 -4M856 401l1 -2M747 404l-2 2M778 404l2 -2M845 405l1 -4M604 409l-5 1M665 409l5 2M749 407l5 2M803 408l-1 -6M841 407l1 -3M644 412l-4 4M761 412l-2 2M827 412l3 -2M608 413l-2 2M643 415l-3 5M667 414l-3 4M739 413l2 1M807 413l-2 -4M837 413l2 -5M604 418l-1 3M634 417l-3 1M705 417l-0 5M741 417l3 0M851 418l3 -2M607 421l5 2M637 421l-2 1M679 421l-3 4M728 421l-3 5M752 421l4 0M799 421l3 -2M837 420l4 -1M613 424l-3 3M662 423l3 2M704 424l-1 4M769 423l5 1M823 423l5 0M860 423l-1 -2M625 427l-5 1M651 427l-2 1M690 427l0 3M704 425l-2 2M737 425l2 5M769 427l-3 1M802 425l4 -4M598 429l-1 5M621 428l-5 2M642 430l3 1M680 430l2 2M698 428l-5 2M722 429l-3 3M754 429l0 3M773 428l-3 1M820 428l3 -4M625 433l0 4M666 432l3 1M736 433l-0 3M756 431l3 3M828 431l4 -2M603 434l5 1M662 434l4 4M707 436l5 0M753 435l-2 3M798 434l1 -5M601 438l-1 4M636 438l-5 2M668 439l-5 0M709 437l-3 2M764 437l-2 2M800 439l5 -0M834 437l2 -3M637 442l-5 1M657 441l2 6M678 440l-2 3M725 441l-3 1M774 440l-1 3M817 440l1 -2M837 440l2 -2M867 441l2 -4M603 445l1 5M645 444l-3 1M701 444l-2 2M729 445l-3 1M768 445l3 1M832 443l5 -4M867 445l2 -4M885 443l3 -4M645 446l-3 1M671 446l2 1M702 446l-5 2M731 447l1 2M790 446l2 -4M842 447l1 -4M873 447l1 -4M602 450l2 6M637 450l5 4M667 450l-6 1M753 450l-2 1M822 450l0 -4M868 451l2 -3M600 452l-4 0M624 453l2 4M682 452l-3 5M717 452l-2 5M748 452l-4 2M854 454l2 -5M610 456l-2 4M662 457l-1 3M686 455l-6 1M715 455l2 3M797 455l2 -3M830 456l-3 -5M848 456l3 -3M871 457l2 -3M888 455l3 -2M691 460l0 4M724 460l2 4M770 460l2 6M875 459l0 -2M765 469l-4 4M778 485l-0 -4M768 501l-2 1M806 501l3 -4M854 501l2 -2M890 500l2 -5M811 503l1 -2M882 503l4 -3M773 507l2 0M812 506l3 -3M878 508l2 -1M763 510l-3 2M783 510l-0 -4M819 510l1 -3M858 511l-1 -2M888 509l1 -5M816 514l3 -3M792 516l-1 -4M859 515l1 -4M618 520l-1 4M755 520l4 2M768 519l5 0M783 518l3 -3M823 518l0 -2M857 519l2 -0M877 518l2 -3" stroke="#f9b166" stroke-width="3.4" stroke-linecap="round" fill="none"/><path d="M650 236l4 1M674 237l-5 2M696 238l2 2M729 236l-1 3M781 238l2 -1M811 238l-2 -5M836 238l1 -4M876 236l3 -3M650 241l0 2M736 239l-3 1M760 239l2 5M811 239l5 -3M839 240l2 -0M876 240l-0 -4M642 242l-5 2M719 244l3 4M662 245l3 1M757 247l2 1M666 250l3 0M597 253l1 4M650 253l5 1M679 251l-4 3M731 251l2 3M626 255l-5 3M687 254l0 2M764 255l2 5M680 257l2 1M696 260l-2 3M823 261l3 -4M602 264l-0 5M715 264l-4 3M788 265l1 -4M659 268l3 4M753 266l-3 0M865 267l2 -2M666 270l-4 1M825 270l2 -4M676 272l2 4M709 272l-5 2M825 272l2 -4M648 276l5 0M794 277l2 -4M640 280l3 3M820 278l1 -2M878 278l2 -2M653 281l3 2M815 283l2 -2M636 284l-2 1M764 286l-5 1M801 286l-0 -3M605 287l4 4M795 288l-1 -2M605 292l-4 1M764 292l1 2M853 290l1 -3M661 295l3 3M780 294l4 -4M863 295l1 -3M726 297l-4 2M775 298l1 -3M866 297l1 -4M754 300l4 3M811 300l3 -4M850 301l2 -5M877 301l-0 -2M783 302l2 -2M846 303l1 -3M648 305l5 3M756 306l-4 1M849 305l1 -2M742 310l3 1M781 309l2 -2M844 310l1 -3M889 308l6 -1M747 312l-5 2M777 313l-2 -2M821 313l2 -3M693 316l-5 3M790 314l0 -6M853 315l1 -5M643 318l-4 1M779 319l2 -2M810 317l4 -1M854 318l3 -5M832 321l0 -5M849 322l3 -1M880 322l1 -2M788 324l2 -3M848 324l-1 -3M674 327l3 3M765 326l-3 3M803 328l0 -3M829 328l1 -4M844 326l5 -2M750 330l1 2M824 329l3 -3M846 330l2 -1M651 333l-2 4M756 332l-0 2M854 333l4 -2M755 337l-3 4M801 337l-1 -3M854 337l2 -2M695 339l3 2M774 339l-4 2M866 338l2 -2M679 342l1 2M808 342l2 -4M835 343l4 -3M655 346l3 2M679 345l-5 0M795 345l1 -5M821 344l1 -4M877 344l3 -4M773 347l5 2M802 349l2 -5M843 348l-1 -2M860 347l1 -5M747 351l-2 2M791 351l1 -5M846 351l5 -3M675 355l-2 3M746 353l1 3M846 355l2 -2M652 356l4 4M683 356l-0 5M778 357l2 -6M811 358l2 -2M835 356l1 -2M875 357l2 -3M668 359l-0 5M782 359l-2 -4M837 361l1 -5M611 363l3 3M700 363l4 1M823 363l-1 -3M851 364l-1 -4M598 367l-0 4M811 367l-2 -4M842 365l4 -0M642 369l-0 4M742 370l3 4M850 370l2 -6M758 372l-5 2M821 372l-3 -5M853 372l5 -3M615 375l2 1M812 374l2 -4M829 374l0 -4M846 375l2 -1M636 378l1 4M756 377l0 2M822 378l5 -1M844 378l3 -3M609 380l3 2M660 380l-3 0M707 381l-2 2M770 380l2 4M838 381l2 -3M614 383l3 3M640 383l3 1M670 385l3 0M706 383l2 3M742 385l4 4M804 385l5 -1M878 385l2 -4M625 388l-2 2M668 387l-1 5M755 388l-3 5M803 387l-2 -4M829 388l1 -4M877 388l0 -5M661 391l0 2M716 389l-3 4M773 390l-4 3M842 389l-0 -5M889 391l2 -3M642 394l3 1M676 392l1 2M702 392l1 2M720 392l4 2M772 393l-4 4M827 393l1 -3M869 393l1 -6M639 397l-6 1M654 396l-4 2M675 396l-4 3M739 397l-2 3M771 397l4 2M839 396l0 -2M875 395l2 -2M603 398l2 1M657 398l6 2M740 400l-0 4M771 399l1 4M870 398l1 -2M628 403l3 3M674 403l1 3M695 403l-3 4M761 401l0 2M833 402l5 -1M617 405l2 3M671 404l1 2M725 404l1 2M836 405l1 -2M609 407l4 1M686 408l-3 2M739 407l-1 2M823 408l-1 -4M619 412l2 4M719 412l3 0M778 412l2 -5M613 413l-2 1M727 414l1 6M762 415l3 3M800 413l1 -4M847 414l5 -2M666 417l-3 1M751 417l2 2M834 418l2 -1M857 418l1 -2M661 420l-0 2M722 419l-2 1M829 419l2 -1M602 422l3 4M653 424l-1 5M707 423l1 2M735 422l0 2M764 422l-4 2M784 423l3 -2M810 423l5 0M660 427l-3 4M751 427l2 4M776 426l2 -4M832 427l-1 -3M649 429l2 2M666 430l-2 2M728 429l-0 2M776 428l2 -2M842 428l1 -2M606 432l1 4M631 431l-0 2M658 432l-4 1M717 433l-5 0M750 432l-5 3M776 432l3 -1M795 431l0 -2M816 432l-1 -3M609 435l3 2M639 434l4 1M699 434l2 3M737 434l-4 4M772 435l3 4M825 436l2 -4M859 434l1 -2M619 438l-4 2M678 437l1 5M718 438l-1 2M730 438l-2 3M769 438l-0 2M603 442l-3 2M704 442l-1 3M739 442l5 1M764 440l2 5M820 440l4 -0M849 440l-0 -5M878 442l2 -5M654 444l4 2M706 445l-0 2M745 443l-4 4M774 444l-6 1M845 443l3 -4M877 444l6 -2M635 447l5 1M682 447l-1 4M746 446l4 2M768 448l4 2M832 446l2 -2M857 446l-0 -5M888 447l2 -1M652 451l-3 5M687 451l-0 5M705 450l-3 1M723 450l3 3M742 450l0 6M781 450l2 -4M825 449l2 -2M851 451l2 -1M880 450l1 -4M618 454l1 2M664 452l-5 1M715 452l-0 2M753 452l5 3M789 453l4 -4M828 453l3 -1M846 452l2 -1M871 453l2 -6M889 453l2 -1M622 455l-2 1M655 457l3 1M766 455l3 1M785 457l4 -4M852 457l1 -5M878 456l2 -1M621 458l-5 2M661 458l-3 4M720 458l4 1M765 459l-5 0M834 460l2 -5M864 460l4 -4M765 462l0 2M777 469l2 -1M774 480l1 4M763 491l-1 2M765 500l2 5M832 500l2 -2M776 504l1 -5M797 504l6 1M809 506l3 -3M846 506l1 -3M885 508l0 -6M799 510l1 -3M845 510l2 -2M763 512l-3 3M804 514l2 -4M825 512l5 -2M851 514l4 -2M780 515l2 -3M805 515l1 -2M840 516l0 -3M877 515l2 -3M639 520l-4 4M790 520l1 -3M840 518l1 -4M873 520l1 -5" stroke="#f9b166" stroke-width="2.2" stroke-linecap="round" fill="none"/><path d="M870 240l2 -2M792 255l2 -4M849 263l-3 -3M663 283l2 2M677 287l2 3M738 293l5 3M690 300l-0 3M627 302l3 1M659 303l-3 0M626 307l0 6M678 306l-2 2M602 308l-2 4M630 310l-2 3M610 311l3 1M650 312l2 1M601 314l3 0M668 314l-3 5M639 319l-2 4M696 317l1 2M608 324l-5 1M842 325l5 -2M643 326l3 1M626 330l-1 2M800 331l3 -5M611 333l-3 0M656 335l-4 1M603 338l-5 3M614 342l-4 1M661 343l-1 6M790 345l0 -4M626 355l5 0M620 357l1 3M648 365l5 1M774 368l-2 2M815 373l3 -3M801 376l0 -4M870 388l1 -6M824 393l-2 -5M823 401l2 -2M786 410l1 -5M766 417l-2 5M729 432l2 4M770 434l-3 3M690 448l-2 2M700 456l3 1M602 463l4 4M618 463l-3 1M649 463l1 4M686 462l2 2M710 461l-4 3M736 462l-3 0M845 461l1 -3M614 464l-6 0M631 466l4 0M671 465l2 2M700 464l-3 2M727 465l1 2M742 465l-4 4M620 467l4 2M662 469l0 5M682 467l1 4M696 467l0 3M715 469l-1 5M734 468l1 5M754 467l1 3M613 472l-1 5M637 470l-2 3M667 472l5 1M690 472l0 6M710 471l3 1M734 472l-2 4M600 475l5 2M629 474l2 0M649 475l-0 3M687 473l-2 5M702 473l-2 1M722 473l-3 2M751 474l2 0M607 478l3 0M621 477l-5 4M656 478l-5 1M691 476l3 3M712 476l5 1M734 476l-2 2M869 477l3 -1M623 480l-4 1M652 480l-0 5M677 480l0 5M699 481l-2 1M746 481l-1 5M631 484l5 1M653 483l4 4M676 482l-2 5M693 482l4 2M712 482l0 2M728 482l-1 3M739 484l0 3M615 486l-5 1M636 486l3 0M656 485l3 0M670 487l2 1M695 487l2 4M730 487l-4 4M600 490l-2 2M622 490l2 1M658 488l3 1M683 488l0 4M712 490l3 2M732 490l-1 2M605 493l-2 0M634 493l1 4M663 491l-2 4M712 492l-4 4M731 492l-2 2M599 496l1 2M618 494l3 1M644 496l-2 4M691 494l1 5M712 495l-4 4M727 494l-2 4M602 499l3 3M624 498l2 5M653 498l0 4M673 497l1 4M697 497l-2 3M721 499l-1 4M736 499l1 3M683 500l-3 5M727 515l-1 2" stroke="#fdf7a8" stroke-width="2.2" stroke-linecap="round" fill="none"/><path d="M887 236l2 -1M643 261l1 5M800 275l2 -4M669 289l5 1M884 295l1 -3M698 304l2 2M601 305l4 0M660 305l2 4M629 310l4 0M599 313l2 3M699 312l-3 0M640 315l4 2M698 315l2 1M617 317l-5 3M889 319l1 -2M638 321l-3 3M864 321l-0 -3M651 325l0 5M873 323l2 -2M863 327l1 -4M644 330l1 3M757 331l-5 0M603 333l4 2M866 334l2 -4M639 337l-1 2M864 337l0 -6M867 338l4 -2M632 342l5 1M611 344l2 5M608 348l-4 1M627 347l-4 3M597 357l3 1M773 361l5 1M797 364l2 -4M800 365l3 -0M793 368l3 -1M786 373l1 -5M890 378l-0 -3M831 382l0 -2M874 385l-1 -5M833 395l2 -3M700 415l1 4M695 435l5 0M761 437l-2 4M814 452l0 -3M644 460l2 5M683 460l-5 2M623 461l1 5M643 462l4 4M661 462l-2 3M677 462l-5 2M693 462l-0 4M728 463l5 1M749 463l2 1M629 465l2 1M648 465l0 3M665 466l3 2M682 464l2 0M706 464l2 1M725 464l1 5M600 468l2 1M615 467l4 1M640 468l4 5M667 468l2 1M699 467l-4 3M737 469l-3 0M608 471l-2 2M621 471l2 3M649 470l4 4M677 472l-5 1M695 472l5 0M723 470l-4 3M757 470l-3 1M613 474l5 2M630 473l-2 3M656 474l-3 3M677 475l4 2M692 473l-3 0M726 475l-4 2M754 475l1 3M604 477l-0 2M630 476l-4 0M658 477l5 1M670 477l4 2M696 477l5 1M719 477l4 1M600 479l5 2M619 479l-1 3M643 479l-0 3M663 480l4 4M687 479l1 6M707 479l-4 0M725 479l1 5M598 482l-2 2M610 482l-5 0M638 484l-3 4M658 483l-4 0M697 482l1 2M605 487l-5 3M628 487l-3 2M667 485l4 1M687 485l-1 4M715 485l2 1M736 485l1 3M628 488l3 0M646 490l2 3M674 488l-1 3M690 489l1 2M710 488l2 4M602 492l-4 3M622 491l-2 1M645 492l3 2M669 493l2 3M686 493l-2 1M704 491l-2 1M727 493l2 4M608 496l3 4M633 496l1 2M652 496l5 2M664 495l0 5M680 496l-2 3M706 494l2 5M855 496l1 -3M628 499l5 0M650 498l-0 3M677 497l1 2M700 498l-1 2M727 497l-1 3M676 500l-2 1M676 518l0 3" stroke="#fdf7a8" stroke-width="3.4" stroke-linecap="round" fill="none"/><path d="M861 237l5 -2M862 243l1 -5M841 246l-2 -4M882 247l1 -2M821 248l1 -2M877 250l1 -3M811 251l1 -2M848 252l4 -3M811 254l-1 -5M843 259l1 -3M839 264l2 -2M731 269l2 4M788 277l5 -3M789 278l-1 -5M816 285l2 -4M788 288l1 -1M862 289l4 -1M797 290l1 -5M787 295l4 -0M855 295l-3 -4M832 296l-3 -1M792 303l-1 -3M798 312l2 -2M876 319l3 -4M721 331l5 2M847 332l4 -2M787 339l-0 -3M823 348l1 -3M799 351l4 1M849 355l5 -2M791 375l-1 -5M642 382l-4 3M695 382l-2 2M607 385l2 1M621 386l4 0M682 387l-3 1M609 390l4 0M634 391l-6 1M616 393l-4 5M656 392l-2 3M874 394l2 -4M664 396l5 1M614 400l4 2M646 398l0 3M724 398l-4 1M603 403l-1 3M661 403l0 2M706 401l-4 2M865 402l2 -4M638 404l0 4M674 404l-4 2M698 404l2 3M729 405l2 3M620 409l2 0M635 408l3 5M669 408l-5 2M718 408l2 3M861 407l4 -0M628 411l4 0M684 410l-4 0M729 410l-0 4M615 413l-1 2M658 415l3 2M708 413l3 5M618 418l-3 1M656 418l1 2M690 417l1 2M733 417l4 3M648 419l4 0M725 419l1 4M628 442l-0 3M828 450l1 -4M656 460l2 4M643 469l0 3M861 472l3 -0M662 482l2 1M630 491l-3 0M890 492l1 -2M736 502l2 3M819 501l5 -1M830 503l1 -2M871 505l5 -2M789 507l3 -3M813 506l2 -2M875 508l3 -4M815 509l1 -3M882 511l2 -4M845 513l3 -5M817 516l2 -2M874 517l-3 -0M827 519l3 -4" stroke="#aee08a" stroke-width="3.4" stroke-linecap="round" fill="none"/><path d="M869 238l1 -5M783 245l-1 -2M864 246l0 -4M857 248l-0 -3M878 251l5 -3M826 255l-1 -4M883 256l2 -4M830 259l-1 -4M877 257l0 -6M837 260l3 -4M841 265l2 -3M798 268l0 -2M792 279l-1 -5M821 285l3 -1M845 291l5 -2M792 299l4 -4M785 308l-2 -2M796 315l6 -1M789 323l-1 -5M770 329l-2 1M784 335l4 1M862 343l2 -2M863 350l-1 -4M824 355l3 -1M688 365l3 3M872 378l1 -3M673 381l4 1M883 382l0 -5M666 385l-4 1M870 383l-0 -5M676 386l-5 0M731 387l-2 3M653 389l0 6M709 389l4 5M598 394l-0 2M613 394l-4 0M716 393l-2 2M861 393l1 -2M612 395l-2 2M680 396l2 1M701 396l-1 5M624 400l4 0M648 398l2 1M686 400l2 5M602 403l1 2M631 403l3 4M667 401l1 2M730 402l3 2M622 404l2 2M651 405l-1 2M709 405l-2 3M738 404l-5 3M657 409l1 5M706 408l4 4M732 407l-2 2M606 411l1 4M665 411l-4 4M679 410l-2 4M704 410l2 1M726 412l4 1M618 415l-3 2M689 414l-1 3M719 413l-1 2M626 417l3 1M681 417l2 4M720 416l3 4M619 419l-1 5M713 420l3 2M876 425l-3 -4M743 436l2 3M807 442l2 -1M857 445l1 -2M805 452l0 -6M844 459l1 -6M629 469l1 5M735 471l2 2M857 478l2 -2M839 492l0 -2M775 500l5 -3M837 502l3 -1M883 501l-1 -3M773 505l-2 4M822 503l-1 -4M848 504l-1 -3M875 504l3 0M855 508l2 -2M802 510l2 -5M852 509l1 -6M771 512l6 0M830 512l2 -1M863 513l4 -1M882 513l2 -1M775 517l3 0M808 517l2 -5M788 518l2 -4" stroke="#aee08a" stroke-width="2.2" stroke-linecap="round" fill="none"/><path d="M601 341l4 3M634 350l-4 2M706 364l2 3M799 402l2 -2M796 480l1 -3M838 480l-3 -3M867 481l2 -3M789 484l3 -1M807 482l2 -4M856 483l3 -4M870 483l3 -3M886 482l3 -2M803 485l5 -0M817 487l4 1M838 486l-0 -3M852 485l1 -2M791 489l2 -3M811 488l1 -2M829 489l2 -1M840 489l5 0M861 489l2 -1M888 489l5 -1M826 492l2 -5M850 491l4 -1M874 491l-2 -3M796 495l1 -4M824 495l3 -1M872 495l1 -2M799 498l2 -3M821 497l3 -4M871 498l2 -4M643 502l-3 4M695 502l4 2M719 502l1 5M790 500l2 -4M634 505l1 2M655 503l-2 4M604 508l0 4M598 511l0 2M660 511l-4 4M703 509l4 1M604 512l4 1M696 514l4 3M759 512l-2 1M673 515l-3 4M750 517l-4 1M702 519l-1 4" stroke="#ffffff" stroke-width="3.4" stroke-linecap="round" fill="none"/><path d="M616 349l-2 2M717 362l2 2M786 403l1 -3M791 410l4 -4M850 480l2 -4M783 482l1 -4M811 484l1 -5M827 484l3 -3M838 483l2 -5M884 482l1 -2M792 487l4 -4M832 486l2 -4M867 487l0 -3M781 490l1 -4M813 489l2 -2M859 489l0 -2M784 492l2 -4M809 491l-1 -4M824 491l3 -1M860 491l1 -2M783 496l0 -5M799 496l2 -1M825 495l2 -3M852 495l4 -3M882 495l2 -5M789 497l1 -2M812 499l3 -4M832 497l-1 -3M855 498l1 -3M884 498l3 -4M625 501l4 3M836 500l-2 -5M609 505l2 0M657 503l0 5M695 504l3 1M716 505l2 2M751 503l3 2M645 507l2 2M698 507l-1 4M738 508l-2 0M693 510l-2 0M728 511l0 2M625 514l-4 0M712 513l3 5M750 512l2 4M619 517l-4 0M682 515l-3 5M616 520l5 1M661 519l2 1" stroke="#ffffff" stroke-width="2.2" stroke-linecap="round" fill="none"/><path d="M865 238l-2 -5M883 239l3 -0M871 246l1 -3M867 260l2 -1M855 274l2 -2M794 282l-0 -3M801 288l3 -5M847 295l4 -3M862 297l1 -4M816 307l2 -2M815 314l3 -5M803 323l5 -3M809 331l2 -1M794 337l0 -4M886 344l-4 -2M848 357l2 -1M886 363l5 -3M803 369l4 -4M880 379l1 -5M721 388l1 4M737 391l-2 5M724 397l2 1M734 399l0 2M860 403l4 -5M886 410l3 -4M865 417l-1 -2M839 422l-1 -4M872 430l0 -3M890 437l1 -4M797 444l-1 -5M831 452l2 -5M797 458l5 -2M791 462l-1 -2M838 468l2 -2M889 473l3 -4M879 479l2 -1M890 487l1 -2M807 496l4 -1M875 495l3 -4M870 500l0 -3M793 506l1 -4M886 513l2 -2" stroke="#2a78c0" stroke-width="1.2" stroke-linecap="round" fill="none"/><path d="M821 240l4 -2M869 241l3 -2M792 244l5 -1M831 242l5 -3M876 242l4 -3M806 246l-0 -3M825 245l3 -4M862 246l3 -1M793 248l2 -6M811 248l3 -0M849 248l4 -4M783 251l3 -4M814 251l4 -4M879 252l-1 -4M790 256l2 -4M819 255l1 -3M862 254l1 -4M786 258l3 -4M827 257l-1 -3M774 261l-2 3M829 261l-1 -4M873 262l3 -4M780 264l2 -3M798 265l2 -3M855 265l0 -2M791 267l0 -3M869 267l2 -3M807 271l-1 -5M833 270l2 -3M869 271l1 -3M888 269l3 -4M784 272l0 -2M804 274l5 -3M835 272l4 -2M777 276l1 -3M812 277l2 -1M862 277l-2 -5M890 277l2 -3M826 280l3 -4M887 280l2 -2M796 282l0 -3M834 282l-1 -4M810 284l-3 -5M850 284l3 -3M805 287l4 -3M836 288l3 -2M826 291l-2 -4M804 295l2 -2M886 293l6 0M789 296l-0 -6M807 299l4 -2M832 300l4 -4M782 302l1 -2M834 303l2 -3M740 307l1 5M811 305l-0 -5M762 308l2 1M852 309l3 -5M737 313l5 0M849 311l-2 -6M769 314l6 2M820 314l-1 -2M889 316l0 -2M836 319l2 -4M602 321l3 1M632 323l1 4M738 323l1 3M826 323l0 -2M889 324l2 -4M718 326l-1 3M815 327l-0 -2M623 330l-1 3M728 330l-4 3M826 330l3 -2M617 333l3 3M863 332l3 -2M721 336l3 3M842 337l2 -5M638 339l-3 5M797 340l2 -5M870 339l4 -3M791 343l1 -3M753 346l3 1M730 349l-4 1M799 348l3 -4M854 349l-0 -5M823 351l5 -2M755 353l-2 1M805 354l4 -1M881 355l3 -3M609 360l-2 5M836 359l0 -3M627 363l6 2M787 364l3 -3M807 364l2 -2M601 365l-3 4M668 367l2 2M782 365l3 -5M849 367l6 -0M600 368l-2 3M670 369l3 1M722 369l-3 2M872 370l2 -5M721 371l1 6M775 373l1 2M832 372l1 -3M881 371l0 -4M607 376l-2 2M643 376l1 6M692 374l-2 2M785 375l1 -6M855 375l3 -3M879 376l2 -3M708 377l-3 0M811 379l1 -4M885 379l1 -3M834 382l3 -5M887 380l1 -5M799 384l2 -1M832 388l2 -2M884 386l-0 -6M824 390l-0 -5M881 389l1 -2M847 393l5 -3M842 395l1 -5M849 399l1 -2M790 402l1 -4M867 401l5 1M795 405l-2 -3M866 404l1 -2M890 404l4 -2M786 407l4 -4M843 409l2 -5M884 409l4 -4M782 410l1 -3M834 412l-2 -5M868 411l4 -2M778 414l1 -2M841 413l3 -4M866 414l-4 -3M885 413l3 -4M780 416l1 -3M872 417l2 -3M883 416l-1 -3M848 421l5 -3M875 421l3 -5M847 424l-0 -3M876 422l2 -1M856 426l1 -4M836 430l3 -4M879 428l3 -1M845 431l2 -3M874 432l-0 -4M854 436l0 -6M826 438l3 -3M854 439l-1 -5M672 442l-4 2M794 441l-0 -2M624 445l-0 4M678 445l-2 1M748 443l5 0M780 443l2 -2M636 448l0 2M685 447l-2 3M713 448l-2 2M761 447l-4 1M792 448l1 -4M631 449l4 4M678 451l-3 0M775 450l1 -2M630 452l-3 2M661 454l4 3M694 454l-1 3M762 452l0 3M674 455l-3 2M694 455l4 0M740 457l-4 1M780 456l3 -2M687 460l-1 3M730 458l2 1M853 460l4 1M799 461l1 -3M836 462l-0 -5M852 461l0 -4M755 466l-4 3M818 466l-1 -3M834 466l3 -1M872 464l4 -3M776 469l3 -2M806 468l1 -4M829 468l3 -5M854 469l1 -4M881 467l1 -3M770 472l2 0M795 472l1 -3M843 471l-1 -5M880 471l0 -5M809 473l-0 -2M843 475l-1 -3M867 474l5 -3M746 477l-5 1M816 477l1 -5M837 478l-1 -4M850 478l4 -5M874 478l2 -5M758 479l-5 1M803 479l1 -2M825 479l-1 -4M751 482l2 4M741 485l1 2M749 489l4 3M772 491l1 5M748 496l-2 3M764 495l-5 3M749 499l-1 5M661 502l6 0M699 501l2 1M746 500l-1 5M650 503l2 2M691 504l-2 1M731 504l-2 5M638 508l-2 3M679 508l-4 2M726 508l1 2M755 507l-1 2M638 509l-1 3M664 510l-4 1M715 509l5 3M598 512l3 4M619 513l1 4M684 514l-4 2M720 512l-5 0M597 516l-2 2M623 517l-5 1M657 517l2 2M694 517l5 2M724 517l-2 2M648 518l6 1M712 518l1 6M741 518l-2 2" stroke="#f79a9a" stroke-width="3.4" stroke-linecap="round" fill="none"/><path d="M804 240l2 -5M849 241l3 -3M889 241l-1 -2M796 242l4 -2M834 242l3 -2M855 244l1 -3M880 243l1 -2M794 246l2 1M875 245l4 -2M802 249l1 -3M840 249l-4 -4M869 248l1 -2M790 253l-1 -3M832 252l5 -2M857 252l2 -2M797 255l5 -0M832 254l4 -2M866 254l4 -3M890 255l4 -4M809 259l2 -4M836 257l1 -3M873 257l3 -5M786 262l3 -1M815 262l2 -1M766 263l-2 4M825 264l3 -2M888 264l0 -3M843 267l2 -5M872 266l2 -3M765 269l2 5M799 269l0 -4M837 269l1 -5M853 271l-0 -2M793 272l-1 -5M831 274l1 -2M868 273l2 -2M884 274l3 1M785 277l2 -6M824 275l1 -3M851 275l1 -4M775 278l-3 3M829 280l2 -2M871 278l0 -2M829 282l4 -0M887 281l4 -2M779 287l1 -4M889 287l4 -1M808 291l1 -2M883 290l2 -3M802 293l4 -3M801 297l2 -3M881 297l1 -2M781 301l-1 -3M824 299l-0 -2M702 302l-2 5M790 303l3 -4M833 303l4 -3M730 307l-2 1M829 305l1 -4M809 310l2 -1M841 308l5 -3M831 313l3 -0M723 314l-2 4M832 315l-1 -2M764 318l-3 1M871 318l2 -4M733 320l3 4M789 322l-2 -5M639 323l-3 1M781 323l2 -2M731 327l0 3M886 327l0 -3M794 329l0 -6M887 330l4 -3M794 333l3 -2M881 334l1 -4M816 337l1 -2M883 335l0 -4M804 338l3 -4M852 340l3 -2M741 343l0 5M799 343l1 -2M855 341l0 -3M762 344l-2 4M846 344l0 -3M889 344l4 -4M875 349l0 -3M889 347l-0 -3M793 351l1 -2M829 350l2 -0M771 353l-1 3M825 355l-1 -2M885 355l2 -5M784 357l5 -3M828 358l-0 -3M890 357l3 -2M691 361l-3 2M830 360l0 -2M872 359l-0 -6M608 364l-2 5M664 362l3 3M770 363l-3 3M816 362l2 -4M625 365l-1 4M663 367l3 2M779 365l2 -4M872 367l2 -4M612 369l-2 2M715 368l2 4M781 370l1 -3M839 369l3 -1M860 370l3 -3M890 369l1 -4M617 371l-2 2M672 371l-0 2M614 375l-3 1M702 374l-1 3M818 375l5 -2M660 378l0 3M703 377l-2 2M785 379l0 -4M853 377l3 -4M696 380l2 3M849 381l2 -3M881 385l-0 -5M857 386l2 -2M799 391l4 -4M865 389l4 -2M854 392l1 -2M858 395l2 -4M823 399l4 -3M764 403l2 2M848 401l2 -3M887 402l-0 -3M787 405l2 -6M879 404l2 -1M797 407l1 -2M867 408l1 -4M793 412l4 -4M846 411l3 -4M884 413l1 -5M831 418l1 -4M766 419l2 5M820 421l3 -5M884 419l2 -4M845 423l1 -3M880 423l-1 -5M834 426l2 -3M871 425l2 -2M826 429l2 -2M852 429l-5 -4M839 433l2 -4M870 432l0 -4M849 436l3 -2M876 436l1 -3M843 439l-1 -5M864 438l2 -5M597 441l-4 1M635 442l1 2M691 441l4 4M737 441l5 1M783 441l3 -4M620 445l-2 0M667 443l-2 5M711 443l1 3M619 447l1 3M687 447l-3 5M603 450l1 3M685 451l6 1M783 449l0 -5M633 454l5 3M724 452l3 2M767 452l-5 0M606 457l4 1M650 456l3 3M705 455l0 2M747 455l1 2M631 460l-2 4M666 458l1 3M780 460l1 -4M768 462l-0 4M808 463l1 -2M826 461l1 -6M856 463l0 -6M877 462l2 -5M890 462l-0 -5M771 466l-4 2M809 464l1 -3M846 464l-0 -3M868 465l5 0M888 464l1 -2M808 468l2 -2M857 467l2 -3M883 469l2 -5M771 470l-2 1M801 470l2 -4M824 471l2 -1M854 472l2 -2M884 470l3 -2M801 475l1 -2M826 475l0 -2M849 475l1 -2M741 477l0 5M803 477l1 -2M824 478l3 -2M877 477l3 -2M747 481l-0 2M773 480l3 1M746 482l-1 5M763 482l-3 2M746 487l-4 2M767 487l-2 0M745 488l-4 4M767 488l-3 2M750 493l2 2M742 494l1 3M775 495l-1 -3M758 497l3 1M599 501l4 3M635 502l2 2M710 501l-1 6M758 501l3 5M621 504l-1 5M687 503l2 1M744 503l1 2M610 507l-5 3M632 507l3 5M659 508l-4 1M699 506l1 4M721 506l-4 2M608 511l-2 2M639 511l-2 4M682 509l1 4M725 510l4 5M606 514l5 1M631 513l-1 4M650 514l3 1M668 513l-6 1M708 512l-5 0M632 515l1 3M651 517l-5 1M706 516l3 2M735 517l2 2M760 516l-3 2M638 519l2 1M664 518l-2 3M692 519l0 4M715 520l-5 1" stroke="#f79a9a" stroke-width="2.2" stroke-linecap="round" fill="none"/><path d="M734 241l3 1M645 244l-1 3M752 243l-0 3M746 245l-3 0M724 249l-0 2M605 255l-0 5M729 255l2 3M667 259l-1 2M626 261l-0 2M719 260l5 3M662 264l1 3M667 268l2 5M742 266l-5 1M638 269l6 2M701 271l5 2M756 269l-2 1M690 274l0 4M632 275l1 2M717 277l4 4M615 279l-5 1M695 278l2 2M633 281l2 4M680 283l-3 4M715 281l-3 2M755 282l-1 2M604 285l-4 3M647 284l-1 2M704 285l-3 1M634 289l-3 2M738 288l-2 2M632 291l0 6M707 291l2 1M865 291l-0 -5M651 293l1 3M869 295l-1 -3M635 297l-1 2M715 296l-2 3M709 299l-2 1M728 304l3 4M868 305l1 -2M731 311l6 1M720 318l2 2M747 322l0 3M691 329l1 2M715 338l-4 4M706 341l-2 1M739 341l3 4M709 349l-2 3M719 350l-2 5M732 351l-2 5M697 360l2 3M755 360l3 2M745 381l1 2M785 381l2 -5M811 381l3 -4M761 385l4 1M789 385l2 -1M854 383l5 -3M764 388l-4 3M799 386l2 -3M748 389l-1 6M795 391l0 -2M847 390l-0 -5M804 392l2 -1M783 396l2 -3M780 398l-0 -5M808 398l2 -3M810 402l3 -3M803 404l0 -2M799 409l1 -5M741 410l-2 1M756 412l-2 5M760 413l2 1M813 414l1 -4M817 417l3 -4M743 420l3 0M813 421l2 -3M634 424l-4 4M664 424l-1 5M744 422l1 3M787 422l1 -5M607 426l-4 1M657 426l4 3M724 427l-3 3M739 425l-1 3M807 427l1 -4M646 428l5 1M710 430l-2 4M752 430l2 4M645 433l3 2M684 431l-5 2M785 433l4 -2M599 435l-2 4M627 435l1 6M670 436l-4 4M720 435l-0 5M803 436l2 -4M816 435l2 -1M631 438l3 1M676 438l3 1M745 437l5 2M818 438l2 -5M811 443l0 -2M814 457l1 -3M810 460l2 0M792 461l4 -1M769 474l-0 2M792 475l3 -3M794 477l-1 -5" stroke="#c8b0dc" stroke-width="3.4" stroke-linecap="round" fill="none"/><path d="M641 241l1 4M711 242l3 2M741 242l3 1M666 246l-3 2M723 246l4 1M641 248l-5 2M701 248l4 3M743 249l3 3M716 253l-1 3M718 256l5 0M656 257l-1 6M723 258l-5 3M721 262l-4 2M629 264l5 1M734 264l-3 1M626 267l3 3M701 266l2 0M752 266l5 3M622 271l-5 2M696 269l3 4M606 274l-3 3M635 272l3 1M694 272l1 2M651 276l-3 1M618 278l-4 2M670 280l-4 1M720 280l-0 3M758 278l-2 5M705 281l-4 3M746 283l0 2M701 286l-1 2M749 284l-1 3M875 285l2 -1M625 288l4 1M688 289l-3 1M660 291l4 4M737 291l-1 3M608 294l3 3M644 293l5 2M697 293l-0 3M878 295l-0 -5M672 297l4 3M623 299l-5 1M669 300l5 1M661 302l2 5M721 307l2 5M865 307l1 -4M721 309l3 1M732 311l-6 1M705 321l-2 4M729 323l5 2M698 326l-0 3M753 330l2 4M707 338l2 2M723 344l-4 3M702 348l-1 2M715 351l2 4M701 357l-2 4M735 358l4 0M744 374l1 2M749 382l6 0M750 385l-0 4M750 387l-2 3M782 390l1 -6M753 393l-1 3M748 396l-0 3M805 396l3 -3M845 397l1 -4M785 398l4 -4M758 401l-1 3M743 404l1 5M811 404l1 -5M801 411l3 -3M819 413l-1 -4M759 416l-1 3M628 421l-5 2M668 421l3 3M797 420l-1 -2M678 424l1 4M716 423l1 2M795 423l3 -3M654 427l1 6M708 425l3 1M601 429l4 2M784 428l4 -1M602 432l-4 1M675 431l2 1M712 433l-1 2M810 433l2 -3M689 436l1 3M786 436l4 -4M671 437l1 3M785 439l-1 -4M807 439l3 -0M801 440l1 -5M820 443l2 -3M788 449l2 -4M816 450l4 -2M817 452l-0 -5M792 460l1 -3M772 462l-5 2M783 464l4 -3M766 470l3 4M780 477l2 -3M799 480l-0 -4" stroke="#c8b0dc" stroke-width="2.2" stroke-linecap="round" fill="none"/><path d="M639 236l-3 1M663 238l4 1M712 238l-1 6M763 238l-4 2M790 238l4 -4M806 237l5 0M840 238l1 -6M884 238l5 -1M679 241l-4 3M755 239l4 2M786 239l3 -1M597 244l2 3M656 244l-3 2M760 242l-4 3M627 245l-2 1M704 246l5 3M626 248l3 2M658 250l-4 1M619 252l-5 2M682 252l1 3M771 253l1 4M710 255l3 3M602 258l2 3M711 257l2 4M753 258l-5 1M669 262l3 3M725 264l-0 6M830 264l4 -2M864 265l2 -3M696 268l0 3M808 267l4 -4M832 266l3 -3M663 269l-4 3M805 271l4 -2M822 272l-2 -5M614 276l-3 3M677 275l2 3M819 277l2 -2M657 278l5 1M815 278l4 -2M865 279l3 -3M783 282l1 -2M865 282l3 -2M602 286l1 3M766 285l4 4M813 284l5 -1M621 287l-5 3M737 289l-3 4M782 289l4 -4M850 288l3 -2M609 292l1 4M806 290l-1 -3M611 295l-2 1M658 295l-4 4M795 295l3 0M622 298l2 4M805 297l-0 -4M878 298l3 -1M741 299l-1 5M795 300l3 -1M863 301l3 -1M742 303l1 5M788 302l1 -2M866 303l2 -3M786 306l4 -4M805 307l2 -1M853 306l-2 -5M748 309l-3 0M810 309l-2 -3M865 308l-1 -4M787 312l0 -4M841 313l5 -3M866 313l0 -5M743 315l4 1M792 314l5 -2M843 315l2 -3M873 315l-0 -3M745 317l-6 0M792 319l0 -3M859 318l2 -4M669 321l2 3M698 321l-4 2M815 320l2 -4M846 320l0 -4M645 325l-5 2M784 324l-1 -5M834 323l2 -2M645 326l-4 0M749 328l3 1M808 327l3 -1M651 330l-2 0M748 329l-5 0M855 329l4 -3M694 332l1 6M786 332l2 -4M836 334l3 -3M876 332l1 -5M667 336l1 2M824 335l-0 -6M881 337l2 -5M679 339l-1 2M790 339l0 -3M826 339l1 -4M850 339l-0 -3M761 342l-2 2M806 343l2 -5M854 341l1 -4M671 344l-5 3M768 345l5 2M810 346l3 -4M845 344l4 -1M873 345l5 -3M660 347l4 3M752 349l4 2M806 347l1 -2M648 352l1 4M688 352l-2 2M758 352l-6 0M819 352l1 -3M878 350l5 0M776 353l5 -3M817 354l2 -4M860 354l5 -2M674 356l1 3M794 356l1 -3M859 358l-1 -5M661 360l-2 1M695 360l1 3M810 360l2 -2M842 359l2 -2M614 363l-5 0M811 364l3 -2M858 364l3 -2M623 365l2 3M820 365l-0 -5M846 366l-1 -5M622 368l-5 2M830 370l1 -5M609 371l-5 2M654 373l4 1M747 373l0 2M834 371l-2 -2M876 372l2 -3M752 376l4 1M850 374l1 -2M780 379l1 -2M873 377l-0 -3M650 382l-4 0M691 382l1 2M801 380l4 -4M863 382l2 -1M610 383l-1 3M652 383l-3 4M687 384l-5 2M702 385l-2 2M729 383l3 5M764 385l2 5M840 385l3 -4M882 383l1 -2M603 387l3 2M631 386l-2 4M656 386l6 1M695 387l-1 4M727 388l-1 3M814 387l1 -4M890 386l4 -3M641 390l4 4M658 391l1 2M687 391l2 4M718 391l4 2M751 389l-1 2M850 389l5 -3M878 389l1 -5M646 392l0 2M699 393l2 1M757 392l2 3M829 392l2 -2M889 392l3 -1M637 396l-1 5M708 396l1 2M733 396l-1 2M768 397l-2 4M828 395l3 -1M876 396l5 -2M662 398l3 2M683 398l3 0M718 398l4 3M830 399l2 -3M876 399l2 -5M624 402l-2 1M711 402l4 2M765 401l3 2M815 402l2 -1M666 405l-5 1M766 405l2 3M823 404l-1 -4M853 405l2 -1M623 407l2 1M675 409l1 6M754 408l3 3M813 409l1 -2M598 410l2 3M698 412l0 5M770 411l-1 4M829 411l2 -3M632 415l-1 2M647 413l-3 2M672 414l-2 3M744 415l-1 3M823 413l3 -3M845 414l3 -4M606 417l-2 6M636 418l3 3M709 417l-0 4M763 417l-2 1M853 417l3 -3M611 419l2 3M643 420l1 5M690 420l-2 2M736 420l-2 1M763 420l2 0M801 419l1 -3M845 420l1 -3M626 424l6 1M688 424l3 2M718 423l-2 5M776 424l-0 -2M829 423l2 -1M601 426l-2 5M638 427l1 4M670 425l-3 2M693 425l-2 3M707 425l-5 1M742 427l-1 2M772 426l3 1M813 425l5 -2M603 428l1 3M625 428l0 3M662 428l-1 2M683 429l2 1M701 428l-3 0M740 430l3 4M761 430l-3 2M779 429l2 -3M858 430l1 -4M635 432l-5 1M672 431l-2 2M743 432l-0 6M760 432l5 1M832 433l-3 -5M606 436l-0 3M668 436l2 2M719 434l4 3M761 436l3 2M806 434l1 -3M607 438l4 1M641 438l-1 5M690 438l0 3M711 438l2 1M765 439l-2 0M813 438l4 -4M608 442l-1 2M641 441l2 4M660 440l1 2M683 440l-3 5M730 442l1 2M779 440l2 -2M824 441l3 -1M840 441l2 -4M887 441l2 -2M607 445l-0 3M658 445l-2 3M714 445l-0 2M739 443l-1 5M791 445l2 -4M838 443l-1 -4M870 445l1 -3M889 444l6 -0M648 446l2 6M672 448l-2 2M714 447l2 0M738 447l-2 2M815 447l-0 -4M843 446l3 -5M877 446l3 -1M610 449l-1 4M648 449l3 1M683 451l-3 0M766 451l-3 4M839 451l1 -3M870 450l1 -5M604 452l1 3M653 454l0 4M685 452l-0 3M727 454l0 3M774 453l2 1M856 453l1 -4M614 455l2 5M666 457l-0 3M696 456l-0 6M725 457l-4 0M804 455l2 -3M832 456l1 -2M849 456l2 -3M875 455l0 -4M604 459l4 1M703 458l-1 3M727 459l-2 0M850 460l3 -0M876 458l3 -3M774 472l3 4M779 489l1 -5M778 500l1 -4M811 502l3 -2M855 500l4 -2M777 503l4 -2M844 503l2 -1M762 506l-1 5M781 507l-0 -5M827 508l1 -5M880 507l1 -5M776 510l0 -3M789 511l-1 -6M838 509l0 -3M871 510l4 -1M769 513l1 3M848 514l0 -3M814 517l1 -5M869 516l1 -2M657 520l-5 2M757 520l-4 1M775 518l-6 0M796 519l3 -3M833 519l4 -2M859 519l2 -2" stroke="#f9b166" stroke-width="3.4" stroke-linecap="round" fill="none"/><path d="M652 236l1 3M682 237l-5 1M701 236l4 3M740 237l-2 4M785 237l3 -3M815 237l1 -3M848 238l3 -3M881 238l2 -3M655 240l0 4M747 240l3 0M762 239l4 3M815 239l2 -3M845 239l4 -1M624 242l-1 4M672 242l-1 3M766 243l-2 2M699 247l1 4M768 247l1 2M746 248l-1 6M607 253l-2 3M657 252l-4 2M686 253l-3 5M752 253l-3 4M642 256l-1 2M693 256l-1 2M624 259l1 3M762 259l2 1M737 260l-2 3M856 262l2 -5M673 264l2 2M749 265l-4 1M804 264l5 -0M670 268l5 3M802 267l1 -5M882 266l-1 -2M788 270l2 -2M858 270l1 -6M681 274l2 2M711 272l2 1M845 273l2 -3M696 275l2 2M818 275l1 -2M667 279l-3 4M844 278l-0 -3M880 279l3 -3M743 281l2 4M850 282l3 -4M651 286l-3 1M770 284l-6 1M832 284l-0 -4M655 287l2 0M838 289l2 -3M607 292l-4 3M777 290l5 -3M858 291l2 -2M682 294l-2 6M815 295l1 -2M879 295l2 -1M729 298l2 2M796 296l1 -3M889 297l2 -3M756 301l-3 4M836 301l3 -5M854 301l1 -2M889 299l3 -5M812 304l-3 -4M851 303l-1 -3M651 307l-1 2M769 307l-0 3M880 306l1 -6M761 308l0 6M795 309l-0 -4M847 309l3 -0M646 313l4 3M752 312l5 2M783 313l1 -5M868 311l2 -6M752 316l2 4M816 314l0 -3M856 315l0 -2M685 319l4 3M795 318l-1 -3M826 317l2 -4M865 317l2 -4M835 320l4 0M852 320l-0 -6M887 321l1 -3M806 323l5 -3M851 323l2 -4M699 328l-1 2M771 326l1 3M812 327l2 -6M832 327l2 -2M857 327l-1 -4M759 329l-1 6M833 329l4 -0M854 330l1 -3M666 334l-1 5M783 334l3 -5M857 332l0 -4M761 337l3 0M805 335l2 -1M857 337l2 -3M752 339l2 1M811 340l1 -2M647 342l3 3M694 343l0 3M811 341l0 -4M845 342l4 -3M657 344l-1 5M782 346l2 -4M805 344l1 -5M858 345l-3 -4M657 347l-3 3M780 349l-2 -5M807 347l4 -4M846 349l2 -3M653 350l-4 3M754 351l-2 3M801 350l1 -2M854 351l2 0M678 355l-2 1M780 354l4 -3M855 355l3 -2M656 357l2 2M697 356l2 5M786 358l1 -4M814 356l4 0M843 357l3 -3M880 356l4 -2M677 361l-1 4M786 360l0 -3M849 359l1 -6M622 364l1 3M728 364l-5 2M831 363l-1 -3M855 363l1 -5M671 366l1 5M814 365l5 -1M854 365l2 -1M676 370l-1 3M813 368l3 -4M667 372l5 1M769 371l-3 0M826 371l5 -3M863 371l-4 -2M648 375l3 1M813 376l0 -2M838 376l4 -3M853 376l4 -4M642 377l-3 1M802 379l2 -4M829 379l2 -5M846 378l4 -0M638 380l2 2M683 381l-5 0M720 381l0 3M821 380l2 -1M845 380l2 -1M617 385l-0 2M647 384l-1 3M673 384l6 2M713 385l-1 2M744 384l-1 2M819 384l2 -3M608 387l3 4M637 386l-4 2M709 388l2 2M760 387l-1 2M810 387l3 -3M838 387l1 -2M603 389l6 0M669 391l-0 5M725 390l1 1M776 391l2 -5M845 390l2 -5M620 392l-4 0M652 394l1 2M689 392l2 3M706 394l-5 3M738 394l-3 5M778 392l2 -5M839 393l-0 -4M871 394l-1 -3M643 397l1 2M657 397l3 0M681 395l4 3M741 397l-1 3M774 396l-3 0M849 395l3 -1M883 396l4 -2M607 399l-4 3M693 399l-3 3M749 399l5 1M803 398l2 -6M883 399l2 -3M635 401l0 3M675 403l5 2M702 401l-4 2M774 403l2 1M841 402l1 -2M618 406l-1 5M691 406l2 4M732 406l-3 1M851 405l2 -2M645 407l-2 5M687 409l-5 2M745 408l-3 1M602 411l-2 5M637 411l-4 2M732 410l1 4M839 411l2 -2M677 414l-2 2M733 415l-1 2M765 415l-2 0M818 414l3 -4M853 415l2 -1M675 416l-2 4M805 417l1 -3M838 417l0 -2M859 417l3 -1M682 421l-3 2M744 421l-3 4M850 421l-1 -4M620 422l-0 3M671 424l2 5M710 424l5 3M742 423l2 2M766 422l2 4M790 422l4 -1M603 427l1 6M676 427l5 2M755 426l-3 1M811 427l1 -3M842 426l3 -3M651 429l-1 4M672 429l-2 3M729 430l2 5M789 430l1 -2M844 430l5 -0M612 433l0 3M641 431l-3 0M665 431l-0 3M722 431l0 3M764 431l-4 4M779 433l-0 -5M800 432l5 -2M840 432l2 -2M621 434l-4 3M649 436l1 2M712 436l-3 2M747 434l-4 1M775 434l3 1M836 434l4 -4M599 439l3 4M622 438l-1 2M683 437l-0 2M720 437l-3 1M733 439l1 4M776 437l0 -3M612 442l-1 5M715 440l3 3M746 441l-2 2M766 440l1 5M825 442l3 -2M857 442l2 -3M631 444l-5 3M660 443l-1 5M710 445l-2 6M752 445l2 0M786 443l-1 -6M858 443l-0 -2M606 448l2 1M641 446l-4 3M708 448l2 4M750 447l-5 1M777 446l2 -6M834 448l-0 -4M862 447l5 -1M618 450l4 1M663 451l-2 1M695 450l-1 5M716 451l-0 5M727 449l3 3M747 450l-1 5M802 451l-0 -3M831 451l1 -2M854 450l-0 -6M882 451l1 -5M638 453l-4 2M669 454l-5 2M722 452l0 3M771 452l-2 5M795 452l2 -5M834 452l4 -2M850 454l2 -1M878 454l4 -3M597 456l-2 3M626 455l-3 1M675 456l-5 1M770 456l0 3M788 456l-2 -4M857 457l2 -3M884 456l2 -4M639 460l0 2M686 460l2 4M737 459l-1 2M775 459l1 -4M857 460l-2 -3M880 460l2 -4M778 466l0 -3M767 475l0 6M762 487l1 4M766 497l-3 1M782 501l1 -4M845 501l4 -3M781 503l4 -2M818 503l3 -5M817 506l2 -2M853 508l3 -2M766 511l-1 4M805 511l0 -5M850 509l-1 -4M776 514l2 -1M808 512l4 -3M832 514l2 -4M855 513l3 -4M787 516l-0 -5M810 515l2 -5M845 516l-1 -5M881 517l4 -3M732 520l1 5M799 519l2 -3M843 519l1 -3M881 519l2 -2" stroke="#f9b166" stroke-width="2.2" stroke-linecap="round" fill="none"/><path d="M860 243l1 -2M608 259l-2 3M627 268l-5 1M802 281l1 -5M874 287l1 -6M789 295l3 -4M735 300l-2 4M634 302l3 2M669 304l-0 2M634 307l-5 2M686 306l0 3M607 309l2 2M665 308l-0 4M618 311l-1 5M686 311l-5 1M618 316l5 2M676 315l2 2M653 318l1 3M783 318l2 -2M623 324l-3 4M602 326l2 1M867 327l-0 -3M637 329l2 5M865 329l0 -3M624 333l-4 2M829 335l4 -4M620 339l-2 4M620 342l3 2M616 344l4 4M785 347l2 -3M627 355l-1 5M646 359l4 3M762 366l-1 5M795 370l2 -2M818 373l-1 -4M787 379l-1 -3M626 394l-2 2M757 399l1 2M658 405l4 2M641 413l5 1M806 426l2 -3M876 431l3 -5M878 439l-0 -2M852 447l1 -5M671 460l4 1M603 463l5 0M625 461l2 5M658 463l-2 2M698 463l-3 4M717 461l0 3M738 463l2 5M598 465l1 2M615 465l-0 6M637 464l2 2M674 464l1 6M702 465l1 5M731 464l3 4M745 466l3 5M624 469l0 6M663 469l3 1M686 468l-2 1M706 467l2 3M725 469l-3 1M738 467l-4 2M757 467l2 1M625 472l-3 4M642 472l5 3M670 471l-3 4M696 470l-2 5M711 471l-1 3M739 471l-2 1M605 473l-0 3M636 475l-4 0M661 474l-1 2M694 474l-2 2M708 473l-0 3M729 475l-2 3M760 475l1 2M614 477l-1 5M635 478l-2 1M675 477l4 1M693 476l-3 5M723 477l4 1M737 477l-1 5M597 479l-3 1M624 480l-3 5M655 479l-1 2M682 479l-4 1M714 481l-0 3M612 482l-5 0M633 483l-4 3M663 482l-2 3M679 484l-3 5M701 484l-0 5M714 483l-4 4M729 484l-2 1M599 486l-3 3M622 486l1 2M640 485l-3 1M659 487l1 4M673 485l-2 3M697 486l-2 5M734 485l1 3M606 490l-4 2M624 488l-6 1M661 488l2 5M688 488l1 6M721 488l-4 1M736 490l-2 3M613 492l2 4M638 493l1 4M677 493l3 5M716 492l1 5M736 493l-1 4M605 496l-2 2M627 496l2 5M668 495l4 2M693 496l-0 2M719 496l2 3M729 496l2 1M603 498l1 4M630 497l4 4M657 498l-4 1M681 499l3 1M706 497l-3 3M724 497l3 3M739 497l0 3M702 500l2 5M846 516l3 -4" stroke="#fdf7a8" stroke-width="2.2" stroke-linecap="round" fill="none"/><path d="M684 241l1 3M626 265l-2 4M782 280l-1 -2M879 292l1 -3M600 301l1 5M713 304l2 5M612 307l2 2M673 306l-0 4M672 308l-4 4M616 312l-5 0M598 316l4 1M644 314l-3 2M838 315l3 -2M632 318l-3 2M612 320l-6 2M655 321l-3 0M882 321l3 -3M664 324l-3 2M878 323l1 -3M864 326l0 -4M649 330l5 1M802 331l3 -2M662 333l4 4M870 333l4 -4M658 336l-6 0M610 338l1 3M874 339l-2 -5M829 342l1 -5M823 345l-4 -4M611 349l-1 3M651 348l5 3M616 358l2 5M797 361l3 -3M882 363l-1 -3M762 369l1 2M820 368l2 -2M795 373l3 -3M635 380l-3 0M633 385l-1 2M698 387l4 0M675 411l2 3M712 415l2 2M727 434l4 0M612 446l3 1M839 457l1 -4M652 460l2 5M598 463l-5 2M634 461l2 3M646 462l-3 2M664 461l-1 6M681 462l-5 1M699 461l1 5M730 463l-3 1M757 461l-2 3M634 466l-2 2M651 465l-0 3M666 465l-3 1M684 464l-4 1M709 466l-3 0M733 466l3 4M605 469l5 2M622 469l1 4M646 468l4 2M670 469l2 1M703 468l-3 2M747 468l-2 2M609 471l-4 2M632 471l0 4M655 471l1 3M680 472l5 2M699 472l5 1M726 471l0 2M864 472l2 -5M615 473l5 3M634 473l-0 5M659 473l-0 2M678 474l6 1M705 473l3 3M734 474l2 3M757 475l-4 1M611 476l-1 3M638 477l-1 2M660 476l-4 1M672 476l-4 4M704 476l-5 1M721 476l5 1M608 479l2 3M627 479l-3 5M646 479l-5 1M668 481l-2 3M694 481l-3 4M711 480l-1 3M732 479l1 3M602 482l3 1M617 483l1 6M640 484l3 3M666 483l-4 2M710 483l-4 4M610 486l-0 2M632 486l-3 2M675 487l-2 5M703 487l-3 0M721 485l5 2M603 490l4 2M631 490l-0 4M649 488l1 3M675 489l-1 2M696 490l4 2M715 489l-2 2M608 493l3 2M627 493l-4 2M650 493l-2 1M673 492l-2 1M687 492l4 3M707 492l-0 4M733 492l3 2M609 495l-2 0M637 496l2 2M656 494l-3 3M669 494l-4 1M685 496l1 5M715 496l1 3M607 498l5 2M635 499l-0 6M655 498l-5 3M679 498l-1 3M702 497l3 2M614 500l-3 1M729 507l-3 1M724 520l-2 4" stroke="#fdf7a8" stroke-width="3.4" stroke-linecap="round" fill="none"/><path d="M800 243l3 -3M782 246l1 -5M843 245l3 -0M885 246l-0 -3M830 249l3 -5M881 249l2 -1M820 253l3 -2M850 251l4 -3M838 255l1 -3M847 259l-1 -5M821 266l-2 -5M761 273l6 0M848 277l5 -1M795 279l3 -4M824 284l2 -0M817 289l2 -3M782 292l-1 -5M835 290l2 -3M821 294l3 -2M787 296l1 -2M841 298l1 -3M795 307l3 -5M788 319l1 -2M797 321l-0 -3M789 331l2 -6M867 332l2 -1M816 342l2 -4M825 349l-1 -6M833 351l0 -3M822 357l1 -4M617 380l4 0M653 381l-5 1M710 382l1 4M682 384l3 0M651 386l-5 1M702 388l-4 1M614 391l-4 3M678 389l2 5M630 394l1 6M667 394l6 1M610 397l-1 6M685 395l-1 4M620 400l-1 2M701 398l5 1M735 398l-5 2M644 402l-1 2M671 403l4 4M715 402l-3 2M605 404l3 0M643 406l-1 3M677 405l-2 1M702 405l-1 3M774 404l-2 5M626 407l-4 2M638 409l-4 2M674 409l-2 1M724 409l2 3M611 411l5 3M641 411l-2 3M689 412l-0 5M737 411l-4 0M622 413l0 4M670 413l-3 2M723 415l-4 1M644 416l1 2M659 418l-0 5M697 416l-3 4M738 417l3 1M698 420l1 4M729 419l-4 1M818 444l4 -4M847 451l-2 -3M790 459l0 -2M850 467l3 -3M838 474l-1 -4M699 486l-1 3M668 493l-2 2M611 498l-2 1M784 500l2 -1M862 501l1 -5M834 504l4 -4M879 504l2 -4M795 506l3 -3M821 506l2 -1M657 511l2 1M833 511l1 -2M780 514l1 -2M876 512l4 -0M822 515l5 -3M773 519l2 1M848 520l2 -2" stroke="#aee08a" stroke-width="3.4" stroke-linecap="round" fill="none"/><path d="M801 243l2 -2M815 246l1 -5M790 250l2 -4M882 250l1 -3M884 253l1 -3M849 255l-1 -4M782 258l2 -1M833 259l4 -2M879 259l3 -0M849 260l2 -6M884 264l-1 -3M863 268l1 -5M853 278l-0 -3M845 284l0 -3M850 295l2 -2M621 307l3 3M791 310l2 -4M822 316l1 -4M885 323l3 -2M781 332l-0 -5M791 336l-1 -2M880 343l0 -3M870 350l1 -4M878 353l2 -1M806 370l1 -2M602 381l2 0M729 382l5 3M605 383l-4 0M679 385l-4 3M597 386l-1 2M689 388l0 2M599 390l-1 5M665 389l1 2M727 391l-4 1M602 393l-3 3M674 394l-1 4M734 392l-3 1M886 393l3 -4M615 395l1 2M689 395l2 2M703 395l1 4M634 398l-2 2M667 400l0 2M696 399l-3 5M606 402l4 3M646 401l-1 6M689 402l4 4M734 403l2 2M626 405l0 2M654 404l4 4M713 406l0 2M863 405l1 -2M681 408l2 4M715 409l-2 6M811 407l2 -4M632 412l-1 5M666 410l3 3M682 411l2 5M705 410l1 4M739 411l-1 3M625 414l-3 2M691 415l-5 2M721 415l3 3M627 416l5 2M693 417l-3 4M724 416l3 3M635 419l-1 3M823 419l1 -5M804 428l3 -1M824 439l4 -1M793 445l1 -2M801 447l2 -5M875 453l-1 -5M797 462l1 -3M658 467l1 4M815 471l1 -5M794 479l1 -3M877 496l4 -0M794 501l2 -5M842 500l1 -5M761 503l-3 0M798 503l3 -4M826 503l0 -2M851 505l5 -2M886 504l2 -4M860 506l-3 -5M817 509l2 -1M863 509l2 -1M789 514l2 -1M840 514l4 -3M864 513l2 -5M888 514l2 -4M778 516l1 -2M819 516l-2 -2M808 518l0 -3" stroke="#aee08a" stroke-width="2.2" stroke-linecap="round" fill="none"/><path d="M610 342l-3 0M637 352l2 2M715 367l-4 4M791 409l3 -2M807 480l2 -2M844 480l2 -4M874 481l3 -3M793 484l3 -4M818 484l-1 -5M859 484l-1 -3M874 483l1 -3M782 486l1 -3M808 486l5 -3M819 485l3 -4M845 485l2 -3M859 485l2 -2M795 490l1 -3M816 488l2 -5M833 489l3 -3M849 488l4 -3M870 490l0 -2M781 493l0 -2M836 492l0 -3M852 491l5 -1M884 491l2 -1M801 496l2 -2M834 495l3 -1M881 496l2 -3M802 497l1 -2M825 497l-0 -3M607 501l3 4M663 501l2 0M696 501l-2 2M722 500l-6 1M809 500l5 -3M636 505l0 4M724 504l4 4M660 507l6 1M602 510l1 3M668 510l-4 2M710 510l-1 4M638 514l-4 2M715 512l-3 0M616 515l1 5M701 515l6 1M602 519l4 3M731 518l5 0" stroke="#ffffff" stroke-width="3.4" stroke-linecap="round" fill="none"/><path d="M630 352l2 3M703 370l-3 1M794 402l1 -4M787 480l3 -2M856 481l2 -2M787 482l1 -4M814 483l4 -1M828 482l-1 -3M840 483l-1 -5M889 482l2 -1M795 485l3 -1M834 487l1 -5M872 485l4 -5M784 489l2 -5M823 488l-0 -3M867 490l-1 -5M789 493l2 -1M810 492l-1 -5M833 493l-1 -2M867 491l1 -2M788 494l3 -4M805 496l1 -4M831 494l2 -5M858 495l1 -3M887 495l3 -4M794 497l2 -3M817 498l1 -6M844 498l-0 -5M864 497l2 -4M887 498l-1 -2M645 502l-4 4M846 500l4 -1M629 503l-2 5M662 504l4 4M698 503l-3 3M737 503l-1 4M755 504l-1 2M648 507l-5 2M705 507l3 3M759 507l-1 4M699 509l3 2M750 511l4 2M661 513l2 2M727 514l4 4M756 514l4 2M641 517l-2 3M687 516l4 3M623 519l3 3M688 520l-2 1" stroke="#ffffff" stroke-width="2.2" stroke-linecap="round" fill="none"/><path d="M870 236l5 -3M795 245l2 -3M798 254l4 -3M818 265l2 -2M857 275l2 -6M816 281l2 -2M813 290l0 -3M811 296l3 -4M818 300l2 -5M806 310l4 -4M799 319l3 -0M852 323l1 -2M818 330l5 -2M869 337l3 -3M810 348l0 -4M826 360l0 -4M890 364l1 -4M869 369l-2 -5M797 382l-0 -5M732 388l-4 5M852 391l3 -1M799 397l5 2M827 398l3 -3M871 402l1 -3M803 415l5 -1M855 419l1 -2M870 423l5 -3M827 431l4 -2M853 441l3 -3M835 444l3 -0M837 454l1 -2M831 460l-1 -4M815 465l2 -3M848 472l3 -3M819 481l2 -2M840 487l3 -1M807 489l0 -4M828 496l-0 -4M840 497l2 -2M876 502l1 -3M830 508l4 -4M839 518l5 -2" stroke="#2a78c0" stroke-width="1.2" stroke-linecap="round" fill="none"/><path d="M828 241l1 -3M875 241l3 -5M805 244l2 -5M839 244l2 -3M884 243l3 -1M808 245l1 -3M836 247l4 -3M877 247l0 -3M795 249l1 -4M824 250l2 -1M866 250l3 -3M794 251l3 -4M838 253l3 -5M889 251l-1 -5M804 254l3 -1M834 256l1 -2M872 254l3 -5M795 258l5 -2M850 258l3 -2M790 262l3 -1M843 261l5 -3M879 260l0 -2M783 264l0 -3M813 264l4 -3M870 264l0 -4M797 266l-1 -6M878 267l-0 -3M820 269l0 -4M844 271l1 -6M870 271l2 1M765 272l-1 4M788 272l3 1M810 272l-0 -2M849 274l2 -5M789 277l-1 -6M833 277l-2 -5M870 276l1 -4M785 280l3 -5M849 280l4 -4M765 281l4 2M807 281l4 -4M844 283l2 -4M834 284l2 -3M881 285l3 -5M809 287l-1 -5M842 289l-2 -6M828 290l6 -1M812 294l3 -5M764 298l1 3M792 297l1 -2M820 299l1 -4M838 301l0 -3M800 304l2 -3M857 304l2 -2M771 307l-3 0M822 305l5 -1M787 308l1 -3M855 309l-0 -4M801 313l1 -2M871 312l1 -4M778 314l3 -4M828 316l-1 -5M735 319l-0 3M842 319l3 -3M718 321l4 3M713 325l0 4M792 324l3 -0M855 325l4 -3M613 326l3 1M738 327l2 1M827 327l-0 -2M706 331l3 0M782 329l3 -4M829 330l-0 -3M630 332l2 2M883 334l-1 -4M798 336l3 -0M859 337l1 -2M708 338l3 1M815 338l2 -3M878 340l-1 -6M795 342l2 -1M801 346l4 -1M733 347l-3 0M820 348l2 -3M865 347l0 -3M865 351l3 -5M758 353l-4 1M811 353l-2 -5M804 357l-0 -4M793 359l1 -3M845 359l2 -3M661 363l-4 4M789 364l1 -2M825 364l0 -3M610 366l2 2M709 365l-1 3M783 365l1 -2M869 367l3 -4M645 370l-4 2M682 369l-0 5M808 370l0 -3M882 370l-1 -6M736 373l2 1M780 372l-1 -3M857 372l2 -3M884 372l-0 -5M609 375l3 1M662 376l2 2M710 374l-0 3M788 375l2 -3M860 375l0 -2M882 376l1 -3M723 377l2 2M815 377l2 -3M723 380l0 2M848 381l2 -0M780 383l4 0M862 385l3 -5M834 387l-0 -3M887 388l1 -2M837 389l2 -3M780 394l2 -3M850 394l3 -1M847 396l2 -4M854 399l-0 -4M834 402l2 -2M877 403l3 -3M829 406l2 -4M872 405l2 -3M761 407l-2 2M794 408l2 -2M850 408l4 -2M885 409l1 -2M785 410l-2 -5M855 412l2 -2M878 410l5 -2M784 413l5 -0M857 414l2 -3M870 415l-1 -4M889 415l2 -4M789 418l-2 -4M873 418l-0 -5M887 418l2 -2M860 420l2 -3M877 419l5 -3M863 424l2 -1M883 424l3 -1M861 427l0 -5M850 428l1 -3M883 430l-0 -3M853 432l3 -2M881 433l-3 -2M867 434l2 -4M841 439l4 -4M868 437l-0 -4M709 441l1 4M889 440l1 -6M629 443l3 2M694 445l2 2M755 445l-4 3M785 444l5 -1M654 446l-0 4M694 447l-0 2M718 447l-2 2M766 447l-5 2M597 450l-2 3M633 450l2 5M713 450l-5 0M797 450l2 -1M641 452l-2 1M666 454l3 4M706 454l4 1M770 453l-2 1M681 457l3 3M721 455l2 4M752 457l3 2M789 457l3 -5M700 458l-0 3M744 460l-0 3M746 463l-1 2M805 461l3 -5M841 461l5 2M859 461l-0 -4M757 465l4 1M821 464l2 -3M843 465l2 -3M877 464l2 -3M785 468l3 -4M811 469l3 -1M836 469l2 -4M861 467l2 -3M887 468l1 -2M778 471l1 -4M809 471l3 -3M851 471l2 -4M746 473l2 4M810 475l1 -2M855 474l2 -2M874 473l-0 -5M770 478l-2 2M830 478l-0 -4M842 477l3 -4M863 477l2 -0M887 476l5 -3M764 479l-2 4M812 480l3 -2M831 479l-2 -4M756 484l4 1M747 487l-1 2M753 488l1 5M776 492l1 -4M750 496l-4 1M771 496l2 5M779 497l-1 -3M668 501l1 5M724 501l3 3M752 500l-0 5M671 504l-2 0M709 504l-2 1M608 506l-3 4M640 506l0 6M684 506l3 0M743 508l-1 2M758 506l2 0M644 511l-1 4M672 510l6 1M731 511l4 3M601 513l6 1M672 513l2 1M691 514l3 4M742 512l2 3M608 517l-2 3M626 516l1 5M678 517l5 2M704 516l2 0M740 516l5 3M667 518l1 5M717 518l-4 3M750 518l-3 2" stroke="#f79a9a" stroke-width="3.4" stroke-linecap="round" fill="none"/><path d="M807 241l3 -3M865 241l3 -0M762 242l-3 1M807 243l5 -3M846 242l2 -3M868 244l4 -3M887 244l1 -3M800 247l-0 -2M880 245l4 -3M817 248l4 -3M844 249l1 -4M872 248l3 -5M804 251l3 -3M835 252l1 -3M865 252l3 -4M803 255l1 -4M844 254l1 -4M874 256l3 -4M791 259l0 -6M813 257l3 -4M840 257l-0 -4M887 259l1 -2M796 260l2 -1M827 260l0 -3M776 265l1 -4M860 265l1 -4M794 266l3 -3M847 267l1 -3M887 268l1 -2M774 270l0 6M810 271l4 -3M842 271l2 -3M881 271l4 -4M803 274l4 -4M839 272l2 -3M872 273l1 -2M889 272l5 -3M802 277l-2 -4M830 276l1 -3M854 277l1 -4M806 278l5 -2M834 278l1 -3M788 282l4 -4M840 281l1 -3M781 285l6 -1M821 287l5 -2M776 290l2 -2M811 291l3 -3M885 291l2 -5M833 294l3 -3M809 297l-0 -3M882 297l3 0M786 300l1 -2M845 300l4 -4M725 302l1 2M801 303l-0 -3M840 302l3 -5M778 307l4 -1M832 306l6 -1M821 310l2 -2M880 310l1 -3M838 311l2 -3M767 315l-3 1M836 314l5 -3M820 318l-1 -4M881 317l2 -2M768 320l-5 2M798 322l3 -5M704 325l-3 4M796 323l0 -5M732 328l1 3M627 331l-1 3M838 331l3 -2M888 331l-0 -4M820 333l2 -2M726 335l-2 1M838 336l3 -5M621 340l-3 1M820 338l5 -2M863 340l-1 -2M776 343l1 -6M813 341l1 -5M860 343l3 -1M798 344l3 -3M852 346l3 -5M724 347l-3 1M879 349l2 -3M743 352l-2 1M805 351l-2 -4M836 350l3 -4M777 353l0 -4M863 353l2 -2M890 355l2 -5M797 357l4 -3M839 358l3 -2M606 361l3 1M734 359l2 4M848 359l2 -5M886 359l0 -2M620 364l4 3M669 362l5 2M780 364l1 -2M829 364l2 -3M644 366l-1 3M693 367l-0 3M788 367l3 -1M874 367l1 -4M630 370l-0 5M731 369l-1 3M784 369l-1 -3M845 369l1 -2M862 369l1 -5M597 372l2 2M639 371l-5 0M794 373l1 -5M657 375l4 1M722 374l-3 0M867 376l2 -2M670 378l1 2M718 377l-1 3M789 378l3 -2M869 379l4 -4M778 380l-0 -3M866 380l0 -3M782 387l4 -1M874 388l3 -3M827 389l1 -5M783 394l3 -3M787 397l2 -3M881 397l3 -4M863 400l-0 -5M784 401l0 -3M863 401l1 -2M889 402l0 -4M838 404l1 -5M886 405l2 -4M833 409l1 -3M876 409l2 -4M799 411l2 -2M875 410l2 -3M773 417l-3 0M845 418l2 -2M776 420l-1 -2M841 421l2 1M885 420l1 -2M854 424l-0 -4M886 424l2 -1M846 425l-2 -3M881 426l2 -4M828 428l2 -3M873 429l2 -2M849 433l2 -4M885 431l2 -2M861 434l1 -3M879 436l1 -2M855 437l2 -0M874 437l1 -3M609 441l2 5M667 440l3 4M706 440l1 3M751 441l-1 2M796 442l4 -3M634 444l-4 1M674 444l0 3M733 443l2 5M629 446l6 2M741 447l-5 2M607 449l-2 4M708 449l3 0M791 449l5 -3M691 454l-3 3M742 452l2 4M787 453l3 -2M630 455l5 2M653 456l2 1M717 456l2 4M597 460l4 4M635 460l5 3M698 458l3 2M799 459l2 -3M779 461l-0 -3M810 461l4 -4M828 462l2 -1M864 463l3 -5M881 463l5 -3M760 466l1 3M790 465l4 1M811 465l-2 -5M853 465l3 -2M875 466l1 -4M746 467l-2 2M823 468l2 -3M869 468l4 -3M755 471l-2 0M784 471l2 -5M804 472l4 -3M830 471l-1 -6M855 471l1 -2M888 470l-1 -5M806 475l1 -6M832 474l2 -4M853 474l1 -5M749 477l-1 6M804 477l4 -2M826 476l3 -2M881 476l2 -2M752 481l3 1M859 479l3 -4M748 482l-3 0M766 482l1 2M755 485l-2 2M769 487l3 1M751 490l-4 3M771 489l-4 1M754 491l2 4M758 495l2 2M745 499l3 2M760 499l5 1M601 501l-2 5M639 502l3 0M712 502l-3 1M759 500l-1 4M666 504l1 6M699 503l-3 3M748 505l4 1M614 506l-5 0M635 506l1 2M665 506l1 3M709 508l-1 3M736 508l-3 5M610 509l-3 3M645 509l2 4M697 510l1 2M739 511l1 4M617 512l0 4M635 513l-3 4M652 513l2 2M671 513l3 0M725 512l-1 4M633 515l-3 4M654 517l-4 3M714 517l-2 3M742 516l2 5M614 519l-1 1M647 519l3 0M671 519l-2 1M698 519l-6 1M720 519l4 1" stroke="#f79a9a" stroke-width="2.2" stroke-linecap="round" fill="none"/><path d="M603 243l0 5M701 244l-4 1M639 246l-3 2M749 247l0 3M704 252l-4 1M627 255l-4 4M598 258l-4 1M704 259l-4 0M639 262l5 3M724 262l4 4M602 267l3 3M708 267l2 0M746 266l4 0M657 270l1 3M708 271l4 4M640 273l-1 3M696 273l2 2M636 276l-5 3M726 277l-3 1M624 278l-5 0M748 278l2 5M637 281l3 0M685 282l-4 1M730 282l-3 2M860 281l3 -2M608 285l1 2M657 284l0 3M718 285l3 1M647 287l2 2M759 288l0 5M654 292l2 3M729 291l4 2M867 290l3 -4M686 295l-4 4M871 293l3 -2M649 298l-0 5M860 298l1 -6M727 300l1 2M733 302l3 2M876 307l3 -2M862 313l1 -2M725 318l2 1M749 324l3 4M742 329l-3 2M720 340l1 6M710 341l4 4M707 346l5 2M711 349l-2 2M720 351l-3 3M717 355l-0 4M700 359l-5 1M747 362l-1 4M754 381l2 5M790 382l5 -3M817 381l1 -2M769 385l4 1M803 385l1 -4M743 386l-2 6M774 387l2 4M809 388l-1 -2M758 390l2 5M808 391l-0 -3M776 394l2 -6M807 392l2 -2M744 398l5 3M790 399l4 -4M848 399l2 -2M754 405l1 6M808 405l2 -2M806 407l1 -5M746 412l-4 0M810 411l3 -1M791 413l-0 -2M744 418l-4 1M602 421l-2 5M783 419l-1 -2M610 423l2 5M645 423l-3 1M666 424l4 1M755 424l4 3M809 422l1 -5M611 425l1 3M668 427l2 2M727 425l5 3M785 425l2 -4M613 429l-5 1M677 429l-2 2M716 430l3 3M781 429l1 -2M661 433l5 1M707 433l3 0M793 432l1 -4M612 435l4 3M637 436l5 2M679 435l3 1M752 436l5 2M808 435l0 -4M820 435l-1 -4M657 439l-2 3M688 439l5 0M749 437l1 2M819 439l-2 -2M814 444l0 -3M817 457l1 -5M817 458l3 -0M787 467l2 -4M778 475l3 -1M797 474l4 -3M798 477l3 -2" stroke="#c8b0dc" stroke-width="3.4" stroke-linecap="round" fill="none"/><path d="M688 241l3 2M714 244l3 1M745 244l-2 2M696 246l4 4M739 246l3 4M654 248l1 3M702 248l-5 2M635 253l-2 2M610 255l2 1M732 255l2 3M659 259l1 4M735 259l2 3M746 260l5 0M655 265l2 0M597 268l0 4M650 268l4 2M726 268l1 6M600 270l1 4M624 270l-1 4M742 271l-5 0M609 273l1 5M637 272l-5 2M721 274l3 1M684 277l-3 2M633 279l0 3M702 280l1 2M726 279l-1 2M609 281l-2 5M724 282l-4 0M748 283l0 3M715 284l0 2M860 285l0 -2M598 288l-2 4M640 287l-5 2M704 289l3 4M678 290l4 3M738 290l-5 2M614 293l-3 0M647 293l4 1M703 294l0 3M616 298l-2 1M705 297l-1 3M645 299l2 2M700 299l3 4M701 303l-1 2M726 306l5 2M870 306l2 -3M872 308l4 -4M721 316l5 2M744 322l0 4M735 324l3 1M713 326l0 4M690 332l-0 5M717 338l-2 2M726 344l-1 4M717 349l2 4M737 350l3 5M714 356l3 4M726 359l-3 4M749 375l-1 2M752 381l3 1M813 385l4 0M805 386l1 -5M802 390l2 -2M791 393l1 -2M755 395l1 5M812 396l1 -4M856 397l-1 -4M787 400l2 -2M781 403l3 -2M745 404l-2 5M816 405l3 -3M816 411l5 -0M748 417l-1 5M800 416l3 -4M632 421l-1 5M755 419l3 1M818 420l6 -1M682 424l-4 0M724 423l1 4M614 425l1 3M665 427l-3 2M780 426l-0 -2M617 429l3 2M786 428l4 -2M622 433l-2 3M691 431l-0 5M716 432l-5 0M644 436l2 1M690 435l-2 3M794 434l1 -5M684 437l2 1M786 437l2 -5M811 438l3 -3M805 441l2 -5M807 447l2 -2M800 449l3 -1M803 452l2 -4M798 456l4 -2M801 458l1 -5M783 462l0 -5M786 466l0 -3M786 471l6 -2M790 476l1 -2" stroke="#c8b0dc" stroke-width="2.2" stroke-linecap="round" fill="none"/><path d="M646 237l3 3M667 237l-4 1M716 238l2 1M768 238l0 4M793 237l2 -5M818 236l0 -5M845 237l2 -6M614 240l3 0M690 239l-0 4M776 241l-0 -2M794 239l1 -2M612 244l0 5M686 244l1 5M599 246l-3 1M646 247l-2 1M726 245l2 5M629 248l-2 6M670 250l2 1M621 251l2 1M742 251l2 3M600 254l4 2M741 256l-2 2M636 257l5 1M721 257l-3 5M769 258l2 3M816 260l3 -4M738 264l3 1M832 263l2 -1M867 263l2 -3M707 267l2 4M812 267l2 -3M851 268l4 -2M673 269l2 0M857 270l2 -3M841 273l-2 -3M640 275l-0 3M704 275l-1 4M869 276l1 -2M674 278l-3 0M822 278l1 -3M643 281l-1 5M799 281l4 -1M867 283l-0 -5M644 285l5 2M785 284l-1 -4M866 284l3 -2M649 289l4 0M743 287l5 1M783 288l1 -3M852 289l4 -3M690 290l2 3M841 292l3 -4M619 295l-1 3M680 294l5 2M799 295l4 -1M668 296l-0 5M837 298l3 -4M614 300l3 0M750 301l2 1M801 300l-0 -5M879 301l0 -2M745 304l5 1M813 303l4 -3M868 302l1 -2M794 306l-2 -5M826 307l4 -2M862 306l2 -2M778 308l-1 -2M818 310l2 -3M869 310l-2 -2M815 313l5 -1M845 311l3 -2M884 312l3 -5M747 315l2 4M798 315l-0 -6M850 315l2 -5M883 316l3 -4M765 318l3 1M801 318l4 -1M862 317l1 -5M682 320l4 0M794 322l1 -5M819 320l3 -3M855 321l-1 -2M662 325l0 5M812 325l3 -1M837 325l2 -4M652 327l0 4M758 326l-2 3M817 327l-2 -4M665 331l3 0M787 331l2 -0M881 329l2 -6M749 334l-2 3M795 332l-1 -5M840 333l-0 -2M887 333l2 -1M678 335l-1 1M826 337l1 -4M888 337l-1 -5M698 339l1 3M800 340l3 -2M832 339l1 -5M882 339l0 -2M781 343l1 -4M838 342l1 -2M873 342l1 -3M683 344l-4 3M771 344l3 3M830 344l3 0M851 345l2 -4M641 347l3 3M667 348l-0 3M756 348l1 4M862 348l-0 -2M660 350l-2 3M694 350l4 1M785 352l1 -3M841 350l1 -6M641 353l1 5M789 355l3 -1M819 355l2 -2M872 354l3 -2M680 357l1 5M818 358l2 -4M867 356l3 -3M679 360l-4 3M746 360l4 2M815 361l1 -3M866 359l4 -2M647 363l3 4M838 363l2 -2M869 362l3 -5M728 365l3 4M822 366l1 -5M865 366l4 -0M661 368l3 3M832 368l-3 -2M621 371l-3 4M685 371l2 1M807 373l1 -4M841 371l1 -5M663 374l2 1M755 376l3 5M861 374l4 3M825 377l3 -5M614 382l1 5M665 381l-0 2M738 380l-1 4M804 380l2 -3M878 382l2 -5M625 383l-5 2M656 385l-0 3M690 383l-4 1M708 383l-3 1M736 385l-1 4M773 384l5 1M847 383l2 -3M886 383l-0 -2M610 386l4 4M634 388l1 4M658 386l2 4M707 387l-0 2M737 388l-3 5M841 386l5 -3M620 391l5 0M645 389l1 2M668 389l-3 0M690 390l0 2M733 389l-4 2M765 391l0 4M855 390l4 -2M884 389l2 -2M648 394l3 2M712 393l0 4M760 393l-2 4M844 394l3 -2M608 397l-3 3M651 397l-4 3M715 395l1 4M737 395l-3 1M779 396l-3 -4M853 396l2 -5M616 399l-2 1M664 398l-2 1M688 399l4 2M743 399l2 1M833 399l-2 -5M879 399l1 -3M659 402l1 4M725 402l2 2M769 401l-2 2M818 403l4 -3M683 405l5 0M769 405l3 1M827 404l1 -3M856 404l4 -3M641 409l1 5M710 408l-2 0M772 408l-1 3M821 407l-1 -5M614 410l-4 2M716 412l4 2M775 410l4 -1M831 410l5 -2M634 415l5 2M656 413l-1 2M693 415l-4 2M757 413l1 5M826 413l2 -1M851 414l1 -5M617 418l5 1M640 418l-2 3M715 417l3 2M775 417l3 -4M599 420l4 0M616 421l4 1M673 420l-4 3M701 420l3 4M738 419l-2 4M772 419l3 1M810 419l2 -1M605 423l-1 2M628 423l2 1M691 422l-2 1M720 422l-2 2M805 423l2 -2M841 422l1 -4M616 425l-1 5M647 425l4 2M674 427l-4 1M697 427l-3 1M715 426l-1 3M749 427l-3 1M778 425l2 -1M819 427l3 -1M607 429l-0 5M633 429l3 5M663 429l-1 4M684 428l3 2M712 430l-3 5M744 429l6 2M767 429l1 3M801 428l0 -4M605 431l-3 3M638 432l-4 3M699 432l-3 3M744 432l-3 1M770 433l-2 5M835 433l1 -2M620 436l-0 4M676 436l4 4M725 436l1 3M764 434l-3 4M832 436l3 -2M624 438l2 4M646 437l-3 0M703 437l2 5M715 437l1 4M773 439l-2 2M828 437l-0 -3M622 441l-2 3M643 440l1 3M664 442l-0 3M685 440l-3 3M754 442l-1 2M791 440l3 -4M833 440l3 -3M843 441l3 -2M599 443l-4 1M611 445l3 4M670 445l-1 5M719 444l4 3M757 443l-3 1M802 444l2 -3M850 445l4 -3M879 445l3 -4M602 447l-5 3M653 448l-2 1M675 448l-1 2M722 447l4 1M771 446l3 1M822 448l-1 -2M848 448l3 -1M881 447l2 -4M614 449l-2 3M654 449l3 5M702 450l2 2M770 451l1 4M845 450l2 -4M875 451l-0 -4M607 453l4 1M658 454l-1 2M696 454l4 0M734 453l-1 2M780 454l0 -2M861 453l-1 -1M620 457l-2 1M670 456l1 3M710 457l3 3M737 457l-2 2M808 456l3 -5M840 457l2 -5M862 456l3 -5M880 456l0 -6M672 459l-2 3M705 458l-2 4M751 459l4 2M868 458l3 -4M890 458l3 -4M763 478l5 0M767 492l1 6M788 501l2 -3M815 502l2 -3M867 501l-2 -5M788 504l-0 -4M865 504l-1 -2M765 507l5 3M788 508l3 -2M845 507l2 -0M884 506l2 -4M777 510l2 -3M793 509l3 -1M841 510l1 -2M873 509l0 -6M787 513l1 -2M870 513l1 -4M850 517l2 -2M888 517l2 -3M678 520l4 2M762 518l2 2M779 520l2 -3M802 518l2 -2M834 519l1 -5M865 519l3 -3" stroke="#f9b166" stroke-width="3.4" stroke-linecap="round" fill="none"/><path d="M657 237l3 3M692 237l-2 1M709 238l4 4M742 237l1 2M795 238l4 -3M830 236l2 -2M854 238l2 -0M599 239l2 0M661 239l-2 3M750 240l-4 4M766 239l-3 1M827 239l-3 -4M856 239l4 -2M634 244l-3 3M680 242l-4 1M771 243l1 3M706 246l-1 5M604 250l-1 4M765 248l-3 0M609 252l-1 4M664 253l0 2M699 251l-3 4M753 253l-0 6M645 254l-1 4M705 256l-4 4M652 257l0 3M773 257l-3 5M798 262l2 -3M871 262l1 -3M686 263l1 5M755 265l4 3M812 264l2 -5M679 267l-0 4M826 266l2 -2M650 269l-5 2M791 270l4 -2M642 272l-2 1M704 273l-3 2M772 272l3 2M852 274l2 -4M723 275l-3 1M866 276l5 -3M763 279l2 2M858 279l1 -5M889 278l-0 -3M758 283l-1 2M871 282l0 -4M667 284l-1 5M778 284l4 -5M878 285l2 -2M790 288l1 -4M848 288l2 -2M648 290l-1 4M819 290l2 -1M862 290l1 -3M742 294l2 4M824 293l2 -6M890 293l3 -4M745 297l-5 1M835 296l3 -3M686 300l-1 3M779 301l0 -4M841 300l0 -2M857 299l-1 -4M682 304l-2 2M837 303l-1 -2M870 302l-1 -3M746 305l-5 0M815 306l-2 -5M885 307l2 -3M767 309l4 1M831 309l0 -6M862 309l2 -2M683 313l3 2M758 313l2 4M795 313l0 -3M873 312l2 -3M759 315l3 2M842 314l1 -4M859 316l2 -3M750 318l-4 1M804 318l1 -2M830 318l-2 -4M742 321l4 1M840 322l5 -1M858 320l-1 -4M681 323l-1 2M813 323l-3 -2M870 325l3 -1M753 327l3 4M783 326l0 -4M820 326l-3 -3M835 328l3 -3M860 327l2 -2M767 330l4 3M834 331l1 -2M859 329l2 -2M669 332l2 5M804 332l3 -3M662 335l6 1M767 337l2 2M819 337l-1 -3M647 339l5 1M754 338l-0 5M835 338l3 -2M655 343l3 4M768 343l-1 5M825 343l3 -2M871 343l2 -1M666 346l-3 3M788 346l-0 -2M808 346l1 -4M865 345l1 -2M664 348l-2 2M790 347l4 1M815 349l2 -2M850 347l-0 -3M656 351l4 4M763 351l3 0M812 350l1 -5M874 351l3 -5M688 354l2 2M800 355l2 -2M868 355l2 -4M658 358l2 0M754 358l3 1M790 358l0 -2M821 356l0 -2M854 356l2 -3M618 361l5 1M748 360l4 2M821 361l1 -3M868 360l-2 -4M630 364l-3 5M740 364l1 3M835 362l1 -2M865 364l-2 -4M760 365l-1 2M826 365l1 -2M860 365l4 -4M737 368l2 4M826 370l4 -3M690 371l-1 3M772 373l-5 2M837 373l2 -4M869 372l3 -1M697 374l-3 2M821 374l0 -3M841 375l0 -4M864 376l2 -3M653 379l-2 5M817 379l2 -3M835 379l2 -5M860 379l3 -4M654 380l1 3M687 382l-5 1M734 381l1 2M823 380l-0 -2M853 382l5 -2M627 385l-1 4M649 384l-5 3M675 383l2 1M715 383l3 2M753 385l-2 1M835 385l2 -4M612 387l-1 4M645 386l-2 1M714 388l-3 2M768 388l-2 2M816 386l4 -3M852 386l3 -2M624 390l2 1M684 390l-3 1M729 391l-2 1M777 391l3 -2M873 390l4 -1M623 393l3 3M657 393l2 1M693 392l1 4M709 394l-2 4M745 392l4 4M810 392l-0 -4M860 394l6 -1M597 396l-4 0M645 397l-4 2M667 396l-2 3M698 395l-4 1M745 397l-2 1M803 397l5 -3M864 397l5 -3M887 396l1 -2M627 398l-4 1M705 399l-1 4M755 398l2 2M819 399l3 -1M890 398l2 -2M636 402l-3 5M684 402l-1 5M718 401l5 1M807 402l1 -4M601 406l-1 5M641 406l4 3M694 405l4 0M751 404l0 4M599 407l-2 6M653 407l0 2M692 409l1 2M756 408l-1 4M605 410l-4 4M651 412l3 2M752 410l-3 2M844 411l3 -1M680 413l-1 2M736 414l2 4M770 415l2 2M828 413l1 -2M647 416l2 3M685 416l2 3M826 417l4 -4M841 418l1 -2M645 421l2 4M686 421l3 3M787 421l2 -2M853 421l3 -2M632 423l-2 3M672 424l-0 4M713 423l3 1M748 424l-0 6M771 423l-2 4M798 424l3 -3M633 425l1 3M682 427l-4 2M762 427l4 1M816 427l1 -2M853 425l-0 -4M656 430l3 4M706 428l3 0M734 429l4 1M817 429l0 -4M848 430l3 -1M617 433l-3 4M644 431l-4 3M689 432l-2 0M734 433l-1 2M767 433l0 3M788 432l1 -3M801 432l2 -5M859 431l-4 -4M630 436l5 3M659 434l-3 2M714 434l-1 3M757 435l-4 3M795 436l2 -3M837 434l1 -2M609 437l1 4M651 438l-2 3M693 438l1 4M724 437l3 1M736 438l-5 0M794 438l2 -4M617 442l-2 1M721 442l-1 3M747 441l-5 2M786 440l3 -3M830 442l6 -0M858 440l1 -4M639 444l5 1M682 444l3 3M728 443l1 3M761 445l1 4M800 445l1 -2M862 444l-1 -6M615 448l-1 2M642 448l-1 4M725 448l-1 3M758 447l-0 3M795 446l1 -4M839 447l3 -1M871 446l2 -2M643 449l2 0M674 449l1 2M698 450l-3 3M717 450l3 1M729 451l-4 2M756 450l-2 2M806 449l4 -1M834 450l-1 -6M861 451l-1 -2M888 449l1 -2M644 452l-1 4M678 453l1 5M730 452l-2 2M777 454l3 -3M820 452l-1 -4M842 454l3 -2M864 454l3 -2M881 452l5 -3M604 455l-5 0M636 455l-3 1M734 457l-3 2M771 456l-4 1M811 456l4 -4M858 457l-0 -4M600 458l5 1M645 458l5 2M693 458l5 0M749 458l-2 1M779 459l3 -3M858 458l3 -4M883 459l3 -0M761 469l2 3M776 474l1 -2M770 490l3 4M771 497l2 2M817 500l3 -4M865 502l4 -3M791 505l1 -2M821 504l3 -5M833 507l2 -3M863 508l-1 -5M769 511l-1 3M828 511l-0 -4M855 510l1 -5M777 514l5 -2M810 513l2 -3M836 514l1 -3M769 516l3 1M791 517l6 -0M825 517l-1 -6M866 515l1 -3M883 516l2 -5M746 520l2 5M812 519l1 -3M863 520l3 -3M882 519l1 -2" stroke="#f9b166" stroke-width="2.2" stroke-linecap="round" fill="none"/><path d="M625 252l1 2M863 257l1 -3M681 267l2 2M672 284l4 1M791 290l2 -4M640 301l5 2M606 303l4 4M638 304l1 5M686 303l-2 1M641 305l-3 5M698 307l-3 4M616 310l2 3M698 308l-0 3M629 313l3 2M809 311l-0 -6M649 316l-3 2M603 317l-0 5M657 318l1 4M599 322l-4 0M624 324l-4 1M619 328l-4 2M870 326l0 -2M671 329l3 2M884 330l4 -2M807 333l2 -2M832 335l2 -5M629 340l3 2M626 341l-4 2M620 345l3 0M845 351l-1 -5M604 357l3 1M710 363l1 2M766 365l0 3M800 368l2 -4M623 376l-0 5M792 379l6 -2M752 392l-3 3M817 400l1 -4M707 404l4 1M787 415l-3 -4M756 429l-1 5M882 431l2 -5M884 440l-0 -2M763 451l-3 4M734 460l1 2M607 461l0 2M629 461l-2 2M667 463l2 4M704 462l-2 4M721 463l-0 2M752 462l-4 2M600 466l-1 2M621 466l-2 3M646 466l-4 5M687 464l-2 3M719 466l3 4M736 464l-2 1M748 465l-5 1M638 467l2 2M673 467l-4 1M688 469l-4 3M710 468l-3 1M728 468l2 6M742 468l-1 5M819 467l4 -2M629 472l-3 1M651 470l-5 0M672 470l-2 0M702 470l2 2M714 472l3 0M741 470l3 1M609 475l4 2M644 475l2 5M670 473l5 2M698 474l4 3M714 473l5 1M735 474l-2 1M871 474l3 -1M616 478l-2 4M640 478l-2 5M682 477l-3 1M699 478l-2 4M728 476l-1 2M755 478l4 1M604 481l3 2M632 479l-4 3M658 480l5 2M685 481l1 2M727 479l-6 2M621 484l-1 2M642 482l4 4M669 484l-2 2M685 484l-0 3M702 483l-1 2M718 484l2 2M734 483l2 3M602 487l4 4M625 485l1 2M642 485l0 5M660 487l3 2M682 485l4 2M708 486l-2 2M739 487l4 1M609 490l2 1M637 489l3 0M664 490l-4 2M693 488l-3 2M725 488l-4 2M738 490l3 2M618 492l-2 5M651 491l-1 2M695 493l-4 1M719 493l-3 2M756 492l2 2M613 496l-5 0M631 495l3 2M682 496l2 1M696 496l2 3M720 495l-2 5M737 495l-0 5M612 498l1 4M644 497l-3 2M664 497l1 4M691 497l-1 4M710 497l-1 3M730 498l3 2M838 497l2 -6M616 503l2 4M889 520l3 -4" stroke="#fdf7a8" stroke-width="2.2" stroke-linecap="round" fill="none"/><path d="M784 243l1 -3M643 264l3 3M666 283l2 4M828 294l1 -3M653 302l-3 2M752 304l4 2M617 306l4 0M694 307l5 2M678 310l-1 2M638 313l4 2M628 315l-3 3M660 316l-3 4M598 319l-0 6M635 318l0 3M615 320l-3 0M662 322l-1 6M615 324l-3 5M863 323l4 -3M617 326l-2 2M877 328l-0 -2M656 329l-4 3M875 331l3 -3M815 334l1 -5M873 333l3 -1M677 335l4 2M649 338l-3 0M615 341l-2 2M887 342l0 -3M598 349l-2 1M620 347l-0 3M817 348l5 -2M625 356l1 4M861 360l1 -2M789 366l1 -5M768 370l-1 3M881 369l2 -4M807 374l0 -3M639 382l-2 3M823 384l3 -3M685 394l-2 2M804 411l4 -1M717 421l-1 5M871 435l4 -3M860 447l-1 -4M606 460l2 4M659 460l2 3M611 462l-3 3M636 461l1 4M651 463l3 0M670 461l-0 4M687 463l-2 1M711 463l-1 4M732 463l1 3M606 464l-2 3M641 465l-4 3M654 465l0 5M675 465l-3 3M693 465l-4 0M713 465l2 1M752 466l-5 3M610 469l-4 3M631 467l-4 2M648 467l2 2M680 468l2 1M718 469l-1 4M597 470l-5 4M616 472l0 5M641 470l1 5M657 472l1 5M686 472l-0 2M719 471l1 2M744 470l6 0M598 473l-2 1M619 474l-2 1M640 473l-4 0M665 475l2 1M681 473l-0 2M712 475l6 0M738 473l4 1M860 475l2 -2M624 476l-4 3M647 476l4 1M664 476l-0 5M678 478l-0 4M706 478l-0 5M738 476l5 2M609 481l-2 5M634 481l5 1M650 480l-4 4M672 480l0 4M698 481l-2 0M717 481l-2 2M736 479l-5 0M603 482l-2 4M620 484l1 4M645 484l2 2M681 484l-2 1M723 482l3 5M613 486l-5 2M647 486l1 4M679 487l0 2M706 487l-2 3M724 487l5 3M613 489l3 3M634 490l-2 3M656 490l2 3M679 488l2 2M700 488l3 3M717 488l-3 4M610 493l2 1M641 491l-2 1M659 493l-1 2M678 492l-3 4M690 492l2 1M708 492l6 0M740 491l-3 3M622 494l-3 4M645 494l-1 3M658 496l5 3M673 496l0 3M701 496l2 4M734 494l3 2M617 499l-2 3M636 499l-5 1M662 498l1 2M685 499l-4 4M712 499l5 3M638 502l-5 1M779 508l1 -5M817 519l1 -6" stroke="#fdf7a8" stroke-width="3.4" stroke-linecap="round" fill="none"/><path d="M810 242l2 -5M803 246l4 -2M860 247l1 -2M889 245l4 -1M859 248l3 -2M781 252l2 -2M822 252l3 -4M874 253l5 -1M615 257l0 3M872 259l2 -4M841 266l3 -2M774 272l-0 4M772 280l-1 5M832 283l0 -4M826 284l0 -3M843 288l5 -2M788 292l3 -3M851 291l2 -1M827 294l-0 -3M821 298l5 -3M854 297l5 -2M837 307l-0 -4M814 318l5 -1M800 323l0 -4M842 330l3 -4M782 335l3 -1M884 343l1 -4M833 347l1 -3M884 351l2 -2M873 369l0 -3M623 382l-5 2M675 381l0 3M717 381l0 5M727 384l4 2M660 388l-1 4M723 386l-2 5M616 390l-1 2M683 390l-6 1M633 392l-2 4M671 393l0 3M631 395l2 4M711 396l-2 0M623 400l-3 2M709 400l-2 4M813 398l2 -3M650 401l-0 2M680 402l1 2M726 401l3 0M614 404l-1 4M648 404l-2 3M679 404l3 3M714 405l4 1M608 407l-3 4M629 409l1 2M642 409l-3 3M701 407l-3 1M735 408l-4 2M621 411l5 1M648 410l5 1M700 412l0 3M598 413l-2 6M628 415l-5 1M682 415l-4 2M611 418l3 3M649 417l0 3M670 416l0 5M702 418l-4 1M626 419l0 3M706 420l3 3M733 419l-5 0M798 447l2 -3M864 450l6 1M830 459l1 -3M817 471l1 -3M813 478l5 -3M804 490l2 -1M815 493l-0 -3M850 497l-0 -3M797 502l3 -5M880 501l1 -4M852 505l2 -3M776 507l3 -4M798 506l2 -0M822 507l-3 -5M796 509l-1 -4M864 509l1 -5M783 514l5 -2M697 515l-2 3M835 516l2 -2M792 518l3 -5M852 518l2 -1" stroke="#aee08a" stroke-width="3.4" stroke-linecap="round" fill="none"/><path d="M824 244l3 -3M831 247l-1 -4M815 250l3 -4M799 253l2 -2M886 253l0 -2M855 254l2 -2M801 257l0 -4M855 258l2 -4M883 258l4 -4M862 261l0 -5M781 268l3 -4M762 274l-2 1M820 283l2 -2M854 284l3 -4M799 298l2 -4M780 305l1 -3M830 310l-3 -4M753 317l3 4M799 326l1 -5M791 332l2 -2M824 339l-1 -3M838 351l-1 -2M889 351l-0 -3M857 357l5 2M833 376l6 1M603 382l4 1M735 382l-1 4M618 384l-4 4M686 385l2 0M648 387l-1 5M692 386l-4 2M606 390l-5 3M696 389l1 3M739 389l-2 4M608 392l3 5M678 392l1 6M737 394l3 1M602 395l5 1M620 395l-1 3M690 397l3 0M598 398l2 0M639 398l1 2M672 400l2 2M704 400l-3 1M613 401l2 2M654 402l-0 3M701 402l-1 5M597 405l-2 0M629 406l1 2M660 405l-1 4M728 404l-3 0M614 407l2 6M694 408l3 4M721 407l-4 3M846 408l2 -1M647 412l-4 4M671 411l-5 2M692 412l0 3M709 410l-4 2M865 412l-1 -5M653 414l-3 5M702 413l-2 5M730 413l-3 0M660 418l1 3M711 417l4 3M731 417l-1 2M657 419l4 2M835 420l-2 -5M855 429l1 -2M872 437l2 -3M825 443l1 -2M825 448l1 -2M761 455l4 2M620 464l3 1M813 467l2 -4M887 471l1 -3M652 489l2 1M834 497l1 -5M824 502l2 -4M859 502l3 -4M762 503l2 5M804 505l3 -5M831 503l3 -4M860 505l0 -4M889 504l4 -2M865 506l4 -4M823 510l1 -3M868 509l2 -4M801 512l2 -3M852 513l3 -3M869 513l-1 -3M764 515l0 2M795 517l1 -3M831 517l2 -5M813 520l2 -1" stroke="#aee08a" stroke-width="2.2" stroke-linecap="round" fill="none"/><path d="M627 346l-5 3M623 358l-1 2M719 369l2 5M786 416l2 -2M813 481l0 -3M854 480l3 -4M882 481l3 -3M802 483l0 -4M847 482l-0 -3M863 483l3 -3M877 483l3 -1M791 485l1 -5M810 487l3 -4M822 486l-0 -3M848 486l0 -4M881 486l2 -3M800 488l3 -1M821 489l1 -5M836 488l4 -3M852 488l1 -3M876 490l1 -2M788 491l0 -4M840 491l0 -3M862 491l4 -2M885 492l5 -2M811 496l-1 -6M850 494l0 -2M782 497l3 -2M805 498l-0 -5M859 499l2 -3M618 501l0 3M671 500l-5 3M706 502l-2 4M734 502l3 5M603 503l4 3M640 504l1 4M732 503l5 3M690 507l3 1M616 511l-2 1M677 509l-4 4M734 509l-0 5M644 512l1 3M717 514l-3 2M662 517l3 2M712 517l4 3M608 518l4 4" stroke="#ffffff" stroke-width="3.4" stroke-linecap="round" fill="none"/><path d="M637 354l-1 3M711 369l-3 2M781 404l3 -3M806 481l2 -3M861 481l1 -3M797 482l2 -4M820 482l-0 -5M832 484l3 -2M845 484l1 -4M784 487l3 -1M804 486l-2 -5M856 487l4 -4M876 486l4 -1M786 489l4 -3M845 490l-1 -3M880 488l-0 -5M797 491l4 -4M818 493l-0 -5M844 493l4 -4M877 491l1 -4M791 494l1 -6M814 495l5 -2M841 494l3 -4M863 495l4 -5M889 495l0 -5M797 499l-2 -3M822 497l-2 -6M846 499l-1 -6M877 498l2 -4M890 498l3 -0M684 501l-1 3M599 503l2 0M647 504l2 4M665 505l4 4M704 503l-1 4M738 503l-4 0M627 508l2 1M681 507l-3 1M712 506l2 2M612 510l-2 2M717 510l-4 0M757 509l0 3M665 514l-2 1M733 514l3 2M601 516l3 2M649 517l2 3M732 515l-4 0M630 518l1 2M695 519l2 1" stroke="#ffffff" stroke-width="2.2" stroke-linecap="round" fill="none"/><path d="M888 237l-3 -4M823 245l2 -4M836 261l3 -5M823 265l3 -4M848 280l-1 -2M888 282l3 -5M817 290l1 -5M815 297l3 -3M796 302l0 -5M827 308l-0 -2M805 321l3 -5M858 323l2 -3M801 334l-0 -3M809 338l2 -2M815 354l1 -2M854 361l2 -5M803 367l3 -2M824 373l0 -5M794 384l1 -4M795 388l2 -1M731 392l-4 0M727 398l-2 3M845 400l1 -6M828 407l4 -5M867 415l1 -2M794 422l1 -5M860 426l-1 -5M791 435l4 -3M861 440l4 -3M853 445l2 -2M801 455l1 -2M838 460l-0 -5M830 465l2 -1M828 473l2 -5M846 480l4 0M866 486l2 -2M875 490l3 -4M838 495l3 -5M861 497l2 -3M815 503l2 -4M835 506l1 -4" stroke="#2a78c0" stroke-width="1.2" stroke-linecap="round" fill="none"/></g><path d="M588.8,268 L600,267.7 L604.9,261 L616.2,256.4 L618,253.5 L629.5,258.3 L640.8,262 L653,257 L663.5,253.5 L675,252.6 L680.6,254.5 L686.2,246 L695.7,247.8 L707,243 L716.5,238.4 L721.2,244 L722.2,258.3 L726,264 L731.2,262.4 L739.7,260.5 L749.2,256.8 L758.7,258.7 L765.3,256.8 L772,272 L773.2,286.5 L778.3,300.7 L780.4,315 L783.4,327.2 L778.3,337.4 L774.3,345.5 L774.3,355.7 L768,368 L760,374 L740,371.4 L734.6,373.3 L729,380.8 L721.4,384.6 L714.8,385.6 L717.8,390 L715,401.8 L708.6,404.4 L698,411 L690.3,413 L686.3,407 L675.9,401.8 L672,394 L662.7,388.4 L657,379 L653.3,379 L645.7,371.4 L638,375 L626.8,373.3 L617.3,369.5 L615.4,362 L607.8,350.5 L603,339 L596.5,329.7 L592.7,324 L585,308 L590,295 L589,276Z" fill="url(#xh)"/><path d="M773.2,286.5 L786.5,284.4 L800.7,282.4 L806.8,290.5 L802.8,300.7 L808.9,315 L812,327.2 L811,341.5 L810,357.8 L812,370 L808.9,376 L800.7,380 L786.5,386.3 L780.4,390.3 L772.2,392.4 L764,388.3 L760,376 L768,368 L774.3,355.7 L774.3,345.5 L778.3,337.4 L783.4,327.2 L780.4,315 L778.3,300.7Z" fill="url(#dh)"/><path d="M672,394 L675.9,401.8 L686.3,407 L690.3,413 L698,411 L708.6,404.4 L715,401.8 L717.8,390 L714.8,385.6 L721.4,384.6 L729,380.8 L734.6,373.3 L740.3,370.4 L760,376 L764,388.3 L772.2,392.4 L780.4,390.3 L786.5,386.3 L800.7,380 L808.9,376 L804.3,388.4 L808.1,403.5 L810.7,409.7 L818.6,415 L829,420 L822.5,425.4 L813.4,430.6 L808,434.5 L801.6,438.5 L792.4,442.4 L788.5,445 L792.4,447.6 L785.9,455.5 L791,466 L787,467 L763.4,465.7 L758,480 L759.4,489.3 L753,494.5 L751.6,505 L752.9,510.3 L745,515 L739,523 L733,531 L722,536 L712,534 L706,530 L707,521 L704.5,516 L693,504 L690,494 L704,487 L703.4,480 L699.4,473.8 L689,466 L685,455.5 L681,450.3 L674.5,458 L673.2,442.4 L674.5,429.3 L672,424 L674.5,416.2 L673.2,405.7Z" fill="url(#dh)"/><path d="M627.6,210 L628.6,212.5 L630,214.9 L630.9,217.4 L632.5,219.7 L633.3,222.3 L636.3,223.6 L639.4,224.5 L642.7,225 L644.9,226.4 L647.4,226.9 L649.5,228.5 L651.9,229.4 L654,230.8 L657.1,230.4 L660.2,231.4 L663.3,231.5 L666.4,230.8 L667.7,233.5 L667.2,236.6 L668.3,239.3 L667.4,242.1 L667,245 L666.4,247.9 L665.4,250.7 L668.1,252.8 L671,254.5 L673.9,253.5 L676.8,252.6 L679.3,251.2 L681.6,249.5 L683.6,247.2 L686.2,246" fill="none" stroke="#333" stroke-width="0.8"/><path d="M716.5,218.5 L715,221 L713.3,223.5 L711.8,226 L710.9,228.5 L711.2,231.1 L710.8,233.7 L713.6,236.1 L716.5,238.4" fill="none" stroke="#333" stroke-width="0.8"/><path d="M739.2,231.8 L737.3,234.3 L735.2,236.7 L733.5,239.3 L732.6,241.8 L732.7,244.5 L731.6,246.9 L733.6,248.9 L734.6,251.6 L736.1,253.9 L737.3,256.4 L738.8,258.5 L741,260" fill="none" stroke="#333" stroke-width="0.8"/><path d="M761,235 L760.9,237.6 L759.9,240 L759.4,242.5 L758.8,244.9 L759.3,247.6 L758.4,250 L761,250 L763.7,250.2 L766.2,251" fill="none" stroke="#333" stroke-width="0.8"/><path d="M588.8,263 L591.3,264.1 L593,266.4 L595.4,267.7 L598.6,268.9 L602,269.6" fill="none" stroke="#333" stroke-width="0.8"/><path d="M589,276 L588.5,278.7 L590,281.4 L589.1,284.2 L590,286.8 L589,289.6 L590.5,292.3 L590,295 L588.5,297.4 L587.8,300.1 L586.5,302.6 L585.3,305.1 L585,308 L586.4,310.1 L587.4,312.5 L588,315 L589.7,317 L590.8,319.3 L591.9,321.5 L592.7,324 L594.2,327.1 L596.5,329.7 L597.7,332.3 L599.4,334.6 L601.7,336.5 L603,339 L603.7,342.1 L605.4,344.8 L606.9,347.5 L607.8,350.5 L609.4,352.8 L610.9,355 L612.9,357.1 L613.8,359.7 L615.4,362 L616.2,364.5 L616.6,367 L617.3,369.5 L619.5,371 L622,371.6 L624.5,372.2 L626.8,373.3 L629.5,374.2 L632.3,374.8 L635.2,374.6 L638,375 L640.8,374.4 L642.8,372 L645.7,371.4 L648,372.9 L649.8,374.9 L651,377.5 L653.3,379" fill="none" stroke="#333" stroke-width="0.8"/><path d="M653.6,390 L654.8,392.6 L655.6,395.2 L656.6,397.8 L657.5,400.5 L658.1,403.1 L658.6,405.7 L658.8,408.4 L659.8,410.9 L660,413.6 L660.7,416.3 L662.4,418.6 L663,421.4 L663.8,424 L665,426.5 L665.4,429.3 L669.3,429.3 L667.4,431.7 L666.3,434.7 L664.1,437 L662.8,439.8 L661.3,442.7 L661.3,446 L660,449 L659.1,451.9 L658.8,454.9 L658.8,458 L657,460.5 L656.1,463.6 L654,466 L652.3,468.6 L651.5,471.4 L651.3,474.4 L650.7,477.2 L649.7,480 L649.6,482.5 L649.4,485 L648.4,487.4 L648.6,490 L648.2,492.5 L647.6,495 L646.9,497.4 L647.5,500 L647.5,502.6 L645.9,504.9 L645.8,507.4 L645.5,509.9 L645.6,512.5 L645.6,515 L645.4,517.6 L644.9,520 L644.4,522.5 L644,525 L644,527.7 L642.5,530.1 L641.9,532.7 L642.3,535.6 L640.5,537.9 L640.4,540.6 L639.2,543.1 L639.2,545.8 L638.2,548.3 L638,551 L638.1,553.7 L637.8,556.4 L638,559.1 L638.7,561.8 L638.5,564.5 L638.4,567.2 L638.1,569.9 L638.2,572.6 L637.9,575.3 L638,578 L637.4,580.6 L637.3,583.2 L637,585.8 L636.4,588.4 L635.4,590.9 L635.2,593.5 L635,596.2 L634.4,598.7 L634.8,601.5 L634,604 L634.8,606.5 L635,609.1 L635.2,611.6 L635.6,614.2 L634.9,616.8 L634.7,619.4 L636.1,621.8 L635.5,624.5 L636,627 L638.5,627.8 L641.1,627.8 L643.7,627.2 L646.2,628.1 L648.8,627.8 L651.4,627.9 L653.9,627.9 L656.4,628.8 L659,629" fill="none" stroke="#333" stroke-width="0.8"/><path d="M673.2,424 L676.1,424.3 L678.9,425 L681.8,425.5 L684.7,424.8 L687.6,425.4 L690.6,425.4 L693.5,425 L696.5,424.6 L699.4,424 L699.7,421.2 L700.5,418.6 L702,416.2 L703.2,413.5 L705,411.1 L706,408.3 L708.5,407.4 L711.2,407.3 L713.7,406.5 L716.5,406.7 L719,405.7 L721.8,407 L725,406.9 L727.8,408.3 L730.9,408.3 L731.8,410.9 L731,413.6 L731.2,416.2 L732.4,418.7 L732.2,421.4" fill="none" stroke="#333" stroke-width="0.8"/><path d="M699.4,424 L701.7,425.4 L703.4,427.6 L705.7,428.9 L707.9,430.5 L709.7,432.5 L711.7,434.2 L713.8,435.9 L716.3,437 L718.7,438.1 L721.3,439 L723.8,440.1 L726,441.8 L728.7,442.5 L730.9,444.1 L733.5,445 L732.3,447.5 L731.4,450.1 L730.6,452.6 L730.7,455.5 L729.6,458 L732.6,458.3 L735.4,459.7 L738.4,460.1 L741.4,460.7" fill="none" stroke="#333" stroke-width="0.8"/><path d="M672,394 L670.3,391.9 L668.5,390 L666.4,388.4 L664.5,386.5 L662.5,384.7 L661.2,382.3 L658.7,381.1 L657,379" fill="none" stroke="#333" stroke-width="0.8"/><path d="M672,394 L672.8,396.9 L674.4,399.3 L675.9,401.8 L678.3,403.4 L680.8,404.9 L683.9,405.4 L686.3,407 L688.1,410.1 L690.3,413 L693,412.9 L695.6,412.2 L698,411 L700.7,409.4 L703.1,407.3 L705.9,405.9 L708.6,404.4 L712.1,403.7 L715,401.8 L715.2,398.7 L716.2,395.8 L717.7,393.1 L717.8,390" fill="none" stroke="#333" stroke-width="0.8"/><path d="M706,530 L705.9,526.9 L706.9,524 L707,521 L705.9,518.4 L704.5,516 L702.6,514 L700.4,512.3 L699,509.7 L697.1,507.7 L694.9,506 L693,504 L692.3,501.5 L691.1,499.1 L690.1,496.7 L690,494 L692.3,492.7 L694.7,491.8 L696.7,490 L699.5,489.7 L701.5,487.8 L704,487 L703.3,483.5 L703.4,480 L700.9,477.2 L699.4,473.8 L697.7,471.7 L695.4,470.4 L693.5,468.7 L691.2,467.4 L689,466 L687.4,463.6 L686.8,460.8 L686,458.1 L685,455.5 L682.6,453.2 L681,450.3 L678.9,451.8 L677.9,454.3 L676.5,456.4 L674.5,458 L674.7,455.4 L673.5,452.8 L674.4,450.2 L673.6,447.6 L673.5,445 L673.2,442.4 L673.2,439.8 L673.7,437.2 L673.5,434.5 L673.6,431.9 L674.5,429.3 L673.7,426.4 L672,424 L672.5,421.3 L674,418.9 L674.5,416.2 L673.8,413.6 L674.5,410.9 L674.1,408.3 L673.2,405.7 L673.3,402.7 L673,399.8 L672.4,396.9 L672,394" fill="none" stroke="#333" stroke-width="0.8"/><path d="M683,466 L683.6,468.6 L685.8,470.4 L687.1,472.7 L687,475.6 L689.2,477.5 L690,480 L689,482.8 L686.8,484.9 L685.7,487.6 L684,490" fill="none" stroke="#333" stroke-width="0.8"/><path d="M600,267.7 L604.9,261 L616.2,256.4 L618,253.5 L629.5,258.3 L640.8,262 L652,262 L658,261 L667,258 L673,265.8 L682.5,265.8 L692,260 L690,250.7 L686.2,246 L695.7,247.8 L707,243 L716.5,238.4 L721.2,244 L722.2,258.3 L726,264 L731.2,262.4 L739.7,260.5 L749.2,256.8 L758.7,258.7 L765.3,256.8 L766.2,251 L772,245.4 L775.7,244.5 L781.4,256.8 L787,264.3 L789.9,272.8 L799.3,277.6 L813.5,279.5 L821,282.3 L825,289 L840,291.8 L855.2,292.7 L870.3,305 L884.5,309.7 L889.2,330.6 L885,345 L875,358 L868,362 L863,370 L862,385 L860.5,398 L854,416 L847.4,424 L841,429.3 L831.7,429.3 L818.6,433.2 L810.7,435.8 L802.9,439.8 L797.6,445 L796.3,452.9 L796.3,463.4 L792.4,471.2 L784.3,482.8 L776.5,492 L768.6,501 L760.7,507.6 L752.9,510.3 L745,505 L735.9,505 L728,503.7 L726.7,493.2 L729.3,482.8 L732,474.9 L737.2,469.7 L745,465.7 L752.9,461.8 L761,457 L757,444 L750,430 L741,425.5 L735,424 L732,410 L720,408 L718,393 L715,385 L710,375 L706,365.7 L691,354.3 L683.5,343 L676,344.9 L660.8,348.7 L645.7,348.7 L636.2,346.8 L628.7,337.3 L624.9,324 L626.8,310.8 L634.3,303.2 L647.6,301.4 L634.3,293.8 L626.8,290 L610.5,273.4 L600,267.7" fill="none" stroke="#1a1a1a" stroke-width="1.1" stroke-linejoin="round"/><path d="M765.3,256.8 L772,272 L773.2,286.5 L778.3,300.7 L780.4,315 L783.4,327.2 L778.3,337.4 L774.3,345.5 L774.3,355.7 L768,368 L760,374 L740,371.4 L734.6,373.3 L729,380.8 L721.4,384.6 L714.8,385.6" fill="none" stroke="#1a1a1a" stroke-width="1.1" stroke-linejoin="round"/><path d="M773.2,286.5 L786.5,284.4 L800.7,282.4 L806.8,290.5 L802.8,300.7 L808.9,315 L812,327.2 L811,341.5 L810,357.8 L812,370 L808.9,376 L800.7,380 L786.5,386.3 L780.4,390.3 L772.2,392.4 L764,388.3 L760,376" fill="none" stroke="#1a1a1a" stroke-width="1.1" stroke-linejoin="round"/><path d="M808.9,376 L804.3,388.4 L808.1,403.5 L810.7,409.7 L818.6,415 L829,420" fill="none" stroke="#1a1a1a" stroke-width="1.1" stroke-linejoin="round"/><path d="M610.5,273.4 L625.7,286.6 L635,292.3 L646.5,297 L652,304" fill="none" stroke="#1a1a1a" stroke-width="1.1" stroke-linejoin="round"/><path d="M650.3,265.8 L652,280 L654,305" fill="none" stroke="#1a1a1a" stroke-width="1.1" stroke-linejoin="round"/><path d="M752.9,461.8 L745,465.7 L737.2,469.7" fill="none" stroke="#1a1a1a" stroke-width="1.1" stroke-linejoin="round"/><path d="M735.9,505 L745,505 L760,485 L776.5,492" fill="none" stroke="#1a1a1a" stroke-width="1.1" stroke-linejoin="round"/><path d="M709,623L716,621L721,624L728,622L733,625L727,629L718,630L712,628Z" fill="none" stroke="#444" stroke-width="0.9"/><path d="M686,648H691M840,639h2M861,642L867,644L872,649" stroke="#444" stroke-width="1"/><circle cx="906" cy="299" r=".7" fill="#555"/><circle cx="927" cy="413" r=".6" fill="#777"/><path d="M622.2,630.1 L623,630.3 L624.7,631.4 L623.4,629.6 L621.7,629.1M643.9,640.7 L641.5,639.6 L640.4,641.3M631.8,638.7 L632.4,638.5 L630.6,640.4M617.7,560.6 L619.6,559.8 L621.9,559.9M623.4,634.3 L621.9,636.2 L621.3,634.3 L620.9,636 L619.7,635.3M640.4,640.6 L639.6,639.9 L641.2,639.8 L640.3,639.7 L641.3,637.9M651.7,651 L649.3,652.2 L648.6,652.5 L646.2,650.7M618.9,581.4 L617,580.4 L618.6,580.2M617.1,620.6 L618.4,619 L619.7,620.2 L621.5,618.3M649.3,646.8 L648.6,645.4 L647.5,646.2 L645.5,646.9 L644.5,648.1M622.4,627.5 L620.8,625.7 L623.2,625.8 L622.7,624.7M620,626.4 L618.2,628.3 L618.9,629.5 L618.1,628.3M656.6,647.7 L654.7,647.4 L652.9,648.8 L651.9,648.6M660.7,653.8 L663,654.6 L662.1,653.7 L662,655.3M617.8,573.3 L620.1,573.8 L620.1,573.2 L618.1,572.3 L619.5,573.7M616.5,602.7 L617.5,603.4 L618.8,602.8 L619.8,601.9M615.9,617.4 L617,619.2 L616.2,617.9 L618,617.8 L619.3,617.1M611.9,592.3 L612.6,593.5 L611.9,594.1 L613.1,595.4 L612.3,596.8M646.5,646.1 L646.6,646.2 L644.9,647.5 L647.1,647.4M628.9,633.9 L629.5,635.6 L629.6,637.4M614.4,595.8 L613.3,597.8 L611.8,598.1 L612.4,596.8 L613.7,595.5M633.7,637 L631.5,635.5 L630.6,634.2M609.7,582.9 L608.9,583.5 L606.8,582.3 L607.9,581.8M618.2,601.4 L620.1,602.2 L620.3,604 L620.6,603.2M614.1,594.9 L613,594.3 L611.2,593.9 L611.5,594.1 L611.3,592.7M613.4,605.2 L615.7,605.7 L615,607.2M611.1,560.1 L613.2,560.3 L612.3,561.8 L612.6,561.5 L615,561.5M615.3,616.7 L617.6,618.3 L618.1,617.4 L620.5,617.4M611.7,609.1 L611.6,608.2 L611.5,606.7 L612.1,606.5M616.8,594.6 L614.3,594.8 L613.2,596.5 L614.6,595.5M610.6,591.6 L609.5,592.1 L609.4,592.6 L609.9,593.6M617.2,574 L616.1,574.8 L616.7,575.7 L614.3,575.1M628.7,629.7 L627.4,629.5 L629.5,631.1M608.2,624.5 L608.6,625.2 L610.9,625.8 L612.7,627.2M615.1,616.2 L613.6,615.4 L615.2,613.7 L616.9,614.4 L616.6,613.6M639.4,635.7 L640.3,637.3 L642.7,637.4 L642.3,637.6M617.1,565.7 L618.7,566.9 L619.6,565 L620.7,566.9M659.4,648.2 L658,648.8 L660.3,649.6M612.4,575.9 L610.7,576.4 L610.3,575 L610.9,573.2M613.4,572.8 L612.3,573.1 L610.4,572.7M616.5,626 L617,625.9 L619.1,625.4 L616.9,626.2 L615.2,626.7M617.3,619.8 L617.5,618.7 L615.3,617.6 L617,616.7 L619.4,618M644,642.1 L645,642.8 L643,643.4M610.9,570.8 L610.7,570.3 L610.5,572.2 L608.5,572.3 L608.7,571.8M646.4,641.5 L647.6,639.8 L649.7,639.8M616.2,585 L615.5,583.9 L614.7,584.4 L613.9,583.9M617.8,576.1 L616.8,576.6 L619.1,576.1 L616.8,578.1 L615.4,576.8M610.1,567.5 L608.7,565.6 L610.6,565.6M630,636.4 L632.1,635.7 L632,634.5 L632.7,632.8 L634.6,634.3M613.8,615.5 L612.7,614.2 L611.6,613.1M608.6,617 L607.6,615.2 L605.3,615 L607,613.7M635.1,637.8 L636.3,636.5 L634.8,634.6M609.9,587.2 L612,588.1 L612.9,586.8 L612.2,585.1M657.1,652.3 L658,654 L658.7,653.8M651.6,646.9 L651.1,645.1 L651.4,647 L651.5,646.4 L649.5,644.7M647.8,647.5 L648.7,648.1 L648.7,649.2M618.2,565.7 L617.2,563.9 L614.9,565.8 L613.3,565.8M613.8,607.6 L616,608.7 L613.9,610.7M610.2,579.1 L608.7,577.2 L608.9,577.2 L609.3,576.7 L609.9,577.6M647.8,645.5 L648,644 L647.9,645.1M613.1,591.1 L611.2,589.5 L609.9,587.8M614.2,610.7 L613.1,610.6 L611.8,611.4M640.7,641.1 L640.3,640.3 L641.5,640.6M648.8,646.3 L646.5,644.9 L647.4,646 L645,644.2 L644.7,642.6M639,638.2 L637.4,637.3 L638.2,636.4 L636.1,637.5M609.9,621.7 L611.6,621.5 L610.4,623.3M615.2,562 L614.5,561.3 L612.1,561.6M642.5,638.2 L643,638.7 L641.3,639.8 L640.9,639.5 L640.1,639.3M615.1,587 L614.8,588.1 L617,588.2M655.7,646.8 L656.7,645.6 L654.2,647.3 L652.8,648.1M613.4,601.9 L612.2,600.7 L612.6,600.1M631,635.2 L632.6,635.8 L634.7,634.1M611.7,618.4 L613.4,618.4 L611,617.1M616.8,571.7 L618.3,572.7 L618.2,572.6M609,623.1 L608.4,621.1 L608.4,621.5M613.2,581.8 L614.1,582.3 L614.2,582.3 L614.4,583M616.2,613.2 L618.4,613.9 L619.2,614.1 L620.7,613.5 L621.2,614.2M610.9,621.7 L608.6,622.8 L609.1,624.3M651.4,650.3 L650.3,651.1 L648.1,652.1M628.6,633.6 L630.2,635.3 L630.7,635.6 L630.6,633.9 L628.7,633.3M636,641 L635.4,639.7 L636.2,641.3 L638.2,641.7 L637.7,640.2M627.3,633.6 L626.1,632 L625,633.2 L626.5,631.5M649.7,647.5 L648.3,645.8 L648.6,647.1M647.7,643.2 L647.6,643.6 L646.3,643.3 L644.2,644.8M613,599.1 L611.1,599.3 L611.6,598.1M615.3,582.5 L616.7,581.8 L614.6,583.6 L612.8,583.7 L610.6,582.5M612.1,615.3 L614.1,615.8 L615.6,617.1M616.7,560.2 L614.7,558.8 L615.3,557.2M635.7,638.4 L636.8,640.1 L639,640.6M651.3,646.5 L649.8,645.8 L648.2,647.4M658.9,648.7 L658.7,646.8 L661.1,648.6 L659.3,646.6 L658.7,646M632.2,638.2 L631.1,636.6 L631,636.1 L632.2,637.7 L631.6,636.9M615.2,618.9 L615.5,618.1 L614.7,619.5M608.6,621.4 L611,620.4 L612.1,619 L614.5,619.2M610.2,611.1 L612,610.1 L611.8,608.6 L609.7,609.9M617.6,576.6 L616.3,576.5 L615.8,576.5M612,566.3 L609.6,566.4 L611.8,566.7 L613.5,566.6M611.5,562.7 L611.2,563 L613.2,563.6 L613.9,561.8 L611.5,562.8M617.2,608.8 L619.3,608.4 L621.8,609.4 L623.8,608M635.5,640.7 L634.1,640.4 L632.9,640.3 L631.8,640.9M611.2,574.6 L609.1,575.3 L606.8,575 L605.1,575.6M632.7,634.7 L630.9,633.7 L633,635.4 L630.6,634.2M611.1,610.7 L610.5,611.8 L608.7,611.9 L611.1,612.7 L609.1,611.1M621.4,628.8 L621.6,628.6 L623.4,630.5 L621.6,628.5M613.8,561.5 L613.7,562.3 L611.3,563.4M613.5,609.5 L612.2,608.7 L613.7,607.7 L614.7,609.2 L616.1,609.4M609.4,612 L611.6,611.4 L611.7,612.3M655.3,650.2 L657.1,650.5 L658,651.1 L655.7,650M616.7,628.2 L616.1,627.9 L615.9,626.1 L613.4,626.4 L613.7,624.6M629.1,637.8 L631.5,636.9 L630.4,638 L631.6,637.1M641.9,640.1 L643.4,640.9 L643.8,642.4 L645.9,643.7 L646.4,644M647,642.8 L644.7,644.1 L644.7,645.6 L642.4,646M616.8,573.9 L616.5,574.2 L616.7,575 L617.7,575.9 L618.2,574M628,634.1 L629.1,632.4 L629.8,633.7 L627.9,634.8 L626.7,634M617.6,560.2 L618.4,560.2 L617.8,560.8 L620,560.1 L620.5,559.9M619.4,577.8 L619,578.2 L619.8,576.9 L618,576.9 L618.9,576.7M618.6,623.3 L618.9,623.3 L621.2,622.1 L619.9,620.8M611.2,623 L609.3,622.1 L608.6,623.6 L607.4,624.1 L608.1,626M617.3,573.8 L615.3,575.2 L614.2,576.3 L612.6,577.4M609.7,624.2 L610.9,623.2 L610.4,622.5 L608.4,620.8M629,636.2 L626.8,634.5 L624.5,632.9M635.4,634.7 L635,633.6 L632.6,633.8 L631.6,632.3M617.5,620.5 L617.3,618.9 L618.6,617.3M608.9,623.5 L609.1,623.3 L608,623.5 L610.3,623.2 L608.9,623.2M648.9,646.9 L648,648.1 L648.2,646.7M619.2,566.3 L618.2,566.5 L619.7,567.1 L618.5,565.7M620.5,628.1 L621,626.7 L619.5,627.5 L620.7,625.9 L623.2,624.4M610.3,579.8 L609.1,579.7 L610,580.9 L609.9,580.1M647.5,645.3 L648.6,643.8 L649.9,643.1 L650.4,643.7 L650.4,645.2M648.2,645.2 L646.4,644.9 L645.9,646.8 L644.1,647.4M635.5,633.4 L634.6,634.8 L635.4,634.5M643.2,640.3 L643.3,639.6 L644.2,640.8 L641.8,641.1 L642.6,641.2M612.9,617.1 L610.6,617.2 L610.5,615.7 L609,617.6M641.2,644.1 L639.2,643.8 L641,644.4 L643.1,643.2 L641.8,641.5M650.1,647.4 L651.3,646.8 L651.7,647.9M615.2,612.5 L617.2,612.7 L614.7,612.4M610.2,614.8 L608.2,614.6 L607.9,615.8M613.5,616.3 L614.8,617.1 L615.4,617M620.7,630.6 L619.2,631.2 L618.9,631.2 L621.3,632 L619.8,632.1M644.1,643.6 L643.8,642.8 L644.9,642.4M618.9,579.6 L619.9,578.5 L619.4,578.3 L618.9,576.4M616,613.9 L617,615.2 L615.8,613.6 L614.5,613.3 L616,614.6M648.5,646.9 L648.2,645.7 L647.3,644.7 L648.2,645.8 L646.7,645.9M641,639 L640.6,640.2 L641.3,639 L641.5,639.8 L643.7,640.8M627.8,635 L629,636.6 L628.9,636 L631.3,636.9M617.5,603.7 L619,603.5 L621.1,603.9 L621.3,602.6M612.9,610.4 L611.5,609.6 L613.1,607.9M610.2,623.5 L611,622.7 L608.9,622 L607.3,621.4 L608.6,619.6M623.2,631.3 L624.5,632.8 L625.4,631.2M617,617.6 L616.7,616.2 L615.6,616M616.5,568.4 L618.4,569.7 L618.8,568M612.8,604.5 L612,606.3 L609.9,605.6M616.1,584.7 L615.2,586 L615.2,584.2 L617.5,585M651.8,649.2 L650.7,650.5 L650.7,649.9 L650.7,651.2M614.6,626.1 L615.7,627.9 L613.8,626.1 L613,624.3 L614.4,624M648.8,644.4 L650,642.6 L648.1,643.6M645.1,642.8 L644,642.5 L642.7,642.3 L641.7,643 L641.8,645M613.6,624.6 L615.3,623.3 L615.2,622.6 L615.8,621.1M645.5,645.8 L647.7,645.4 L649.5,647.4 L647.6,648.4 L648.8,648.2M610.7,592.8 L608.3,593.6 L607.3,592.4 L605.6,594" fill="none" stroke="#333" stroke-width="0.75"/><path d="M668,193h2M673,192h3M686,194h2M697,193h2M712,197L716,200M717,203h3" stroke="#333" stroke-width="1.2"/></svg>
<div class="a" style="left:3px;top:663px;width:258px;height:22px;background:#fff;border:1px solid #a6a6a6;border-radius:3px"></div>
<svg style="left:11px;top:667px" width="14" height="14"><circle cx="5.5" cy="5.5" r="4.3" fill="none" stroke="#777" stroke-width="1.3"/><path d="M8.5 8.5L12.5 12.5" stroke="#777" stroke-width="1.6"/></svg>
<div class="t" style="left:30.4px;top:668.5px;font-size:11px;color:#7a7a7a;font-weight:normal;">Escreva para localizar (Ctrl+K)</div>
<div class="t" style="left:391.2px;top:668.9px;font-size:11px;color:#000;font-weight:normal;">Coordenada</div>
<div class="a" style="left:453px;top:663px;width:88px;height:22px;background:#fff;border:1px solid #b4b4b4;border-radius:2px"></div>
<div class="t" style="left:463.3px;top:668.9px;font-size:11px;color:#000;font-weight:normal;">-47,6°  -82,2°</div>
<div class="t" style="left:572.8px;top:668.9px;font-size:11px;color:#000;font-weight:normal;">Escala</div>
<div class="a" style="left:606px;top:663px;width:80px;height:22px;background:#fff;border:1px solid #b4b4b4;border-radius:2px"></div>
<div class="a" style="left:666px;top:664px;width:1px;height:20px;background:#d0d0d0"></div>
<div class="t" style="left:607.6px;top:668.9px;font-size:11px;color:#000;font-weight:normal;">l:46645020</div>
<svg style="left:670px;top:672px" width="12" height="6"><path d="M2 0L10 0L6 5Z" fill="#555"/></svg>
<div class="t" style="left:718px;top:668.9px;font-size:11px;color:#000;font-weight:normal;">Lupa</div>
<div class="a" style="left:745px;top:663px;width:83px;height:22px;background:#fff;border:1px solid #b4b4b4;border-radius:2px"></div>
<div class="t" style="left:751px;top:668.9px;font-size:11px;color:#000;font-weight:normal;">100%</div>
<div class="t" style="left:835.6px;top:668.9px;font-size:11px;color:#000;font-weight:normal;">Rotação</div>
<div class="a" style="left:885px;top:663px;width:83px;height:22px;background:#fff;border:1px solid #b4b4b4;border-radius:2px"></div>
<div class="t" style="left:889.8px;top:668.9px;font-size:11px;color:#000;font-weight:normal;">0,0 °</div>
<div class="a" style="left:813px;top:664px;width:1px;height:20px;background:#e0e0e0"></div>
<svg style="left:816px;top:666px" width="10" height="16"><path d="M1.5 6L5 2.5L8.5 6Z" fill="#666"/><path d="M1.5 10L5 13.5L8.5 10Z" fill="#666"/></svg>
<div class="a" style="left:953px;top:664px;width:1px;height:20px;background:#e0e0e0"></div>
<svg style="left:956px;top:666px" width="10" height="16"><path d="M1.5 6L5 2.5L8.5 6Z" fill="#666"/><path d="M1.5 10L5 13.5L8.5 10Z" fill="#666"/></svg>
<div class="a" style="left:974px;top:668px;width:14px;height:14px;background:#fff;border:1px solid #8a8a8a"></div>
<svg style="left:974px;top:668px" width="14" height="14"><path d="M3.5 7L6 10.5L10.5 3" fill="none" stroke="#000" stroke-width="1.7"/></svg>
<div class="t" style="left:992px;top:668.5px;font-size:11px;color:#000;font-weight:normal;">Renderizar</div>
<div class="t" style="left:1076.2px;top:668.5px;font-size:11px;color:#000;font-weight:normal;">EPSG:4674</div>
<svg style="left:544px;top:666px" width="18" height="18"><path d="M4 5C3 9 4 14 8 16C12 17 14 13 13 9L11 5C9 2 5 2 4 5Z" fill="#f4f4f4" stroke="#333" stroke-width="1.4"/><path d="M5 8L11 7M8 4V9" stroke="#333" stroke-width="1"/><circle cx="8" cy="12" r="2" fill="none" stroke="#555" stroke-width="1.2"/><path d="M13 3L16 1M13 5L17 4" stroke="#555" stroke-width="1"/></svg>
<svg style="left:697px;top:666px" width="15" height="17"><path d="M3.5 8V5.5A4 4 0 0 1 11.5 5.5V8" fill="none" stroke="#6a6a6a" stroke-width="1.8"/><rect x="1.5" y="7.5" width="12" height="8.5" rx="1.5" fill="#6a6a6a"/></svg>
<svg style="left:1059px;top:667px" width="16" height="15"><circle cx="7.5" cy="7.5" r="6.5" fill="none" stroke="#666" stroke-width="1"/><ellipse cx="7.5" cy="7.5" rx="3" ry="6.5" fill="none" stroke="#666" stroke-width=".9"/><path d="M1 7.5H14M2 4H13M2 11H13M7.5 1V14" stroke="#666" stroke-width=".9"/></svg>
<svg style="left:1151px;top:666px" width="19" height="17"><path d="M9.5 1C4.5 1 1 3.8 1 7.3C1 10 3 12.2 6 13.1L10 16L9.5 13.6C14.5 13.6 18 10.8 18 7.3C18 3.8 14.5 1 9.5 1Z" fill="#666"/></svg>
<svg style="left:1186px;top:675px" width="12" height="12"><rect x="9" y="1" width="1" height="1" fill="#bbb"/><rect x="6" y="4" width="1" height="1" fill="#bbb"/><rect x="9" y="4" width="1" height="1" fill="#bbb"/><rect x="3" y="7" width="1" height="1" fill="#bbb"/><rect x="6" y="7" width="1" height="1" fill="#bbb"/><rect x="9" y="7" width="1" height="1" fill="#bbb"/><rect x="0" y="10" width="1" height="1" fill="#bbb"/><rect x="3" y="10" width="1" height="1" fill="#bbb"/><rect x="6" y="10" width="1" height="1" fill="#bbb"/><rect x="9" y="10" width="1" height="1" fill="#bbb"/></svg></body></html>
